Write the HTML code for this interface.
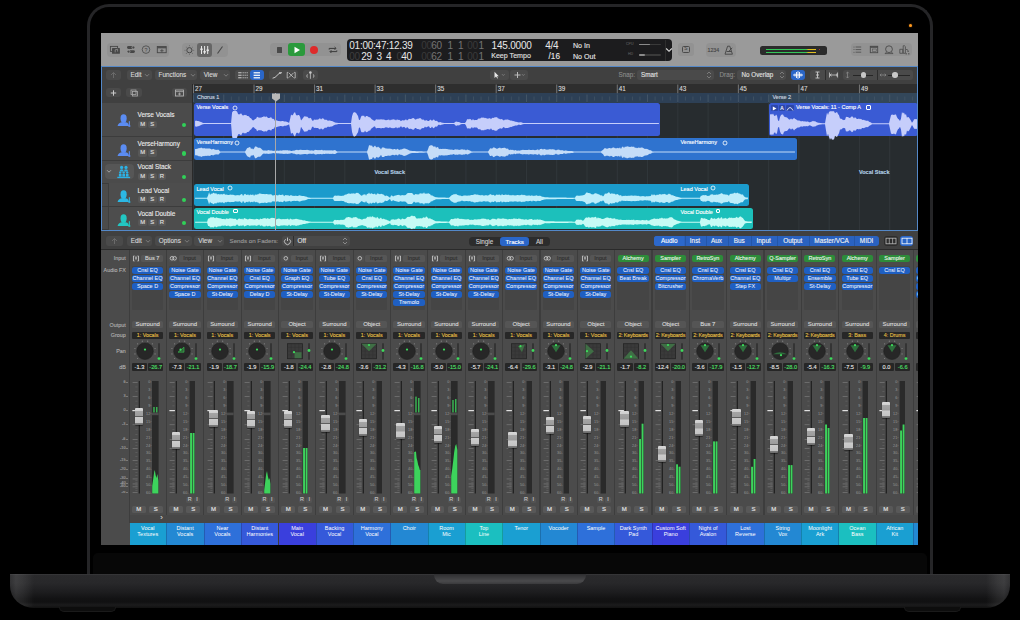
<!DOCTYPE html><html><head><meta charset="utf-8"><style>
*{margin:0;padding:0;box-sizing:border-box}
html,body{width:1020px;height:620px;overflow:hidden;background:#000;font-family:"Liberation Sans",sans-serif;position:relative}
.a{position:absolute;-webkit-text-stroke-width:.12px}
svg.a{overflow:visible}
</style></head><body>
<div class="a" style="left:10px;top:574px;width:1000px;height:34px;background:linear-gradient(180deg,#3c3c3e 0px,#2a2a2c 1.2px,#28282a 9px,#1d1d1f 18px,#121213 25px,#111112 28px,#1b1b1c 31px,#111 34px);border-radius:0 0 24px 24px/0 0 22px 22px;"></div>
<div class="a" style="left:10px;top:574px;width:1000px;height:34px;background:linear-gradient(90deg,rgba(255,255,255,.04) 0px,rgba(255,255,255,.1) 6px,rgba(255,255,255,.07) 13px,rgba(255,255,255,0) 24px,rgba(255,255,255,0) 976px,rgba(255,255,255,.07) 987px,rgba(255,255,255,.1) 994px,rgba(255,255,255,.04) 1000px);border-radius:0 0 24px 24px/0 0 22px 22px;"></div>
<div class="a" style="left:59px;top:607px;width:57px;height:5px;background:#0d0d0d;border-radius:0 0 6px 6px;border:1px solid #1a1a1a;border-top:none;"></div>
<div class="a" style="left:904px;top:607px;width:57px;height:5px;background:#0d0d0d;border-radius:0 0 6px 6px;border:1px solid #1a1a1a;border-top:none;"></div>
<div class="a" style="left:434px;top:574px;width:152px;height:10px;background:linear-gradient(180deg,#2e2e30,#4a4a4c 70%,#3a3a3c);border-radius:0 0 9px 9px;"></div>
<div class="a" style="left:87.2px;top:4.3px;width:845.6px;height:570px;background:#000;border:3.6px solid #252527;border-bottom:none;border-radius:22px 22px 0 0;"></div>
<div class="a" style="left:93px;top:553px;width:834px;height:21px;background:#070707;border-radius:5px 5px 0 0;"></div>
<div class="a" style="left:909px;top:23.7px;width:3.2px;height:3.2px;background:#ff9a1f;border-radius:50%;box-shadow:0 0 1.5px #a05a10;"></div>
<div class="a" style="left:0;top:0;width:918px;height:545px;overflow:hidden">
<div class="a" style="left:101px;top:33px;width:817px;height:512px;background:#3b3b3b;"></div>
<div class="a" style="left:101px;top:33px;width:817px;height:33px;background:#9a9a9a;"></div>
<div class="a" style="left:107px;top:43px;width:62px;height:13.8px;background:#929292;border-radius:4px;"></div>
<div class="a" style="left:181.7px;top:43px;width:46px;height:13.8px;background:#929292;border-radius:4px;"></div>
<div class="a" style="left:197.4px;top:43px;width:14.5px;height:13.5px;background:#666666;border-radius:3px;"></div>
<svg class="a" style="left:0;top:0" width="1020" height="70" viewBox="0 0 1020 70"><rect x="110.4" y="46.4" width="7.2" height="5" fill="none" stroke="#474747" stroke-width=".9"/><rect x="112" y="48" width="7.9" height="5.8" fill="#474747" rx=".6"/><path d="M115.2 52.4v-2.6l2.4-.6v2.4" fill="none" stroke="#a8a8a8" stroke-width=".6"/><rect x="127" y="46.1" width="7.9" height="2.8" rx="1.4" fill="#474747"/><rect x="127" y="50.2" width="7.9" height="2.8" rx="1.4" fill="#474747"/><circle cx="133.4" cy="47.5" r="1.5" fill="none" stroke="#9a9a9a" stroke-width=".8"/><circle cx="128.5" cy="51.6" r="1.5" fill="none" stroke="#9a9a9a" stroke-width=".8"/><circle cx="146" cy="49.6" r="3.8" fill="none" stroke="#474747" stroke-width=".8"/><text x="146" y="51.8" font-size="5.4" text-anchor="middle" fill="#474747" font-family="Liberation Sans">?</text><rect x="157.3" y="46.5" width="8.9" height="6.2" fill="none" stroke="#474747" stroke-width=".9"/><line x1="157.3" y1="47.7" x2="166.2" y2="47.7" stroke="#474747" stroke-width="1.2"/><path d="M160.2 50.7h3.4M161.9 49.1v3.2" stroke="#474747" stroke-width=".8"/><circle cx="189.4" cy="50.2" r="2.6" fill="none" stroke="#474747" stroke-width="1"/><circle cx="193.8" cy="50.2" r=".45" fill="#474747"/><circle cx="192.51" cy="53.31" r=".45" fill="#474747"/><circle cx="189.4" cy="54.6" r=".45" fill="#474747"/><circle cx="186.29" cy="53.31" r=".45" fill="#474747"/><circle cx="185" cy="50.2" r=".45" fill="#474747"/><circle cx="186.29" cy="47.09" r=".45" fill="#474747"/><circle cx="189.4" cy="45.8" r=".45" fill="#474747"/><circle cx="192.51" cy="47.09" r=".45" fill="#474747"/><line x1="201.5" y1="46" x2="201.5" y2="54" stroke="#e8e8e8" stroke-width="1"/><rect x="200.3" y="48.5" width="2.4" height="1.6" fill="#e8e8e8"/><line x1="204.6" y1="46" x2="204.6" y2="54" stroke="#e8e8e8" stroke-width="1"/><rect x="203.4" y="51" width="2.4" height="1.6" fill="#e8e8e8"/><line x1="207.7" y1="46" x2="207.7" y2="54" stroke="#e8e8e8" stroke-width="1"/><rect x="206.5" y="49.5" width="2.4" height="1.6" fill="#e8e8e8"/><line x1="217.5" y1="53.5" x2="222.5" y2="46.5" stroke="#474747" stroke-width="1.1"/></svg>
<div class="a" style="left:270.2px;top:43.3px;width:70.6px;height:13.2px;background:#929292;border-radius:4px;"></div>
<div class="a" style="left:276.8px;top:47.1px;width:5.6px;height:5.6px;background:#4a4a4a;border-radius:.5px;"></div>
<div class="a" style="left:288.4px;top:43.2px;width:16.6px;height:13px;background:#2a9a3c;border-radius:3px;"></div>
<svg class="a" style="left:293px;top:46px" width="8" height="8"><path d="M1.5 .8L7 4L1.5 7.2Z" fill="#fff"/></svg>
<div class="a" style="left:310.2px;top:45.6px;width:8.2px;height:8.2px;background:#de2a2a;border-radius:50%;"></div>
<svg class="a" style="left:328px;top:46px" width="10" height="8"><path d="M1.2 3.6V2.4h6.6M6.6 1L8 2.4L6.6 3.8M8.8 4.4v1.2H2.2M3.4 7L2 5.6L3.4 4.2" fill="none" stroke="#3a3a3a" stroke-width="1"/></svg>
<div class="a" style="left:346.9px;top:39.1px;width:325.1px;height:22px;background:#1c1c1e;border-radius:4px;"></div>
<div class="a" style="left:349.3px;top:40.9px;width:80px;height:10px;font-size:10px;color:#e8e8e8;font-weight:normal;text-align:left;line-height:10px;white-space:nowrap;letter-spacing:-0.25px;-webkit-text-stroke-width:0;">01:00:47:12.39</div>
<div class="a" style="left:349.3px;top:51.6px;width:80px;height:10px;font-size:10px;color:#3e3e3e;font-weight:normal;text-align:left;line-height:10px;white-space:nowrap;letter-spacing:-0.25px;-webkit-text-stroke-width:0;">00</div>
<div class="a" style="left:361.3px;top:51.6px;width:80px;height:10px;font-size:10px;color:#e8e8e8;font-weight:normal;text-align:left;line-height:10px;white-space:nowrap;letter-spacing:-0.25px;-webkit-text-stroke-width:0;">29</div>
<div class="a" style="left:376.4px;top:51.6px;width:80px;height:10px;font-size:10px;color:#e8e8e8;font-weight:normal;text-align:left;line-height:10px;white-space:nowrap;letter-spacing:-0.25px;-webkit-text-stroke-width:0;">3</div>
<div class="a" style="left:386px;top:51.6px;width:80px;height:10px;font-size:10px;color:#e8e8e8;font-weight:normal;text-align:left;line-height:10px;white-space:nowrap;letter-spacing:-0.25px;-webkit-text-stroke-width:0;">4</div>
<div class="a" style="left:396.6px;top:51.6px;width:80px;height:10px;font-size:10px;color:#3e3e3e;font-weight:normal;text-align:left;line-height:10px;white-space:nowrap;letter-spacing:-0.25px;-webkit-text-stroke-width:0;">0</div>
<div class="a" style="left:401.2px;top:51.6px;width:80px;height:10px;font-size:10px;color:#e8e8e8;font-weight:normal;text-align:left;line-height:10px;white-space:nowrap;letter-spacing:-0.25px;-webkit-text-stroke-width:0;">40</div>
<div class="a" style="left:421.3px;top:40.9px;width:80px;height:10px;font-size:10px;color:#3a3a3a;font-weight:normal;text-align:left;line-height:10px;white-space:nowrap;letter-spacing:-0.25px;-webkit-text-stroke-width:0;">00</div>
<div class="a" style="left:431.2px;top:40.9px;width:80px;height:10px;font-size:10px;color:#747474;font-weight:normal;text-align:left;line-height:10px;white-space:nowrap;letter-spacing:-0.25px;-webkit-text-stroke-width:0;">60</div>
<div class="a" style="left:447.6px;top:40.9px;width:80px;height:10px;font-size:10px;color:#747474;font-weight:normal;text-align:left;line-height:10px;white-space:nowrap;letter-spacing:-0.25px;-webkit-text-stroke-width:0;">1</div>
<div class="a" style="left:457.9px;top:40.9px;width:80px;height:10px;font-size:10px;color:#747474;font-weight:normal;text-align:left;line-height:10px;white-space:nowrap;letter-spacing:-0.25px;-webkit-text-stroke-width:0;">1</div>
<div class="a" style="left:467.2px;top:40.9px;width:80px;height:10px;font-size:10px;color:#3a3a3a;font-weight:normal;text-align:left;line-height:10px;white-space:nowrap;letter-spacing:-0.25px;-webkit-text-stroke-width:0;">00</div>
<div class="a" style="left:478.6px;top:40.9px;width:80px;height:10px;font-size:10px;color:#747474;font-weight:normal;text-align:left;line-height:10px;white-space:nowrap;letter-spacing:-0.25px;-webkit-text-stroke-width:0;">1</div>
<div class="a" style="left:421.3px;top:51.6px;width:80px;height:10px;font-size:10px;color:#3a3a3a;font-weight:normal;text-align:left;line-height:10px;white-space:nowrap;letter-spacing:-0.25px;-webkit-text-stroke-width:0;">00</div>
<div class="a" style="left:431.2px;top:51.6px;width:80px;height:10px;font-size:10px;color:#747474;font-weight:normal;text-align:left;line-height:10px;white-space:nowrap;letter-spacing:-0.25px;-webkit-text-stroke-width:0;">62</div>
<div class="a" style="left:447.6px;top:51.6px;width:80px;height:10px;font-size:10px;color:#747474;font-weight:normal;text-align:left;line-height:10px;white-space:nowrap;letter-spacing:-0.25px;-webkit-text-stroke-width:0;">1</div>
<div class="a" style="left:457.9px;top:51.6px;width:80px;height:10px;font-size:10px;color:#747474;font-weight:normal;text-align:left;line-height:10px;white-space:nowrap;letter-spacing:-0.25px;-webkit-text-stroke-width:0;">1</div>
<div class="a" style="left:467.2px;top:51.6px;width:80px;height:10px;font-size:10px;color:#3a3a3a;font-weight:normal;text-align:left;line-height:10px;white-space:nowrap;letter-spacing:-0.25px;-webkit-text-stroke-width:0;">00</div>
<div class="a" style="left:478.6px;top:51.6px;width:80px;height:10px;font-size:10px;color:#747474;font-weight:normal;text-align:left;line-height:10px;white-space:nowrap;letter-spacing:-0.25px;-webkit-text-stroke-width:0;">1</div>
<div class="a" style="left:491.6px;top:40.9px;width:80px;height:10px;font-size:10px;color:#e8e8e8;font-weight:normal;text-align:left;line-height:10px;white-space:nowrap;letter-spacing:-0.2px;-webkit-text-stroke-width:0;">145.0000</div>
<div class="a" style="left:491.2px;top:51.3px;width:42px;height:10px;font-size:7.1px;color:#e0e0e0;font-weight:normal;text-align:left;line-height:10px;white-space:nowrap;">Keep Tempo</div>
<div class="a" style="left:545.2px;top:40.9px;width:80px;height:10px;font-size:10px;color:#e8e8e8;font-weight:normal;text-align:left;line-height:10px;white-space:nowrap;letter-spacing:-0.25px;-webkit-text-stroke-width:0;">4/4</div>
<div class="a" style="left:548.6px;top:51.6px;width:16px;height:10px;font-size:8.2px;color:#e6e6e6;font-weight:normal;text-align:left;line-height:10px;white-space:nowrap;">/16</div>
<div class="a" style="left:573px;top:41.2px;width:40px;height:10px;font-size:7.1px;color:#e6e6e6;font-weight:normal;text-align:left;line-height:10px;white-space:nowrap;">No In</div>
<div class="a" style="left:573px;top:51.6px;width:40px;height:10px;font-size:7.1px;color:#e6e6e6;font-weight:normal;text-align:left;line-height:10px;white-space:nowrap;">No Out</div>
<div class="a" style="left:626px;top:40.8px;width:10px;height:6px;font-size:3.6px;color:#555;font-weight:normal;text-align:left;line-height:6px;white-space:nowrap;">CPU</div>
<div class="a" style="left:628px;top:51.2px;width:10px;height:6px;font-size:3.6px;color:#555;font-weight:normal;text-align:left;line-height:6px;white-space:nowrap;">HD</div>
<div class="a" style="left:639px;top:43.8px;width:22px;height:1.6px;background:#3a3a3a;border-radius:1px;"></div>
<div class="a" style="left:639px;top:43.8px;width:11px;height:1.6px;background:#8a8a8a;border-radius:1px;"></div>
<div class="a" style="left:639px;top:54.4px;width:22px;height:1.6px;background:#3a3a3a;border-radius:1px;"></div>
<div class="a" style="left:639px;top:54.4px;width:6px;height:1.6px;background:#8a8a8a;border-radius:1px;"></div>
<div class="a" style="left:664.5px;top:39.6px;width:1px;height:21px;background:#2e2e2e;"></div>
<svg class="a" style="left:665px;top:47px" width="8" height="6"><path d="M1.2 1.5L4 4.3L6.8 1.5" fill="none" stroke="#ddd" stroke-width="1.1"/></svg>
<div class="a" style="left:678px;top:42.8px;width:15.6px;height:13.2px;background:#929292;border-radius:3px;"></div>
<div class="a" style="left:681.6px;top:46.3px;width:8.4px;height:6.6px;border:.9px solid #4a4a4a;border-radius:1.5px;"></div>
<div class="a" style="left:681.6px;top:46.3px;width:8.4px;height:6.6px;font-size:4.8px;color:#4a4a4a;font-weight:normal;text-align:center;line-height:6.6px;white-space:nowrap;">S</div>
<div class="a" style="left:705.6px;top:43px;width:30.7px;height:13.5px;background:#929292;border-radius:4px;"></div>
<div class="a" style="left:707.6px;top:44px;width:14px;height:12px;font-size:5.3px;color:#444;font-weight:normal;text-align:left;line-height:12px;white-space:nowrap;letter-spacing:-.1px;">1234</div>
<svg class="a" style="left:724px;top:45px" width="11" height="11"><path d="M3.6 1.2h2.2L8.4 9.2H1Z" fill="none" stroke="#444" stroke-width=".9"/><path d="M2.6 6.5h4.4M4.7 6.5L8.2 2.8" stroke="#444" stroke-width=".9"/></svg>
<div class="a" style="left:760.2px;top:46.3px;width:66.7px;height:8.8px;background:#2b2b2b;border-radius:2.5px;"></div>
<div class="a" style="left:765.5px;top:48.7px;width:50px;height:1.5px;background:linear-gradient(90deg,#34c759 0,#34c759 80%,#e0c020 85%,#e0c020 100%);"></div>
<div class="a" style="left:765.5px;top:51.5px;width:50px;height:1.5px;background:linear-gradient(90deg,#34c759 0,#34c759 80%,#e0c020 85%,#e0c020 100%);"></div>
<div class="a" style="left:818.5px;top:48.7px;width:1.2px;height:1.5px;background:#a33;"></div>
<div class="a" style="left:850.8px;top:43.3px;width:61.2px;height:13px;background:#929292;border-radius:4px;"></div>
<svg class="a" style="left:850px;top:43px" width="64" height="14"><circle cx="4" cy="4" r=".5" fill="#4a4a4a"/><line x1="5.6" y1="4" x2="11.2" y2="4" stroke="#4a4a4a" stroke-width=".8"/><circle cx="4" cy="6.6" r=".5" fill="#4a4a4a"/><line x1="5.6" y1="6.6" x2="11.2" y2="6.6" stroke="#4a4a4a" stroke-width=".8"/><circle cx="4" cy="9.2" r=".5" fill="#4a4a4a"/><line x1="5.6" y1="9.2" x2="11.2" y2="9.2" stroke="#4a4a4a" stroke-width=".8"/><rect x="20.3" y="3.3" width="7.4" height="6.4" fill="none" stroke="#4a4a4a" stroke-width=".9"/><rect x="20.3" y="3.3" width="7.4" height="1.5" fill="#4a4a4a"/><rect x="22.6" y="6" width="3.6" height="2.4" fill="none" stroke="#4a4a4a" stroke-width=".5"/><circle cx="39" cy="6.2" r="3.4" fill="none" stroke="#4a4a4a" stroke-width=".9"/><path d="M34.8 10.6h8.4M36.4 9l-.9 1.6M41.6 9l.9 1.6" stroke="#4a4a4a" stroke-width=".8" fill="none"/><path d="M49.8 10.3V6.3h3v4ZM53.2 10.3V2.8q1.4-.6 2.2.8V10.3Z" fill="none" stroke="#4a4a4a" stroke-width=".8"/><path d="M56 6.3l2 .8" stroke="#4a4a4a" stroke-width=".8"/><rect x="57.4" y="7.6" width="1.4" height="1.2" fill="#4a4a4a"/><rect x="55.6" y="10.2" width="1.2" height="1.2" fill="#4a4a4a"/><rect x="58.2" y="10.2" width="1.2" height="1.2" fill="#4a4a4a"/></svg>
<div class="a" style="left:101px;top:66px;width:817px;height:165px;background:#262829;"></div>
<div class="a" style="left:101px;top:67px;width:817px;height:17px;background:#404040;"></div>
<div class="a" style="left:105.8px;top:70.2px;width:15.2px;height:9.8px;background:#4a4a4a;border-radius:3px;"></div>
<svg class="a" style="left:109px;top:71px" width="9" height="8"><path d="M4.5 7V1.5M2 4L4.5 1.5L7 4" fill="none" stroke="#6a6a6a" stroke-width="1"/></svg>
<div class="a" style="left:126.5px;top:70.2px;width:25.3px;height:9.8px;background:#4a4a4a;border-radius:3px;"></div><div class="a" style="left:130.5px;top:70.2px;width:15.3px;height:9.8px;font-size:6.4px;color:#d8d8d8;font-weight:normal;text-align:left;line-height:9.8px;white-space:nowrap;">Edit</div><svg class="a" style="left:144.3px;top:73.3px" width="6" height="5"><path d="M1 1.2L3 3.2L5 1.2" fill="none" stroke="#8a8a8a" stroke-width=".8"/></svg>
<div class="a" style="left:154.5px;top:70.2px;width:42.5px;height:9.8px;background:#4a4a4a;border-radius:3px;"></div><div class="a" style="left:158.5px;top:70.2px;width:32.5px;height:9.8px;font-size:6.4px;color:#d8d8d8;font-weight:normal;text-align:left;line-height:9.8px;white-space:nowrap;">Functions</div><svg class="a" style="left:189.5px;top:73.3px" width="6" height="5"><path d="M1 1.2L3 3.2L5 1.2" fill="none" stroke="#8a8a8a" stroke-width=".8"/></svg>
<div class="a" style="left:199.7px;top:70.2px;width:30.3px;height:9.8px;background:#4a4a4a;border-radius:3px;"></div><div class="a" style="left:203.7px;top:70.2px;width:20.3px;height:9.8px;font-size:6.4px;color:#d8d8d8;font-weight:normal;text-align:left;line-height:9.8px;white-space:nowrap;">View</div><svg class="a" style="left:222.5px;top:73.3px" width="6" height="5"><path d="M1 1.2L3 3.2L5 1.2" fill="none" stroke="#8a8a8a" stroke-width=".8"/></svg>
<div class="a" style="left:235px;top:70.2px;width:28.7px;height:9.8px;background:#4a4a4a;border-radius:3px;"></div>
<div class="a" style="left:249.6px;top:70.2px;width:14.1px;height:9.8px;background:#2a66c8;border-radius:3px;"></div>
<svg class="a" style="left:235px;top:70px" width="30" height="10"><rect x="3.2" y="2.2" width="3.4" height="1.1" fill="#c4c4c4"/><rect x="7.6" y="2.2" width="1.1" height="1.1" fill="#c4c4c4"/><rect x="9.6" y="2.2" width="1.1" height="1.1" fill="#c4c4c4"/><rect x="11.6" y="2.2" width="1.1" height="1.1" fill="#c4c4c4"/><rect x="3.2" y="4.7" width="3.4" height="1.1" fill="#c4c4c4"/><rect x="7.6" y="4.7" width="1.1" height="1.1" fill="#c4c4c4"/><rect x="9.6" y="4.7" width="1.1" height="1.1" fill="#c4c4c4"/><rect x="11.6" y="4.7" width="1.1" height="1.1" fill="#c4c4c4"/><rect x="3.2" y="7.2" width="3.4" height="1.1" fill="#c4c4c4"/><rect x="7.6" y="7.2" width="1.1" height="1.1" fill="#c4c4c4"/><rect x="9.6" y="7.2" width="1.1" height="1.1" fill="#c4c4c4"/><rect x="11.6" y="7.2" width="1.1" height="1.1" fill="#c4c4c4"/><rect x="18.6" y="2.2" width="6.4" height="1.2" fill="#fff"/><rect x="18.6" y="4.7" width="6.4" height="1.2" fill="#fff"/><rect x="18.6" y="7.2" width="6.4" height="1.2" fill="#fff"/></svg>
<div class="a" style="left:268.8px;top:70.2px;width:28.8px;height:9.8px;background:#4a4a4a;border-radius:3px;"></div>
<svg class="a" style="left:270px;top:70px" width="28" height="10"><path d="M2.6 8.2L5 7.4L9.2 3.4L12 2.6" fill="none" stroke="#c8c8c8" stroke-width="1"/><circle cx="10" cy="3" r=".9" fill="#c8c8c8"/><path d="M18.2 2.4h-1v5.6h1M24.2 2.4h1v5.6h-1M18.8 2.8l4.8 4.8M23.6 2.8l-4.8 4.8" fill="none" stroke="#c8c8c8" stroke-width=".8"/></svg>
<div class="a" style="left:303px;top:70.2px;width:14.8px;height:9.8px;background:#4a4a4a;border-radius:3px;"></div>
<svg class="a" style="left:303px;top:70px" width="15" height="10"><circle cx="7.4" cy="2.6" r="1.3" fill="#c8c8c8"/><path d="M7.4 3.6v5.2M4.4 4.4q-1.2 1.6 0 3.2M10.4 4.4q1.2 1.6 0 3.2" fill="none" stroke="#c8c8c8" stroke-width=".8"/></svg>
<div class="a" style="left:490px;top:70.2px;width:18.5px;height:9.8px;background:#4a4a4a;border-radius:3px;"></div>
<div class="a" style="left:510px;top:70.2px;width:18.3px;height:9.8px;background:#4a4a4a;border-radius:3px;"></div>
<svg class="a" style="left:490px;top:70px" width="40" height="10"><path d="M4.5 1.8L4.5 8L6 6.6L7.3 8.6L8 8.2L6.9 6.2L8.8 6.2Z" fill="#e8e8e8"/><path d="M12 4.2l1.3 1.3l1.3-1.3" fill="none" stroke="#888" stroke-width=".8"/><path d="M27.5 2v6M24.5 5h6" stroke="#bbb" stroke-width="1"/><path d="M32 4.2l1.3 1.3l1.3-1.3" fill="none" stroke="#888" stroke-width=".8"/></svg>
<div class="a" style="left:618.5px;top:70.2px;width:20px;height:9.8px;font-size:6.3px;color:#8a8a8a;font-weight:normal;text-align:left;line-height:9.8px;white-space:nowrap;">Snap:</div>
<div class="a" style="left:636.5px;top:70.2px;width:77px;height:9.8px;background:#4a4a4a;border-radius:3px;"></div>
<div class="a" style="left:641px;top:70.2px;width:40px;height:9.8px;font-size:6.3px;color:#e0e0e0;font-weight:normal;text-align:left;line-height:9.8px;white-space:nowrap;">Smart</div>
<svg class="a" style="left:706px;top:71px" width="6" height="8"><path d="M1 3L3 1L5 3M1 5L3 7L5 5" fill="none" stroke="#888" stroke-width=".8"/></svg>
<div class="a" style="left:719.5px;top:70.2px;width:20px;height:9.8px;font-size:6.3px;color:#8a8a8a;font-weight:normal;text-align:left;line-height:9.8px;white-space:nowrap;">Drag:</div>
<div class="a" style="left:737.3px;top:70.2px;width:48.7px;height:9.8px;background:#4a4a4a;border-radius:3px;"></div>
<div class="a" style="left:741.5px;top:70.2px;width:40px;height:9.8px;font-size:6.3px;color:#e0e0e0;font-weight:normal;text-align:left;line-height:9.8px;white-space:nowrap;">No Overlap</div>
<svg class="a" style="left:779px;top:71px" width="6" height="8"><path d="M1 3L3 1L5 3M1 5L3 7L5 5" fill="none" stroke="#888" stroke-width=".8"/></svg>
<div class="a" style="left:790.6px;top:70.2px;width:14.7px;height:9.8px;background:#2a66c8;border-radius:3px;"></div>
<svg class="a" style="left:791px;top:70px" width="14" height="10"><path d="M2 5h10M4 3.5v3M5.5 2v6M7 1.2v7.6M8.5 2v6M10 3.5v3" stroke="#fff" stroke-width=".9"/></svg>
<div class="a" style="left:810px;top:70.2px;width:29px;height:9.8px;background:#4a4a4a;border-radius:3px;"></div>
<div class="a" style="left:824.5px;top:70.2px;width:0.8px;height:9.8px;background:#2e2e2e;"></div>
<svg class="a" style="left:810px;top:70px" width="30" height="10"><path d="M5.5 2h4M5.5 8h4M7.5 2v6M6 5h3" fill="none" stroke="#ccc" stroke-width=".9"/><path d="M19.5 2.5v5M27.5 2.5v5M20 5h7M21.5 3.8L20 5l1.5 1.2M26 3.8L27.5 5L26 6.2" fill="none" stroke="#ccc" stroke-width=".8"/></svg>
<div class="a" style="left:843.3px;top:70.2px;width:70.2px;height:9.8px;background:#4a4a4a;border-radius:3px;"></div>
<div class="a" style="left:877px;top:70.2px;width:0.8px;height:9.8px;background:#2e2e2e;"></div>
<div class="a" style="left:853px;top:74.6px;width:20px;height:1px;background:#262626;"></div>
<div class="a" style="left:888px;top:74.6px;width:22px;height:1px;background:#262626;"></div>
<div class="a" style="left:860.5px;top:72.3px;width:5.6px;height:5.6px;background:#c8c8c8;border-radius:50%;"></div>
<div class="a" style="left:892px;top:72.3px;width:5.6px;height:5.6px;background:#c8c8c8;border-radius:50%;"></div>
<svg class="a" style="left:843px;top:70px" width="72" height="10"><path d="M4.5 2v6M3.2 3.3L4.5 2L5.8 3.3M3.2 6.7L4.5 8L5.8 6.7" fill="none" stroke="#888" stroke-width=".8"/><path d="M37 5h6M38.3 3.7L37 5L38.3 6.3M41.7 3.7L43 5L41.7 6.3" fill="none" stroke="#888" stroke-width=".8"/></svg>
<div class="a" style="left:102px;top:84px;width:91px;height:18.7px;background:#404040;"></div>
<div class="a" style="left:106.3px;top:88.2px;width:14.9px;height:8.8px;background:#4a4a4a;border-radius:3px;"></div>
<svg class="a" style="left:109px;top:89px" width="9" height="8"><path d="M4.5 1.3v5.4M1.8 4h5.4" stroke="#ccc" stroke-width="1"/></svg>
<div class="a" style="left:126.4px;top:88.2px;width:15.2px;height:8.8px;background:#4a4a4a;border-radius:3px;"></div>
<svg class="a" style="left:129px;top:89px" width="10" height="8"><rect x="2" y="1" width="5" height="4.5" fill="none" stroke="#aaa" stroke-width=".8"/><rect x="3.5" y="2.5" width="5" height="4.5" fill="none" stroke="#aaa" stroke-width=".8"/></svg>
<div class="a" style="left:172.2px;top:88.2px;width:14.8px;height:8.8px;background:#4a4a4a;border-radius:3px;"></div>
<svg class="a" style="left:174px;top:89px" width="11" height="8"><rect x="1.5" y="1" width="8" height="6" fill="none" stroke="#bbb" stroke-width=".8"/><path d="M1.5 2.6h8M5.5 3.5v3M4 5h3" stroke="#bbb" stroke-width=".7"/></svg>
<div class="a" style="left:102px;top:102.7px;width:91px;height:127.3px;background:#4b4b4b;"></div>
<div class="a" style="left:102px;top:136.2px;width:91px;height:0.8px;background:#3c3c3c;"></div>
<svg class="a" style="left:116.5px;top:113.2px" width="15" height="15"><g fill="#5b8cf2"><ellipse cx="6.6" cy="5.4" rx="3.1" ry="4.2"/><path d="M.6 12.9C1 10.2 3.4 9 6.6 9C9.8 9 11.6 10 12 12.9Z"/><rect x="11.8" y="8.2" width="1.1" height="5.4"/><rect x="11.3" y="12.4" width="2.1" height="1.2"/></g></svg>
<div class="a" style="left:137.5px;top:111.2px;width:50px;height:8px;font-size:6.5px;color:#ececec;font-weight:normal;text-align:left;line-height:8px;white-space:nowrap;letter-spacing:-.05px;-webkit-text-stroke:.1px #ececec;">Verse Vocals</div>
<div class="a" style="left:138.2px;top:120.6px;width:8.8px;height:7.2px;background:#575757;border-radius:2px;"></div>
<div class="a" style="left:138.2px;top:120.6px;width:8.8px;height:7.2px;font-size:5.9px;color:#e0e0e0;font-weight:normal;text-align:center;line-height:7.2px;white-space:nowrap;-webkit-text-stroke:.12px #e0e0e0;">M</div>
<div class="a" style="left:147.9px;top:120.6px;width:8.8px;height:7.2px;background:#575757;border-radius:2px;"></div>
<div class="a" style="left:147.9px;top:120.6px;width:8.8px;height:7.2px;font-size:5.9px;color:#e0e0e0;font-weight:normal;text-align:center;line-height:7.2px;white-space:nowrap;-webkit-text-stroke:.12px #e0e0e0;">S</div>
<div class="a" style="left:182.2px;top:122.6px;width:4.2px;height:4.2px;background:#30d158;border-radius:50%;"></div>
<div class="a" style="left:102px;top:159.6px;width:91px;height:0.8px;background:#3c3c3c;"></div>
<svg class="a" style="left:116.5px;top:143px" width="15" height="15"><g fill="#5b8cf2"><ellipse cx="6.6" cy="5.4" rx="3.1" ry="4.2"/><path d="M.6 12.9C1 10.2 3.4 9 6.6 9C9.8 9 11.6 10 12 12.9Z"/><rect x="11.8" y="8.2" width="1.1" height="5.4"/><rect x="11.3" y="12.4" width="2.1" height="1.2"/></g></svg>
<div class="a" style="left:137.5px;top:140px;width:50px;height:8px;font-size:6.5px;color:#ececec;font-weight:normal;text-align:left;line-height:8px;white-space:nowrap;letter-spacing:-.05px;-webkit-text-stroke:.1px #ececec;">VerseHarmony</div>
<div class="a" style="left:138.2px;top:149.4px;width:8.8px;height:7.2px;background:#575757;border-radius:2px;"></div>
<div class="a" style="left:138.2px;top:149.4px;width:8.8px;height:7.2px;font-size:5.9px;color:#e0e0e0;font-weight:normal;text-align:center;line-height:7.2px;white-space:nowrap;-webkit-text-stroke:.12px #e0e0e0;">M</div>
<div class="a" style="left:147.9px;top:149.4px;width:8.8px;height:7.2px;background:#575757;border-radius:2px;"></div>
<div class="a" style="left:147.9px;top:149.4px;width:8.8px;height:7.2px;font-size:5.9px;color:#e0e0e0;font-weight:normal;text-align:center;line-height:7.2px;white-space:nowrap;-webkit-text-stroke:.12px #e0e0e0;">S</div>
<div class="a" style="left:182.2px;top:151.4px;width:4.2px;height:4.2px;background:#30d158;border-radius:50%;"></div>
<div class="a" style="left:102px;top:182.7px;width:91px;height:0.8px;background:#3c3c3c;"></div>
<div class="a" style="left:105.2px;top:164.1px;width:28.5px;height:14.8px;background:#565656;border-radius:4px;"></div>
<svg class="a" style="left:106px;top:169px" width="6" height="5"><path d="M1 1.2L3 3.2L5 1.2" fill="none" stroke="#aaa" stroke-width=".9"/></svg>
<svg class="a" style="left:117px;top:165px" width="14" height="14"><g fill="#2cb2e6"><circle cx="4.6" cy="2.4" r="1.6"/><circle cx="9" cy="2.4" r="1.6"/><path d="M2.6 6.6Q2.6 4.3 4.6 4.3T6.6 6.6Z"/><path d="M7 6.6Q7 4.3 9 4.3T11 6.6Z"/><circle cx="3.2" cy="7.6" r="1.2"/><circle cx="6.7" cy="7.6" r="1.2"/><circle cx="10.2" cy="7.6" r="1.2"/><rect x="1.9" y="9" width="2.6" height="2.6"/><rect x="5.4" y="9" width="2.6" height="2.6"/><rect x="8.9" y="9" width="2.6" height="2.6"/><rect x="0.3" y="11.8" width="12.8" height="1.3"/></g></svg>
<div class="a" style="left:137.5px;top:163.4px;width:50px;height:8px;font-size:6.5px;color:#ececec;font-weight:normal;text-align:left;line-height:8px;white-space:nowrap;letter-spacing:-.05px;-webkit-text-stroke:.1px #ececec;">Vocal Stack</div>
<div class="a" style="left:138.2px;top:172.8px;width:8.8px;height:7.2px;background:#575757;border-radius:2px;"></div>
<div class="a" style="left:138.2px;top:172.8px;width:8.8px;height:7.2px;font-size:5.9px;color:#e0e0e0;font-weight:normal;text-align:center;line-height:7.2px;white-space:nowrap;-webkit-text-stroke:.12px #e0e0e0;">M</div>
<div class="a" style="left:147.9px;top:172.8px;width:8.8px;height:7.2px;background:#575757;border-radius:2px;"></div>
<div class="a" style="left:147.9px;top:172.8px;width:8.8px;height:7.2px;font-size:5.9px;color:#e0e0e0;font-weight:normal;text-align:center;line-height:7.2px;white-space:nowrap;-webkit-text-stroke:.12px #e0e0e0;">S</div>
<div class="a" style="left:157.6px;top:172.8px;width:8.8px;height:7.2px;background:#575757;border-radius:2px;"></div>
<div class="a" style="left:157.6px;top:172.8px;width:8.8px;height:7.2px;font-size:5.9px;color:#e0e0e0;font-weight:normal;text-align:center;line-height:7.2px;white-space:nowrap;-webkit-text-stroke:.12px #e0e0e0;">R</div>
<div class="a" style="left:182.2px;top:174.8px;width:4.2px;height:4.2px;background:#30d158;border-radius:50%;"></div>
<div class="a" style="left:102px;top:205.9px;width:91px;height:0.8px;background:#3c3c3c;"></div>
<div class="a" style="left:107.6px;top:183.3px;width:84.4px;height:23.2px;background:#4d4d4d;border-left:1px solid #3e3e3e;"></div>
<svg class="a" style="left:116.5px;top:189.4px" width="15" height="15"><g fill="#2cb8e4"><ellipse cx="6.6" cy="5.4" rx="3.1" ry="4.2"/><path d="M.6 12.9C1 10.2 3.4 9 6.6 9C9.8 9 11.6 10 12 12.9Z"/><rect x="11.8" y="8.2" width="1.1" height="5.4"/><rect x="11.3" y="12.4" width="2.1" height="1.2"/></g></svg>
<div class="a" style="left:137.5px;top:186.5px;width:50px;height:8px;font-size:6.5px;color:#ececec;font-weight:normal;text-align:left;line-height:8px;white-space:nowrap;letter-spacing:-.05px;-webkit-text-stroke:.1px #ececec;">Lead Vocal</div>
<div class="a" style="left:138.2px;top:195.9px;width:8.8px;height:7.2px;background:#575757;border-radius:2px;"></div>
<div class="a" style="left:138.2px;top:195.9px;width:8.8px;height:7.2px;font-size:5.9px;color:#e0e0e0;font-weight:normal;text-align:center;line-height:7.2px;white-space:nowrap;-webkit-text-stroke:.12px #e0e0e0;">M</div>
<div class="a" style="left:147.9px;top:195.9px;width:8.8px;height:7.2px;background:#575757;border-radius:2px;"></div>
<div class="a" style="left:147.9px;top:195.9px;width:8.8px;height:7.2px;font-size:5.9px;color:#e0e0e0;font-weight:normal;text-align:center;line-height:7.2px;white-space:nowrap;-webkit-text-stroke:.12px #e0e0e0;">S</div>
<div class="a" style="left:157.6px;top:195.9px;width:8.8px;height:7.2px;background:#575757;border-radius:2px;"></div>
<div class="a" style="left:157.6px;top:195.9px;width:8.8px;height:7.2px;font-size:5.9px;color:#e0e0e0;font-weight:normal;text-align:center;line-height:7.2px;white-space:nowrap;-webkit-text-stroke:.12px #e0e0e0;">R</div>
<div class="a" style="left:182.2px;top:197.9px;width:4.2px;height:4.2px;background:#30d158;border-radius:50%;"></div>
<div class="a" style="left:102px;top:229.2px;width:91px;height:0.8px;background:#3c3c3c;"></div>
<div class="a" style="left:107.6px;top:206.5px;width:84.4px;height:23.3px;background:#4d4d4d;border-left:1px solid #3e3e3e;"></div>
<svg class="a" style="left:116.5px;top:212.65px" width="15" height="15"><g fill="#22c6c2"><ellipse cx="6.6" cy="5.4" rx="3.1" ry="4.2"/><path d="M.6 12.9C1 10.2 3.4 9 6.6 9C9.8 9 11.6 10 12 12.9Z"/><rect x="11.8" y="8.2" width="1.1" height="5.4"/><rect x="11.3" y="12.4" width="2.1" height="1.2"/></g></svg>
<div class="a" style="left:137.5px;top:209.7px;width:50px;height:8px;font-size:6.5px;color:#ececec;font-weight:normal;text-align:left;line-height:8px;white-space:nowrap;letter-spacing:-.05px;-webkit-text-stroke:.1px #ececec;">Vocal Double</div>
<div class="a" style="left:138.2px;top:219.1px;width:8.8px;height:7.2px;background:#575757;border-radius:2px;"></div>
<div class="a" style="left:138.2px;top:219.1px;width:8.8px;height:7.2px;font-size:5.9px;color:#e0e0e0;font-weight:normal;text-align:center;line-height:7.2px;white-space:nowrap;-webkit-text-stroke:.12px #e0e0e0;">M</div>
<div class="a" style="left:147.9px;top:219.1px;width:8.8px;height:7.2px;background:#575757;border-radius:2px;"></div>
<div class="a" style="left:147.9px;top:219.1px;width:8.8px;height:7.2px;font-size:5.9px;color:#e0e0e0;font-weight:normal;text-align:center;line-height:7.2px;white-space:nowrap;-webkit-text-stroke:.12px #e0e0e0;">S</div>
<div class="a" style="left:157.6px;top:219.1px;width:8.8px;height:7.2px;background:#575757;border-radius:2px;"></div>
<div class="a" style="left:157.6px;top:219.1px;width:8.8px;height:7.2px;font-size:5.9px;color:#e0e0e0;font-weight:normal;text-align:center;line-height:7.2px;white-space:nowrap;-webkit-text-stroke:.12px #e0e0e0;">R</div>
<div class="a" style="left:182.2px;top:221.1px;width:4.2px;height:4.2px;background:#30d158;border-radius:50%;"></div>
<div class="a" style="left:192px;top:84px;width:0.8px;height:146px;background:#2a2a2a;"></div>
<div class="a" style="left:192.8px;top:84px;width:725.2px;height:8.6px;background:#2e2e2e;"></div>
<div class="a" style="left:192.8px;top:92.6px;width:725.2px;height:10.1px;background:#2d4056;"></div>
<div class="a" style="left:769px;top:93.3px;width:149px;height:9.4px;background:#33475a;border-radius:2px 0 0 0;"></div>
<div class="a" style="left:192.8px;top:102.7px;width:725.2px;height:127.5px;background:#272c2f;"></div>
<svg class="a" style="left:0;top:0" width="1020" height="235"><line x1="193.5" y1="102.7" x2="193.5" y2="230" stroke="#31373b" stroke-width="1"/><line x1="193.5" y1="84.5" x2="193.5" y2="93.3" stroke="#8a8a8a" stroke-width=".8"/><line x1="201.07" y1="96.5" x2="201.07" y2="100.5" stroke="#4a5a6a" stroke-width=".6"/><line x1="208.63" y1="96.5" x2="208.63" y2="100.5" stroke="#4a5a6a" stroke-width=".6"/><line x1="216.2" y1="96.5" x2="216.2" y2="100.5" stroke="#4a5a6a" stroke-width=".6"/><line x1="193.5" y1="94.5" x2="193.5" y2="102" stroke="#4e5e6e" stroke-width=".7"/><line x1="223.77" y1="102.7" x2="223.77" y2="230" stroke="#31373b" stroke-width="1"/><line x1="231.34" y1="96.5" x2="231.34" y2="100.5" stroke="#4a5a6a" stroke-width=".6"/><line x1="238.91" y1="96.5" x2="238.91" y2="100.5" stroke="#4a5a6a" stroke-width=".6"/><line x1="246.47" y1="96.5" x2="246.47" y2="100.5" stroke="#4a5a6a" stroke-width=".6"/><line x1="223.77" y1="94.5" x2="223.77" y2="102" stroke="#4e5e6e" stroke-width=".7"/><line x1="254.04" y1="102.7" x2="254.04" y2="230" stroke="#31373b" stroke-width="1"/><line x1="254.04" y1="84.5" x2="254.04" y2="93.3" stroke="#8a8a8a" stroke-width=".8"/><line x1="261.61" y1="96.5" x2="261.61" y2="100.5" stroke="#4a5a6a" stroke-width=".6"/><line x1="269.18" y1="96.5" x2="269.18" y2="100.5" stroke="#4a5a6a" stroke-width=".6"/><line x1="276.74" y1="96.5" x2="276.74" y2="100.5" stroke="#4a5a6a" stroke-width=".6"/><line x1="254.04" y1="94.5" x2="254.04" y2="102" stroke="#4e5e6e" stroke-width=".7"/><line x1="284.31" y1="102.7" x2="284.31" y2="230" stroke="#31373b" stroke-width="1"/><line x1="291.88" y1="96.5" x2="291.88" y2="100.5" stroke="#4a5a6a" stroke-width=".6"/><line x1="299.44" y1="96.5" x2="299.44" y2="100.5" stroke="#4a5a6a" stroke-width=".6"/><line x1="307.01" y1="96.5" x2="307.01" y2="100.5" stroke="#4a5a6a" stroke-width=".6"/><line x1="284.31" y1="94.5" x2="284.31" y2="102" stroke="#4e5e6e" stroke-width=".7"/><line x1="314.58" y1="102.7" x2="314.58" y2="230" stroke="#31373b" stroke-width="1"/><line x1="314.58" y1="84.5" x2="314.58" y2="93.3" stroke="#8a8a8a" stroke-width=".8"/><line x1="322.15" y1="96.5" x2="322.15" y2="100.5" stroke="#4a5a6a" stroke-width=".6"/><line x1="329.71" y1="96.5" x2="329.71" y2="100.5" stroke="#4a5a6a" stroke-width=".6"/><line x1="337.28" y1="96.5" x2="337.28" y2="100.5" stroke="#4a5a6a" stroke-width=".6"/><line x1="314.58" y1="94.5" x2="314.58" y2="102" stroke="#4e5e6e" stroke-width=".7"/><line x1="344.85" y1="102.7" x2="344.85" y2="230" stroke="#31373b" stroke-width="1"/><line x1="352.42" y1="96.5" x2="352.42" y2="100.5" stroke="#4a5a6a" stroke-width=".6"/><line x1="359.99" y1="96.5" x2="359.99" y2="100.5" stroke="#4a5a6a" stroke-width=".6"/><line x1="367.55" y1="96.5" x2="367.55" y2="100.5" stroke="#4a5a6a" stroke-width=".6"/><line x1="344.85" y1="94.5" x2="344.85" y2="102" stroke="#4e5e6e" stroke-width=".7"/><line x1="375.12" y1="102.7" x2="375.12" y2="230" stroke="#31373b" stroke-width="1"/><line x1="375.12" y1="84.5" x2="375.12" y2="93.3" stroke="#8a8a8a" stroke-width=".8"/><line x1="382.69" y1="96.5" x2="382.69" y2="100.5" stroke="#4a5a6a" stroke-width=".6"/><line x1="390.25" y1="96.5" x2="390.25" y2="100.5" stroke="#4a5a6a" stroke-width=".6"/><line x1="397.82" y1="96.5" x2="397.82" y2="100.5" stroke="#4a5a6a" stroke-width=".6"/><line x1="375.12" y1="94.5" x2="375.12" y2="102" stroke="#4e5e6e" stroke-width=".7"/><line x1="405.39" y1="102.7" x2="405.39" y2="230" stroke="#31373b" stroke-width="1"/><line x1="412.96" y1="96.5" x2="412.96" y2="100.5" stroke="#4a5a6a" stroke-width=".6"/><line x1="420.52" y1="96.5" x2="420.52" y2="100.5" stroke="#4a5a6a" stroke-width=".6"/><line x1="428.09" y1="96.5" x2="428.09" y2="100.5" stroke="#4a5a6a" stroke-width=".6"/><line x1="405.39" y1="94.5" x2="405.39" y2="102" stroke="#4e5e6e" stroke-width=".7"/><line x1="435.66" y1="102.7" x2="435.66" y2="230" stroke="#31373b" stroke-width="1"/><line x1="435.66" y1="84.5" x2="435.66" y2="93.3" stroke="#8a8a8a" stroke-width=".8"/><line x1="443.23" y1="96.5" x2="443.23" y2="100.5" stroke="#4a5a6a" stroke-width=".6"/><line x1="450.79" y1="96.5" x2="450.79" y2="100.5" stroke="#4a5a6a" stroke-width=".6"/><line x1="458.36" y1="96.5" x2="458.36" y2="100.5" stroke="#4a5a6a" stroke-width=".6"/><line x1="435.66" y1="94.5" x2="435.66" y2="102" stroke="#4e5e6e" stroke-width=".7"/><line x1="465.93" y1="102.7" x2="465.93" y2="230" stroke="#31373b" stroke-width="1"/><line x1="473.5" y1="96.5" x2="473.5" y2="100.5" stroke="#4a5a6a" stroke-width=".6"/><line x1="481.06" y1="96.5" x2="481.06" y2="100.5" stroke="#4a5a6a" stroke-width=".6"/><line x1="488.63" y1="96.5" x2="488.63" y2="100.5" stroke="#4a5a6a" stroke-width=".6"/><line x1="465.93" y1="94.5" x2="465.93" y2="102" stroke="#4e5e6e" stroke-width=".7"/><line x1="496.2" y1="102.7" x2="496.2" y2="230" stroke="#31373b" stroke-width="1"/><line x1="496.2" y1="84.5" x2="496.2" y2="93.3" stroke="#8a8a8a" stroke-width=".8"/><line x1="503.77" y1="96.5" x2="503.77" y2="100.5" stroke="#4a5a6a" stroke-width=".6"/><line x1="511.33" y1="96.5" x2="511.33" y2="100.5" stroke="#4a5a6a" stroke-width=".6"/><line x1="518.9" y1="96.5" x2="518.9" y2="100.5" stroke="#4a5a6a" stroke-width=".6"/><line x1="496.2" y1="94.5" x2="496.2" y2="102" stroke="#4e5e6e" stroke-width=".7"/><line x1="526.47" y1="102.7" x2="526.47" y2="230" stroke="#31373b" stroke-width="1"/><line x1="534.04" y1="96.5" x2="534.04" y2="100.5" stroke="#4a5a6a" stroke-width=".6"/><line x1="541.61" y1="96.5" x2="541.61" y2="100.5" stroke="#4a5a6a" stroke-width=".6"/><line x1="549.17" y1="96.5" x2="549.17" y2="100.5" stroke="#4a5a6a" stroke-width=".6"/><line x1="526.47" y1="94.5" x2="526.47" y2="102" stroke="#4e5e6e" stroke-width=".7"/><line x1="556.74" y1="102.7" x2="556.74" y2="230" stroke="#31373b" stroke-width="1"/><line x1="556.74" y1="84.5" x2="556.74" y2="93.3" stroke="#8a8a8a" stroke-width=".8"/><line x1="564.31" y1="96.5" x2="564.31" y2="100.5" stroke="#4a5a6a" stroke-width=".6"/><line x1="571.88" y1="96.5" x2="571.88" y2="100.5" stroke="#4a5a6a" stroke-width=".6"/><line x1="579.44" y1="96.5" x2="579.44" y2="100.5" stroke="#4a5a6a" stroke-width=".6"/><line x1="556.74" y1="94.5" x2="556.74" y2="102" stroke="#4e5e6e" stroke-width=".7"/><line x1="587.01" y1="102.7" x2="587.01" y2="230" stroke="#31373b" stroke-width="1"/><line x1="594.58" y1="96.5" x2="594.58" y2="100.5" stroke="#4a5a6a" stroke-width=".6"/><line x1="602.14" y1="96.5" x2="602.14" y2="100.5" stroke="#4a5a6a" stroke-width=".6"/><line x1="609.71" y1="96.5" x2="609.71" y2="100.5" stroke="#4a5a6a" stroke-width=".6"/><line x1="587.01" y1="94.5" x2="587.01" y2="102" stroke="#4e5e6e" stroke-width=".7"/><line x1="617.28" y1="102.7" x2="617.28" y2="230" stroke="#31373b" stroke-width="1"/><line x1="617.28" y1="84.5" x2="617.28" y2="93.3" stroke="#8a8a8a" stroke-width=".8"/><line x1="624.85" y1="96.5" x2="624.85" y2="100.5" stroke="#4a5a6a" stroke-width=".6"/><line x1="632.41" y1="96.5" x2="632.41" y2="100.5" stroke="#4a5a6a" stroke-width=".6"/><line x1="639.98" y1="96.5" x2="639.98" y2="100.5" stroke="#4a5a6a" stroke-width=".6"/><line x1="617.28" y1="94.5" x2="617.28" y2="102" stroke="#4e5e6e" stroke-width=".7"/><line x1="647.55" y1="102.7" x2="647.55" y2="230" stroke="#31373b" stroke-width="1"/><line x1="655.12" y1="96.5" x2="655.12" y2="100.5" stroke="#4a5a6a" stroke-width=".6"/><line x1="662.68" y1="96.5" x2="662.68" y2="100.5" stroke="#4a5a6a" stroke-width=".6"/><line x1="670.25" y1="96.5" x2="670.25" y2="100.5" stroke="#4a5a6a" stroke-width=".6"/><line x1="647.55" y1="94.5" x2="647.55" y2="102" stroke="#4e5e6e" stroke-width=".7"/><line x1="677.82" y1="102.7" x2="677.82" y2="230" stroke="#31373b" stroke-width="1"/><line x1="677.82" y1="84.5" x2="677.82" y2="93.3" stroke="#8a8a8a" stroke-width=".8"/><line x1="685.39" y1="96.5" x2="685.39" y2="100.5" stroke="#4a5a6a" stroke-width=".6"/><line x1="692.95" y1="96.5" x2="692.95" y2="100.5" stroke="#4a5a6a" stroke-width=".6"/><line x1="700.52" y1="96.5" x2="700.52" y2="100.5" stroke="#4a5a6a" stroke-width=".6"/><line x1="677.82" y1="94.5" x2="677.82" y2="102" stroke="#4e5e6e" stroke-width=".7"/><line x1="708.09" y1="102.7" x2="708.09" y2="230" stroke="#31373b" stroke-width="1"/><line x1="715.66" y1="96.5" x2="715.66" y2="100.5" stroke="#4a5a6a" stroke-width=".6"/><line x1="723.23" y1="96.5" x2="723.23" y2="100.5" stroke="#4a5a6a" stroke-width=".6"/><line x1="730.79" y1="96.5" x2="730.79" y2="100.5" stroke="#4a5a6a" stroke-width=".6"/><line x1="708.09" y1="94.5" x2="708.09" y2="102" stroke="#4e5e6e" stroke-width=".7"/><line x1="738.36" y1="102.7" x2="738.36" y2="230" stroke="#31373b" stroke-width="1"/><line x1="738.36" y1="84.5" x2="738.36" y2="93.3" stroke="#8a8a8a" stroke-width=".8"/><line x1="745.93" y1="96.5" x2="745.93" y2="100.5" stroke="#4a5a6a" stroke-width=".6"/><line x1="753.5" y1="96.5" x2="753.5" y2="100.5" stroke="#4a5a6a" stroke-width=".6"/><line x1="761.06" y1="96.5" x2="761.06" y2="100.5" stroke="#4a5a6a" stroke-width=".6"/><line x1="738.36" y1="94.5" x2="738.36" y2="102" stroke="#4e5e6e" stroke-width=".7"/><line x1="768.63" y1="102.7" x2="768.63" y2="230" stroke="#31373b" stroke-width="1"/><line x1="776.2" y1="96.5" x2="776.2" y2="100.5" stroke="#4a5a6a" stroke-width=".6"/><line x1="783.76" y1="96.5" x2="783.76" y2="100.5" stroke="#4a5a6a" stroke-width=".6"/><line x1="791.33" y1="96.5" x2="791.33" y2="100.5" stroke="#4a5a6a" stroke-width=".6"/><line x1="768.63" y1="94.5" x2="768.63" y2="102" stroke="#4e5e6e" stroke-width=".7"/><line x1="798.9" y1="102.7" x2="798.9" y2="230" stroke="#31373b" stroke-width="1"/><line x1="798.9" y1="84.5" x2="798.9" y2="93.3" stroke="#8a8a8a" stroke-width=".8"/><line x1="806.47" y1="96.5" x2="806.47" y2="100.5" stroke="#4a5a6a" stroke-width=".6"/><line x1="814.03" y1="96.5" x2="814.03" y2="100.5" stroke="#4a5a6a" stroke-width=".6"/><line x1="821.6" y1="96.5" x2="821.6" y2="100.5" stroke="#4a5a6a" stroke-width=".6"/><line x1="798.9" y1="94.5" x2="798.9" y2="102" stroke="#4e5e6e" stroke-width=".7"/><line x1="829.17" y1="102.7" x2="829.17" y2="230" stroke="#31373b" stroke-width="1"/><line x1="836.74" y1="96.5" x2="836.74" y2="100.5" stroke="#4a5a6a" stroke-width=".6"/><line x1="844.3" y1="96.5" x2="844.3" y2="100.5" stroke="#4a5a6a" stroke-width=".6"/><line x1="851.87" y1="96.5" x2="851.87" y2="100.5" stroke="#4a5a6a" stroke-width=".6"/><line x1="829.17" y1="94.5" x2="829.17" y2="102" stroke="#4e5e6e" stroke-width=".7"/><line x1="859.44" y1="102.7" x2="859.44" y2="230" stroke="#31373b" stroke-width="1"/><line x1="859.44" y1="84.5" x2="859.44" y2="93.3" stroke="#8a8a8a" stroke-width=".8"/><line x1="867.01" y1="96.5" x2="867.01" y2="100.5" stroke="#4a5a6a" stroke-width=".6"/><line x1="874.57" y1="96.5" x2="874.57" y2="100.5" stroke="#4a5a6a" stroke-width=".6"/><line x1="882.14" y1="96.5" x2="882.14" y2="100.5" stroke="#4a5a6a" stroke-width=".6"/><line x1="859.44" y1="94.5" x2="859.44" y2="102" stroke="#4e5e6e" stroke-width=".7"/><line x1="889.71" y1="102.7" x2="889.71" y2="230" stroke="#31373b" stroke-width="1"/><line x1="897.28" y1="96.5" x2="897.28" y2="100.5" stroke="#4a5a6a" stroke-width=".6"/><line x1="904.85" y1="96.5" x2="904.85" y2="100.5" stroke="#4a5a6a" stroke-width=".6"/><line x1="912.41" y1="96.5" x2="912.41" y2="100.5" stroke="#4a5a6a" stroke-width=".6"/><line x1="889.71" y1="94.5" x2="889.71" y2="102" stroke="#4e5e6e" stroke-width=".7"/></svg>
<div class="a" style="left:195px;top:84px;width:20px;height:9.3px;font-size:6.3px;color:#d8d8d8;font-weight:normal;text-align:left;line-height:9.3px;white-space:nowrap;">27</div>
<div class="a" style="left:255.54px;top:84px;width:20px;height:9.3px;font-size:6.3px;color:#d8d8d8;font-weight:normal;text-align:left;line-height:9.3px;white-space:nowrap;">29</div>
<div class="a" style="left:316.08px;top:84px;width:20px;height:9.3px;font-size:6.3px;color:#d8d8d8;font-weight:normal;text-align:left;line-height:9.3px;white-space:nowrap;">31</div>
<div class="a" style="left:376.62px;top:84px;width:20px;height:9.3px;font-size:6.3px;color:#d8d8d8;font-weight:normal;text-align:left;line-height:9.3px;white-space:nowrap;">33</div>
<div class="a" style="left:437.16px;top:84px;width:20px;height:9.3px;font-size:6.3px;color:#d8d8d8;font-weight:normal;text-align:left;line-height:9.3px;white-space:nowrap;">35</div>
<div class="a" style="left:497.7px;top:84px;width:20px;height:9.3px;font-size:6.3px;color:#d8d8d8;font-weight:normal;text-align:left;line-height:9.3px;white-space:nowrap;">37</div>
<div class="a" style="left:558.24px;top:84px;width:20px;height:9.3px;font-size:6.3px;color:#d8d8d8;font-weight:normal;text-align:left;line-height:9.3px;white-space:nowrap;">39</div>
<div class="a" style="left:618.78px;top:84px;width:20px;height:9.3px;font-size:6.3px;color:#d8d8d8;font-weight:normal;text-align:left;line-height:9.3px;white-space:nowrap;">41</div>
<div class="a" style="left:679.32px;top:84px;width:20px;height:9.3px;font-size:6.3px;color:#d8d8d8;font-weight:normal;text-align:left;line-height:9.3px;white-space:nowrap;">43</div>
<div class="a" style="left:739.86px;top:84px;width:20px;height:9.3px;font-size:6.3px;color:#d8d8d8;font-weight:normal;text-align:left;line-height:9.3px;white-space:nowrap;">45</div>
<div class="a" style="left:800.4px;top:84px;width:20px;height:9.3px;font-size:6.3px;color:#d8d8d8;font-weight:normal;text-align:left;line-height:9.3px;white-space:nowrap;">47</div>
<div class="a" style="left:860.94px;top:84px;width:20px;height:9.3px;font-size:6.3px;color:#d8d8d8;font-weight:normal;text-align:left;line-height:9.3px;white-space:nowrap;">49</div>
<div class="a" style="left:197px;top:93.3px;width:40px;height:9.4px;font-size:5.5px;color:#d0d8e0;font-weight:normal;text-align:left;line-height:9.4px;white-space:nowrap;">Chorus 1</div>
<div class="a" style="left:772.5px;top:93.3px;width:40px;height:9.4px;font-size:5.5px;color:#d0d8e0;font-weight:normal;text-align:left;line-height:9.4px;white-space:nowrap;">Verse 2</div>
<div class="a" style="left:193.8px;top:102.8px;width:466.2px;height:33.2px;background:#3a5bd4;border-radius:2.5px;overflow:hidden;"></div>
<svg class="a" style="left:193.8px;top:102.8px" width="466.2" height="33.2" viewBox="193.8 102.8 466.2 33.2"><path d="M194.8,120.9 195.8,120.4 196.8,120.7 197.8,120.8 198.8,121.1 199.8,121.5 200.8,121.9 201.8,122.4 202.8,122.7 203.8,122.8 204.8,122.8 205.8,122.8 206.8,122.8 207.8,122.8 208.8,122.8 209.8,122.8 210.8,122.8 211.8,122.8 212.8,122.8 213.8,122.8 214.8,122.8 215.8,122.8 216.8,122.8 217.8,122.8 218.8,122.8 219.8,122.8 220.8,122.8 221.8,122.8 222.8,122.8 223.8,122.8 224.8,122.8 225.8,122.8 226.8,122.8 227.8,122.8 228.8,122.8 229.8,122.8 230.8,122.8 231.8,112.2 232.8,110.8 233.8,110.8 234.8,110.8 235.8,110.8 236.8,111.2 237.8,113.7 238.8,114.2 239.8,113.8 240.8,113 241.8,114.6 242.8,115.6 243.8,114.5 244.8,115 245.8,114.5 246.8,115.8 247.8,115.9 248.8,116.4 249.8,117.7 250.8,118.1 251.8,119.5 252.8,120.4 253.8,119.8 254.8,118.7 255.8,118.6 256.8,116.6 257.8,117.1 258.8,117.6 259.8,117.3 260.8,117.6 261.8,116.8 262.8,116.7 263.8,115.9 264.8,117 265.8,116.1 266.8,116.8 267.8,117.8 268.8,117.9 269.8,117.6 270.8,116.9 271.8,118.5 272.8,118.6 273.8,119 274.8,121 275.8,120.1 276.8,120.3 277.8,120.7 278.8,120.8 279.8,121.1 280.8,121.1 281.8,120.9 282.8,120.8 283.8,121.4 284.8,121.4 285.8,121.4 286.8,121.8 287.8,122.1 288.8,122.7 289.8,119 290.8,114.2 291.8,115.3 292.8,114.5 293.8,112.6 294.8,112.1 295.8,114.7 296.8,115.4 297.8,114.8 298.8,114.7 299.8,116.5 300.8,120.4 301.8,119 302.8,117.9 303.8,116.2 304.8,116.1 305.8,116.5 306.8,116.3 307.8,117.4 308.8,118.2 309.8,117.5 310.8,118 311.8,120.1 312.8,120.8 313.8,119.4 314.8,119.6 315.8,119.5 316.8,119.3 317.8,119.5 318.8,118.5 319.8,118.1 320.8,119.2 321.8,118.4 322.8,118 323.8,119 324.8,119.9 325.8,119.3 326.8,120.1 327.8,120.6 328.8,120.2 329.8,120.4 330.8,120.8 331.8,120.7 332.8,121.4 333.8,121.8 334.8,122.2 335.8,122.5 336.8,122.5 337.8,122.8 338.8,122.8 339.8,122.8 340.8,122.8 341.8,122.8 342.8,122.8 343.8,122.8 344.8,122.8 345.8,122.8 346.8,122.8 347.8,122.8 348.8,122.8 349.8,122.8 350.8,122.8 351.8,116 352.8,113 353.8,111.7 354.8,112.3 355.8,112.6 356.8,114.4 357.8,115.7 358.8,119.8 359.8,119.6 360.8,116.5 361.8,115.4 362.8,115.8 363.8,115.4 364.8,117.3 365.8,115.7 366.8,115.9 367.8,116.3 368.8,117.1 369.8,117.1 370.8,118.4 371.8,119.4 372.8,119.7 373.8,120.6 374.8,120.6 375.8,119 376.8,119.4 377.8,119.4 378.8,119.4 379.8,119.4 380.8,119.1 381.8,119.4 382.8,119.3 383.8,119.2 384.8,119.8 385.8,120 386.8,119.8 387.8,119.6 388.8,119.3 389.8,120.2 390.8,119.2 391.8,119.7 392.8,118.9 393.8,119.6 394.8,119.2 395.8,120.4 396.8,119 397.8,119.8 398.8,119.5 399.8,120.1 400.8,121.1 401.8,120 402.8,120.1 403.8,120.4 404.8,119.9 405.8,119 406.8,120.3 407.8,119.5 408.8,118.6 409.8,118.7 410.8,118.7 411.8,118.4 412.8,117.9 413.8,118.1 414.8,119.3 415.8,119.3 416.8,118.5 417.8,118.6 418.8,118.3 419.8,117.8 420.8,118.4 421.8,119.5 422.8,119.2 423.8,119.5 424.8,120.8 425.8,119.9 426.8,120.3 427.8,120.7 428.8,120.9 429.8,119.5 430.8,119.5 431.8,120.7 432.8,119.5 433.8,119.2 434.8,120.5 435.8,120.8 436.8,120.5 437.8,121.7 438.8,122.4 439.8,121.8 440.8,122.1 441.8,122.5 442.8,122.5 443.8,122.8 444.8,122.8 445.8,122.8 446.8,122.8 447.8,122.8 448.8,122.8 449.8,122.8 450.8,122.8 451.8,122.8 452.8,122.8 453.8,122.8 454.8,122.1 455.8,121.2 456.8,121.6 457.8,121.8 458.8,121.7 459.8,122.2 460.8,122.7 461.8,122.8 462.8,122.8 463.8,122.8 464.8,122.8 465.8,121.6 466.8,119.3 467.8,118.8 468.8,119.4 469.8,118.6 470.8,119.4 471.8,120.2 472.8,118.9 473.8,120 474.8,119.8 475.8,119.8 476.8,119.8 477.8,118.8 478.8,118 479.8,118.6 480.8,117.6 481.8,117.3 482.8,117.6 483.8,117.2 484.8,118.1 485.8,117.6 486.8,118.5 487.8,118.4 488.8,118.3 489.8,117.9 490.8,119.1 491.8,117.9 492.8,117.5 493.8,117.8 494.8,116.8 495.8,117.3 496.8,116.9 497.8,118.3 498.8,118.4 499.8,119.1 500.8,119 501.8,118.8 502.8,119.9 503.8,120.3 504.8,119.2 505.8,119.5 506.8,119.4 507.8,119.4 508.8,119.7 509.8,120 510.8,120.5 511.8,120.3 512.8,121.1 513.8,120.9 514.8,121.5 515.8,121.5 516.8,121.7 517.8,122 518.8,122.4 519.8,122 520.8,122.1 521.8,122.4 522.8,122.7 523.8,122.8 524.8,122.8 525.8,122.8 526.8,122.8 527.8,122.8 528.8,122.8 529.8,122.8 530.8,122.8 531.8,122.8 532.8,122.8 533.8,122.8 534.8,122.8 535.8,122.8 536.8,122.8 537.8,122.8 538.8,122.8 539.8,122.8 540.8,122.8 541.8,122.8 542.8,122.8 543.8,122.8 544.8,122.8 545.8,122.8 546.8,122.8 547.8,122.8 548.8,122.8 549.8,122.8 550.8,122.8 551.8,122.8 552.8,122.8 553.8,122.8 554.8,122.8 555.8,122.8 556.8,122.8 557.8,122.8 558.8,122.8 559.8,122.8 560.8,122.8 561.8,122.8 562.8,122.8 563.8,122.8 564.8,122.8 565.8,122.8 566.8,122.8 567.8,122.8 568.8,122.8 569.8,122.8 570.8,122.8 571.8,122.8 572.8,122.8 573.8,122.8 574.8,122.8 575.8,122.8 576.8,122.8 577.8,122.8 578.8,122.8 579.8,122.8 580.8,122.8 581.8,122.8 582.8,122.8 583.8,122.8 584.8,122.8 585.8,122.8 586.8,122.8 587.8,122.8 588.8,122.8 589.8,122.8 590.8,122.8 591.8,122.8 592.8,122.8 593.8,122.8 594.8,122.8 595.8,122.8 596.8,122.8 597.8,122.8 598.8,122.8 599.8,122.8 600.8,122.8 601.8,122.8 602.8,122.8 603.8,122.8 604.8,122.8 605.8,122.8 606.8,122.8 607.8,122.8 608.8,122.8 609.8,122.8 610.8,122.8 611.8,122.8 612.8,122.8 613.8,122.8 614.8,122.8 615.8,122.8 616.8,122.8 617.8,122.8 618.8,122.8 619.8,122.8 620.8,122.8 621.8,122.8 622.8,122.8 623.8,122.8 624.8,122.8 625.8,122.8 626.8,122.8 627.8,122.8 628.8,122.8 629.8,122.8 630.8,122.8 631.8,122.8 632.8,122.8 633.8,122.8 634.8,122.8 635.8,122.8 636.8,122.8 637.8,122.8 638.8,122.8 639.8,122.8 640.8,122.8 641.8,122.8 642.8,122.8 643.8,122.8 644.8,122.8 645.8,122.8 646.8,122.8 647.8,122.8 648.8,122.8 649.8,122.8 650.8,122.8 651.8,122.8 652.8,122.8 653.8,122.8 654.8,122.8 655.8,122.8 656.8,122.8 657.8,122.8 658.8,122.8 658.8,123.9 657.8,123.9 656.8,123.9 655.8,123.9 654.8,123.9 653.8,123.9 652.8,123.9 651.8,123.9 650.8,123.9 649.8,123.9 648.8,123.9 647.8,123.9 646.8,123.9 645.8,123.9 644.8,123.9 643.8,123.9 642.8,123.9 641.8,123.9 640.8,123.9 639.8,123.9 638.8,123.9 637.8,123.9 636.8,123.9 635.8,123.9 634.8,123.9 633.8,123.9 632.8,123.9 631.8,123.9 630.8,123.9 629.8,123.9 628.8,123.9 627.8,123.9 626.8,123.9 625.8,123.9 624.8,123.9 623.8,123.9 622.8,123.9 621.8,123.9 620.8,123.9 619.8,123.9 618.8,123.9 617.8,123.9 616.8,123.9 615.8,123.9 614.8,123.9 613.8,123.9 612.8,123.9 611.8,123.9 610.8,123.9 609.8,123.9 608.8,123.9 607.8,123.9 606.8,123.9 605.8,123.9 604.8,123.9 603.8,123.9 602.8,123.9 601.8,123.9 600.8,123.9 599.8,123.9 598.8,123.9 597.8,123.9 596.8,123.9 595.8,123.9 594.8,123.9 593.8,123.9 592.8,123.9 591.8,123.9 590.8,123.9 589.8,123.9 588.8,123.9 587.8,123.9 586.8,123.9 585.8,123.9 584.8,123.9 583.8,123.9 582.8,123.9 581.8,123.9 580.8,123.9 579.8,123.9 578.8,123.9 577.8,123.9 576.8,123.9 575.8,123.9 574.8,123.9 573.8,123.9 572.8,123.9 571.8,123.9 570.8,123.9 569.8,123.9 568.8,123.9 567.8,123.9 566.8,123.9 565.8,123.9 564.8,123.9 563.8,123.9 562.8,123.9 561.8,123.9 560.8,123.9 559.8,123.9 558.8,123.9 557.8,123.9 556.8,123.9 555.8,123.9 554.8,123.9 553.8,123.9 552.8,123.9 551.8,123.9 550.8,123.9 549.8,123.9 548.8,123.9 547.8,123.9 546.8,123.9 545.8,123.9 544.8,123.9 543.8,123.9 542.8,123.9 541.8,123.9 540.8,123.9 539.8,123.9 538.8,123.9 537.8,123.9 536.8,123.9 535.8,123.9 534.8,123.9 533.8,123.9 532.8,123.9 531.8,123.9 530.8,123.9 529.8,123.9 528.8,123.9 527.8,123.9 526.8,123.9 525.8,123.9 524.8,123.9 523.8,123.9 522.8,124 521.8,124.3 520.8,124.7 519.8,124.8 518.8,124.3 517.8,124.8 516.8,125.2 515.8,125.4 514.8,125.4 513.8,126 512.8,125.8 511.8,126.8 510.8,126.6 509.8,127.1 508.8,127.4 507.8,127.7 506.8,127.7 505.8,127.7 504.8,128 503.8,126.7 502.8,127.2 501.8,128.5 500.8,128.2 499.8,128.1 498.8,128.9 497.8,129 496.8,130.6 495.8,130.2 494.8,130.7 493.8,129.6 492.8,130 491.8,129.5 490.8,128.1 489.8,129.6 488.8,129 487.8,129 486.8,128.9 485.8,129.9 484.8,129.3 483.8,130.3 482.8,129.8 481.8,130.2 480.8,129.9 479.8,128.7 478.8,129.4 477.8,128.5 476.8,127.3 475.8,127.4 474.8,127.3 473.8,127.1 472.8,128.4 471.8,126.8 470.8,127.8 469.8,128.7 468.8,127.8 467.8,128.5 466.8,127.9 465.8,125.2 464.8,123.9 463.8,123.9 462.8,123.9 461.8,123.9 460.8,124 459.8,124.6 458.8,125.2 457.8,125.1 456.8,125.2 455.8,125.7 454.8,124.6 453.8,123.9 452.8,123.9 451.8,123.9 450.8,123.9 449.8,123.9 448.8,123.9 447.8,123.9 446.8,123.9 445.8,123.9 444.8,123.9 443.8,123.9 442.8,124.2 441.8,124.3 440.8,124.7 439.8,125 438.8,124.4 437.8,125.1 436.8,126.5 435.8,126.2 434.8,126.5 433.8,128 432.8,127.7 431.8,126.3 430.8,127.7 429.8,127.7 428.8,126.1 427.8,126.3 426.8,126.7 425.8,127.2 424.8,126.2 423.8,127.7 422.8,128 421.8,127.7 420.8,129 419.8,129.6 418.8,129.1 417.8,128.7 416.8,128.8 415.8,127.9 414.8,127.9 413.8,129.3 412.8,129.5 411.8,129 410.8,128.6 409.8,128.6 408.8,128.7 407.8,127.6 406.8,126.8 405.8,128.3 404.8,127.2 403.8,126.6 402.8,127 401.8,127.2 400.8,125.8 399.8,127 398.8,127.6 397.8,127.3 396.8,128.2 395.8,126.6 394.8,128 393.8,127.6 392.8,128.4 391.8,127.5 390.8,128.1 389.8,126.9 388.8,127.9 387.8,127.5 386.8,127.3 385.8,127.1 384.8,127.3 383.8,128 382.8,127.9 381.8,127.8 380.8,128.2 379.8,127.7 378.8,127.7 377.8,127.8 376.8,127.8 375.8,128.2 374.8,126.4 373.8,126.4 372.8,127.4 371.8,127.8 370.8,128.9 369.8,130.5 368.8,130.4 367.8,131.3 366.8,131.8 365.8,132.1 364.8,130.3 363.8,132.3 362.8,131.9 361.8,132.3 360.8,131.2 359.8,127.6 358.8,127.3 357.8,132 356.8,133.5 355.8,135.5 354.8,136 353.8,136.6 352.8,135.1 351.8,131.7 350.8,123.9 349.8,123.9 348.8,123.9 347.8,123.9 346.8,123.9 345.8,123.9 344.8,123.9 343.8,123.9 342.8,123.9 341.8,123.9 340.8,123.9 339.8,123.9 338.8,123.9 337.8,123.9 336.8,124.2 335.8,124.3 334.8,124.5 333.8,125 332.8,125.5 331.8,126.2 330.8,126.2 329.8,126.6 328.8,126.8 327.8,126.4 326.8,127 325.8,127.8 324.8,127.2 323.8,128.3 322.8,129.4 321.8,129 320.8,128 319.8,129.3 318.8,128.8 317.8,127.7 316.8,127.9 315.8,127.7 314.8,127.6 313.8,127.8 312.8,126.2 311.8,126.9 310.8,129.4 309.8,130 308.8,129.2 307.8,130.1 306.8,131.4 305.8,131.1 304.8,131.6 303.8,131.4 302.8,129.5 301.8,128.2 300.8,126.6 299.8,131.2 298.8,133.2 297.8,133 296.8,132.4 295.8,133.2 294.8,136.2 293.8,135.6 292.8,133.4 291.8,132.5 290.8,133.8 289.8,128.3 288.8,124 287.8,124.7 286.8,125.1 285.8,125.5 284.8,125.5 283.8,125.5 282.8,126.2 281.8,126 280.8,125.8 279.8,125.8 278.8,126.2 277.8,126.3 276.8,126.8 275.8,127 274.8,126 273.8,128.2 272.8,128.7 271.8,128.8 270.8,130.6 269.8,129.8 268.8,129.5 267.8,129.7 266.8,130.7 265.8,131.6 264.8,130.6 263.8,131.8 262.8,130.9 261.8,130.8 260.8,129.9 259.8,130.2 258.8,129.8 257.8,130.4 256.8,131 255.8,128.7 254.8,128.6 253.8,127.4 252.8,126.7 251.8,127.7 250.8,129.3 249.8,129.7 248.8,131.3 247.8,131.8 246.8,131.9 245.8,133.4 244.8,132.8 243.8,133.4 242.8,132.2 241.8,133.3 240.8,135.2 239.8,134.2 238.8,133.8 237.8,134.3 236.8,137.2 235.8,138.6 234.8,138.7 233.8,139.3 232.8,140.4 231.8,136.1 230.8,123.9 229.8,123.9 228.8,123.9 227.8,123.9 226.8,123.9 225.8,123.9 224.8,123.9 223.8,123.9 222.8,123.9 221.8,123.9 220.8,123.9 219.8,123.9 218.8,123.9 217.8,123.9 216.8,123.9 215.8,123.9 214.8,123.9 213.8,123.9 212.8,123.9 211.8,123.9 210.8,123.9 209.8,123.9 208.8,123.9 207.8,123.9 206.8,123.9 205.8,123.9 204.8,123.9 203.8,123.9 202.8,124 201.8,124.4 200.8,124.9 199.8,125.3 198.8,125.8 197.8,126.1 196.8,126.3 195.8,126.6 194.8,126Z" fill="#c6cefb"/></svg>
<div class="a" style="left:196.5px;top:103.3px;width:90px;height:8px;font-size:5.5px;color:#ffffff;font-weight:normal;text-align:left;line-height:8px;white-space:nowrap;letter-spacing:0px;">Verse Vocals</div>

<svg class="a" style="left:232.3px;top:105px" width="6" height="6"><circle cx="3" cy="3" r="2" fill="none" stroke="#fff" stroke-width=".8"/></svg>
<div class="a" style="left:769px;top:102.8px;width:149px;height:33.2px;background:#3a5bd4;border-radius:2.5px;overflow:hidden;"></div>
<svg class="a" style="left:769px;top:102.8px" width="149" height="33.2" viewBox="769 102.8 149 33.2"><path d="M770,114.6 771,113.5 772,114.6 773,113.4 774,115.4 775,116.1 776,114.4 777,115.5 778,120.3 779,120.7 780,116.8 781,114.7 782,114.4 783,114.2 784,116.4 785,116.9 786,117 787,117.2 788,118.2 789,119.4 790,119.4 791,118.2 792,119.4 793,118.9 794,117.6 795,118.7 796,119.1 797,120 798,120.2 799,120.2 800,120.6 801,121.3 802,120.8 803,121 804,121.4 805,121 806,121.6 807,121.2 808,121.4 809,122 810,122.1 811,121.6 812,121.3 813,120.6 814,121.3 815,120.9 816,121.7 817,122 818,122.5 819,122.6 820,122.8 821,122.9 822,123 823,123 824,123 825,123 826,117.5 827,112.3 828,114.7 829,111.9 830,111 831,111 832,111 833,111 834,111 835,113.1 836,112.3 837,111.8 838,113.7 839,115.1 840,118.4 841,118.5 842,118.9 843,120 844,119.5 845,119.8 846,116.6 847,116.9 848,116.8 849,117.6 850,117.8 851,116.9 852,116.1 853,116.8 854,118.2 855,116.9 856,118 857,118.8 858,118.9 859,118.3 860,119.1 861,118.6 862,119.6 863,119.7 864,119.5 865,120.2 866,120.4 867,120.7 868,120.3 869,121.6 870,121.9 871,122.4 872,123 873,123 874,123 875,123 876,123 877,123 878,123 879,123 880,123 881,123 882,123 883,123 884,123 885,123 886,123 887,123 888,123 889,123 890,119 891,115.1 892,114.4 893,114.6 894,114.9 895,114.4 896,114.4 897,117 898,118.6 899,119.3 900,120.9 901,118.6 902,111.9 903,113.2 904,112.3 905,114.8 906,113.7 907,117.5 908,116.6 909,117.4 910,118.9 911,120.5 912,122.5 913,121.2 914,119.2 915,118.9 916,119.1 917,118.9 917,128.7 916,128.5 915,128.8 914,128.4 913,126.2 912,124.7 911,126.9 910,128.8 909,130.5 908,131.4 907,130.4 906,134.8 905,133.5 904,136.4 903,135.3 902,136.9 901,129.2 900,126.5 899,128.3 898,129.1 897,131 896,134 895,134 894,133.4 893,133.7 892,133.9 891,133.2 890,128.6 889,124.1 888,124.1 887,124.1 886,124.1 885,124.1 884,124.1 883,124.1 882,124.1 881,124.1 880,124.1 879,124.1 878,124.1 877,124.1 876,124.1 875,124.1 874,124.1 873,124.1 872,124.1 871,124.8 870,125.3 869,125.7 868,127.1 867,126.7 866,127.1 865,127.3 864,128.1 863,127.9 862,127.9 861,129.2 860,128.6 859,129.4 858,128.8 857,128.9 856,129.9 855,131.1 854,129.6 853,131.2 852,132 851,131 850,130 849,130.3 848,131.2 847,131.1 846,131.4 845,127.7 844,128.1 843,127.5 842,128.8 841,129.3 840,129.3 839,133.1 838,134.7 837,136.9 836,136.4 835,135.5 834,139.2 833,139.3 832,139.6 831,137.8 830,139.5 829,136.8 828,133.6 827,136.3 826,130.4 825,124.1 824,124.1 823,124.1 822,124.1 821,124.2 820,124.4 819,124.5 818,124.7 817,125.2 816,125.5 815,126.5 814,126 813,126.8 812,126.1 811,125.7 810,125.1 809,125.2 808,126 807,126.1 806,125.7 805,126.4 804,125.9 803,126.4 802,126.6 801,126.1 800,126.9 799,127.2 798,127.3 797,127.5 796,128.5 795,129 794,130.3 793,128.8 792,128.3 791,129.6 790,128.2 789,128.2 788,129.6 787,130.7 786,130.9 785,131.1 784,131.6 783,134.2 782,134 781,133.6 780,131.2 779,126.7 778,127.2 777,132.8 776,134 775,132 774,132.8 773,135.1 772,133.7 771,135.1 770,133.8Z" fill="#c6cefb"/></svg>
<div class="a" style="left:796px;top:103.3px;width:90px;height:8px;font-size:5.5px;color:#ffffff;font-weight:normal;text-align:left;line-height:8px;white-space:nowrap;letter-spacing:0px;">Verse Vocals: 11 - Comp A</div>

<div class="a" style="left:770.5px;top:104.5px;width:7px;height:6.5px;background:#2d47a8;border-radius:1px;"></div>
<svg class="a" style="left:772px;top:105.5px" width="5" height="5"><path d="M.8 .5L4.5 2.5L.8 4.5Z" fill="#fff"/></svg>
<div class="a" style="left:778.8px;top:104.5px;width:6.2px;height:6.5px;background:#2d47a8;border-radius:1px;"></div>
<div class="a" style="left:778.8px;top:104.5px;width:6.2px;height:6.5px;font-size:5px;color:#fff;font-weight:normal;text-align:center;line-height:6.5px;white-space:nowrap;">A</div>
<div class="a" style="left:786px;top:104.5px;width:7.5px;height:6.5px;background:#2d47a8;border-radius:1px;"></div>
<svg class="a" style="left:786px;top:104.5px" width="8" height="7"><path d="M1 5.5Q4 -.5 7 5.5" fill="none" stroke="#fff" stroke-width=".8"/></svg>
<div class="a" style="left:865.5px;top:105.2px;width:5px;height:4.6px;border:.8px solid #fff;border-radius:1px;"></div>
<div class="a" style="left:193.8px;top:137.8px;width:602.9px;height:21.8px;background:#2f73cf;border-radius:2.5px;overflow:hidden;"></div>
<svg class="a" style="left:193.8px;top:137.8px" width="602.9" height="21.8" viewBox="193.8 137.8 602.9 21.8"><path d="M194.8,148.8 195.8,148.8 196.8,148.5 197.8,148.4 198.8,147.7 199.8,148.1 200.8,147.2 201.8,147.7 202.8,148.2 203.8,147.9 204.8,148.4 205.8,148.2 206.8,148.4 207.8,148.4 208.8,148.4 209.8,148.2 210.8,149.1 211.8,149.2 212.8,148.6 213.8,149.1 214.8,149.6 215.8,149.6 216.8,149.7 217.8,149.2 218.8,150.1 219.8,151.2 220.8,151.3 221.8,151.3 222.8,151.3 223.8,151.3 224.8,151.3 225.8,151.3 226.8,151.3 227.8,151.3 228.8,151.3 229.8,151.3 230.8,151.3 231.8,151.3 232.8,151.3 233.8,151.3 234.8,151.3 235.8,151.3 236.8,151.3 237.8,151.3 238.8,151.3 239.8,151.3 240.8,151.3 241.8,151.3 242.8,151.3 243.8,151.3 244.8,151.3 245.8,149.7 246.8,148.1 247.8,147.6 248.8,147.2 249.8,146.6 250.8,148.8 251.8,148.1 252.8,149.3 253.8,148.3 254.8,146.2 255.8,146.2 256.8,146.7 257.8,147.5 258.8,147.5 259.8,147.5 260.8,148.2 261.8,149.2 262.8,150.2 263.8,150.4 264.8,150.2 265.8,150.2 266.8,150.6 267.8,149.9 268.8,150.1 269.8,150.3 270.8,150.3 271.8,150.4 272.8,150.9 273.8,150.6 274.8,150.5 275.8,150.8 276.8,150.4 277.8,150.6 278.8,150.5 279.8,150.4 280.8,150.3 281.8,150.5 282.8,149.9 283.8,150.2 284.8,149.9 285.8,150.4 286.8,149.9 287.8,150.2 288.8,150.2 289.8,150.4 290.8,150.7 291.8,150.8 292.8,150.2 293.8,150.5 294.8,150.1 295.8,149.8 296.8,149.5 297.8,150 298.8,149.7 299.8,149.6 300.8,149.6 301.8,149.7 302.8,149.8 303.8,149.9 304.8,149.9 305.8,149.9 306.8,149.5 307.8,149.9 308.8,150.1 309.8,150.2 310.8,150.2 311.8,150.1 312.8,150.5 313.8,150.2 314.8,149.6 315.8,149.7 316.8,149.8 317.8,150 318.8,149.8 319.8,150.1 320.8,149.9 321.8,149.6 322.8,150.2 323.8,150.1 324.8,150 325.8,150.3 326.8,150 327.8,150.4 328.8,150.1 329.8,150.3 330.8,150 331.8,150.3 332.8,150.3 333.8,150 334.8,149.9 335.8,150.5 336.8,151.2 337.8,151.3 338.8,151.3 339.8,151.3 340.8,151.3 341.8,151.3 342.8,151.3 343.8,151.3 344.8,151.3 345.8,151.3 346.8,151.3 347.8,151.3 348.8,151.3 349.8,151.3 350.8,151.3 351.8,151.3 352.8,151.3 353.8,151.3 354.8,151.3 355.8,151.3 356.8,151.3 357.8,151.3 358.8,151.3 359.8,151.3 360.8,151.3 361.8,151.3 362.8,151.3 363.8,151.3 364.8,151.3 365.8,151.3 366.8,151.3 367.8,148.9 368.8,145.1 369.8,145.1 370.8,145.5 371.8,145.3 372.8,147.3 373.8,146.4 374.8,145.4 375.8,146.7 376.8,147.4 377.8,146.4 378.8,147.3 379.8,147.8 380.8,149.3 381.8,147.2 382.8,147.3 383.8,147.4 384.8,148.1 385.8,148.2 386.8,148.2 387.8,148.6 388.8,148.4 389.8,148.5 390.8,148.5 391.8,149.1 392.8,149.4 393.8,148.8 394.8,148.9 395.8,149.6 396.8,148.8 397.8,148.5 398.8,150 399.8,149.2 400.8,149.3 401.8,149.1 402.8,148.6 403.8,148.2 404.8,148.4 405.8,148.7 406.8,149 407.8,149.5 408.8,150.1 409.8,150.5 410.8,150.6 411.8,150.8 412.8,150.9 413.8,150.9 414.8,150.9 415.8,151 416.8,151 417.8,151 418.8,151 419.8,151.1 420.8,151.1 421.8,151.1 422.8,151.2 423.8,151.2 424.8,151.2 425.8,151.3 426.8,151.3 427.8,149.1 428.8,146.1 429.8,145.2 430.8,145.1 431.8,145 432.8,145.7 433.8,146.9 434.8,145.8 435.8,147.5 436.8,147 437.8,146.9 438.8,149.1 439.8,148.5 440.8,148.9 441.8,148.8 442.8,148.6 443.8,148.7 444.8,148.6 445.8,148.9 446.8,148.7 447.8,149.1 448.8,149.2 449.8,149.3 450.8,149.6 451.8,149.2 452.8,149.8 453.8,149.8 454.8,149.1 455.8,149.4 456.8,149.3 457.8,149.3 458.8,149.7 459.8,149.6 460.8,149.4 461.8,149.1 462.8,149.4 463.8,149.6 464.8,149.4 465.8,150.3 466.8,149.4 467.8,149.5 468.8,150.1 469.8,150.3 470.8,151 471.8,151.2 472.8,151.3 473.8,151.3 474.8,151.3 475.8,151.3 476.8,151.3 477.8,151.3 478.8,151.3 479.8,151.3 480.8,151.3 481.8,151.3 482.8,151.3 483.8,151.3 484.8,151.3 485.8,151.3 486.8,151.3 487.8,151.3 488.8,150 489.8,148.3 490.8,148.1 491.8,148.6 492.8,147.5 493.8,147 494.8,147.9 495.8,148.1 496.8,148.7 497.8,148.1 498.8,147.9 499.8,147.4 500.8,148.2 501.8,147.9 502.8,147.7 503.8,147.6 504.8,147.5 505.8,148.3 506.8,148.5 507.8,148.4 508.8,150.1 509.8,149.6 510.8,149.6 511.8,149.9 512.8,149.6 513.8,150.4 514.8,150 515.8,149.7 516.8,150.7 517.8,150 518.8,150.6 519.8,150.2 520.8,150 521.8,149.8 522.8,149.6 523.8,149.9 524.8,149.8 525.8,149.8 526.8,149.8 527.8,149.8 528.8,149.4 529.8,149.9 530.8,149.8 531.8,149.8 532.8,149.6 533.8,149.7 534.8,150 535.8,149.7 536.8,149.5 537.8,149 538.8,150.3 539.8,148.8 540.8,148.8 541.8,148.6 542.8,149.5 543.8,148.6 544.8,149.1 545.8,149.2 546.8,149.6 547.8,149.3 548.8,149.4 549.8,148.9 550.8,149.3 551.8,149.1 552.8,149 553.8,149.3 554.8,149.6 555.8,150.4 556.8,149.6 557.8,149.5 558.8,149.4 559.8,150.1 560.8,150 561.8,150.1 562.8,150 563.8,150.8 564.8,150.2 565.8,150.2 566.8,150.5 567.8,150.7 568.8,150.7 569.8,150.7 570.8,150.8 571.8,150.9 572.8,151 573.8,151.2 574.8,151.3 575.8,151.3 576.8,151.3 577.8,151.3 578.8,151.3 579.8,151.3 580.8,151.3 581.8,151.3 582.8,151.3 583.8,151.3 584.8,151.3 585.8,151.3 586.8,151.3 587.8,151.3 588.8,151.3 589.8,151.3 590.8,151.3 591.8,151.3 592.8,151.3 593.8,151.3 594.8,151.3 595.8,151.3 596.8,151.3 597.8,151.3 598.8,151.3 599.8,151.3 600.8,151.3 601.8,150.4 602.8,149.9 603.8,148.5 604.8,147.8 605.8,148.3 606.8,148.5 607.8,148.4 608.8,147.9 609.8,147.7 610.8,148.3 611.8,147.9 612.8,147.4 613.8,147.3 614.8,148 615.8,148 616.8,148 617.8,147.6 618.8,148.4 619.8,147.1 620.8,148.9 621.8,146.7 622.8,146.3 623.8,147.8 624.8,146.3 625.8,146.7 626.8,146 627.8,146.4 628.8,146.6 629.8,146.9 630.8,146.5 631.8,146.4 632.8,146.9 633.8,146.3 634.8,147.8 635.8,147.4 636.8,148 637.8,147.6 638.8,147.4 639.8,147.8 640.8,147.3 641.8,147.3 642.8,147.5 643.8,148.2 644.8,148.7 645.8,148.6 646.8,148.8 647.8,149.1 648.8,149.9 649.8,150.1 650.8,150.1 651.8,151 652.8,151.2 653.8,151.3 654.8,151.3 655.8,151.3 656.8,151.3 657.8,151.3 658.8,151.3 659.8,151.3 660.8,151.3 661.8,151.3 662.8,151.3 663.8,151.3 664.8,151.3 665.8,151.3 666.8,151.3 667.8,151.3 668.8,151.3 669.8,151.3 670.8,151.3 671.8,151.3 672.8,151.3 673.8,151.3 674.8,151.3 675.8,151.3 676.8,151.3 677.8,151.3 678.8,151.3 679.8,151.3 680.8,151.3 681.8,151.3 682.8,151.3 683.8,151.3 684.8,151.3 685.8,151.3 686.8,151.3 687.8,151.3 688.8,151.3 689.8,151.3 690.8,151.3 691.8,151.3 692.8,151.3 693.8,151.3 694.8,151.3 695.8,151.3 696.8,151.3 697.8,151.3 698.8,151.3 699.8,151.3 700.8,151.3 701.8,151.3 702.8,151.3 703.8,151.3 704.8,151.3 705.8,151.3 706.8,151.3 707.8,151.3 708.8,151.3 709.8,151.3 710.8,151.3 711.8,151.3 712.8,151.3 713.8,151.3 714.8,151.3 715.8,151.3 716.8,151.3 717.8,151.3 718.8,151.3 719.8,151.3 720.8,151.3 721.8,151.3 722.8,151.3 723.8,151.3 724.8,151.3 725.8,151.3 726.8,151.3 727.8,151.3 728.8,151.3 729.8,151.3 730.8,151.3 731.8,151.3 732.8,151.3 733.8,151.3 734.8,151.3 735.8,151.3 736.8,151.3 737.8,151.3 738.8,151.3 739.8,151.3 740.8,151.3 741.8,151.3 742.8,151.3 743.8,151.3 744.8,151.3 745.8,151.3 746.8,151.3 747.8,151.3 748.8,151.3 749.8,151.3 750.8,151.3 751.8,151.3 752.8,151.3 753.8,151.3 754.8,151.3 755.8,151.3 756.8,151.3 757.8,151.3 758.8,151.3 759.8,151.3 760.8,151.3 761.8,151.3 762.8,151.3 763.8,151.3 764.8,151.3 765.8,151.3 766.8,151.3 767.8,151.3 768.8,151.3 769.8,151.3 770.8,151.3 771.8,151.3 772.8,151.3 773.8,151.3 774.8,151.3 775.8,151.3 776.8,151.3 777.8,151.3 778.8,151.3 779.8,151.3 780.8,151.3 781.8,151.3 782.8,151.3 783.8,151.3 784.8,151.3 785.8,151.3 786.8,151.3 787.8,151.3 788.8,151.3 789.8,151.3 790.8,151.3 791.8,151.3 792.8,151.3 793.8,151.3 794.8,151.3 794.8,152.4 793.8,152.4 792.8,152.4 791.8,152.4 790.8,152.4 789.8,152.4 788.8,152.4 787.8,152.4 786.8,152.4 785.8,152.4 784.8,152.4 783.8,152.4 782.8,152.4 781.8,152.4 780.8,152.4 779.8,152.4 778.8,152.4 777.8,152.4 776.8,152.4 775.8,152.4 774.8,152.4 773.8,152.4 772.8,152.4 771.8,152.4 770.8,152.4 769.8,152.4 768.8,152.4 767.8,152.4 766.8,152.4 765.8,152.4 764.8,152.4 763.8,152.4 762.8,152.4 761.8,152.4 760.8,152.4 759.8,152.4 758.8,152.4 757.8,152.4 756.8,152.4 755.8,152.4 754.8,152.4 753.8,152.4 752.8,152.4 751.8,152.4 750.8,152.4 749.8,152.4 748.8,152.4 747.8,152.4 746.8,152.4 745.8,152.4 744.8,152.4 743.8,152.4 742.8,152.4 741.8,152.4 740.8,152.4 739.8,152.4 738.8,152.4 737.8,152.4 736.8,152.4 735.8,152.4 734.8,152.4 733.8,152.4 732.8,152.4 731.8,152.4 730.8,152.4 729.8,152.4 728.8,152.4 727.8,152.4 726.8,152.4 725.8,152.4 724.8,152.4 723.8,152.4 722.8,152.4 721.8,152.4 720.8,152.4 719.8,152.4 718.8,152.4 717.8,152.4 716.8,152.4 715.8,152.4 714.8,152.4 713.8,152.4 712.8,152.4 711.8,152.4 710.8,152.4 709.8,152.4 708.8,152.4 707.8,152.4 706.8,152.4 705.8,152.4 704.8,152.4 703.8,152.4 702.8,152.4 701.8,152.4 700.8,152.4 699.8,152.4 698.8,152.4 697.8,152.4 696.8,152.4 695.8,152.4 694.8,152.4 693.8,152.4 692.8,152.4 691.8,152.4 690.8,152.4 689.8,152.4 688.8,152.4 687.8,152.4 686.8,152.4 685.8,152.4 684.8,152.4 683.8,152.4 682.8,152.4 681.8,152.4 680.8,152.4 679.8,152.4 678.8,152.4 677.8,152.4 676.8,152.4 675.8,152.4 674.8,152.4 673.8,152.4 672.8,152.4 671.8,152.4 670.8,152.4 669.8,152.4 668.8,152.4 667.8,152.4 666.8,152.4 665.8,152.4 664.8,152.4 663.8,152.4 662.8,152.4 661.8,152.4 660.8,152.4 659.8,152.4 658.8,152.4 657.8,152.4 656.8,152.4 655.8,152.4 654.8,152.4 653.8,152.4 652.8,152.5 651.8,152.6 650.8,153.6 649.8,153.6 648.8,153.9 647.8,154.7 646.8,155.1 645.8,155.3 644.8,155.3 643.8,155.7 642.8,156.5 641.8,156.8 640.8,156.7 639.8,156.2 638.8,156.7 637.8,156.4 636.8,156 635.8,156.6 634.8,156.2 633.8,157.9 632.8,157.2 631.8,157.7 630.8,157.6 629.8,157.2 628.8,157.5 627.8,157.7 626.8,158.2 625.8,157.4 624.8,157.8 623.8,156.2 622.8,157.9 621.8,157.4 620.8,155 619.8,157 618.8,155.5 617.8,156.4 616.8,156 615.8,155.9 614.8,156 613.8,156.7 612.8,156.7 611.8,156.1 610.8,155.6 609.8,156.3 608.8,156.1 607.8,155.5 606.8,155.5 605.8,155.6 604.8,156.2 603.8,155.5 602.8,153.9 601.8,153.3 600.8,152.4 599.8,152.4 598.8,152.4 597.8,152.4 596.8,152.4 595.8,152.4 594.8,152.4 593.8,152.4 592.8,152.4 591.8,152.4 590.8,152.4 589.8,152.4 588.8,152.4 587.8,152.4 586.8,152.4 585.8,152.4 584.8,152.4 583.8,152.4 582.8,152.4 581.8,152.4 580.8,152.4 579.8,152.4 578.8,152.4 577.8,152.4 576.8,152.4 575.8,152.4 574.8,152.4 573.8,152.4 572.8,152.7 571.8,152.8 570.8,152.9 569.8,153 568.8,153 567.8,153.1 566.8,153.3 565.8,153.6 564.8,153.6 563.8,152.9 562.8,153.7 561.8,153.7 560.8,153.8 559.8,153.7 558.8,154.5 557.8,154.3 556.8,154.3 555.8,153.3 554.8,154.3 553.8,154.6 552.8,154.9 551.8,154.8 550.8,154.6 549.8,154.9 548.8,154.4 547.8,154.6 546.8,154.3 545.8,154.6 544.8,154.8 543.8,155.3 542.8,154.3 541.8,155.3 540.8,155.1 539.8,155.1 538.8,153.4 537.8,154.9 536.8,154.3 535.8,154.2 534.8,153.8 533.8,154.2 532.8,154.2 531.8,154 530.8,154 529.8,153.9 528.8,154.5 527.8,154 526.8,154 525.8,154.1 524.8,154 523.8,153.9 522.8,154.2 521.8,154 520.8,153.8 519.8,153.6 518.8,153.1 517.8,153.8 516.8,153.1 515.8,154.1 514.8,153.7 513.8,153.4 512.8,154.2 511.8,153.8 510.8,154.2 509.8,154.2 508.8,153.6 507.8,155.6 506.8,155.4 505.8,155.7 504.8,156.6 503.8,156.4 502.8,156.3 501.8,156.1 500.8,155.8 499.8,156.7 498.8,156.1 497.8,155.9 496.8,155.2 495.8,155.8 494.8,156.1 493.8,157 492.8,156.5 491.8,155.4 490.8,155.9 489.8,155.7 488.8,153.8 487.8,152.4 486.8,152.4 485.8,152.4 484.8,152.4 483.8,152.4 482.8,152.4 481.8,152.4 480.8,152.4 479.8,152.4 478.8,152.4 477.8,152.4 476.8,152.4 475.8,152.4 474.8,152.4 473.8,152.4 472.8,152.4 471.8,152.5 470.8,152.6 469.8,153.4 468.8,153.6 467.8,154.3 466.8,154.4 465.8,153.5 464.8,154.4 463.8,154.3 462.8,154.4 461.8,154.8 460.8,154.4 459.8,154.3 458.8,154.1 457.8,154.6 456.8,154.5 455.8,154.4 454.8,154.8 453.8,153.9 452.8,154 451.8,154.6 450.8,154.2 449.8,154.5 448.8,154.7 447.8,154.8 446.8,155.2 445.8,155 444.8,155.3 443.8,155.2 442.8,155.3 441.8,155.1 440.8,155 439.8,155.5 438.8,154.7 437.8,157.2 436.8,157.1 435.8,156.5 434.8,158.3 433.8,157.2 432.8,158.5 431.8,159.3 430.8,159.2 429.8,159 428.8,158.1 427.8,154.8 426.8,152.4 425.8,152.4 424.8,152.4 423.8,152.5 422.8,152.5 421.8,152.5 420.8,152.6 419.8,152.6 418.8,152.6 417.8,152.7 416.8,152.7 415.8,152.7 414.8,152.8 413.8,152.8 412.8,152.8 411.8,152.9 410.8,153.1 409.8,153.2 408.8,153.7 407.8,154.4 406.8,154.9 405.8,155.2 404.8,155.5 403.8,155.7 402.8,155.3 401.8,154.7 400.8,154.6 399.8,154.6 398.8,153.7 397.8,155.4 396.8,155.1 395.8,154.3 394.8,155 393.8,155.1 392.8,154.5 391.8,154.8 390.8,155.4 389.8,155.5 388.8,155.5 387.8,155.3 386.8,155.8 385.8,155.7 384.8,155.9 383.8,156.7 382.8,156.7 381.8,156.9 380.8,154.6 379.8,156.2 378.8,156.7 377.8,157.7 376.8,156.6 375.8,157.4 374.8,158.9 373.8,157.7 372.8,156.8 371.8,158.9 370.8,158.8 369.8,159.2 368.8,159.2 367.8,155 366.8,152.4 365.8,152.4 364.8,152.4 363.8,152.4 362.8,152.4 361.8,152.4 360.8,152.4 359.8,152.4 358.8,152.4 357.8,152.4 356.8,152.4 355.8,152.4 354.8,152.4 353.8,152.4 352.8,152.4 351.8,152.4 350.8,152.4 349.8,152.4 348.8,152.4 347.8,152.4 346.8,152.4 345.8,152.4 344.8,152.4 343.8,152.4 342.8,152.4 341.8,152.4 340.8,152.4 339.8,152.4 338.8,152.4 337.8,152.4 336.8,152.5 335.8,153.2 334.8,153.8 333.8,153.8 332.8,153.5 331.8,153.5 330.8,153.7 329.8,153.5 328.8,153.7 327.8,153.3 326.8,153.8 325.8,153.4 324.8,153.8 323.8,153.7 322.8,153.6 321.8,154.2 320.8,153.9 319.8,153.7 318.8,154 317.8,153.8 316.8,154 315.8,154.2 314.8,154.2 313.8,153.5 312.8,153.3 311.8,153.7 310.8,153.5 309.8,153.6 308.8,153.6 307.8,153.9 306.8,154.3 305.8,153.9 304.8,153.8 303.8,153.8 302.8,154 301.8,154.1 300.8,154.2 299.8,154.3 298.8,154.1 297.8,153.8 296.8,154.3 295.8,154 294.8,153.7 293.8,153.2 292.8,153.5 291.8,152.9 290.8,153 289.8,153.3 288.8,153.5 287.8,153.6 286.8,153.9 285.8,153.3 284.8,153.9 283.8,153.6 282.8,153.9 281.8,153.3 280.8,153.5 279.8,153.3 278.8,153.2 277.8,153.1 276.8,153.3 275.8,152.9 274.8,153.2 273.8,153.1 272.8,152.8 271.8,153.4 270.8,153.4 269.8,153.5 268.8,153.6 267.8,153.9 266.8,153.2 265.8,153.5 264.8,153.6 263.8,153.3 262.8,153.5 261.8,154.6 260.8,155.8 259.8,156.5 258.8,156.5 257.8,156.6 256.8,157.4 255.8,158 254.8,158 253.8,155.6 252.8,154.6 251.8,155.9 250.8,155.1 249.8,157.5 248.8,156.9 247.8,156.5 246.8,155.9 245.8,154.1 244.8,152.4 243.8,152.4 242.8,152.4 241.8,152.4 240.8,152.4 239.8,152.4 238.8,152.4 237.8,152.4 236.8,152.4 235.8,152.4 234.8,152.4 233.8,152.4 232.8,152.4 231.8,152.4 230.8,152.4 229.8,152.4 228.8,152.4 227.8,152.4 226.8,152.4 225.8,152.4 224.8,152.4 223.8,152.4 222.8,152.4 221.8,152.4 220.8,152.4 219.8,152.5 218.8,153.7 217.8,154.6 216.8,154.1 215.8,154.2 214.8,154.3 213.8,154.8 212.8,155.4 211.8,154.7 210.8,154.8 209.8,155.8 208.8,155.6 207.8,155.5 206.8,155.6 205.8,155.7 204.8,155.6 203.8,156.1 202.8,155.8 201.8,156.3 200.8,156.8 199.8,155.9 198.8,156.3 197.8,155.5 196.8,155.4 195.8,155.1 194.8,155.1Z" fill="#c4dcf8"/></svg>
<div class="a" style="left:196.5px;top:138.3px;width:90px;height:8px;font-size:5.5px;color:#ffffff;font-weight:normal;text-align:left;line-height:8px;white-space:nowrap;letter-spacing:0px;">VerseHarmony</div>
<div class="a" style="left:680.5px;top:138.3px;width:90px;height:8px;font-size:5.5px;color:#ffffff;font-weight:normal;text-align:left;line-height:8px;white-space:nowrap;letter-spacing:0px;">VerseHarmony</div>

<svg class="a" style="left:234.3px;top:139.5px" width="6" height="6"><circle cx="3" cy="3" r="2" fill="none" stroke="#fff" stroke-width=".8"/></svg>
<svg class="a" style="left:721.5px;top:139.5px" width="6" height="6"><circle cx="3" cy="3" r="2" fill="none" stroke="#fff" stroke-width=".8"/></svg>
<div class="a" style="left:374.5px;top:167.5px;width:50px;height:8px;font-size:5.5px;color:#b4d2e8;font-weight:bold;text-align:left;line-height:8px;white-space:nowrap;">Vocal Stack</div>
<div class="a" style="left:859px;top:167.5px;width:50px;height:8px;font-size:5.5px;color:#b4d2e8;font-weight:bold;text-align:left;line-height:8px;white-space:nowrap;">Vocal Stack</div>
<div class="a" style="left:193.8px;top:184.2px;width:555px;height:21.6px;background:#1b9bcc;border-radius:2.5px;overflow:hidden;"></div>
<svg class="a" style="left:193.8px;top:184.2px" width="555" height="21.6" viewBox="193.8 184.2 555 21.6"><path d="M194.8,198 195.8,198 196.8,198 197.8,198 198.8,198 199.8,198 200.8,198 201.8,198 202.8,198 203.8,198 204.8,198 205.8,198 206.8,198 207.8,195.6 208.8,192.5 209.8,195.1 210.8,193.8 211.8,194.1 212.8,192.9 213.8,193.3 214.8,194 215.8,193.2 216.8,194.6 217.8,194.3 218.8,194.5 219.8,194.8 220.8,194.2 221.8,194.8 222.8,194.4 223.8,193.7 224.8,194.9 225.8,194.6 226.8,194.9 227.8,195.1 228.8,195.1 229.8,194.7 230.8,195 231.8,195 232.8,194.9 233.8,195.1 234.8,195.7 235.8,195.5 236.8,195.4 237.8,195.3 238.8,195.7 239.8,195.3 240.8,194.4 241.8,194.1 242.8,196.1 243.8,194.6 244.8,194 245.8,195 246.8,195.2 247.8,194.5 248.8,195.8 249.8,194.6 250.8,194.9 251.8,195.2 252.8,194.5 253.8,196.1 254.8,194.5 255.8,195.2 256.8,194.4 257.8,194.8 258.8,193.6 259.8,193.8 260.8,194 261.8,194.3 262.8,194.1 263.8,194.2 264.8,194.5 265.8,194.1 266.8,194.2 267.8,194.8 268.8,194.5 269.8,194.7 270.8,194.3 271.8,195.4 272.8,195.7 273.8,195.4 274.8,195.3 275.8,195.3 276.8,195.4 277.8,195.8 278.8,194.8 279.8,195.1 280.8,195.2 281.8,194.9 282.8,194.8 283.8,196.5 284.8,195.4 285.8,195.1 286.8,195.6 287.8,195.3 288.8,196.1 289.8,195.6 290.8,195.2 291.8,195.9 292.8,196 293.8,196.2 294.8,196 295.8,196 296.8,196.1 297.8,196.1 298.8,195.5 299.8,195.6 300.8,196 301.8,196.1 302.8,196.3 303.8,196.3 304.8,196.6 305.8,196.8 306.8,197.3 307.8,197.7 308.8,197.7 309.8,197.9 310.8,198 311.8,198 312.8,198 313.8,198 314.8,198 315.8,198 316.8,198 317.8,198 318.8,198 319.8,198 320.8,198 321.8,198 322.8,198 323.8,198 324.8,198 325.8,198 326.8,198 327.8,198 328.8,198 329.8,198 330.8,198 331.8,198 332.8,198 333.8,196.2 334.8,195.8 335.8,196 336.8,195.9 337.8,195.8 338.8,195.9 339.8,196 340.8,196.1 341.8,196 342.8,196 343.8,195.7 344.8,194.6 345.8,195 346.8,194.1 347.8,194 348.8,193.4 349.8,194.1 350.8,193.8 351.8,193.7 352.8,193.7 353.8,193.5 354.8,194.1 355.8,192.9 356.8,193.3 357.8,192.9 358.8,193.9 359.8,194.6 360.8,195.6 361.8,196 362.8,194.7 363.8,194.9 364.8,194.2 365.8,196 366.8,193.9 367.8,194.3 368.8,192.6 369.8,194.4 370.8,193.4 371.8,193.7 372.8,194.5 373.8,194.1 374.8,193.7 375.8,195.4 376.8,193.6 377.8,193.7 378.8,194.1 379.8,194.4 380.8,194 381.8,194.2 382.8,194.6 383.8,195 384.8,196.5 385.8,195.8 386.8,196 387.8,196.5 388.8,197.2 389.8,197.9 390.8,195.8 391.8,195.7 392.8,196.8 393.8,196.2 394.8,195.8 395.8,195.8 396.8,195.3 397.8,195.3 398.8,194.9 399.8,195.6 400.8,195.7 401.8,195.3 402.8,195.5 403.8,195.5 404.8,195.5 405.8,195 406.8,193.7 407.8,193.1 408.8,193.2 409.8,193.1 410.8,193.1 411.8,193.1 412.8,194.2 413.8,195.4 414.8,194.5 415.8,194.3 416.8,194.6 417.8,194.4 418.8,194.8 419.8,193.2 420.8,194 421.8,193.5 422.8,193.9 423.8,192.4 424.8,194.2 425.8,193.4 426.8,194.2 427.8,193.3 428.8,193.9 429.8,194.2 430.8,195.7 431.8,195.4 432.8,196.3 433.8,196.6 434.8,197.1 435.8,197.5 436.8,197.5 437.8,197.6 438.8,197.6 439.8,197.6 440.8,197.7 441.8,197.7 442.8,197.8 443.8,197.8 444.8,197.8 445.8,197.9 446.8,197.9 447.8,198 448.8,198 449.8,196.9 450.8,195.9 451.8,195.3 452.8,194.9 453.8,194.2 454.8,194.6 455.8,193.9 456.8,195 457.8,195.3 458.8,195.6 459.8,195.6 460.8,195.9 461.8,196.4 462.8,196 463.8,195.7 464.8,195.7 465.8,195.8 466.8,195.9 467.8,195.7 468.8,195.7 469.8,195.8 470.8,195.3 471.8,195.2 472.8,195.2 473.8,194.6 474.8,194.4 475.8,194.8 476.8,194.9 477.8,194.7 478.8,195.4 479.8,195.3 480.8,195.6 481.8,195 482.8,195.6 483.8,195.7 484.8,195.8 485.8,195.3 486.8,195.8 487.8,195.6 488.8,195.2 489.8,194.5 490.8,194.4 491.8,195.5 492.8,195 493.8,195.1 494.8,196.1 495.8,194.9 496.8,194.6 497.8,195.1 498.8,194.7 499.8,195 500.8,195.8 501.8,194.3 502.8,195.2 503.8,195.3 504.8,194.9 505.8,194.8 506.8,195.3 507.8,195 508.8,194.9 509.8,195.8 510.8,195.2 511.8,195.7 512.8,194.9 513.8,195.7 514.8,195.4 515.8,195.7 516.8,195.3 517.8,195.3 518.8,195.5 519.8,195.4 520.8,195.2 521.8,194.8 522.8,195.4 523.8,195 524.8,195.5 525.8,195.8 526.8,195.9 527.8,195.6 528.8,195.8 529.8,195.8 530.8,196.2 531.8,195.3 532.8,196.4 533.8,195.8 534.8,196.1 535.8,195.5 536.8,195.8 537.8,196.1 538.8,196 539.8,196 540.8,196.1 541.8,196.9 542.8,196.9 543.8,197.2 544.8,197.5 545.8,197.5 546.8,197.5 547.8,197.5 548.8,197.6 549.8,197.6 550.8,197.6 551.8,197.6 552.8,197.6 553.8,197.6 554.8,197.7 555.8,197.7 556.8,197.7 557.8,197.7 558.8,197.7 559.8,197.7 560.8,197.8 561.8,197.8 562.8,197.8 563.8,197.8 564.8,197.8 565.8,197.8 566.8,197.9 567.8,197.9 568.8,197.9 569.8,197.9 570.8,197.9 571.8,197.9 572.8,198 573.8,198 574.8,198 575.8,196.2 576.8,195.8 577.8,195.9 578.8,196 579.8,196 580.8,195.8 581.8,195.8 582.8,195.5 583.8,195.1 584.8,194.8 585.8,193.3 586.8,192.5 587.8,193.3 588.8,193.2 589.8,193.4 590.8,194 591.8,194.7 592.8,194.4 593.8,194.5 594.8,193.1 595.8,193.7 596.8,193.7 597.8,194.5 598.8,194.4 599.8,195.3 600.8,195.8 601.8,195.4 602.8,196.7 603.8,195.6 604.8,193.8 605.8,193.9 606.8,193.6 607.8,193.2 608.8,192.2 609.8,193.6 610.8,194.1 611.8,193.1 612.8,194.2 613.8,193.6 614.8,194.3 615.8,194.9 616.8,194.3 617.8,194.4 618.8,195.4 619.8,195.6 620.8,195.3 621.8,196.6 622.8,196 623.8,196.1 624.8,195.9 625.8,196 626.8,196.2 627.8,195.9 628.8,196 629.8,195.9 630.8,195.8 631.8,195.6 632.8,196 633.8,195.9 634.8,195.8 635.8,196 636.8,195.9 637.8,196.1 638.8,195.9 639.8,196.6 640.8,196.4 641.8,196.5 642.8,196.2 643.8,196.5 644.8,196.6 645.8,196.6 646.8,196.3 647.8,196.7 648.8,196.2 649.8,196.5 650.8,196 651.8,194.2 652.8,195.6 653.8,194.4 654.8,195.1 655.8,195.7 656.8,194.8 657.8,195.2 658.8,194.6 659.8,194.3 660.8,194.7 661.8,194.7 662.8,194.1 663.8,194.4 664.8,194 665.8,194.9 666.8,194.9 667.8,194.8 668.8,193.8 669.8,194.5 670.8,194.7 671.8,195.6 672.8,195.3 673.8,196.1 674.8,196.3 675.8,197 676.8,197 677.8,197.2 678.8,197.5 679.8,197.6 680.8,197.9 681.8,198 682.8,198 683.8,198 684.8,198 685.8,198 686.8,198 687.8,198 688.8,198 689.8,198 690.8,198 691.8,198 692.8,198 693.8,198 694.8,198 695.8,198 696.8,198 697.8,198 698.8,198 699.8,198 700.8,196 701.8,195.9 702.8,195.2 703.8,195.5 704.8,195.5 705.8,195.2 706.8,195.9 707.8,196.1 708.8,195.9 709.8,195.6 710.8,194.5 711.8,194.7 712.8,194.4 713.8,195.5 714.8,194.7 715.8,195.1 716.8,194.5 717.8,195.1 718.8,194.1 719.8,194.4 720.8,193.4 721.8,193.5 722.8,194.1 723.8,194.7 724.8,194.5 725.8,195 726.8,194.8 727.8,195.1 728.8,195.9 729.8,194.3 730.8,194 731.8,194 732.8,193.8 733.8,193.5 734.8,192.7 735.8,193.6 736.8,193 737.8,192.9 738.8,193.9 739.8,193.8 740.8,194.8 741.8,194.6 742.8,194.8 743.8,196.5 744.8,197.3 745.8,197.6 746.8,197.6 747.8,197.7 747.8,199.4 746.8,199.4 745.8,199.5 744.8,199.8 743.8,200.6 742.8,202.3 741.8,202.6 740.8,202.3 739.8,203.4 738.8,203.3 737.8,204.4 736.8,204.3 735.8,203.6 734.8,204.5 733.8,203.8 732.8,203.4 731.8,203.3 730.8,203.3 729.8,202.9 728.8,201.3 727.8,202.1 726.8,202.4 725.8,202.1 724.8,202.7 723.8,202.4 722.8,203.2 721.8,203.7 720.8,203.9 719.8,202.8 718.8,203.2 717.8,202.1 716.8,202.7 715.8,202.1 714.8,202.5 713.8,201.6 712.8,202.8 711.8,202.5 710.8,202.7 709.8,201.6 708.8,201.2 707.8,201 706.8,201.2 705.8,202 704.8,201.6 703.8,201.7 702.8,202 701.8,201.3 700.8,201.1 699.8,199 698.8,199 697.8,199 696.8,199 695.8,199 694.8,199 693.8,199 692.8,199 691.8,199 690.8,199 689.8,199 688.8,199 687.8,199 686.8,199 685.8,199 684.8,199 683.8,199 682.8,199 681.8,199 680.8,199.1 679.8,199.4 678.8,199.5 677.8,199.9 676.8,200.1 675.8,200.1 674.8,200.8 673.8,201 672.8,201.9 671.8,201.6 670.8,202.5 669.8,202.7 668.8,203.4 667.8,202.4 666.8,202.3 665.8,202.3 664.8,203.2 663.8,202.9 662.8,203.2 661.8,202.5 660.8,202.5 659.8,202.9 658.8,202.6 657.8,202 656.8,202.4 655.8,201.5 654.8,202.1 653.8,202.8 652.8,201.6 651.8,203.1 650.8,201.1 649.8,200.6 648.8,200.9 647.8,200.4 646.8,200.8 645.8,200.4 644.8,200.5 643.8,200.5 642.8,201 641.8,200.6 640.8,200.7 639.8,200.4 638.8,201.2 637.8,201 636.8,201.2 635.8,201.1 634.8,201.4 633.8,201.3 632.8,201.1 631.8,201.5 630.8,201.4 629.8,201.2 628.8,201.1 627.8,201.3 626.8,201 625.8,201.1 624.8,201.2 623.8,201 622.8,201.1 621.8,200.5 620.8,201.8 619.8,201.5 618.8,201.7 617.8,202.8 616.8,202.9 615.8,202.2 614.8,202.9 613.8,203.6 612.8,203 611.8,204.2 610.8,203.1 609.8,203.7 608.8,205.1 607.8,204 606.8,203.7 605.8,203.4 604.8,203.5 603.8,201.5 602.8,200.4 601.8,201.7 600.8,201.3 599.8,201.8 598.8,202.8 597.8,202.7 596.8,203.5 595.8,203.6 594.8,204.2 593.8,202.7 592.8,202.8 591.8,202.5 590.8,203.2 589.8,203.8 588.8,204 587.8,204 586.8,204.8 585.8,204 584.8,202.4 583.8,202 582.8,201.6 581.8,201.3 580.8,201.4 579.8,201.1 578.8,201.1 577.8,201.2 576.8,201.3 575.8,200.9 574.8,199 573.8,199 572.8,199.1 571.8,199.1 570.8,199.1 569.8,199.1 568.8,199.1 567.8,199.2 566.8,199.2 565.8,199.2 564.8,199.2 563.8,199.2 562.8,199.2 561.8,199.3 560.8,199.3 559.8,199.3 558.8,199.3 557.8,199.3 556.8,199.3 555.8,199.4 554.8,199.4 553.8,199.4 552.8,199.4 551.8,199.4 550.8,199.4 549.8,199.5 548.8,199.5 547.8,199.5 546.8,199.5 545.8,199.5 544.8,199.6 543.8,199.8 542.8,200.2 541.8,200.2 540.8,201 539.8,201.2 538.8,201.2 537.8,201 536.8,201.3 535.8,201.6 534.8,201.1 533.8,201.3 532.8,200.7 531.8,201.9 530.8,200.9 529.8,201.3 528.8,201.3 527.8,201.6 526.8,201.2 525.8,201.4 524.8,201.6 523.8,202.1 522.8,201.8 521.8,202.4 520.8,201.9 519.8,201.7 518.8,201.7 517.8,201.9 516.8,201.9 515.8,201.5 514.8,201.8 513.8,201.4 512.8,202.3 511.8,201.5 510.8,202 509.8,201.4 508.8,202.3 507.8,202.2 506.8,201.9 505.8,202.4 504.8,202.3 503.8,201.9 502.8,201.9 501.8,202.9 500.8,201.3 499.8,202.2 498.8,202.5 497.8,202 496.8,202.6 495.8,202.3 494.8,201 493.8,202.1 492.8,202.2 491.8,201.6 490.8,202.8 489.8,202.7 488.8,202 487.8,201.6 486.8,201.4 485.8,201.9 484.8,201.4 483.8,201.4 482.8,201.5 481.8,202.2 480.8,201.6 479.8,201.9 478.8,201.8 477.8,202.5 476.8,202.3 475.8,202.4 474.8,202.8 473.8,202.6 472.8,202 471.8,202 470.8,201.9 469.8,201.3 468.8,201.4 467.8,201.4 466.8,201.2 465.8,201.3 464.8,201.5 463.8,201.4 462.8,201.1 461.8,200.7 460.8,201.3 459.8,201.6 458.8,201.6 457.8,201.9 456.8,202.2 455.8,203.3 454.8,202.6 453.8,203.1 452.8,202.3 451.8,201.9 450.8,201.2 449.8,200.2 448.8,199 447.8,199.1 446.8,199.1 445.8,199.2 444.8,199.2 443.8,199.2 442.8,199.3 441.8,199.3 440.8,199.4 439.8,199.4 438.8,199.4 437.8,199.5 436.8,199.5 435.8,199.5 434.8,199.9 433.8,200.5 432.8,200.8 431.8,201.7 430.8,201.5 429.8,203 428.8,203.3 427.8,204 426.8,203 425.8,203.9 424.8,203 423.8,204.9 422.8,203.4 421.8,203.8 420.8,203.2 419.8,204 418.8,202.4 417.8,202.8 416.8,202.5 415.8,203 414.8,202.7 413.8,201.7 412.8,203 411.8,204.2 410.8,204.2 409.8,204.2 408.8,204.1 407.8,204.1 406.8,203.5 405.8,202.2 404.8,201.6 403.8,201.7 402.8,201.6 401.8,201.9 400.8,201.5 399.8,201.5 398.8,202.3 397.8,201.9 396.8,201.8 395.8,201.4 394.8,201.3 393.8,200.9 392.8,200.3 391.8,201.5 390.8,201.3 389.8,199.2 388.8,199.8 387.8,200.6 386.8,201.1 385.8,201.3 384.8,200.6 383.8,202.2 382.8,202.6 381.8,203 380.8,203.2 379.8,202.8 378.8,203.2 377.8,203.5 376.8,203.7 375.8,201.7 374.8,203.5 373.8,203.1 372.8,202.7 371.8,203.5 370.8,203.9 369.8,202.8 368.8,204.7 367.8,202.9 366.8,203.3 365.8,201.1 364.8,203 363.8,202.3 362.8,202.5 361.8,201.2 360.8,201.6 359.8,202.6 358.8,203.4 357.8,204.4 356.8,204 355.8,204.4 354.8,203.1 353.8,203.8 352.8,203.6 351.8,203.5 350.8,203.4 349.8,203.1 348.8,203.8 347.8,203.3 346.8,203.1 345.8,202.2 344.8,202.6 343.8,201.5 342.8,201.1 341.8,201.2 340.8,201 339.8,201.1 338.8,201.2 337.8,201.3 336.8,201.2 335.8,201.2 334.8,201.3 333.8,201 332.8,199 331.8,199 330.8,199 329.8,199 328.8,199 327.8,199 326.8,199 325.8,199 324.8,199 323.8,199 322.8,199 321.8,199 320.8,199 319.8,199 318.8,199 317.8,199 316.8,199 315.8,199 314.8,199 313.8,199 312.8,199 311.8,199 310.8,199 309.8,199.1 308.8,199.3 307.8,199.3 306.8,199.8 305.8,200.3 304.8,200.5 303.8,200.8 302.8,200.8 301.8,201 300.8,201.2 299.8,201.6 298.8,201.7 297.8,201.1 296.8,201 295.8,201.1 294.8,201.2 293.8,200.9 292.8,201.2 291.8,201.2 290.8,202 289.8,201.5 288.8,201 287.8,201.8 286.8,201.5 285.8,202 284.8,201.7 283.8,200.6 282.8,202.4 281.8,202.3 280.8,202 279.8,202 278.8,202.3 277.8,201.4 276.8,201.8 275.8,201.9 274.8,201.8 273.8,201.8 272.8,201.4 271.8,201.8 270.8,202.9 269.8,202.5 268.8,202.7 267.8,202.4 266.8,203.1 265.8,203.1 264.8,202.7 263.8,203 262.8,203.1 261.8,202.9 260.8,203.2 259.8,203.5 258.8,203.6 257.8,202.4 256.8,202.8 255.8,202 254.8,202.7 253.8,201.1 252.8,202.7 251.8,202 250.8,202.3 249.8,202.6 248.8,201.3 247.8,202.7 246.8,201.9 245.8,202.2 244.8,203.2 243.8,202.6 242.8,201 241.8,203.1 240.8,202.8 239.8,201.8 238.8,201.5 237.8,201.9 236.8,201.8 235.8,201.6 234.8,201.4 233.8,202.1 232.8,202.3 231.8,202.2 230.8,202.2 229.8,202.5 228.8,202.1 227.8,202 226.8,202.2 225.8,202.6 224.8,202.3 223.8,203.6 222.8,202.8 221.8,202.4 220.8,203 219.8,202.4 218.8,202.7 217.8,202.9 216.8,202.6 215.8,204 214.8,203.3 213.8,204 212.8,204.4 211.8,203.1 210.8,203.4 209.8,202 208.8,204.8 207.8,201.5 206.8,199 205.8,199 204.8,199 203.8,199 202.8,199 201.8,199 200.8,199 199.8,199 198.8,199 197.8,199 196.8,199 195.8,199 194.8,199Z" fill="#bdeefb"/></svg>
<div class="a" style="left:196.5px;top:184.7px;width:90px;height:8px;font-size:5.5px;color:#ffffff;font-weight:normal;text-align:left;line-height:8px;white-space:nowrap;letter-spacing:0px;">Lead Vocal</div>
<div class="a" style="left:680.5px;top:184.7px;width:90px;height:8px;font-size:5.5px;color:#ffffff;font-weight:normal;text-align:left;line-height:8px;white-space:nowrap;letter-spacing:0px;">Lead Vocal</div>

<svg class="a" style="left:226.8px;top:185px" width="6" height="6"><circle cx="3" cy="3" r="2" fill="none" stroke="#fff" stroke-width=".8"/></svg>
<svg class="a" style="left:710.3px;top:185px" width="6" height="6"><circle cx="3" cy="3" r="2" fill="none" stroke="#fff" stroke-width=".8"/></svg>
<div class="a" style="left:193.8px;top:207.6px;width:559.2px;height:21.4px;background:#1cc0bb;border-radius:2.5px;overflow:hidden;"></div>
<svg class="a" style="left:193.8px;top:207.6px" width="559.2" height="21.4" viewBox="193.8 207.6 559.2 21.4"><path d="M194.8,221.3 195.8,221.3 196.8,221.3 197.8,221.3 198.8,221.3 199.8,221.3 200.8,221.3 201.8,221.3 202.8,221.3 203.8,221.3 204.8,221.3 205.8,221.3 206.8,221.3 207.8,218.2 208.8,218.1 209.8,217.1 210.8,216.8 211.8,217.2 212.8,216.5 213.8,217.1 214.8,217.9 215.8,216.8 216.8,217.4 217.8,217.7 218.8,217.8 219.8,217.8 220.8,218.2 221.8,218.7 222.8,218.5 223.8,218.4 224.8,219 225.8,218.2 226.8,218.1 227.8,218.5 228.8,218.1 229.8,217.8 230.8,218 231.8,218.2 232.8,218.4 233.8,218.5 234.8,218.2 235.8,218.8 236.8,219.8 237.8,218.5 238.8,218.2 239.8,218.4 240.8,218.8 241.8,218.2 242.8,219.4 243.8,217.7 244.8,218.1 245.8,218.4 246.8,218.8 247.8,219.1 248.8,218.4 249.8,218.4 250.8,218.6 251.8,218.7 252.8,218.8 253.8,218.8 254.8,219 255.8,218.3 256.8,218.6 257.8,218.6 258.8,219.7 259.8,218.2 260.8,218.7 261.8,218.7 262.8,217.8 263.8,218 264.8,217.4 265.8,218.6 266.8,217.9 267.8,217.9 268.8,218.5 269.8,218 270.8,217.6 271.8,217.4 272.8,217.7 273.8,217.6 274.8,218.1 275.8,219.2 276.8,218.5 277.8,218.3 278.8,218 279.8,218.5 280.8,218.8 281.8,218.8 282.8,218.5 283.8,218.9 284.8,218.7 285.8,218.8 286.8,218.4 287.8,218.4 288.8,219.7 289.8,218.1 290.8,218.5 291.8,219.1 292.8,218.8 293.8,218.8 294.8,218.6 295.8,218.3 296.8,218.6 297.8,218.8 298.8,219 299.8,219.4 300.8,219.4 301.8,219.7 302.8,220 303.8,219.9 304.8,220.1 305.8,220.7 306.8,220.6 307.8,220.8 308.8,221 309.8,221.2 310.8,221.3 311.8,221.3 312.8,221.3 313.8,221.3 314.8,221.3 315.8,221.3 316.8,221.3 317.8,221.3 318.8,221.3 319.8,221.3 320.8,221.3 321.8,221.3 322.8,221.3 323.8,221.3 324.8,221.3 325.8,221.3 326.8,221.3 327.8,221.3 328.8,221.3 329.8,221.3 330.8,221.3 331.8,221.3 332.8,221.3 333.8,219.9 334.8,219.3 335.8,219.9 336.8,219.5 337.8,219.5 338.8,219.8 339.8,219.5 340.8,219.4 341.8,219.7 342.8,219.3 343.8,219.4 344.8,218.7 345.8,217 346.8,217.2 347.8,216.5 348.8,216.6 349.8,217.2 350.8,217 351.8,218.1 352.8,216.8 353.8,217 354.8,216.7 355.8,216.9 356.8,217 357.8,218.3 358.8,218.2 359.8,218.6 360.8,218.8 361.8,219.3 362.8,218.7 363.8,218.4 364.8,218.3 365.8,218 366.8,216.8 367.8,216.2 368.8,217.2 369.8,215.7 370.8,217 371.8,215.9 372.8,216 373.8,217 374.8,216.5 375.8,218.2 376.8,216.4 377.8,217.4 378.8,218.6 379.8,217.8 380.8,217.1 381.8,218.9 382.8,218.4 383.8,218.3 384.8,219 385.8,219 386.8,219.7 387.8,220.2 388.8,220.3 389.8,221.2 390.8,219.2 391.8,219.3 392.8,218.7 393.8,219.3 394.8,219.2 395.8,219.2 396.8,218.9 397.8,218.1 398.8,218.1 399.8,218.8 400.8,219.3 401.8,218 402.8,218.4 403.8,218.9 404.8,218.7 405.8,218.1 406.8,216.8 407.8,216.3 408.8,216.6 409.8,216.3 410.8,215.5 411.8,215 412.8,215.9 413.8,215.6 414.8,215.9 415.8,217.6 416.8,218.3 417.8,217.8 418.8,218.1 419.8,217.9 420.8,217.8 421.8,218 422.8,217 423.8,216.8 424.8,217.6 425.8,216.2 426.8,216.4 427.8,217.8 428.8,218.3 429.8,217.7 430.8,218.9 431.8,218.7 432.8,219.6 433.8,219.9 434.8,220.5 435.8,220.9 436.8,220.8 437.8,220.9 438.8,220.9 439.8,220.9 440.8,221 441.8,221 442.8,221.1 443.8,221.1 444.8,221.1 445.8,221.2 446.8,221.2 447.8,221.3 448.8,221.3 449.8,220.1 450.8,218.6 451.8,218.7 452.8,218.9 453.8,218.4 454.8,218 455.8,218.1 456.8,218.4 457.8,217.4 458.8,218.6 459.8,218.4 460.8,218.7 461.8,218.3 462.8,218.8 463.8,218.5 464.8,219 465.8,218.8 466.8,219.1 467.8,218.7 468.8,219.1 469.8,219.6 470.8,219.3 471.8,219.4 472.8,219.5 473.8,219.2 474.8,218.9 475.8,219 476.8,219.2 477.8,218.8 478.8,218.9 479.8,218.9 480.8,218.6 481.8,218.2 482.8,218.3 483.8,218.1 484.8,218.7 485.8,218.4 486.8,219.3 487.8,218.5 488.8,219 489.8,219.8 490.8,219 491.8,218.5 492.8,218 493.8,218.5 494.8,218.4 495.8,219.1 496.8,218.8 497.8,217.6 498.8,218.4 499.8,218.2 500.8,218.5 501.8,218.1 502.8,218 503.8,218.1 504.8,218.7 505.8,218.3 506.8,218.8 507.8,219 508.8,218.6 509.8,218.5 510.8,218.9 511.8,218.4 512.8,218.8 513.8,217.7 514.8,218.6 515.8,218.2 516.8,218.5 517.8,218.7 518.8,217.9 519.8,218.5 520.8,218.4 521.8,219 522.8,218.7 523.8,219.4 524.8,219 525.8,218.9 526.8,219 527.8,219.6 528.8,218.9 529.8,218.9 530.8,218.7 531.8,218.7 532.8,219.5 533.8,219.4 534.8,219.2 535.8,219.4 536.8,219.1 537.8,218.9 538.8,219.5 539.8,218.9 540.8,219.7 541.8,219.7 542.8,220.2 543.8,220.4 544.8,220.9 545.8,220.8 546.8,220.8 547.8,220.8 548.8,220.9 549.8,220.9 550.8,220.9 551.8,220.9 552.8,220.9 553.8,220.9 554.8,221 555.8,221 556.8,221 557.8,221 558.8,221 559.8,221 560.8,221.1 561.8,221.1 562.8,221.1 563.8,221.1 564.8,221.1 565.8,221.1 566.8,221.2 567.8,221.2 568.8,221.2 569.8,221.2 570.8,221.2 571.8,221.2 572.8,221.3 573.8,221.3 574.8,221.3 575.8,219.8 576.8,219.1 577.8,219.4 578.8,219.1 579.8,219.6 580.8,219.2 581.8,219.8 582.8,220.3 583.8,219.5 584.8,218 585.8,217.2 586.8,217.1 587.8,217.4 588.8,216.3 589.8,217.5 590.8,217 591.8,216.8 592.8,216.9 593.8,217 594.8,216.6 595.8,216.3 596.8,218.4 597.8,216.9 598.8,217.9 599.8,217.6 600.8,218.2 601.8,218.7 602.8,218.6 603.8,218.3 604.8,217.8 605.8,217.4 606.8,217 607.8,217.1 608.8,217.7 609.8,217.9 610.8,217.4 611.8,218.4 612.8,218 613.8,218.2 614.8,217.9 615.8,219.1 616.8,218.7 617.8,219 618.8,219.3 619.8,219.4 620.8,219.1 621.8,219.7 622.8,219.7 623.8,219.6 624.8,219.7 625.8,219.6 626.8,219.4 627.8,219.7 628.8,219.3 629.8,219.7 630.8,219.7 631.8,219.4 632.8,219.5 633.8,219.2 634.8,220 635.8,219.7 636.8,219.7 637.8,219.5 638.8,219.8 639.8,219.8 640.8,220 641.8,219.7 642.8,219.7 643.8,219.9 644.8,219.8 645.8,219.9 646.8,219.4 647.8,220.4 648.8,220 649.8,219.8 650.8,219.1 651.8,218.8 652.8,218.5 653.8,218.2 654.8,218.2 655.8,218.5 656.8,218.4 657.8,218.3 658.8,218.6 659.8,217.7 660.8,218.1 661.8,217.2 662.8,218 663.8,218 664.8,217.9 665.8,218.3 666.8,217.8 667.8,218 668.8,217.3 669.8,216.9 670.8,216.9 671.8,216.8 672.8,217.6 673.8,218.9 674.8,219.1 675.8,219.6 676.8,220.1 677.8,220.3 678.8,220.6 679.8,220.9 680.8,221.2 681.8,221.3 682.8,221.3 683.8,221.3 684.8,221.3 685.8,221.3 686.8,221.3 687.8,221.3 688.8,221.3 689.8,221.3 690.8,221.3 691.8,221.3 692.8,221.3 693.8,221.3 694.8,221.3 695.8,221.3 696.8,221.3 697.8,221.3 698.8,221.3 699.8,221.3 700.8,217.9 701.8,217.4 702.8,218.2 703.8,218.1 704.8,217.9 705.8,218.6 706.8,218.7 707.8,219.6 708.8,219.5 709.8,219.8 710.8,217.5 711.8,217.3 712.8,218.6 713.8,218.2 714.8,217.8 715.8,218.9 716.8,218 717.8,217.6 718.8,217 719.8,218.5 720.8,217 721.8,216.9 722.8,218.9 723.8,217.6 724.8,218.1 725.8,217.3 726.8,218.6 727.8,218.1 728.8,217.4 729.8,217.2 730.8,217.5 731.8,217.2 732.8,217.8 733.8,217.3 734.8,217.6 735.8,217.2 736.8,216.4 737.8,217.5 738.8,217.2 739.8,216.1 740.8,216 741.8,217 742.8,217.6 743.8,219.1 744.8,220.4 745.8,220.9 746.8,220.9 747.8,221 748.8,221 749.8,221.1 750.8,221.2 751.8,221.2 751.8,222.4 750.8,222.5 749.8,222.5 748.8,222.6 747.8,222.7 746.8,222.7 745.8,222.8 744.8,223.2 743.8,224.7 742.8,226.2 741.8,226.9 740.8,227.9 739.8,227.8 738.8,226.6 737.8,226.3 736.8,227.5 735.8,226.7 734.8,226.2 733.8,226.5 732.8,226 731.8,226.6 730.8,226.4 729.8,226.6 728.8,226.4 727.8,225.7 726.8,225.2 725.8,226.6 724.8,225.7 723.8,226.2 722.8,224.8 721.8,226.9 720.8,226.8 719.8,225.3 718.8,226.8 717.8,226.2 716.8,225.8 715.8,224.9 714.8,226 713.8,225.6 712.8,225.1 711.8,226.5 710.8,226.3 709.8,223.9 708.8,224.2 707.8,224.2 706.8,225 705.8,225.2 704.8,225.9 703.8,225.7 702.8,225.6 701.8,226.4 700.8,225.9 699.8,222.3 698.8,222.3 697.8,222.3 696.8,222.3 695.8,222.3 694.8,222.3 693.8,222.3 692.8,222.3 691.8,222.3 690.8,222.3 689.8,222.3 688.8,222.3 687.8,222.3 686.8,222.3 685.8,222.3 684.8,222.3 683.8,222.3 682.8,222.3 681.8,222.3 680.8,222.4 679.8,222.7 678.8,223.1 677.8,223.4 676.8,223.5 675.8,224.1 674.8,224.7 673.8,224.9 672.8,226.2 671.8,227 670.8,226.9 669.8,226.9 668.8,226.5 667.8,225.8 666.8,226 665.8,225.5 664.8,225.9 663.8,225.7 662.8,225.8 661.8,226.6 660.8,225.6 659.8,226.1 658.8,225.2 657.8,225.4 656.8,225.4 655.8,225.3 654.8,225.6 653.8,225.6 652.8,225.2 651.8,225 650.8,224.6 649.8,223.9 648.8,223.7 647.8,223.3 646.8,224.3 645.8,223.8 644.8,223.9 643.8,223.8 642.8,224 641.8,224 640.8,223.7 639.8,223.9 638.8,223.9 637.8,224.2 636.8,224 635.8,224 634.8,223.7 633.8,224.5 632.8,224.3 631.8,224.3 630.8,224 629.8,224 628.8,224.4 627.8,224 626.8,224.3 625.8,224.1 624.8,224 623.8,224.1 622.8,224 621.8,224 620.8,224.6 619.8,224.3 618.8,224.4 617.8,224.8 616.8,225.1 615.8,224.7 614.8,225.9 613.8,225.6 612.8,225.8 611.8,225.3 610.8,226.4 609.8,225.9 608.8,226.1 607.8,226.8 606.8,226.9 605.8,226.5 604.8,226 603.8,225.5 602.8,225.2 601.8,225 600.8,225.6 599.8,226.3 598.8,225.9 597.8,226.9 596.8,225.3 595.8,227.6 594.8,227.3 593.8,226.9 592.8,226.9 591.8,227 590.8,226.8 589.8,226.3 588.8,227.5 587.8,226.4 586.8,226.7 585.8,226.6 584.8,225.8 583.8,224.2 582.8,223.4 581.8,224 580.8,224.5 579.8,224.2 578.8,224.6 577.8,224.3 576.8,224.7 575.8,223.9 574.8,222.3 573.8,222.3 572.8,222.4 571.8,222.4 570.8,222.4 569.8,222.4 568.8,222.4 567.8,222.5 566.8,222.5 565.8,222.5 564.8,222.5 563.8,222.5 562.8,222.5 561.8,222.6 560.8,222.6 559.8,222.6 558.8,222.6 557.8,222.6 556.8,222.6 555.8,222.7 554.8,222.7 553.8,222.7 552.8,222.7 551.8,222.7 550.8,222.7 549.8,222.8 548.8,222.8 547.8,222.8 546.8,222.8 545.8,222.8 544.8,222.7 543.8,223.3 542.8,223.4 541.8,224 540.8,224.1 539.8,224.8 538.8,224.2 537.8,224.8 536.8,224.6 535.8,224.3 534.8,224.5 533.8,224.4 532.8,224.2 531.8,225 530.8,225.1 529.8,224.9 528.8,224.9 527.8,224.1 526.8,224.7 525.8,224.8 524.8,224.7 523.8,224.3 522.8,225 521.8,224.7 520.8,225.4 519.8,225.2 518.8,225.9 517.8,225.1 516.8,225.3 515.8,225.6 514.8,225.1 513.8,226.1 512.8,225 511.8,225.3 510.8,224.8 509.8,225.2 508.8,225.2 507.8,224.7 506.8,225 505.8,225.5 504.8,225 503.8,225.7 502.8,225.8 501.8,225.6 500.8,225.2 499.8,225.6 498.8,225.4 497.8,226.2 496.8,224.9 495.8,224.6 494.8,225.4 493.8,225.3 492.8,225.8 491.8,225.3 490.8,224.7 489.8,223.9 488.8,224.7 487.8,225.3 486.8,224.5 485.8,225.4 484.8,225.1 483.8,225.7 482.8,225.5 481.8,225.6 480.8,225.2 479.8,224.8 478.8,224.8 477.8,224.9 476.8,224.5 475.8,224.8 474.8,224.8 473.8,224.5 472.8,224.2 471.8,224.3 470.8,224.4 469.8,224.2 468.8,224.6 467.8,225.1 466.8,224.7 465.8,224.9 464.8,224.7 463.8,225.3 462.8,224.9 461.8,225.4 460.8,225 459.8,225.4 458.8,225.1 457.8,226.4 456.8,225.4 455.8,225.6 454.8,225.8 453.8,225.4 452.8,224.8 451.8,225.1 450.8,225.1 449.8,223.6 448.8,222.3 447.8,222.4 446.8,222.4 445.8,222.5 444.8,222.5 443.8,222.5 442.8,222.6 441.8,222.6 440.8,222.7 439.8,222.7 438.8,222.7 437.8,222.8 436.8,222.8 435.8,222.8 434.8,223.2 433.8,223.7 432.8,224.1 431.8,225 430.8,224.8 429.8,226.1 428.8,225.5 427.8,226 426.8,227.5 425.8,227.6 424.8,226.2 423.8,227 422.8,226.9 421.8,225.8 420.8,226 419.8,225.9 418.8,225.7 417.8,226 416.8,225.5 415.8,226.2 414.8,228 413.8,228.3 412.8,227.9 411.8,228.9 410.8,228.4 409.8,227.6 408.8,227.3 407.8,227.6 406.8,227 405.8,225.7 404.8,225.1 403.8,224.9 402.8,225.4 401.8,225.8 400.8,224.4 399.8,224.9 398.8,225.6 397.8,225.7 396.8,224.8 395.8,224.5 394.8,224.5 393.8,224.4 392.8,225 391.8,224.4 390.8,224.5 389.8,222.5 388.8,223.4 387.8,223.5 386.8,224 385.8,224.7 384.8,224.8 383.8,225.5 382.8,225.3 381.8,224.8 380.8,226.8 379.8,226 378.8,225.1 377.8,226.4 376.8,227.4 375.8,225.6 374.8,227.3 373.8,226.9 372.8,227.9 371.8,228 370.8,226.8 369.8,228.2 368.8,226.6 367.8,227.7 366.8,227.1 365.8,225.8 364.8,225.5 363.8,225.4 362.8,225.1 361.8,224.5 360.8,225 359.8,225.2 358.8,225.5 357.8,225.5 356.8,226.9 355.8,226.9 354.8,227.2 353.8,226.9 352.8,227.1 351.8,225.7 350.8,226.8 349.8,226.7 348.8,227.2 347.8,227.4 346.8,226.6 345.8,226.8 344.8,225.1 343.8,224.3 342.8,224.4 341.8,224 340.8,224.3 339.8,224.2 338.8,223.9 337.8,224.2 336.8,224.2 335.8,223.8 334.8,224.5 333.8,223.8 332.8,222.3 331.8,222.3 330.8,222.3 329.8,222.3 328.8,222.3 327.8,222.3 326.8,222.3 325.8,222.3 324.8,222.3 323.8,222.3 322.8,222.3 321.8,222.3 320.8,222.3 319.8,222.3 318.8,222.3 317.8,222.3 316.8,222.3 315.8,222.3 314.8,222.3 313.8,222.3 312.8,222.3 311.8,222.3 310.8,222.3 309.8,222.4 308.8,222.6 307.8,222.9 306.8,223.1 305.8,223 304.8,223.6 303.8,223.7 302.8,223.7 301.8,224.1 300.8,224.3 299.8,224.4 298.8,224.8 297.8,225 296.8,225.2 295.8,225.5 294.8,225.1 293.8,224.9 292.8,225 291.8,224.6 290.8,225.3 289.8,225.7 288.8,224 287.8,225.4 286.8,225.3 285.8,225 284.8,225.1 283.8,224.9 282.8,225.2 281.8,225 280.8,225 279.8,225.3 278.8,225.8 277.8,225.5 276.8,225.3 275.8,224.5 274.8,225.7 273.8,226.2 272.8,226.1 271.8,226.4 270.8,226.3 269.8,225.7 268.8,225.3 267.8,225.9 266.8,225.9 265.8,225.2 264.8,226.4 263.8,225.8 262.8,226 261.8,225.1 260.8,225 259.8,225.6 258.8,224 257.8,225.2 256.8,225.2 255.8,225.5 254.8,224.8 253.8,225 252.8,225 251.8,225.1 250.8,225.2 249.8,225.4 248.8,225.4 247.8,224.7 246.8,224.9 245.8,225.3 244.8,225.7 243.8,226.1 242.8,224.3 241.8,225.5 240.8,225 239.8,225.3 238.8,225.6 237.8,225.2 236.8,223.9 235.8,224.9 234.8,225.5 233.8,225.3 232.8,225.3 231.8,225.5 230.8,225.8 229.8,226 228.8,225.7 227.8,225.2 226.8,225.7 225.8,225.6 224.8,224.8 223.8,225.3 222.8,225.3 221.8,225 220.8,225.6 219.8,226 218.8,225.9 217.8,226.1 216.8,226.4 215.8,227.1 214.8,225.9 213.8,226.7 212.8,227.4 211.8,226.6 210.8,227 209.8,226.8 208.8,225.7 207.8,225.6 206.8,222.3 205.8,222.3 204.8,222.3 203.8,222.3 202.8,222.3 201.8,222.3 200.8,222.3 199.8,222.3 198.8,222.3 197.8,222.3 196.8,222.3 195.8,222.3 194.8,222.3Z" fill="#c6fbf5"/></svg>
<div class="a" style="left:196.5px;top:208.1px;width:90px;height:8px;font-size:5.5px;color:#ffffff;font-weight:normal;text-align:left;line-height:8px;white-space:nowrap;letter-spacing:0px;">Vocal Double</div>
<div class="a" style="left:680.5px;top:208.1px;width:90px;height:8px;font-size:5.5px;color:#ffffff;font-weight:normal;text-align:left;line-height:8px;white-space:nowrap;letter-spacing:0px;">Vocal Double</div>

<div class="a" style="left:233px;top:209.3px;width:4.5px;height:4.2px;border:.8px solid #fff;border-radius:1px;"></div>
<div class="a" style="left:715.5px;top:209.3px;width:4.5px;height:4.2px;border:.8px solid #fff;border-radius:1px;"></div>
<div class="a" style="left:274.8px;top:93px;width:1px;height:137.5px;background:#a8a8a8;"></div>
<svg class="a" style="left:270.5px;top:93px" width="10" height="9"><path d="M1 .5H9V5.5L5 8.5L1 5.5Z" fill="#b8b8b8"/></svg>
<div class="a" style="left:101px;top:66px;width:817px;height:165px;border:1px solid #5488c8;"></div>
<div class="a" style="left:101px;top:231px;width:817px;height:18px;background:#404040;"></div>
<div class="a" style="left:106.4px;top:236.4px;width:16.6px;height:9.4px;background:#4a4a4a;border-radius:3px;"></div>
<svg class="a" style="left:110px;top:237px" width="9" height="8"><path d="M4.5 7V1.5M2 4L4.5 1.5L7 4" fill="none" stroke="#6a6a6a" stroke-width="1"/></svg>
<div class="a" style="left:126.8px;top:236.4px;width:25.5px;height:9.4px;background:#4a4a4a;border-radius:3px;"></div><div class="a" style="left:130.8px;top:236.4px;width:15.5px;height:9.4px;font-size:6.4px;color:#d8d8d8;font-weight:normal;text-align:left;line-height:9.4px;white-space:nowrap;">Edit</div><svg class="a" style="left:144.8px;top:239.3px" width="6" height="5"><path d="M1 1.2L3 3.2L5 1.2" fill="none" stroke="#8a8a8a" stroke-width=".8"/></svg>
<div class="a" style="left:154.8px;top:236.4px;width:37px;height:9.4px;background:#4a4a4a;border-radius:3px;"></div><div class="a" style="left:158.8px;top:236.4px;width:27px;height:9.4px;font-size:6.4px;color:#d8d8d8;font-weight:normal;text-align:left;line-height:9.4px;white-space:nowrap;">Options</div><svg class="a" style="left:184.3px;top:239.3px" width="6" height="5"><path d="M1 1.2L3 3.2L5 1.2" fill="none" stroke="#8a8a8a" stroke-width=".8"/></svg>
<div class="a" style="left:194.3px;top:236.4px;width:29.8px;height:9.4px;background:#4a4a4a;border-radius:3px;"></div><div class="a" style="left:198.3px;top:236.4px;width:19.8px;height:9.4px;font-size:6.4px;color:#d8d8d8;font-weight:normal;text-align:left;line-height:9.4px;white-space:nowrap;">View</div><svg class="a" style="left:216.6px;top:239.3px" width="6" height="5"><path d="M1 1.2L3 3.2L5 1.2" fill="none" stroke="#8a8a8a" stroke-width=".8"/></svg>
<div class="a" style="left:229.5px;top:236.4px;width:52px;height:9.4px;font-size:6.2px;color:#9a9a9a;font-weight:normal;text-align:left;line-height:9.4px;white-space:nowrap;letter-spacing:0px;">Sends on Faders:</div>
<div class="a" style="left:281.5px;top:236.4px;width:68.3px;height:9.4px;background:#4a4a4a;border-radius:3px;"></div>
<div class="a" style="left:292.8px;top:236.4px;width:0.8px;height:9.4px;background:#2e2e2e;"></div>
<svg class="a" style="left:282px;top:236px" width="11" height="10"><path d="M3.6 3.2A3 3 0 1 0 7.4 3.2M5.5 1.6v3.4" fill="none" stroke="#ccc" stroke-width=".9"/></svg>
<div class="a" style="left:297.5px;top:236.4px;width:30px;height:9.4px;font-size:6.4px;color:#e0e0e0;font-weight:normal;text-align:left;line-height:9.4px;white-space:nowrap;">Off</div>
<svg class="a" style="left:342px;top:237px" width="6" height="8"><path d="M1 3L3 1L5 3M1 5L3 7L5 5" fill="none" stroke="#999" stroke-width=".8"/></svg>
<div class="a" style="left:469px;top:236.6px;width:81px;height:9.9px;background:#2c2c2c;border-radius:3.5px;"></div>
<div class="a" style="left:469px;top:236.6px;width:31px;height:9.9px;font-size:6.3px;color:#cfcfcf;font-weight:normal;text-align:center;line-height:9.9px;white-space:nowrap;">Single</div>
<div class="a" style="left:500px;top:237.2px;width:29.4px;height:8.7px;background:#2a66c8;border-radius:3px;"></div>
<div class="a" style="left:500px;top:236.6px;width:29.4px;height:9.9px;font-size:6.2px;color:#ffffff;font-weight:normal;text-align:center;line-height:9.9px;white-space:nowrap;">Tracks</div>
<div class="a" style="left:529.4px;top:236.6px;width:20px;height:9.9px;font-size:6.3px;color:#cfcfcf;font-weight:normal;text-align:center;line-height:9.9px;white-space:nowrap;">All</div>
<div class="a" style="left:654.1px;top:236px;width:225px;height:9.6px;background:#2a62c0;border-radius:3px;"></div>
<div class="a" style="left:654.1px;top:236px;width:30.4px;height:9.6px;font-size:6.4px;color:#f4f4f4;font-weight:normal;text-align:center;line-height:9.6px;white-space:nowrap;">Audio</div>
<div class="a" style="left:684.5px;top:236px;width:0.7px;height:9.6px;background:#2456a8;"></div>
<div class="a" style="left:684.5px;top:236px;width:21px;height:9.6px;font-size:6.4px;color:#f4f4f4;font-weight:normal;text-align:center;line-height:9.6px;white-space:nowrap;">Inst</div>
<div class="a" style="left:705.5px;top:236px;width:0.7px;height:9.6px;background:#2456a8;"></div>
<div class="a" style="left:705.5px;top:236px;width:22.1px;height:9.6px;font-size:6.4px;color:#f4f4f4;font-weight:normal;text-align:center;line-height:9.6px;white-space:nowrap;">Aux</div>
<div class="a" style="left:727.6px;top:236px;width:0.7px;height:9.6px;background:#2456a8;"></div>
<div class="a" style="left:727.6px;top:236px;width:23.1px;height:9.6px;font-size:6.4px;color:#f4f4f4;font-weight:normal;text-align:center;line-height:9.6px;white-space:nowrap;">Bus</div>
<div class="a" style="left:750.7px;top:236px;width:0.7px;height:9.6px;background:#2456a8;"></div>
<div class="a" style="left:750.7px;top:236px;width:25.9px;height:9.6px;font-size:6.4px;color:#f4f4f4;font-weight:normal;text-align:center;line-height:9.6px;white-space:nowrap;">Input</div>
<div class="a" style="left:776.6px;top:236px;width:0.7px;height:9.6px;background:#2456a8;"></div>
<div class="a" style="left:776.6px;top:236px;width:32.4px;height:9.6px;font-size:6.4px;color:#f4f4f4;font-weight:normal;text-align:center;line-height:9.6px;white-space:nowrap;">Output</div>
<div class="a" style="left:809px;top:236px;width:0.7px;height:9.6px;background:#2456a8;"></div>
<div class="a" style="left:809px;top:236px;width:45.2px;height:9.6px;font-size:6.4px;color:#f4f4f4;font-weight:normal;text-align:center;line-height:9.6px;white-space:nowrap;">Master/VCA</div>
<div class="a" style="left:854.2px;top:236px;width:0.7px;height:9.6px;background:#2456a8;"></div>
<div class="a" style="left:854.2px;top:236px;width:24.8px;height:9.6px;font-size:6.4px;color:#f4f4f4;font-weight:normal;text-align:center;line-height:9.6px;white-space:nowrap;">MIDI</div>
<div class="a" style="left:654.1px;top:236px;width:30.4px;height:9.6px;background:#2c68cb;border-radius:3px 0 0 3px;"></div>
<div class="a" style="left:654.1px;top:236px;width:30.4px;height:9.6px;font-size:6.4px;color:#fff;font-weight:normal;text-align:center;line-height:9.6px;white-space:nowrap;">Audio</div>
<div class="a" style="left:883.5px;top:236px;width:14px;height:9.6px;background:#2c2c2c;border-radius:3px;"></div>
<svg class="a" style="left:884.5px;top:237px" width="12" height="8"><rect x="1" y="1.2" width="10" height="5.6" fill="none" stroke="#bbb" stroke-width=".8"/><path d="M4.3 1.2v5.6M7.6 1.2v5.6" stroke="#bbb" stroke-width=".7"/></svg>
<div class="a" style="left:899.5px;top:236px;width:13.5px;height:9.6px;background:#2a66c8;border-radius:3px;"></div>
<svg class="a" style="left:900.5px;top:237px" width="12" height="8"><rect x="1" y="1.2" width="10" height="5.6" fill="none" stroke="#fff" stroke-width=".8"/><path d="M6 1.2v5.6" stroke="#fff" stroke-width=".8"/></svg>
<div class="a" style="left:101px;top:249px;width:817px;height:296px;background:#4b4b4b;"></div>
<div class="a" style="left:101px;top:249px;width:28.5px;height:296px;background:#4b4b4b;"></div>
<div class="a" style="left:101px;top:254.2px;width:24.8px;height:8px;font-size:5.4px;color:#b0b0b0;font-weight:normal;text-align:right;line-height:8px;white-space:nowrap;letter-spacing:0px;">Input</div>
<div class="a" style="left:101px;top:266.1px;width:24.8px;height:8px;font-size:5.4px;color:#b0b0b0;font-weight:normal;text-align:right;line-height:8px;white-space:nowrap;letter-spacing:0px;">Audio FX</div>
<div class="a" style="left:101px;top:320.6px;width:24.8px;height:8px;font-size:5.4px;color:#b0b0b0;font-weight:normal;text-align:right;line-height:8px;white-space:nowrap;letter-spacing:0px;">Output</div>
<div class="a" style="left:101px;top:331.3px;width:24.8px;height:8px;font-size:5.4px;color:#b0b0b0;font-weight:normal;text-align:right;line-height:8px;white-space:nowrap;letter-spacing:0px;">Group</div>
<div class="a" style="left:101px;top:347.2px;width:24.8px;height:8px;font-size:5.4px;color:#b0b0b0;font-weight:normal;text-align:right;line-height:8px;white-space:nowrap;letter-spacing:0px;">Pan</div>
<div class="a" style="left:101px;top:363px;width:24.8px;height:8px;font-size:5.4px;color:#b0b0b0;font-weight:normal;text-align:right;line-height:8px;white-space:nowrap;letter-spacing:0px;">dB</div>
<div class="a" style="left:128.5px;top:249px;width:1.2px;height:274px;background:#3d3d3d;"></div>
<div class="a" style="left:131.9px;top:254.8px;width:8px;height:7px;background:#505050;border-radius:1.5px;"></div>
<div class="a" style="left:141.3px;top:254.8px;width:21.9px;height:7px;background:#565656;border-radius:1.5px;"></div>
<div class="a" style="left:141.3px;top:254.8px;width:21.9px;height:7px;font-size:5.6px;color:#d4d4d4;font-weight:normal;text-align:center;line-height:7px;white-space:nowrap;letter-spacing:0px;">Bus 7</div>
<svg class="a" style="left:132.3px;top:255px" width="8" height="7"><path d="M1.5 1v5h1M6.5 1v5h-1M1.5 1h1M6.5 1h-1" fill="none" stroke="#cfcfcf" stroke-width=".8"/><path d="M3.5 1.5v3M4.5 1.5v3" stroke="#cfcfcf" stroke-width=".6"/></svg>
<div class="a" style="left:131.9px;top:266px;width:31.4px;height:44px;background:#454545;border-radius:1px;"></div>
<div class="a" style="left:131.9px;top:266.7px;width:31.4px;height:7.1px;background:#1f5fc2;border-radius:2.5px;"></div>
<div class="a" style="left:131.9px;top:266.7px;width:31.4px;height:6.9px;font-size:5.5px;color:#eef2ff;font-weight:normal;text-align:center;line-height:6.9px;white-space:nowrap;letter-spacing:0px;overflow:hidden;-webkit-text-stroke-width:.05px;">Cnsl EQ</div>
<div class="a" style="left:131.9px;top:274.8px;width:31.4px;height:7.1px;background:#1f5fc2;border-radius:2.5px;"></div>
<div class="a" style="left:131.9px;top:274.8px;width:31.4px;height:6.9px;font-size:5.5px;color:#eef2ff;font-weight:normal;text-align:center;line-height:6.9px;white-space:nowrap;letter-spacing:0px;overflow:hidden;-webkit-text-stroke-width:.05px;">Channel EQ</div>
<div class="a" style="left:131.9px;top:282.9px;width:31.4px;height:7.1px;background:#1f5fc2;border-radius:2.5px;"></div>
<div class="a" style="left:131.9px;top:282.9px;width:31.4px;height:6.9px;font-size:5.5px;color:#eef2ff;font-weight:normal;text-align:center;line-height:6.9px;white-space:nowrap;letter-spacing:0px;overflow:hidden;-webkit-text-stroke-width:.05px;">Space D</div>
<div class="a" style="left:131.9px;top:321.4px;width:31.4px;height:6.6px;background:#555555;border-radius:1.5px;"></div>
<div class="a" style="left:131.9px;top:321.4px;width:31.4px;height:6.6px;font-size:6px;color:#d8d8d8;font-weight:normal;text-align:center;line-height:6.6px;white-space:nowrap;letter-spacing:-.05px;">Surround</div>
<div class="a" style="left:131.9px;top:331.6px;width:31.4px;height:7.5px;background:#272727;border-radius:1px;"></div>
<div class="a" style="left:131.9px;top:331.6px;width:31.4px;height:7.5px;font-size:5.4px;color:#e2bf45;font-weight:normal;text-align:center;line-height:7.5px;white-space:nowrap;letter-spacing:0px;overflow:hidden;">1: Vocals</div>
<svg class="a" style="left:129.1px;top:340px" width="37" height="22" viewBox="129.1 340 37 22"><circle cx="137.75" cy="358.55" r=".55" fill="#8c8c8c"/><circle cx="135.05" cy="353.89" r=".55" fill="#8c8c8c"/><circle cx="135.05" cy="348.51" r=".55" fill="#8c8c8c"/><circle cx="137.75" cy="343.85" r=".55" fill="#8c8c8c"/><circle cx="142.41" cy="341.15" r=".55" fill="#8c8c8c"/><circle cx="147.79" cy="341.15" r=".55" fill="#8c8c8c"/><circle cx="152.45" cy="343.85" r=".55" fill="#8c8c8c"/><circle cx="155.15" cy="348.51" r=".55" fill="#8c8c8c"/><circle cx="155.15" cy="353.89" r=".55" fill="#8c8c8c"/><circle cx="145.1" cy="351.2" r="8.3" fill="#272727"/><circle cx="145.1" cy="351.2" r="8.3" fill="none" stroke="#202020" stroke-width=".6"/><circle cx="145.1" cy="349.6" r="1.1" fill="#3ddc5c"/><line x1="159.1" y1="343.3" x2="159.1" y2="359.7" stroke="#1e1e1e" stroke-width="1"/><circle cx="159.1" cy="358.6" r="1.4" fill="#3ddc5c"/></svg>
<div class="a" style="left:131.9px;top:362.9px;width:15.1px;height:8.2px;background:#262626;border-radius:1px;"></div>
<div class="a" style="left:131.9px;top:362.9px;width:15.1px;height:8.2px;font-size:5.6px;color:#e6e6e6;font-weight:normal;text-align:center;line-height:8.2px;white-space:nowrap;letter-spacing:0px;">-1.3</div>
<div class="a" style="left:148.1px;top:362.9px;width:15.2px;height:8.2px;background:#262626;border-radius:1px;"></div>
<div class="a" style="left:148.1px;top:362.9px;width:15.2px;height:8.2px;font-size:5.6px;color:#4ee06a;font-weight:normal;text-align:center;line-height:8.2px;white-space:nowrap;letter-spacing:0px;">-26.7</div>
<svg class="a" style="left:129.1px;top:376px" width="37" height="122" viewBox="129.1 376 37 122"><rect x="132.7" y="382" width="5" height=".7" fill="#7a7a7a"/><rect x="135.4" y="386.67" width="2.2" height=".6" fill="#666"/><rect x="135.4" y="391.33" width="2.2" height=".6" fill="#666"/><rect x="132.7" y="396" width="5" height=".7" fill="#7a7a7a"/><rect x="135.4" y="400.8" width="2.2" height=".6" fill="#666"/><rect x="135.4" y="405.6" width="2.2" height=".6" fill="#666"/><rect x="132.7" y="410.4" width="5" height=".7" fill="#7a7a7a"/><rect x="135.4" y="415.07" width="2.2" height=".6" fill="#666"/><rect x="135.4" y="419.73" width="2.2" height=".6" fill="#666"/><rect x="132.7" y="424.4" width="5" height=".7" fill="#7a7a7a"/><rect x="135.4" y="429.27" width="2.2" height=".6" fill="#666"/><rect x="135.4" y="434.13" width="2.2" height=".6" fill="#666"/><rect x="132.7" y="439" width="5" height=".7" fill="#7a7a7a"/><rect x="135.4" y="442" width="2.2" height=".6" fill="#666"/><rect x="135.4" y="445" width="2.2" height=".6" fill="#666"/><rect x="132.7" y="448" width="5" height=".7" fill="#7a7a7a"/><rect x="135.4" y="452" width="2.2" height=".6" fill="#666"/><rect x="135.4" y="456" width="2.2" height=".6" fill="#666"/><rect x="132.7" y="460" width="5" height=".7" fill="#7a7a7a"/><rect x="135.4" y="463" width="2.2" height=".6" fill="#666"/><rect x="135.4" y="466" width="2.2" height=".6" fill="#666"/><rect x="132.7" y="469" width="5" height=".7" fill="#7a7a7a"/><rect x="135.4" y="472.2" width="2.2" height=".6" fill="#666"/><rect x="135.4" y="475.4" width="2.2" height=".6" fill="#666"/><rect x="132.7" y="478.6" width="5" height=".7" fill="#7a7a7a"/><rect x="135.4" y="480.27" width="2.2" height=".6" fill="#666"/><rect x="135.4" y="481.93" width="2.2" height=".6" fill="#666"/><rect x="132.7" y="483.6" width="5" height=".7" fill="#7a7a7a"/><rect x="135.4" y="484.57" width="2.2" height=".6" fill="#666"/><rect x="135.4" y="485.53" width="2.2" height=".6" fill="#666"/><rect x="132.7" y="486.5" width="5" height=".7" fill="#7a7a7a"/><rect x="135.4" y="488.33" width="2.2" height=".6" fill="#666"/><rect x="135.4" y="490.17" width="2.2" height=".6" fill="#666"/><rect x="132.7" y="492" width="5" height=".7" fill="#7a7a7a"/><rect x="132.5" y="410" width="5.5" height="1.2" fill="#e0e0e0"/><rect x="138.85" y="381" width="1.1" height="112.5" fill="#1c1c1c"/><rect x="150.5" y="381.6" width="1.2" height=".7" fill="#6a6a6a"/><text x="150.3" y="382.9" font-size="3.7" fill="#9a9a9a" text-anchor="end" font-family="Liberation Sans">0</text><rect x="150.5" y="389.55" width="1.2" height=".7" fill="#6a6a6a"/><text x="150.3" y="390.85" font-size="3.7" fill="#9a9a9a" text-anchor="end" font-family="Liberation Sans">3</text><rect x="150.5" y="397.5" width="1.2" height=".7" fill="#6a6a6a"/><text x="150.3" y="398.8" font-size="3.7" fill="#9a9a9a" text-anchor="end" font-family="Liberation Sans">6</text><rect x="150.5" y="405.45" width="1.2" height=".7" fill="#6a6a6a"/><text x="150.3" y="406.75" font-size="3.7" fill="#9a9a9a" text-anchor="end" font-family="Liberation Sans">9</text><rect x="150.5" y="413.4" width="1.2" height=".7" fill="#6a6a6a"/><text x="150.3" y="414.7" font-size="3.7" fill="#9a9a9a" text-anchor="end" font-family="Liberation Sans">12</text><rect x="150.5" y="421.35" width="1.2" height=".7" fill="#6a6a6a"/><text x="150.3" y="422.65" font-size="3.7" fill="#9a9a9a" text-anchor="end" font-family="Liberation Sans">15</text><rect x="150.5" y="429.3" width="1.2" height=".7" fill="#6a6a6a"/><text x="150.3" y="430.6" font-size="3.7" fill="#9a9a9a" text-anchor="end" font-family="Liberation Sans">18</text><rect x="150.5" y="437.25" width="1.2" height=".7" fill="#6a6a6a"/><text x="150.3" y="438.55" font-size="3.7" fill="#9a9a9a" text-anchor="end" font-family="Liberation Sans">21</text><rect x="150.5" y="445.2" width="1.2" height=".7" fill="#6a6a6a"/><text x="150.3" y="446.5" font-size="3.7" fill="#9a9a9a" text-anchor="end" font-family="Liberation Sans">24</text><rect x="150.5" y="453.15" width="1.2" height=".7" fill="#6a6a6a"/><text x="150.3" y="454.45" font-size="3.7" fill="#9a9a9a" text-anchor="end" font-family="Liberation Sans">30</text><rect x="150.5" y="461.1" width="1.2" height=".7" fill="#6a6a6a"/><text x="150.3" y="462.4" font-size="3.7" fill="#9a9a9a" text-anchor="end" font-family="Liberation Sans">35</text><rect x="150.5" y="469.05" width="1.2" height=".7" fill="#6a6a6a"/><text x="150.3" y="470.35" font-size="3.7" fill="#9a9a9a" text-anchor="end" font-family="Liberation Sans">40</text><rect x="150.5" y="477" width="1.2" height=".7" fill="#6a6a6a"/><text x="150.3" y="478.3" font-size="3.7" fill="#9a9a9a" text-anchor="end" font-family="Liberation Sans">45</text><rect x="150.5" y="484.95" width="1.2" height=".7" fill="#6a6a6a"/><text x="150.3" y="486.25" font-size="3.7" fill="#9a9a9a" text-anchor="end" font-family="Liberation Sans">50</text><rect x="150.5" y="492.9" width="1.2" height=".7" fill="#6a6a6a"/><text x="150.3" y="494.2" font-size="3.7" fill="#9a9a9a" text-anchor="end" font-family="Liberation Sans">60</text><rect x="152.1" y="381" width="6.6" height="112.5" fill="#2a2a2a"/><rect x="152.1" y="412.6" width="6.6" height="2.6" fill="#4b4b4b"/><path d="M152.3 493.5 L152.3 486 L153.3 479 L154.3 472 L154.9 470 L155.7 475 L156.5 478 L157.5 474 L158.5 481 L158.5 493.5Z" fill="#3dd35c"/><rect x="153.5" y="407" width="1.2" height="5.4" fill="#3dd35c"/><rect x="156.3" y="407" width="1.2" height="5.4" fill="#3dd35c"/></svg>
<div class="a" style="left:112px;top:379.8px;width:13.5px;height:4.4px;font-size:3.8px;color:#a0a0a0;font-weight:normal;text-align:right;line-height:4.4px;white-space:nowrap;">6</div>
<div class="a" style="left:125.8px;top:381.7px;width:2.6px;height:0.7px;background:#7a7a7a;"></div>
<div class="a" style="left:112px;top:393.8px;width:13.5px;height:4.4px;font-size:3.8px;color:#a0a0a0;font-weight:normal;text-align:right;line-height:4.4px;white-space:nowrap;">3</div>
<div class="a" style="left:125.8px;top:395.7px;width:2.6px;height:0.7px;background:#7a7a7a;"></div>
<div class="a" style="left:112px;top:408.2px;width:13.5px;height:4.4px;font-size:3.8px;color:#a0a0a0;font-weight:normal;text-align:right;line-height:4.4px;white-space:nowrap;">0</div>
<div class="a" style="left:125.8px;top:410.1px;width:2.6px;height:0.7px;background:#7a7a7a;"></div>
<div class="a" style="left:112px;top:422.2px;width:13.5px;height:4.4px;font-size:3.8px;color:#a0a0a0;font-weight:normal;text-align:right;line-height:4.4px;white-space:nowrap;">-3</div>
<div class="a" style="left:125.8px;top:424.1px;width:2.6px;height:0.7px;background:#7a7a7a;"></div>
<div class="a" style="left:112px;top:436.8px;width:13.5px;height:4.4px;font-size:3.8px;color:#a0a0a0;font-weight:normal;text-align:right;line-height:4.4px;white-space:nowrap;">-6</div>
<div class="a" style="left:125.8px;top:438.7px;width:2.6px;height:0.7px;background:#7a7a7a;"></div>
<div class="a" style="left:112px;top:445.8px;width:13.5px;height:4.4px;font-size:3.8px;color:#a0a0a0;font-weight:normal;text-align:right;line-height:4.4px;white-space:nowrap;">-10</div>
<div class="a" style="left:125.8px;top:447.7px;width:2.6px;height:0.7px;background:#7a7a7a;"></div>
<div class="a" style="left:112px;top:457.8px;width:13.5px;height:4.4px;font-size:3.8px;color:#a0a0a0;font-weight:normal;text-align:right;line-height:4.4px;white-space:nowrap;">-15</div>
<div class="a" style="left:125.8px;top:459.7px;width:2.6px;height:0.7px;background:#7a7a7a;"></div>
<div class="a" style="left:112px;top:466.8px;width:13.5px;height:4.4px;font-size:3.8px;color:#a0a0a0;font-weight:normal;text-align:right;line-height:4.4px;white-space:nowrap;">-20</div>
<div class="a" style="left:125.8px;top:468.7px;width:2.6px;height:0.7px;background:#7a7a7a;"></div>
<div class="a" style="left:112px;top:476.4px;width:13.5px;height:4.4px;font-size:3.8px;color:#a0a0a0;font-weight:normal;text-align:right;line-height:4.4px;white-space:nowrap;">-30</div>
<div class="a" style="left:125.8px;top:478.3px;width:2.6px;height:0.7px;background:#7a7a7a;"></div>
<div class="a" style="left:112px;top:481.4px;width:13.5px;height:4.4px;font-size:3.8px;color:#a0a0a0;font-weight:normal;text-align:right;line-height:4.4px;white-space:nowrap;">-40</div>
<div class="a" style="left:125.8px;top:483.3px;width:2.6px;height:0.7px;background:#7a7a7a;"></div>
<div class="a" style="left:112px;top:484.3px;width:13.5px;height:4.4px;font-size:3.8px;color:#a0a0a0;font-weight:normal;text-align:right;line-height:4.4px;white-space:nowrap;">-60</div>
<div class="a" style="left:125.8px;top:486.2px;width:2.6px;height:0.7px;background:#7a7a7a;"></div>
<div class="a" style="left:112px;top:489.8px;width:13.5px;height:4.4px;font-size:3.8px;color:#a0a0a0;font-weight:normal;text-align:right;line-height:4.4px;white-space:nowrap;">-∞</div>
<div class="a" style="left:125.8px;top:491.7px;width:2.6px;height:0.7px;background:#7a7a7a;"></div>
<div class="a" style="left:134.7px;top:408px;width:8.4px;height:17px;background:linear-gradient(180deg,#d8d8d8 0%,#cfcfcf 17%,#a4a4a4 20%,#9c9c9c 48%,#5e5e5e 50%,#cbcbcb 54%,#c4c4c4 86%,#7c7c7c 90%,#6a6a6a 100%);border-radius:1px;box-shadow:0 1px 1px rgba(0,0,0,.45);"></div>
<div class="a" style="left:131.9px;top:505.7px;width:13.7px;height:7.1px;background:#585858;border-radius:1.5px;"></div>
<div class="a" style="left:131.9px;top:505.7px;width:13.7px;height:7.1px;font-size:6px;color:#e4e4e4;font-weight:normal;text-align:center;line-height:7.1px;white-space:nowrap;-webkit-text-stroke:.15px #e4e4e4;">M</div>
<div class="a" style="left:148.8px;top:505.7px;width:14.1px;height:7.1px;background:#585858;border-radius:1.5px;"></div>
<div class="a" style="left:148.8px;top:505.7px;width:14.1px;height:7.1px;font-size:6px;color:#e4e4e4;font-weight:normal;text-align:center;line-height:7.1px;white-space:nowrap;-webkit-text-stroke:.15px #e4e4e4;">S</div>
<div class="a" style="left:129.1px;top:523.2px;width:37.35px;height:21.8px;background:#1a9fd2;"></div>
<div class="a" style="left:128.8px;top:523.2px;width:0.6px;height:21.8px;background:rgba(0,0,0,.18);"></div>
<div class="a" style="left:129.1px;top:524.6px;width:37.35px;height:7.2px;font-size:5.5px;color:#ffffff;font-weight:normal;text-align:center;line-height:7.2px;white-space:nowrap;letter-spacing:0px;-webkit-text-stroke-width:0;">Vocal</div>
<div class="a" style="left:129.1px;top:531px;width:37.35px;height:7.2px;font-size:5.5px;color:#ffffff;font-weight:normal;text-align:center;line-height:7.2px;white-space:nowrap;letter-spacing:0px;-webkit-text-stroke-width:0;">Textures</div>
<div class="a" style="left:165.85px;top:249px;width:1.2px;height:266.3px;background:#3d3d3d;"></div>
<div class="a" style="left:169.25px;top:254.8px;width:8px;height:7px;background:#505050;border-radius:1.5px;"></div>
<div class="a" style="left:178.65px;top:254.8px;width:21.9px;height:7px;background:#565656;border-radius:1.5px;"></div>
<div class="a" style="left:178.65px;top:254.8px;width:21.9px;height:7px;font-size:5.6px;color:#2e2e2e;font-weight:normal;text-align:center;line-height:7px;white-space:nowrap;letter-spacing:0px;">Input</div>
<svg class="a" style="left:169.45px;top:255px" width="9" height="7"><circle cx="3" cy="3.3" r="1.8" fill="none" stroke="#cfcfcf" stroke-width=".8"/><circle cx="5.6" cy="3.3" r="1.8" fill="none" stroke="#cfcfcf" stroke-width=".8"/></svg>
<div class="a" style="left:169.25px;top:266px;width:31.4px;height:44px;background:#454545;border-radius:1px;"></div>
<div class="a" style="left:169.25px;top:266.7px;width:31.4px;height:7.1px;background:#1f5fc2;border-radius:2.5px;"></div>
<div class="a" style="left:169.25px;top:266.7px;width:31.4px;height:6.9px;font-size:5.5px;color:#eef2ff;font-weight:normal;text-align:center;line-height:6.9px;white-space:nowrap;letter-spacing:0px;overflow:hidden;-webkit-text-stroke-width:.05px;">Noise Gate</div>
<div class="a" style="left:169.25px;top:274.8px;width:31.4px;height:7.1px;background:#1f5fc2;border-radius:2.5px;"></div>
<div class="a" style="left:169.25px;top:274.8px;width:31.4px;height:6.9px;font-size:5.5px;color:#eef2ff;font-weight:normal;text-align:center;line-height:6.9px;white-space:nowrap;letter-spacing:0px;overflow:hidden;-webkit-text-stroke-width:.05px;">Channel EQ</div>
<div class="a" style="left:169.25px;top:282.9px;width:31.4px;height:7.1px;background:#1f5fc2;border-radius:2.5px;"></div>
<div class="a" style="left:169.25px;top:282.9px;width:31.4px;height:6.9px;font-size:5.5px;color:#eef2ff;font-weight:normal;text-align:center;line-height:6.9px;white-space:nowrap;letter-spacing:0px;overflow:hidden;-webkit-text-stroke-width:.05px;">Compressor</div>
<div class="a" style="left:169.25px;top:291px;width:31.4px;height:7.1px;background:#1f5fc2;border-radius:2.5px;"></div>
<div class="a" style="left:169.25px;top:291px;width:31.4px;height:6.9px;font-size:5.5px;color:#eef2ff;font-weight:normal;text-align:center;line-height:6.9px;white-space:nowrap;letter-spacing:0px;overflow:hidden;-webkit-text-stroke-width:.05px;">Space D</div>
<div class="a" style="left:169.25px;top:321.4px;width:31.4px;height:6.6px;background:#555555;border-radius:1.5px;"></div>
<div class="a" style="left:169.25px;top:321.4px;width:31.4px;height:6.6px;font-size:6px;color:#d8d8d8;font-weight:normal;text-align:center;line-height:6.6px;white-space:nowrap;letter-spacing:-.05px;">Surround</div>
<div class="a" style="left:169.25px;top:331.6px;width:31.4px;height:7.5px;background:#272727;border-radius:1px;"></div>
<div class="a" style="left:169.25px;top:331.6px;width:31.4px;height:7.5px;font-size:5.4px;color:#e2bf45;font-weight:normal;text-align:center;line-height:7.5px;white-space:nowrap;letter-spacing:0px;overflow:hidden;">1: Vocals</div>
<svg class="a" style="left:166.45px;top:340px" width="37" height="22" viewBox="166.45 340 37 22"><circle cx="175.1" cy="358.55" r=".55" fill="#8c8c8c"/><circle cx="172.4" cy="353.89" r=".55" fill="#8c8c8c"/><circle cx="172.4" cy="348.51" r=".55" fill="#8c8c8c"/><circle cx="175.1" cy="343.85" r=".55" fill="#8c8c8c"/><circle cx="179.76" cy="341.15" r=".55" fill="#8c8c8c"/><circle cx="185.14" cy="341.15" r=".55" fill="#8c8c8c"/><circle cx="189.8" cy="343.85" r=".55" fill="#8c8c8c"/><circle cx="192.5" cy="348.51" r=".55" fill="#8c8c8c"/><circle cx="192.5" cy="353.89" r=".55" fill="#8c8c8c"/><circle cx="182.45" cy="351.2" r="8.3" fill="#272727"/><circle cx="182.45" cy="351.2" r="8.3" fill="none" stroke="#202020" stroke-width=".6"/><path d="M178.45 352.2h6v-5Z" fill="#2f5e35" stroke="#3ddc5c" stroke-width=".5"/><circle cx="180.95" cy="349.7" r="1.1" fill="#3ddc5c"/><line x1="196.45" y1="343.3" x2="196.45" y2="359.7" stroke="#1e1e1e" stroke-width="1"/><circle cx="196.45" cy="358.6" r="1.4" fill="#3ddc5c"/></svg>
<div class="a" style="left:169.25px;top:362.9px;width:15.1px;height:8.2px;background:#262626;border-radius:1px;"></div>
<div class="a" style="left:169.25px;top:362.9px;width:15.1px;height:8.2px;font-size:5.6px;color:#e6e6e6;font-weight:normal;text-align:center;line-height:8.2px;white-space:nowrap;letter-spacing:0px;">-7.3</div>
<div class="a" style="left:185.45px;top:362.9px;width:15.2px;height:8.2px;background:#262626;border-radius:1px;"></div>
<div class="a" style="left:185.45px;top:362.9px;width:15.2px;height:8.2px;font-size:5.6px;color:#4ee06a;font-weight:normal;text-align:center;line-height:8.2px;white-space:nowrap;letter-spacing:0px;">-21.1</div>
<svg class="a" style="left:166.45px;top:376px" width="37" height="122" viewBox="166.45 376 37 122"><rect x="170.05" y="382" width="5" height=".7" fill="#7a7a7a"/><rect x="172.75" y="386.67" width="2.2" height=".6" fill="#666"/><rect x="172.75" y="391.33" width="2.2" height=".6" fill="#666"/><rect x="170.05" y="396" width="5" height=".7" fill="#7a7a7a"/><rect x="172.75" y="400.8" width="2.2" height=".6" fill="#666"/><rect x="172.75" y="405.6" width="2.2" height=".6" fill="#666"/><rect x="170.05" y="410.4" width="5" height=".7" fill="#7a7a7a"/><rect x="172.75" y="415.07" width="2.2" height=".6" fill="#666"/><rect x="172.75" y="419.73" width="2.2" height=".6" fill="#666"/><rect x="170.05" y="424.4" width="5" height=".7" fill="#7a7a7a"/><rect x="172.75" y="429.27" width="2.2" height=".6" fill="#666"/><rect x="172.75" y="434.13" width="2.2" height=".6" fill="#666"/><rect x="170.05" y="439" width="5" height=".7" fill="#7a7a7a"/><rect x="172.75" y="442" width="2.2" height=".6" fill="#666"/><rect x="172.75" y="445" width="2.2" height=".6" fill="#666"/><rect x="170.05" y="448" width="5" height=".7" fill="#7a7a7a"/><rect x="172.75" y="452" width="2.2" height=".6" fill="#666"/><rect x="172.75" y="456" width="2.2" height=".6" fill="#666"/><rect x="170.05" y="460" width="5" height=".7" fill="#7a7a7a"/><rect x="172.75" y="463" width="2.2" height=".6" fill="#666"/><rect x="172.75" y="466" width="2.2" height=".6" fill="#666"/><rect x="170.05" y="469" width="5" height=".7" fill="#7a7a7a"/><rect x="172.75" y="472.2" width="2.2" height=".6" fill="#666"/><rect x="172.75" y="475.4" width="2.2" height=".6" fill="#666"/><rect x="170.05" y="478.6" width="5" height=".7" fill="#7a7a7a"/><rect x="172.75" y="480.27" width="2.2" height=".6" fill="#666"/><rect x="172.75" y="481.93" width="2.2" height=".6" fill="#666"/><rect x="170.05" y="483.6" width="5" height=".7" fill="#7a7a7a"/><rect x="172.75" y="484.57" width="2.2" height=".6" fill="#666"/><rect x="172.75" y="485.53" width="2.2" height=".6" fill="#666"/><rect x="170.05" y="486.5" width="5" height=".7" fill="#7a7a7a"/><rect x="172.75" y="488.33" width="2.2" height=".6" fill="#666"/><rect x="172.75" y="490.17" width="2.2" height=".6" fill="#666"/><rect x="170.05" y="492" width="5" height=".7" fill="#7a7a7a"/><rect x="169.85" y="410" width="5.5" height="1.2" fill="#e0e0e0"/><rect x="176.2" y="381" width="1.1" height="112.5" fill="#1c1c1c"/><rect x="187.85" y="381.6" width="1.2" height=".7" fill="#6a6a6a"/><text x="187.65" y="382.9" font-size="3.7" fill="#9a9a9a" text-anchor="end" font-family="Liberation Sans">0</text><rect x="187.85" y="389.55" width="1.2" height=".7" fill="#6a6a6a"/><text x="187.65" y="390.85" font-size="3.7" fill="#9a9a9a" text-anchor="end" font-family="Liberation Sans">3</text><rect x="187.85" y="397.5" width="1.2" height=".7" fill="#6a6a6a"/><text x="187.65" y="398.8" font-size="3.7" fill="#9a9a9a" text-anchor="end" font-family="Liberation Sans">6</text><rect x="187.85" y="405.45" width="1.2" height=".7" fill="#6a6a6a"/><text x="187.65" y="406.75" font-size="3.7" fill="#9a9a9a" text-anchor="end" font-family="Liberation Sans">9</text><rect x="187.85" y="413.4" width="1.2" height=".7" fill="#6a6a6a"/><text x="187.65" y="414.7" font-size="3.7" fill="#9a9a9a" text-anchor="end" font-family="Liberation Sans">12</text><rect x="187.85" y="421.35" width="1.2" height=".7" fill="#6a6a6a"/><text x="187.65" y="422.65" font-size="3.7" fill="#9a9a9a" text-anchor="end" font-family="Liberation Sans">15</text><rect x="187.85" y="429.3" width="1.2" height=".7" fill="#6a6a6a"/><text x="187.65" y="430.6" font-size="3.7" fill="#9a9a9a" text-anchor="end" font-family="Liberation Sans">18</text><rect x="187.85" y="437.25" width="1.2" height=".7" fill="#6a6a6a"/><text x="187.65" y="438.55" font-size="3.7" fill="#9a9a9a" text-anchor="end" font-family="Liberation Sans">21</text><rect x="187.85" y="445.2" width="1.2" height=".7" fill="#6a6a6a"/><text x="187.65" y="446.5" font-size="3.7" fill="#9a9a9a" text-anchor="end" font-family="Liberation Sans">24</text><rect x="187.85" y="453.15" width="1.2" height=".7" fill="#6a6a6a"/><text x="187.65" y="454.45" font-size="3.7" fill="#9a9a9a" text-anchor="end" font-family="Liberation Sans">30</text><rect x="187.85" y="461.1" width="1.2" height=".7" fill="#6a6a6a"/><text x="187.65" y="462.4" font-size="3.7" fill="#9a9a9a" text-anchor="end" font-family="Liberation Sans">35</text><rect x="187.85" y="469.05" width="1.2" height=".7" fill="#6a6a6a"/><text x="187.65" y="470.35" font-size="3.7" fill="#9a9a9a" text-anchor="end" font-family="Liberation Sans">40</text><rect x="187.85" y="477" width="1.2" height=".7" fill="#6a6a6a"/><text x="187.65" y="478.3" font-size="3.7" fill="#9a9a9a" text-anchor="end" font-family="Liberation Sans">45</text><rect x="187.85" y="484.95" width="1.2" height=".7" fill="#6a6a6a"/><text x="187.65" y="486.25" font-size="3.7" fill="#9a9a9a" text-anchor="end" font-family="Liberation Sans">50</text><rect x="187.85" y="492.9" width="1.2" height=".7" fill="#6a6a6a"/><text x="187.65" y="494.2" font-size="3.7" fill="#9a9a9a" text-anchor="end" font-family="Liberation Sans">60</text><rect x="190.05" y="381" width="5.4" height="112.5" fill="#2a2a2a"/><rect x="190.55" y="433" width="1.9" height="60.5" fill="#3dd35c"/><rect x="193.05" y="433" width="1.9" height="60.5" fill="#3dd35c"/></svg>
<div class="a" style="left:172.05px;top:432px;width:8.4px;height:17px;background:linear-gradient(180deg,#d8d8d8 0%,#cfcfcf 17%,#a4a4a4 20%,#9c9c9c 48%,#5e5e5e 50%,#cbcbcb 54%,#c4c4c4 86%,#7c7c7c 90%,#6a6a6a 100%);border-radius:1px;box-shadow:0 1px 1px rgba(0,0,0,.45);"></div>
<div class="a" style="left:186.45px;top:496.7px;width:6.7px;height:5.9px;background:#535353;border-radius:1.5px;"></div>
<div class="a" style="left:194.35px;top:496.7px;width:5.5px;height:5.9px;background:#535353;border-radius:1.5px;"></div>
<div class="a" style="left:186.45px;top:496.7px;width:6.7px;height:5.9px;font-size:5.4px;color:#c4c4c4;font-weight:normal;text-align:center;line-height:5.9px;white-space:nowrap;">R</div>
<div class="a" style="left:194.35px;top:496.7px;width:5.5px;height:5.9px;font-size:5.4px;color:#c4c4c4;font-weight:normal;text-align:center;line-height:5.9px;white-space:nowrap;">I</div>
<div class="a" style="left:169.25px;top:505.7px;width:13.7px;height:7.1px;background:#585858;border-radius:1.5px;"></div>
<div class="a" style="left:169.25px;top:505.7px;width:13.7px;height:7.1px;font-size:6px;color:#e4e4e4;font-weight:normal;text-align:center;line-height:7.1px;white-space:nowrap;-webkit-text-stroke:.15px #e4e4e4;">M</div>
<div class="a" style="left:186.15px;top:505.7px;width:14.1px;height:7.1px;background:#585858;border-radius:1.5px;"></div>
<div class="a" style="left:186.15px;top:505.7px;width:14.1px;height:7.1px;font-size:6px;color:#e4e4e4;font-weight:normal;text-align:center;line-height:7.1px;white-space:nowrap;-webkit-text-stroke:.15px #e4e4e4;">S</div>
<div class="a" style="left:166.45px;top:523.2px;width:37.35px;height:21.8px;background:#2388d3;"></div>
<div class="a" style="left:166.15px;top:523.2px;width:0.6px;height:21.8px;background:rgba(0,0,0,.18);"></div>
<div class="a" style="left:166.45px;top:524.6px;width:37.35px;height:7.2px;font-size:5.5px;color:#ffffff;font-weight:normal;text-align:center;line-height:7.2px;white-space:nowrap;letter-spacing:0px;-webkit-text-stroke-width:0;">Distant</div>
<div class="a" style="left:166.45px;top:531px;width:37.35px;height:7.2px;font-size:5.5px;color:#ffffff;font-weight:normal;text-align:center;line-height:7.2px;white-space:nowrap;letter-spacing:0px;-webkit-text-stroke-width:0;">Vocals</div>
<div class="a" style="left:203.2px;top:249px;width:1.2px;height:266.3px;background:#3d3d3d;"></div>
<div class="a" style="left:206.6px;top:254.8px;width:8px;height:7px;background:#505050;border-radius:1.5px;"></div>
<div class="a" style="left:216px;top:254.8px;width:21.9px;height:7px;background:#565656;border-radius:1.5px;"></div>
<div class="a" style="left:216px;top:254.8px;width:21.9px;height:7px;font-size:5.6px;color:#2e2e2e;font-weight:normal;text-align:center;line-height:7px;white-space:nowrap;letter-spacing:0px;">Input</div>
<svg class="a" style="left:207px;top:255px" width="8" height="7"><path d="M1.5 1v5h1M6.5 1v5h-1M1.5 1h1M6.5 1h-1" fill="none" stroke="#cfcfcf" stroke-width=".8"/><path d="M3.5 1.5v3M4.5 1.5v3" stroke="#cfcfcf" stroke-width=".6"/></svg>
<div class="a" style="left:206.6px;top:266px;width:31.4px;height:44px;background:#454545;border-radius:1px;"></div>
<div class="a" style="left:206.6px;top:266.7px;width:31.4px;height:7.1px;background:#1f5fc2;border-radius:2.5px;"></div>
<div class="a" style="left:206.6px;top:266.7px;width:31.4px;height:6.9px;font-size:5.5px;color:#eef2ff;font-weight:normal;text-align:center;line-height:6.9px;white-space:nowrap;letter-spacing:0px;overflow:hidden;-webkit-text-stroke-width:.05px;">Noise Gate</div>
<div class="a" style="left:206.6px;top:274.8px;width:31.4px;height:7.1px;background:#1f5fc2;border-radius:2.5px;"></div>
<div class="a" style="left:206.6px;top:274.8px;width:31.4px;height:6.9px;font-size:5.5px;color:#eef2ff;font-weight:normal;text-align:center;line-height:6.9px;white-space:nowrap;letter-spacing:0px;overflow:hidden;-webkit-text-stroke-width:.05px;">Channel EQ</div>
<div class="a" style="left:206.6px;top:282.9px;width:31.4px;height:7.1px;background:#1f5fc2;border-radius:2.5px;"></div>
<div class="a" style="left:206.6px;top:282.9px;width:31.4px;height:6.9px;font-size:5.5px;color:#eef2ff;font-weight:normal;text-align:center;line-height:6.9px;white-space:nowrap;letter-spacing:0px;overflow:hidden;-webkit-text-stroke-width:.05px;">Compressor</div>
<div class="a" style="left:206.6px;top:291px;width:31.4px;height:7.1px;background:#1f5fc2;border-radius:2.5px;"></div>
<div class="a" style="left:206.6px;top:291px;width:31.4px;height:6.9px;font-size:5.5px;color:#eef2ff;font-weight:normal;text-align:center;line-height:6.9px;white-space:nowrap;letter-spacing:0px;overflow:hidden;-webkit-text-stroke-width:.05px;">St-Delay</div>
<div class="a" style="left:206.6px;top:321.4px;width:31.4px;height:6.6px;background:#555555;border-radius:1.5px;"></div>
<div class="a" style="left:206.6px;top:321.4px;width:31.4px;height:6.6px;font-size:6px;color:#d8d8d8;font-weight:normal;text-align:center;line-height:6.6px;white-space:nowrap;letter-spacing:-.05px;">Surround</div>
<div class="a" style="left:206.6px;top:331.6px;width:31.4px;height:7.5px;background:#272727;border-radius:1px;"></div>
<div class="a" style="left:206.6px;top:331.6px;width:31.4px;height:7.5px;font-size:5.4px;color:#e2bf45;font-weight:normal;text-align:center;line-height:7.5px;white-space:nowrap;letter-spacing:0px;overflow:hidden;">1: Vocals</div>
<svg class="a" style="left:203.8px;top:340px" width="37" height="22" viewBox="203.8 340 37 22"><circle cx="212.45" cy="358.55" r=".55" fill="#8c8c8c"/><circle cx="209.75" cy="353.89" r=".55" fill="#8c8c8c"/><circle cx="209.75" cy="348.51" r=".55" fill="#8c8c8c"/><circle cx="212.45" cy="343.85" r=".55" fill="#8c8c8c"/><circle cx="217.11" cy="341.15" r=".55" fill="#8c8c8c"/><circle cx="222.49" cy="341.15" r=".55" fill="#8c8c8c"/><circle cx="227.15" cy="343.85" r=".55" fill="#8c8c8c"/><circle cx="229.85" cy="348.51" r=".55" fill="#8c8c8c"/><circle cx="229.85" cy="353.89" r=".55" fill="#8c8c8c"/><circle cx="219.8" cy="351.2" r="8.3" fill="#272727"/><circle cx="219.8" cy="351.2" r="8.3" fill="none" stroke="#202020" stroke-width=".6"/><circle cx="219.8" cy="349.6" r="1.1" fill="#3ddc5c"/><line x1="233.8" y1="343.3" x2="233.8" y2="359.7" stroke="#1e1e1e" stroke-width="1"/><circle cx="233.8" cy="358.6" r="1.4" fill="#3ddc5c"/></svg>
<div class="a" style="left:206.6px;top:362.9px;width:15.1px;height:8.2px;background:#262626;border-radius:1px;"></div>
<div class="a" style="left:206.6px;top:362.9px;width:15.1px;height:8.2px;font-size:5.6px;color:#e6e6e6;font-weight:normal;text-align:center;line-height:8.2px;white-space:nowrap;letter-spacing:0px;">-1.9</div>
<div class="a" style="left:222.8px;top:362.9px;width:15.2px;height:8.2px;background:#262626;border-radius:1px;"></div>
<div class="a" style="left:222.8px;top:362.9px;width:15.2px;height:8.2px;font-size:5.6px;color:#4ee06a;font-weight:normal;text-align:center;line-height:8.2px;white-space:nowrap;letter-spacing:0px;">-18.7</div>
<svg class="a" style="left:203.8px;top:376px" width="37" height="122" viewBox="203.8 376 37 122"><rect x="207.4" y="382" width="5" height=".7" fill="#7a7a7a"/><rect x="210.1" y="386.67" width="2.2" height=".6" fill="#666"/><rect x="210.1" y="391.33" width="2.2" height=".6" fill="#666"/><rect x="207.4" y="396" width="5" height=".7" fill="#7a7a7a"/><rect x="210.1" y="400.8" width="2.2" height=".6" fill="#666"/><rect x="210.1" y="405.6" width="2.2" height=".6" fill="#666"/><rect x="207.4" y="410.4" width="5" height=".7" fill="#7a7a7a"/><rect x="210.1" y="415.07" width="2.2" height=".6" fill="#666"/><rect x="210.1" y="419.73" width="2.2" height=".6" fill="#666"/><rect x="207.4" y="424.4" width="5" height=".7" fill="#7a7a7a"/><rect x="210.1" y="429.27" width="2.2" height=".6" fill="#666"/><rect x="210.1" y="434.13" width="2.2" height=".6" fill="#666"/><rect x="207.4" y="439" width="5" height=".7" fill="#7a7a7a"/><rect x="210.1" y="442" width="2.2" height=".6" fill="#666"/><rect x="210.1" y="445" width="2.2" height=".6" fill="#666"/><rect x="207.4" y="448" width="5" height=".7" fill="#7a7a7a"/><rect x="210.1" y="452" width="2.2" height=".6" fill="#666"/><rect x="210.1" y="456" width="2.2" height=".6" fill="#666"/><rect x="207.4" y="460" width="5" height=".7" fill="#7a7a7a"/><rect x="210.1" y="463" width="2.2" height=".6" fill="#666"/><rect x="210.1" y="466" width="2.2" height=".6" fill="#666"/><rect x="207.4" y="469" width="5" height=".7" fill="#7a7a7a"/><rect x="210.1" y="472.2" width="2.2" height=".6" fill="#666"/><rect x="210.1" y="475.4" width="2.2" height=".6" fill="#666"/><rect x="207.4" y="478.6" width="5" height=".7" fill="#7a7a7a"/><rect x="210.1" y="480.27" width="2.2" height=".6" fill="#666"/><rect x="210.1" y="481.93" width="2.2" height=".6" fill="#666"/><rect x="207.4" y="483.6" width="5" height=".7" fill="#7a7a7a"/><rect x="210.1" y="484.57" width="2.2" height=".6" fill="#666"/><rect x="210.1" y="485.53" width="2.2" height=".6" fill="#666"/><rect x="207.4" y="486.5" width="5" height=".7" fill="#7a7a7a"/><rect x="210.1" y="488.33" width="2.2" height=".6" fill="#666"/><rect x="210.1" y="490.17" width="2.2" height=".6" fill="#666"/><rect x="207.4" y="492" width="5" height=".7" fill="#7a7a7a"/><rect x="207.2" y="410" width="5.5" height="1.2" fill="#e0e0e0"/><rect x="213.55" y="381" width="1.1" height="112.5" fill="#1c1c1c"/><rect x="225.2" y="381.6" width="1.2" height=".7" fill="#6a6a6a"/><text x="225" y="382.9" font-size="3.7" fill="#9a9a9a" text-anchor="end" font-family="Liberation Sans">0</text><rect x="225.2" y="389.55" width="1.2" height=".7" fill="#6a6a6a"/><text x="225" y="390.85" font-size="3.7" fill="#9a9a9a" text-anchor="end" font-family="Liberation Sans">3</text><rect x="225.2" y="397.5" width="1.2" height=".7" fill="#6a6a6a"/><text x="225" y="398.8" font-size="3.7" fill="#9a9a9a" text-anchor="end" font-family="Liberation Sans">6</text><rect x="225.2" y="405.45" width="1.2" height=".7" fill="#6a6a6a"/><text x="225" y="406.75" font-size="3.7" fill="#9a9a9a" text-anchor="end" font-family="Liberation Sans">9</text><rect x="225.2" y="413.4" width="1.2" height=".7" fill="#6a6a6a"/><text x="225" y="414.7" font-size="3.7" fill="#9a9a9a" text-anchor="end" font-family="Liberation Sans">12</text><rect x="225.2" y="421.35" width="1.2" height=".7" fill="#6a6a6a"/><text x="225" y="422.65" font-size="3.7" fill="#9a9a9a" text-anchor="end" font-family="Liberation Sans">15</text><rect x="225.2" y="429.3" width="1.2" height=".7" fill="#6a6a6a"/><text x="225" y="430.6" font-size="3.7" fill="#9a9a9a" text-anchor="end" font-family="Liberation Sans">18</text><rect x="225.2" y="437.25" width="1.2" height=".7" fill="#6a6a6a"/><text x="225" y="438.55" font-size="3.7" fill="#9a9a9a" text-anchor="end" font-family="Liberation Sans">21</text><rect x="225.2" y="445.2" width="1.2" height=".7" fill="#6a6a6a"/><text x="225" y="446.5" font-size="3.7" fill="#9a9a9a" text-anchor="end" font-family="Liberation Sans">24</text><rect x="225.2" y="453.15" width="1.2" height=".7" fill="#6a6a6a"/><text x="225" y="454.45" font-size="3.7" fill="#9a9a9a" text-anchor="end" font-family="Liberation Sans">30</text><rect x="225.2" y="461.1" width="1.2" height=".7" fill="#6a6a6a"/><text x="225" y="462.4" font-size="3.7" fill="#9a9a9a" text-anchor="end" font-family="Liberation Sans">35</text><rect x="225.2" y="469.05" width="1.2" height=".7" fill="#6a6a6a"/><text x="225" y="470.35" font-size="3.7" fill="#9a9a9a" text-anchor="end" font-family="Liberation Sans">40</text><rect x="225.2" y="477" width="1.2" height=".7" fill="#6a6a6a"/><text x="225" y="478.3" font-size="3.7" fill="#9a9a9a" text-anchor="end" font-family="Liberation Sans">45</text><rect x="225.2" y="484.95" width="1.2" height=".7" fill="#6a6a6a"/><text x="225" y="486.25" font-size="3.7" fill="#9a9a9a" text-anchor="end" font-family="Liberation Sans">50</text><rect x="225.2" y="492.9" width="1.2" height=".7" fill="#6a6a6a"/><text x="225" y="494.2" font-size="3.7" fill="#9a9a9a" text-anchor="end" font-family="Liberation Sans">60</text><rect x="226.8" y="381" width="6.6" height="112.5" fill="#2a2a2a"/><rect x="226.8" y="412.6" width="6.6" height="2.6" fill="#4b4b4b"/></svg>
<div class="a" style="left:209.4px;top:410px;width:8.4px;height:17px;background:linear-gradient(180deg,#d8d8d8 0%,#cfcfcf 17%,#a4a4a4 20%,#9c9c9c 48%,#5e5e5e 50%,#cbcbcb 54%,#c4c4c4 86%,#7c7c7c 90%,#6a6a6a 100%);border-radius:1px;box-shadow:0 1px 1px rgba(0,0,0,.45);"></div>
<div class="a" style="left:223.8px;top:496.7px;width:6.7px;height:5.9px;background:#535353;border-radius:1.5px;"></div>
<div class="a" style="left:231.7px;top:496.7px;width:5.5px;height:5.9px;background:#535353;border-radius:1.5px;"></div>
<div class="a" style="left:223.8px;top:496.7px;width:6.7px;height:5.9px;font-size:5.4px;color:#c4c4c4;font-weight:normal;text-align:center;line-height:5.9px;white-space:nowrap;">R</div>
<div class="a" style="left:231.7px;top:496.7px;width:5.5px;height:5.9px;font-size:5.4px;color:#c4c4c4;font-weight:normal;text-align:center;line-height:5.9px;white-space:nowrap;">I</div>
<div class="a" style="left:206.6px;top:505.7px;width:13.7px;height:7.1px;background:#585858;border-radius:1.5px;"></div>
<div class="a" style="left:206.6px;top:505.7px;width:13.7px;height:7.1px;font-size:6px;color:#e4e4e4;font-weight:normal;text-align:center;line-height:7.1px;white-space:nowrap;-webkit-text-stroke:.15px #e4e4e4;">M</div>
<div class="a" style="left:223.5px;top:505.7px;width:14.1px;height:7.1px;background:#585858;border-radius:1.5px;"></div>
<div class="a" style="left:223.5px;top:505.7px;width:14.1px;height:7.1px;font-size:6px;color:#e4e4e4;font-weight:normal;text-align:center;line-height:7.1px;white-space:nowrap;-webkit-text-stroke:.15px #e4e4e4;">S</div>
<div class="a" style="left:203.8px;top:523.2px;width:37.35px;height:21.8px;background:#2e70da;"></div>
<div class="a" style="left:203.5px;top:523.2px;width:0.6px;height:21.8px;background:rgba(0,0,0,.18);"></div>
<div class="a" style="left:203.8px;top:524.6px;width:37.35px;height:7.2px;font-size:5.5px;color:#ffffff;font-weight:normal;text-align:center;line-height:7.2px;white-space:nowrap;letter-spacing:0px;-webkit-text-stroke-width:0;">Near</div>
<div class="a" style="left:203.8px;top:531px;width:37.35px;height:7.2px;font-size:5.5px;color:#ffffff;font-weight:normal;text-align:center;line-height:7.2px;white-space:nowrap;letter-spacing:0px;-webkit-text-stroke-width:0;">Vocals</div>
<div class="a" style="left:240.55px;top:249px;width:1.2px;height:266.3px;background:#3d3d3d;"></div>
<div class="a" style="left:243.95px;top:254.8px;width:8px;height:7px;background:#505050;border-radius:1.5px;"></div>
<div class="a" style="left:253.35px;top:254.8px;width:21.9px;height:7px;background:#565656;border-radius:1.5px;"></div>
<div class="a" style="left:253.35px;top:254.8px;width:21.9px;height:7px;font-size:5.6px;color:#2e2e2e;font-weight:normal;text-align:center;line-height:7px;white-space:nowrap;letter-spacing:0px;">Input</div>
<svg class="a" style="left:244.35px;top:255px" width="8" height="7"><path d="M1.5 1v5h1M6.5 1v5h-1M1.5 1h1M6.5 1h-1" fill="none" stroke="#cfcfcf" stroke-width=".8"/><path d="M3.5 1.5v3M4.5 1.5v3" stroke="#cfcfcf" stroke-width=".6"/></svg>
<div class="a" style="left:243.95px;top:266px;width:31.4px;height:44px;background:#454545;border-radius:1px;"></div>
<div class="a" style="left:243.95px;top:266.7px;width:31.4px;height:7.1px;background:#1f5fc2;border-radius:2.5px;"></div>
<div class="a" style="left:243.95px;top:266.7px;width:31.4px;height:6.9px;font-size:5.5px;color:#eef2ff;font-weight:normal;text-align:center;line-height:6.9px;white-space:nowrap;letter-spacing:0px;overflow:hidden;-webkit-text-stroke-width:.05px;">Noise Gate</div>
<div class="a" style="left:243.95px;top:274.8px;width:31.4px;height:7.1px;background:#1f5fc2;border-radius:2.5px;"></div>
<div class="a" style="left:243.95px;top:274.8px;width:31.4px;height:6.9px;font-size:5.5px;color:#eef2ff;font-weight:normal;text-align:center;line-height:6.9px;white-space:nowrap;letter-spacing:0px;overflow:hidden;-webkit-text-stroke-width:.05px;">Cnsl EQ</div>
<div class="a" style="left:243.95px;top:282.9px;width:31.4px;height:7.1px;background:#1f5fc2;border-radius:2.5px;"></div>
<div class="a" style="left:243.95px;top:282.9px;width:31.4px;height:6.9px;font-size:5.5px;color:#eef2ff;font-weight:normal;text-align:center;line-height:6.9px;white-space:nowrap;letter-spacing:0px;overflow:hidden;-webkit-text-stroke-width:.05px;">Compressor</div>
<div class="a" style="left:243.95px;top:291px;width:31.4px;height:7.1px;background:#1f5fc2;border-radius:2.5px;"></div>
<div class="a" style="left:243.95px;top:291px;width:31.4px;height:6.9px;font-size:5.5px;color:#eef2ff;font-weight:normal;text-align:center;line-height:6.9px;white-space:nowrap;letter-spacing:0px;overflow:hidden;-webkit-text-stroke-width:.05px;">Delay D</div>
<div class="a" style="left:243.95px;top:321.4px;width:31.4px;height:6.6px;background:#555555;border-radius:1.5px;"></div>
<div class="a" style="left:243.95px;top:321.4px;width:31.4px;height:6.6px;font-size:6px;color:#d8d8d8;font-weight:normal;text-align:center;line-height:6.6px;white-space:nowrap;letter-spacing:-.05px;">Surround</div>
<div class="a" style="left:243.95px;top:331.6px;width:31.4px;height:7.5px;background:#272727;border-radius:1px;"></div>
<div class="a" style="left:243.95px;top:331.6px;width:31.4px;height:7.5px;font-size:5.4px;color:#e2bf45;font-weight:normal;text-align:center;line-height:7.5px;white-space:nowrap;letter-spacing:0px;overflow:hidden;">1: Vocals</div>
<svg class="a" style="left:241.15px;top:340px" width="37" height="22" viewBox="241.15 340 37 22"><circle cx="249.8" cy="358.55" r=".55" fill="#8c8c8c"/><circle cx="247.1" cy="353.89" r=".55" fill="#8c8c8c"/><circle cx="247.1" cy="348.51" r=".55" fill="#8c8c8c"/><circle cx="249.8" cy="343.85" r=".55" fill="#8c8c8c"/><circle cx="254.46" cy="341.15" r=".55" fill="#8c8c8c"/><circle cx="259.84" cy="341.15" r=".55" fill="#8c8c8c"/><circle cx="264.5" cy="343.85" r=".55" fill="#8c8c8c"/><circle cx="267.2" cy="348.51" r=".55" fill="#8c8c8c"/><circle cx="267.2" cy="353.89" r=".55" fill="#8c8c8c"/><circle cx="257.15" cy="351.2" r="8.3" fill="#272727"/><circle cx="257.15" cy="351.2" r="8.3" fill="none" stroke="#202020" stroke-width=".6"/><circle cx="257.15" cy="349.6" r="1.1" fill="#3ddc5c"/><line x1="271.15" y1="343.3" x2="271.15" y2="359.7" stroke="#1e1e1e" stroke-width="1"/><circle cx="271.15" cy="358.6" r="1.4" fill="#3ddc5c"/></svg>
<div class="a" style="left:243.95px;top:362.9px;width:15.1px;height:8.2px;background:#262626;border-radius:1px;"></div>
<div class="a" style="left:243.95px;top:362.9px;width:15.1px;height:8.2px;font-size:5.6px;color:#e6e6e6;font-weight:normal;text-align:center;line-height:8.2px;white-space:nowrap;letter-spacing:0px;">-1.9</div>
<div class="a" style="left:260.15px;top:362.9px;width:15.2px;height:8.2px;background:#262626;border-radius:1px;"></div>
<div class="a" style="left:260.15px;top:362.9px;width:15.2px;height:8.2px;font-size:5.6px;color:#4ee06a;font-weight:normal;text-align:center;line-height:8.2px;white-space:nowrap;letter-spacing:0px;">-15.9</div>
<svg class="a" style="left:241.15px;top:376px" width="37" height="122" viewBox="241.15 376 37 122"><rect x="244.75" y="382" width="5" height=".7" fill="#7a7a7a"/><rect x="247.45" y="386.67" width="2.2" height=".6" fill="#666"/><rect x="247.45" y="391.33" width="2.2" height=".6" fill="#666"/><rect x="244.75" y="396" width="5" height=".7" fill="#7a7a7a"/><rect x="247.45" y="400.8" width="2.2" height=".6" fill="#666"/><rect x="247.45" y="405.6" width="2.2" height=".6" fill="#666"/><rect x="244.75" y="410.4" width="5" height=".7" fill="#7a7a7a"/><rect x="247.45" y="415.07" width="2.2" height=".6" fill="#666"/><rect x="247.45" y="419.73" width="2.2" height=".6" fill="#666"/><rect x="244.75" y="424.4" width="5" height=".7" fill="#7a7a7a"/><rect x="247.45" y="429.27" width="2.2" height=".6" fill="#666"/><rect x="247.45" y="434.13" width="2.2" height=".6" fill="#666"/><rect x="244.75" y="439" width="5" height=".7" fill="#7a7a7a"/><rect x="247.45" y="442" width="2.2" height=".6" fill="#666"/><rect x="247.45" y="445" width="2.2" height=".6" fill="#666"/><rect x="244.75" y="448" width="5" height=".7" fill="#7a7a7a"/><rect x="247.45" y="452" width="2.2" height=".6" fill="#666"/><rect x="247.45" y="456" width="2.2" height=".6" fill="#666"/><rect x="244.75" y="460" width="5" height=".7" fill="#7a7a7a"/><rect x="247.45" y="463" width="2.2" height=".6" fill="#666"/><rect x="247.45" y="466" width="2.2" height=".6" fill="#666"/><rect x="244.75" y="469" width="5" height=".7" fill="#7a7a7a"/><rect x="247.45" y="472.2" width="2.2" height=".6" fill="#666"/><rect x="247.45" y="475.4" width="2.2" height=".6" fill="#666"/><rect x="244.75" y="478.6" width="5" height=".7" fill="#7a7a7a"/><rect x="247.45" y="480.27" width="2.2" height=".6" fill="#666"/><rect x="247.45" y="481.93" width="2.2" height=".6" fill="#666"/><rect x="244.75" y="483.6" width="5" height=".7" fill="#7a7a7a"/><rect x="247.45" y="484.57" width="2.2" height=".6" fill="#666"/><rect x="247.45" y="485.53" width="2.2" height=".6" fill="#666"/><rect x="244.75" y="486.5" width="5" height=".7" fill="#7a7a7a"/><rect x="247.45" y="488.33" width="2.2" height=".6" fill="#666"/><rect x="247.45" y="490.17" width="2.2" height=".6" fill="#666"/><rect x="244.75" y="492" width="5" height=".7" fill="#7a7a7a"/><rect x="244.55" y="410" width="5.5" height="1.2" fill="#e0e0e0"/><rect x="250.9" y="381" width="1.1" height="112.5" fill="#1c1c1c"/><rect x="262.55" y="381.6" width="1.2" height=".7" fill="#6a6a6a"/><text x="262.35" y="382.9" font-size="3.7" fill="#9a9a9a" text-anchor="end" font-family="Liberation Sans">0</text><rect x="262.55" y="389.55" width="1.2" height=".7" fill="#6a6a6a"/><text x="262.35" y="390.85" font-size="3.7" fill="#9a9a9a" text-anchor="end" font-family="Liberation Sans">3</text><rect x="262.55" y="397.5" width="1.2" height=".7" fill="#6a6a6a"/><text x="262.35" y="398.8" font-size="3.7" fill="#9a9a9a" text-anchor="end" font-family="Liberation Sans">6</text><rect x="262.55" y="405.45" width="1.2" height=".7" fill="#6a6a6a"/><text x="262.35" y="406.75" font-size="3.7" fill="#9a9a9a" text-anchor="end" font-family="Liberation Sans">9</text><rect x="262.55" y="413.4" width="1.2" height=".7" fill="#6a6a6a"/><text x="262.35" y="414.7" font-size="3.7" fill="#9a9a9a" text-anchor="end" font-family="Liberation Sans">12</text><rect x="262.55" y="421.35" width="1.2" height=".7" fill="#6a6a6a"/><text x="262.35" y="422.65" font-size="3.7" fill="#9a9a9a" text-anchor="end" font-family="Liberation Sans">15</text><rect x="262.55" y="429.3" width="1.2" height=".7" fill="#6a6a6a"/><text x="262.35" y="430.6" font-size="3.7" fill="#9a9a9a" text-anchor="end" font-family="Liberation Sans">18</text><rect x="262.55" y="437.25" width="1.2" height=".7" fill="#6a6a6a"/><text x="262.35" y="438.55" font-size="3.7" fill="#9a9a9a" text-anchor="end" font-family="Liberation Sans">21</text><rect x="262.55" y="445.2" width="1.2" height=".7" fill="#6a6a6a"/><text x="262.35" y="446.5" font-size="3.7" fill="#9a9a9a" text-anchor="end" font-family="Liberation Sans">24</text><rect x="262.55" y="453.15" width="1.2" height=".7" fill="#6a6a6a"/><text x="262.35" y="454.45" font-size="3.7" fill="#9a9a9a" text-anchor="end" font-family="Liberation Sans">30</text><rect x="262.55" y="461.1" width="1.2" height=".7" fill="#6a6a6a"/><text x="262.35" y="462.4" font-size="3.7" fill="#9a9a9a" text-anchor="end" font-family="Liberation Sans">35</text><rect x="262.55" y="469.05" width="1.2" height=".7" fill="#6a6a6a"/><text x="262.35" y="470.35" font-size="3.7" fill="#9a9a9a" text-anchor="end" font-family="Liberation Sans">40</text><rect x="262.55" y="477" width="1.2" height=".7" fill="#6a6a6a"/><text x="262.35" y="478.3" font-size="3.7" fill="#9a9a9a" text-anchor="end" font-family="Liberation Sans">45</text><rect x="262.55" y="484.95" width="1.2" height=".7" fill="#6a6a6a"/><text x="262.35" y="486.25" font-size="3.7" fill="#9a9a9a" text-anchor="end" font-family="Liberation Sans">50</text><rect x="262.55" y="492.9" width="1.2" height=".7" fill="#6a6a6a"/><text x="262.35" y="494.2" font-size="3.7" fill="#9a9a9a" text-anchor="end" font-family="Liberation Sans">60</text><rect x="264.15" y="381" width="6.6" height="112.5" fill="#2a2a2a"/><rect x="264.15" y="412.6" width="6.6" height="2.6" fill="#4b4b4b"/><path d="M264.35 493.5 L264.35 490 L265.35 482 L266.35 474 L267.15 471 L267.95 476 L268.95 480 L269.75 478 L270.55 484 L270.55 493.5Z" fill="#3dd35c"/></svg>
<div class="a" style="left:246.75px;top:411px;width:8.4px;height:17px;background:linear-gradient(180deg,#d8d8d8 0%,#cfcfcf 17%,#a4a4a4 20%,#9c9c9c 48%,#5e5e5e 50%,#cbcbcb 54%,#c4c4c4 86%,#7c7c7c 90%,#6a6a6a 100%);border-radius:1px;box-shadow:0 1px 1px rgba(0,0,0,.45);"></div>
<div class="a" style="left:261.15px;top:496.7px;width:6.7px;height:5.9px;background:#535353;border-radius:1.5px;"></div>
<div class="a" style="left:269.05px;top:496.7px;width:5.5px;height:5.9px;background:#535353;border-radius:1.5px;"></div>
<div class="a" style="left:261.15px;top:496.7px;width:6.7px;height:5.9px;font-size:5.4px;color:#c4c4c4;font-weight:normal;text-align:center;line-height:5.9px;white-space:nowrap;">R</div>
<div class="a" style="left:269.05px;top:496.7px;width:5.5px;height:5.9px;font-size:5.4px;color:#c4c4c4;font-weight:normal;text-align:center;line-height:5.9px;white-space:nowrap;">I</div>
<div class="a" style="left:243.95px;top:505.7px;width:13.7px;height:7.1px;background:#585858;border-radius:1.5px;"></div>
<div class="a" style="left:243.95px;top:505.7px;width:13.7px;height:7.1px;font-size:6px;color:#e4e4e4;font-weight:normal;text-align:center;line-height:7.1px;white-space:nowrap;-webkit-text-stroke:.15px #e4e4e4;">M</div>
<div class="a" style="left:260.85px;top:505.7px;width:14.1px;height:7.1px;background:#585858;border-radius:1.5px;"></div>
<div class="a" style="left:260.85px;top:505.7px;width:14.1px;height:7.1px;font-size:6px;color:#e4e4e4;font-weight:normal;text-align:center;line-height:7.1px;white-space:nowrap;-webkit-text-stroke:.15px #e4e4e4;">S</div>
<div class="a" style="left:241.15px;top:523.2px;width:37.35px;height:21.8px;background:#3559da;"></div>
<div class="a" style="left:240.85px;top:523.2px;width:0.6px;height:21.8px;background:rgba(0,0,0,.18);"></div>
<div class="a" style="left:241.15px;top:524.6px;width:37.35px;height:7.2px;font-size:5.5px;color:#ffffff;font-weight:normal;text-align:center;line-height:7.2px;white-space:nowrap;letter-spacing:0px;-webkit-text-stroke-width:0;">Distant</div>
<div class="a" style="left:241.15px;top:531px;width:37.35px;height:7.2px;font-size:5.5px;color:#ffffff;font-weight:normal;text-align:center;line-height:7.2px;white-space:nowrap;letter-spacing:0px;-webkit-text-stroke-width:0;">Harmonies</div>
<div class="a" style="left:277.9px;top:249px;width:1.2px;height:266.3px;background:#3d3d3d;"></div>
<div class="a" style="left:281.3px;top:254.8px;width:8px;height:7px;background:#505050;border-radius:1.5px;"></div>
<div class="a" style="left:290.7px;top:254.8px;width:21.9px;height:7px;background:#565656;border-radius:1.5px;"></div>
<div class="a" style="left:290.7px;top:254.8px;width:21.9px;height:7px;font-size:5.6px;color:#2e2e2e;font-weight:normal;text-align:center;line-height:7px;white-space:nowrap;letter-spacing:0px;">Input</div>
<svg class="a" style="left:281.7px;top:255px" width="8" height="7"><circle cx="3.8" cy="3.3" r="1.8" fill="none" stroke="#cfcfcf" stroke-width=".8"/></svg>
<div class="a" style="left:281.3px;top:266px;width:31.4px;height:44px;background:#454545;border-radius:1px;"></div>
<div class="a" style="left:281.3px;top:266.7px;width:31.4px;height:7.1px;background:#1f5fc2;border-radius:2.5px;"></div>
<div class="a" style="left:281.3px;top:266.7px;width:31.4px;height:6.9px;font-size:5.5px;color:#eef2ff;font-weight:normal;text-align:center;line-height:6.9px;white-space:nowrap;letter-spacing:0px;overflow:hidden;-webkit-text-stroke-width:.05px;">Noise Gate</div>
<div class="a" style="left:281.3px;top:274.8px;width:31.4px;height:7.1px;background:#1f5fc2;border-radius:2.5px;"></div>
<div class="a" style="left:281.3px;top:274.8px;width:31.4px;height:6.9px;font-size:5.5px;color:#eef2ff;font-weight:normal;text-align:center;line-height:6.9px;white-space:nowrap;letter-spacing:0px;overflow:hidden;-webkit-text-stroke-width:.05px;">Graph EQ</div>
<div class="a" style="left:281.3px;top:282.9px;width:31.4px;height:7.1px;background:#1f5fc2;border-radius:2.5px;"></div>
<div class="a" style="left:281.3px;top:282.9px;width:31.4px;height:6.9px;font-size:5.5px;color:#eef2ff;font-weight:normal;text-align:center;line-height:6.9px;white-space:nowrap;letter-spacing:0px;overflow:hidden;-webkit-text-stroke-width:.05px;">Compressor</div>
<div class="a" style="left:281.3px;top:291px;width:31.4px;height:7.1px;background:#1f5fc2;border-radius:2.5px;"></div>
<div class="a" style="left:281.3px;top:291px;width:31.4px;height:6.9px;font-size:5.5px;color:#eef2ff;font-weight:normal;text-align:center;line-height:6.9px;white-space:nowrap;letter-spacing:0px;overflow:hidden;-webkit-text-stroke-width:.05px;">St-Delay</div>
<div class="a" style="left:281.3px;top:321.4px;width:31.4px;height:6.6px;background:#555555;border-radius:1.5px;"></div>
<div class="a" style="left:281.3px;top:321.4px;width:31.4px;height:6.6px;font-size:6px;color:#d8d8d8;font-weight:normal;text-align:center;line-height:6.6px;white-space:nowrap;letter-spacing:-.05px;">Object</div>
<div class="a" style="left:281.3px;top:331.6px;width:31.4px;height:7.5px;background:#272727;border-radius:1px;"></div>
<div class="a" style="left:281.3px;top:331.6px;width:31.4px;height:7.5px;font-size:5.4px;color:#e2bf45;font-weight:normal;text-align:center;line-height:7.5px;white-space:nowrap;letter-spacing:0px;overflow:hidden;">1: Vocals</div>
<svg class="a" style="left:278.5px;top:340px" width="37" height="22" viewBox="278.5 340 37 22"><rect x="287" y="343.7" width="15" height="15" fill="#3a3a3a" stroke="#242424" stroke-width=".8"/><line x1="290.75" y1="343.7" x2="290.75" y2="358.7" stroke="#333" stroke-width=".5"/><line x1="287" y1="347.45" x2="302" y2="347.45" stroke="#333" stroke-width=".5"/><line x1="294.5" y1="343.7" x2="294.5" y2="358.7" stroke="#333" stroke-width=".5"/><line x1="287" y1="351.2" x2="302" y2="351.2" stroke="#333" stroke-width=".5"/><line x1="298.25" y1="343.7" x2="298.25" y2="358.7" stroke="#333" stroke-width=".5"/><line x1="287" y1="354.95" x2="302" y2="354.95" stroke="#333" stroke-width=".5"/><rect x="294" y="352.2" width="7" height="6" fill="#3f6f45"/><circle cx="293.5" cy="352.2" r="1.1" fill="#3ddc5c"/><line x1="308.5" y1="343.3" x2="308.5" y2="359.7" stroke="#1e1e1e" stroke-width="1"/><circle cx="308.5" cy="350.5" r="1.4" fill="#3ddc5c"/></svg>
<div class="a" style="left:281.3px;top:362.9px;width:15.1px;height:8.2px;background:#262626;border-radius:1px;"></div>
<div class="a" style="left:281.3px;top:362.9px;width:15.1px;height:8.2px;font-size:5.6px;color:#e6e6e6;font-weight:normal;text-align:center;line-height:8.2px;white-space:nowrap;letter-spacing:0px;">-1.8</div>
<div class="a" style="left:297.5px;top:362.9px;width:15.2px;height:8.2px;background:#262626;border-radius:1px;"></div>
<div class="a" style="left:297.5px;top:362.9px;width:15.2px;height:8.2px;font-size:5.6px;color:#4ee06a;font-weight:normal;text-align:center;line-height:8.2px;white-space:nowrap;letter-spacing:0px;">-24.4</div>
<svg class="a" style="left:278.5px;top:376px" width="37" height="122" viewBox="278.5 376 37 122"><rect x="282.1" y="382" width="5" height=".7" fill="#7a7a7a"/><rect x="284.8" y="386.67" width="2.2" height=".6" fill="#666"/><rect x="284.8" y="391.33" width="2.2" height=".6" fill="#666"/><rect x="282.1" y="396" width="5" height=".7" fill="#7a7a7a"/><rect x="284.8" y="400.8" width="2.2" height=".6" fill="#666"/><rect x="284.8" y="405.6" width="2.2" height=".6" fill="#666"/><rect x="282.1" y="410.4" width="5" height=".7" fill="#7a7a7a"/><rect x="284.8" y="415.07" width="2.2" height=".6" fill="#666"/><rect x="284.8" y="419.73" width="2.2" height=".6" fill="#666"/><rect x="282.1" y="424.4" width="5" height=".7" fill="#7a7a7a"/><rect x="284.8" y="429.27" width="2.2" height=".6" fill="#666"/><rect x="284.8" y="434.13" width="2.2" height=".6" fill="#666"/><rect x="282.1" y="439" width="5" height=".7" fill="#7a7a7a"/><rect x="284.8" y="442" width="2.2" height=".6" fill="#666"/><rect x="284.8" y="445" width="2.2" height=".6" fill="#666"/><rect x="282.1" y="448" width="5" height=".7" fill="#7a7a7a"/><rect x="284.8" y="452" width="2.2" height=".6" fill="#666"/><rect x="284.8" y="456" width="2.2" height=".6" fill="#666"/><rect x="282.1" y="460" width="5" height=".7" fill="#7a7a7a"/><rect x="284.8" y="463" width="2.2" height=".6" fill="#666"/><rect x="284.8" y="466" width="2.2" height=".6" fill="#666"/><rect x="282.1" y="469" width="5" height=".7" fill="#7a7a7a"/><rect x="284.8" y="472.2" width="2.2" height=".6" fill="#666"/><rect x="284.8" y="475.4" width="2.2" height=".6" fill="#666"/><rect x="282.1" y="478.6" width="5" height=".7" fill="#7a7a7a"/><rect x="284.8" y="480.27" width="2.2" height=".6" fill="#666"/><rect x="284.8" y="481.93" width="2.2" height=".6" fill="#666"/><rect x="282.1" y="483.6" width="5" height=".7" fill="#7a7a7a"/><rect x="284.8" y="484.57" width="2.2" height=".6" fill="#666"/><rect x="284.8" y="485.53" width="2.2" height=".6" fill="#666"/><rect x="282.1" y="486.5" width="5" height=".7" fill="#7a7a7a"/><rect x="284.8" y="488.33" width="2.2" height=".6" fill="#666"/><rect x="284.8" y="490.17" width="2.2" height=".6" fill="#666"/><rect x="282.1" y="492" width="5" height=".7" fill="#7a7a7a"/><rect x="281.9" y="410" width="5.5" height="1.2" fill="#e0e0e0"/><rect x="288.25" y="381" width="1.1" height="112.5" fill="#1c1c1c"/><rect x="299.9" y="381.6" width="1.2" height=".7" fill="#6a6a6a"/><text x="299.7" y="382.9" font-size="3.7" fill="#9a9a9a" text-anchor="end" font-family="Liberation Sans">0</text><rect x="299.9" y="389.55" width="1.2" height=".7" fill="#6a6a6a"/><text x="299.7" y="390.85" font-size="3.7" fill="#9a9a9a" text-anchor="end" font-family="Liberation Sans">3</text><rect x="299.9" y="397.5" width="1.2" height=".7" fill="#6a6a6a"/><text x="299.7" y="398.8" font-size="3.7" fill="#9a9a9a" text-anchor="end" font-family="Liberation Sans">6</text><rect x="299.9" y="405.45" width="1.2" height=".7" fill="#6a6a6a"/><text x="299.7" y="406.75" font-size="3.7" fill="#9a9a9a" text-anchor="end" font-family="Liberation Sans">9</text><rect x="299.9" y="413.4" width="1.2" height=".7" fill="#6a6a6a"/><text x="299.7" y="414.7" font-size="3.7" fill="#9a9a9a" text-anchor="end" font-family="Liberation Sans">12</text><rect x="299.9" y="421.35" width="1.2" height=".7" fill="#6a6a6a"/><text x="299.7" y="422.65" font-size="3.7" fill="#9a9a9a" text-anchor="end" font-family="Liberation Sans">15</text><rect x="299.9" y="429.3" width="1.2" height=".7" fill="#6a6a6a"/><text x="299.7" y="430.6" font-size="3.7" fill="#9a9a9a" text-anchor="end" font-family="Liberation Sans">18</text><rect x="299.9" y="437.25" width="1.2" height=".7" fill="#6a6a6a"/><text x="299.7" y="438.55" font-size="3.7" fill="#9a9a9a" text-anchor="end" font-family="Liberation Sans">21</text><rect x="299.9" y="445.2" width="1.2" height=".7" fill="#6a6a6a"/><text x="299.7" y="446.5" font-size="3.7" fill="#9a9a9a" text-anchor="end" font-family="Liberation Sans">24</text><rect x="299.9" y="453.15" width="1.2" height=".7" fill="#6a6a6a"/><text x="299.7" y="454.45" font-size="3.7" fill="#9a9a9a" text-anchor="end" font-family="Liberation Sans">30</text><rect x="299.9" y="461.1" width="1.2" height=".7" fill="#6a6a6a"/><text x="299.7" y="462.4" font-size="3.7" fill="#9a9a9a" text-anchor="end" font-family="Liberation Sans">35</text><rect x="299.9" y="469.05" width="1.2" height=".7" fill="#6a6a6a"/><text x="299.7" y="470.35" font-size="3.7" fill="#9a9a9a" text-anchor="end" font-family="Liberation Sans">40</text><rect x="299.9" y="477" width="1.2" height=".7" fill="#6a6a6a"/><text x="299.7" y="478.3" font-size="3.7" fill="#9a9a9a" text-anchor="end" font-family="Liberation Sans">45</text><rect x="299.9" y="484.95" width="1.2" height=".7" fill="#6a6a6a"/><text x="299.7" y="486.25" font-size="3.7" fill="#9a9a9a" text-anchor="end" font-family="Liberation Sans">50</text><rect x="299.9" y="492.9" width="1.2" height=".7" fill="#6a6a6a"/><text x="299.7" y="494.2" font-size="3.7" fill="#9a9a9a" text-anchor="end" font-family="Liberation Sans">60</text><rect x="302.1" y="381" width="5.4" height="112.5" fill="#2a2a2a"/><rect x="302.6" y="448" width="1.9" height="45.5" fill="#3dd35c"/><rect x="305.1" y="448" width="1.9" height="45.5" fill="#3dd35c"/></svg>
<div class="a" style="left:284.1px;top:410.6px;width:8.4px;height:17.4px;background:linear-gradient(180deg,#d8d8d8 0%,#cfcfcf 17%,#a4a4a4 20%,#9c9c9c 48%,#5e5e5e 50%,#cbcbcb 54%,#c4c4c4 86%,#7c7c7c 90%,#6a6a6a 100%);border-radius:1px;box-shadow:0 1px 1px rgba(0,0,0,.45);"></div>
<div class="a" style="left:298.5px;top:496.7px;width:6.7px;height:5.9px;background:#535353;border-radius:1.5px;"></div>
<div class="a" style="left:306.4px;top:496.7px;width:5.5px;height:5.9px;background:#535353;border-radius:1.5px;"></div>
<div class="a" style="left:298.5px;top:496.7px;width:6.7px;height:5.9px;font-size:5.4px;color:#c4c4c4;font-weight:normal;text-align:center;line-height:5.9px;white-space:nowrap;">R</div>
<div class="a" style="left:306.4px;top:496.7px;width:5.5px;height:5.9px;font-size:5.4px;color:#c4c4c4;font-weight:normal;text-align:center;line-height:5.9px;white-space:nowrap;">I</div>
<div class="a" style="left:281.3px;top:505.7px;width:13.7px;height:7.1px;background:#585858;border-radius:1.5px;"></div>
<div class="a" style="left:281.3px;top:505.7px;width:13.7px;height:7.1px;font-size:6px;color:#e4e4e4;font-weight:normal;text-align:center;line-height:7.1px;white-space:nowrap;-webkit-text-stroke:.15px #e4e4e4;">M</div>
<div class="a" style="left:298.2px;top:505.7px;width:14.1px;height:7.1px;background:#585858;border-radius:1.5px;"></div>
<div class="a" style="left:298.2px;top:505.7px;width:14.1px;height:7.1px;font-size:6px;color:#e4e4e4;font-weight:normal;text-align:center;line-height:7.1px;white-space:nowrap;-webkit-text-stroke:.15px #e4e4e4;">S</div>
<div class="a" style="left:278.5px;top:523.2px;width:37.35px;height:21.8px;background:#3a3fdd;"></div>
<div class="a" style="left:278.2px;top:523.2px;width:0.6px;height:21.8px;background:rgba(0,0,0,.18);"></div>
<div class="a" style="left:278.5px;top:524.6px;width:37.35px;height:7.2px;font-size:5.5px;color:#ffffff;font-weight:normal;text-align:center;line-height:7.2px;white-space:nowrap;letter-spacing:0px;-webkit-text-stroke-width:0;">Main</div>
<div class="a" style="left:278.5px;top:531px;width:37.35px;height:7.2px;font-size:5.5px;color:#ffffff;font-weight:normal;text-align:center;line-height:7.2px;white-space:nowrap;letter-spacing:0px;-webkit-text-stroke-width:0;">Vocal</div>
<div class="a" style="left:315.25px;top:249px;width:1.2px;height:266.3px;background:#3d3d3d;"></div>
<div class="a" style="left:318.65px;top:254.8px;width:8px;height:7px;background:#505050;border-radius:1.5px;"></div>
<div class="a" style="left:328.05px;top:254.8px;width:21.9px;height:7px;background:#565656;border-radius:1.5px;"></div>
<div class="a" style="left:328.05px;top:254.8px;width:21.9px;height:7px;font-size:5.6px;color:#2e2e2e;font-weight:normal;text-align:center;line-height:7px;white-space:nowrap;letter-spacing:0px;">Input</div>
<svg class="a" style="left:319.05px;top:255px" width="8" height="7"><path d="M1.5 1v5h1M6.5 1v5h-1M1.5 1h1M6.5 1h-1" fill="none" stroke="#cfcfcf" stroke-width=".8"/><path d="M3.5 1.5v3M4.5 1.5v3" stroke="#cfcfcf" stroke-width=".6"/></svg>
<div class="a" style="left:318.65px;top:266px;width:31.4px;height:44px;background:#454545;border-radius:1px;"></div>
<div class="a" style="left:318.65px;top:266.7px;width:31.4px;height:7.1px;background:#1f5fc2;border-radius:2.5px;"></div>
<div class="a" style="left:318.65px;top:266.7px;width:31.4px;height:6.9px;font-size:5.5px;color:#eef2ff;font-weight:normal;text-align:center;line-height:6.9px;white-space:nowrap;letter-spacing:0px;overflow:hidden;-webkit-text-stroke-width:.05px;">Noise Gate</div>
<div class="a" style="left:318.65px;top:274.8px;width:31.4px;height:7.1px;background:#1f5fc2;border-radius:2.5px;"></div>
<div class="a" style="left:318.65px;top:274.8px;width:31.4px;height:6.9px;font-size:5.5px;color:#eef2ff;font-weight:normal;text-align:center;line-height:6.9px;white-space:nowrap;letter-spacing:0px;overflow:hidden;-webkit-text-stroke-width:.05px;">Tube EQ</div>
<div class="a" style="left:318.65px;top:282.9px;width:31.4px;height:7.1px;background:#1f5fc2;border-radius:2.5px;"></div>
<div class="a" style="left:318.65px;top:282.9px;width:31.4px;height:6.9px;font-size:5.5px;color:#eef2ff;font-weight:normal;text-align:center;line-height:6.9px;white-space:nowrap;letter-spacing:0px;overflow:hidden;-webkit-text-stroke-width:.05px;">Compressor</div>
<div class="a" style="left:318.65px;top:291px;width:31.4px;height:7.1px;background:#1f5fc2;border-radius:2.5px;"></div>
<div class="a" style="left:318.65px;top:291px;width:31.4px;height:6.9px;font-size:5.5px;color:#eef2ff;font-weight:normal;text-align:center;line-height:6.9px;white-space:nowrap;letter-spacing:0px;overflow:hidden;-webkit-text-stroke-width:.05px;">St-Delay</div>
<div class="a" style="left:318.65px;top:321.4px;width:31.4px;height:6.6px;background:#555555;border-radius:1.5px;"></div>
<div class="a" style="left:318.65px;top:321.4px;width:31.4px;height:6.6px;font-size:6px;color:#d8d8d8;font-weight:normal;text-align:center;line-height:6.6px;white-space:nowrap;letter-spacing:-.05px;">Surround</div>
<div class="a" style="left:318.65px;top:331.6px;width:31.4px;height:7.5px;background:#272727;border-radius:1px;"></div>
<div class="a" style="left:318.65px;top:331.6px;width:31.4px;height:7.5px;font-size:5.4px;color:#e2bf45;font-weight:normal;text-align:center;line-height:7.5px;white-space:nowrap;letter-spacing:0px;overflow:hidden;">1: Vocals</div>
<svg class="a" style="left:315.85px;top:340px" width="37" height="22" viewBox="315.85 340 37 22"><circle cx="324.5" cy="358.55" r=".55" fill="#8c8c8c"/><circle cx="321.8" cy="353.89" r=".55" fill="#8c8c8c"/><circle cx="321.8" cy="348.51" r=".55" fill="#8c8c8c"/><circle cx="324.5" cy="343.85" r=".55" fill="#8c8c8c"/><circle cx="329.16" cy="341.15" r=".55" fill="#8c8c8c"/><circle cx="334.54" cy="341.15" r=".55" fill="#8c8c8c"/><circle cx="339.2" cy="343.85" r=".55" fill="#8c8c8c"/><circle cx="341.9" cy="348.51" r=".55" fill="#8c8c8c"/><circle cx="341.9" cy="353.89" r=".55" fill="#8c8c8c"/><circle cx="331.85" cy="351.2" r="8.3" fill="#272727"/><circle cx="331.85" cy="351.2" r="8.3" fill="none" stroke="#202020" stroke-width=".6"/><circle cx="331.85" cy="349.6" r="1.1" fill="#3ddc5c"/><line x1="345.85" y1="343.3" x2="345.85" y2="359.7" stroke="#1e1e1e" stroke-width="1"/><circle cx="345.85" cy="358.6" r="1.4" fill="#3ddc5c"/></svg>
<div class="a" style="left:318.65px;top:362.9px;width:15.1px;height:8.2px;background:#262626;border-radius:1px;"></div>
<div class="a" style="left:318.65px;top:362.9px;width:15.1px;height:8.2px;font-size:5.6px;color:#e6e6e6;font-weight:normal;text-align:center;line-height:8.2px;white-space:nowrap;letter-spacing:0px;">-2.8</div>
<div class="a" style="left:334.85px;top:362.9px;width:15.2px;height:8.2px;background:#262626;border-radius:1px;"></div>
<div class="a" style="left:334.85px;top:362.9px;width:15.2px;height:8.2px;font-size:5.6px;color:#4ee06a;font-weight:normal;text-align:center;line-height:8.2px;white-space:nowrap;letter-spacing:0px;">-24.8</div>
<svg class="a" style="left:315.85px;top:376px" width="37" height="122" viewBox="315.85 376 37 122"><rect x="319.45" y="382" width="5" height=".7" fill="#7a7a7a"/><rect x="322.15" y="386.67" width="2.2" height=".6" fill="#666"/><rect x="322.15" y="391.33" width="2.2" height=".6" fill="#666"/><rect x="319.45" y="396" width="5" height=".7" fill="#7a7a7a"/><rect x="322.15" y="400.8" width="2.2" height=".6" fill="#666"/><rect x="322.15" y="405.6" width="2.2" height=".6" fill="#666"/><rect x="319.45" y="410.4" width="5" height=".7" fill="#7a7a7a"/><rect x="322.15" y="415.07" width="2.2" height=".6" fill="#666"/><rect x="322.15" y="419.73" width="2.2" height=".6" fill="#666"/><rect x="319.45" y="424.4" width="5" height=".7" fill="#7a7a7a"/><rect x="322.15" y="429.27" width="2.2" height=".6" fill="#666"/><rect x="322.15" y="434.13" width="2.2" height=".6" fill="#666"/><rect x="319.45" y="439" width="5" height=".7" fill="#7a7a7a"/><rect x="322.15" y="442" width="2.2" height=".6" fill="#666"/><rect x="322.15" y="445" width="2.2" height=".6" fill="#666"/><rect x="319.45" y="448" width="5" height=".7" fill="#7a7a7a"/><rect x="322.15" y="452" width="2.2" height=".6" fill="#666"/><rect x="322.15" y="456" width="2.2" height=".6" fill="#666"/><rect x="319.45" y="460" width="5" height=".7" fill="#7a7a7a"/><rect x="322.15" y="463" width="2.2" height=".6" fill="#666"/><rect x="322.15" y="466" width="2.2" height=".6" fill="#666"/><rect x="319.45" y="469" width="5" height=".7" fill="#7a7a7a"/><rect x="322.15" y="472.2" width="2.2" height=".6" fill="#666"/><rect x="322.15" y="475.4" width="2.2" height=".6" fill="#666"/><rect x="319.45" y="478.6" width="5" height=".7" fill="#7a7a7a"/><rect x="322.15" y="480.27" width="2.2" height=".6" fill="#666"/><rect x="322.15" y="481.93" width="2.2" height=".6" fill="#666"/><rect x="319.45" y="483.6" width="5" height=".7" fill="#7a7a7a"/><rect x="322.15" y="484.57" width="2.2" height=".6" fill="#666"/><rect x="322.15" y="485.53" width="2.2" height=".6" fill="#666"/><rect x="319.45" y="486.5" width="5" height=".7" fill="#7a7a7a"/><rect x="322.15" y="488.33" width="2.2" height=".6" fill="#666"/><rect x="322.15" y="490.17" width="2.2" height=".6" fill="#666"/><rect x="319.45" y="492" width="5" height=".7" fill="#7a7a7a"/><rect x="319.25" y="410" width="5.5" height="1.2" fill="#e0e0e0"/><rect x="325.6" y="381" width="1.1" height="112.5" fill="#1c1c1c"/><rect x="337.25" y="381.6" width="1.2" height=".7" fill="#6a6a6a"/><text x="337.05" y="382.9" font-size="3.7" fill="#9a9a9a" text-anchor="end" font-family="Liberation Sans">0</text><rect x="337.25" y="389.55" width="1.2" height=".7" fill="#6a6a6a"/><text x="337.05" y="390.85" font-size="3.7" fill="#9a9a9a" text-anchor="end" font-family="Liberation Sans">3</text><rect x="337.25" y="397.5" width="1.2" height=".7" fill="#6a6a6a"/><text x="337.05" y="398.8" font-size="3.7" fill="#9a9a9a" text-anchor="end" font-family="Liberation Sans">6</text><rect x="337.25" y="405.45" width="1.2" height=".7" fill="#6a6a6a"/><text x="337.05" y="406.75" font-size="3.7" fill="#9a9a9a" text-anchor="end" font-family="Liberation Sans">9</text><rect x="337.25" y="413.4" width="1.2" height=".7" fill="#6a6a6a"/><text x="337.05" y="414.7" font-size="3.7" fill="#9a9a9a" text-anchor="end" font-family="Liberation Sans">12</text><rect x="337.25" y="421.35" width="1.2" height=".7" fill="#6a6a6a"/><text x="337.05" y="422.65" font-size="3.7" fill="#9a9a9a" text-anchor="end" font-family="Liberation Sans">15</text><rect x="337.25" y="429.3" width="1.2" height=".7" fill="#6a6a6a"/><text x="337.05" y="430.6" font-size="3.7" fill="#9a9a9a" text-anchor="end" font-family="Liberation Sans">18</text><rect x="337.25" y="437.25" width="1.2" height=".7" fill="#6a6a6a"/><text x="337.05" y="438.55" font-size="3.7" fill="#9a9a9a" text-anchor="end" font-family="Liberation Sans">21</text><rect x="337.25" y="445.2" width="1.2" height=".7" fill="#6a6a6a"/><text x="337.05" y="446.5" font-size="3.7" fill="#9a9a9a" text-anchor="end" font-family="Liberation Sans">24</text><rect x="337.25" y="453.15" width="1.2" height=".7" fill="#6a6a6a"/><text x="337.05" y="454.45" font-size="3.7" fill="#9a9a9a" text-anchor="end" font-family="Liberation Sans">30</text><rect x="337.25" y="461.1" width="1.2" height=".7" fill="#6a6a6a"/><text x="337.05" y="462.4" font-size="3.7" fill="#9a9a9a" text-anchor="end" font-family="Liberation Sans">35</text><rect x="337.25" y="469.05" width="1.2" height=".7" fill="#6a6a6a"/><text x="337.05" y="470.35" font-size="3.7" fill="#9a9a9a" text-anchor="end" font-family="Liberation Sans">40</text><rect x="337.25" y="477" width="1.2" height=".7" fill="#6a6a6a"/><text x="337.05" y="478.3" font-size="3.7" fill="#9a9a9a" text-anchor="end" font-family="Liberation Sans">45</text><rect x="337.25" y="484.95" width="1.2" height=".7" fill="#6a6a6a"/><text x="337.05" y="486.25" font-size="3.7" fill="#9a9a9a" text-anchor="end" font-family="Liberation Sans">50</text><rect x="337.25" y="492.9" width="1.2" height=".7" fill="#6a6a6a"/><text x="337.05" y="494.2" font-size="3.7" fill="#9a9a9a" text-anchor="end" font-family="Liberation Sans">60</text><rect x="338.85" y="381" width="6.6" height="112.5" fill="#2a2a2a"/><rect x="338.85" y="412.6" width="6.6" height="2.6" fill="#4b4b4b"/></svg>
<div class="a" style="left:321.45px;top:414.7px;width:8.4px;height:17px;background:linear-gradient(180deg,#d8d8d8 0%,#cfcfcf 17%,#a4a4a4 20%,#9c9c9c 48%,#5e5e5e 50%,#cbcbcb 54%,#c4c4c4 86%,#7c7c7c 90%,#6a6a6a 100%);border-radius:1px;box-shadow:0 1px 1px rgba(0,0,0,.45);"></div>
<div class="a" style="left:335.85px;top:496.7px;width:6.7px;height:5.9px;background:#535353;border-radius:1.5px;"></div>
<div class="a" style="left:343.75px;top:496.7px;width:5.5px;height:5.9px;background:#535353;border-radius:1.5px;"></div>
<div class="a" style="left:335.85px;top:496.7px;width:6.7px;height:5.9px;font-size:5.4px;color:#c4c4c4;font-weight:normal;text-align:center;line-height:5.9px;white-space:nowrap;">R</div>
<div class="a" style="left:343.75px;top:496.7px;width:5.5px;height:5.9px;font-size:5.4px;color:#c4c4c4;font-weight:normal;text-align:center;line-height:5.9px;white-space:nowrap;">I</div>
<div class="a" style="left:318.65px;top:505.7px;width:13.7px;height:7.1px;background:#585858;border-radius:1.5px;"></div>
<div class="a" style="left:318.65px;top:505.7px;width:13.7px;height:7.1px;font-size:6px;color:#e4e4e4;font-weight:normal;text-align:center;line-height:7.1px;white-space:nowrap;-webkit-text-stroke:.15px #e4e4e4;">M</div>
<div class="a" style="left:335.55px;top:505.7px;width:14.1px;height:7.1px;background:#585858;border-radius:1.5px;"></div>
<div class="a" style="left:335.55px;top:505.7px;width:14.1px;height:7.1px;font-size:6px;color:#e4e4e4;font-weight:normal;text-align:center;line-height:7.1px;white-space:nowrap;-webkit-text-stroke:.15px #e4e4e4;">S</div>
<div class="a" style="left:315.85px;top:523.2px;width:37.35px;height:21.8px;background:#3559da;"></div>
<div class="a" style="left:315.55px;top:523.2px;width:0.6px;height:21.8px;background:rgba(0,0,0,.18);"></div>
<div class="a" style="left:315.85px;top:524.6px;width:37.35px;height:7.2px;font-size:5.5px;color:#ffffff;font-weight:normal;text-align:center;line-height:7.2px;white-space:nowrap;letter-spacing:0px;-webkit-text-stroke-width:0;">Backing</div>
<div class="a" style="left:315.85px;top:531px;width:37.35px;height:7.2px;font-size:5.5px;color:#ffffff;font-weight:normal;text-align:center;line-height:7.2px;white-space:nowrap;letter-spacing:0px;-webkit-text-stroke-width:0;">Vocal</div>
<div class="a" style="left:352.6px;top:249px;width:1.2px;height:266.3px;background:#3d3d3d;"></div>
<div class="a" style="left:356px;top:254.8px;width:8px;height:7px;background:#505050;border-radius:1.5px;"></div>
<div class="a" style="left:365.4px;top:254.8px;width:21.9px;height:7px;background:#565656;border-radius:1.5px;"></div>
<div class="a" style="left:365.4px;top:254.8px;width:21.9px;height:7px;font-size:5.6px;color:#2e2e2e;font-weight:normal;text-align:center;line-height:7px;white-space:nowrap;letter-spacing:0px;">Input</div>
<svg class="a" style="left:356.4px;top:255px" width="8" height="7"><circle cx="3.8" cy="3.3" r="1.8" fill="none" stroke="#cfcfcf" stroke-width=".8"/></svg>
<div class="a" style="left:356px;top:266px;width:31.4px;height:44px;background:#454545;border-radius:1px;"></div>
<div class="a" style="left:356px;top:266.7px;width:31.4px;height:7.1px;background:#1f5fc2;border-radius:2.5px;"></div>
<div class="a" style="left:356px;top:266.7px;width:31.4px;height:6.9px;font-size:5.5px;color:#eef2ff;font-weight:normal;text-align:center;line-height:6.9px;white-space:nowrap;letter-spacing:0px;overflow:hidden;-webkit-text-stroke-width:.05px;">Noise Gate</div>
<div class="a" style="left:356px;top:274.8px;width:31.4px;height:7.1px;background:#1f5fc2;border-radius:2.5px;"></div>
<div class="a" style="left:356px;top:274.8px;width:31.4px;height:6.9px;font-size:5.5px;color:#eef2ff;font-weight:normal;text-align:center;line-height:6.9px;white-space:nowrap;letter-spacing:0px;overflow:hidden;-webkit-text-stroke-width:.05px;">Cnsl EQ</div>
<div class="a" style="left:356px;top:282.9px;width:31.4px;height:7.1px;background:#1f5fc2;border-radius:2.5px;"></div>
<div class="a" style="left:356px;top:282.9px;width:31.4px;height:6.9px;font-size:5.5px;color:#eef2ff;font-weight:normal;text-align:center;line-height:6.9px;white-space:nowrap;letter-spacing:0px;overflow:hidden;-webkit-text-stroke-width:.05px;">Compressor</div>
<div class="a" style="left:356px;top:291px;width:31.4px;height:7.1px;background:#1f5fc2;border-radius:2.5px;"></div>
<div class="a" style="left:356px;top:291px;width:31.4px;height:6.9px;font-size:5.5px;color:#eef2ff;font-weight:normal;text-align:center;line-height:6.9px;white-space:nowrap;letter-spacing:0px;overflow:hidden;-webkit-text-stroke-width:.05px;">St-Delay</div>
<div class="a" style="left:356px;top:321.4px;width:31.4px;height:6.6px;background:#555555;border-radius:1.5px;"></div>
<div class="a" style="left:356px;top:321.4px;width:31.4px;height:6.6px;font-size:6px;color:#d8d8d8;font-weight:normal;text-align:center;line-height:6.6px;white-space:nowrap;letter-spacing:-.05px;">Object</div>
<div class="a" style="left:356px;top:331.6px;width:31.4px;height:7.5px;background:#272727;border-radius:1px;"></div>
<div class="a" style="left:356px;top:331.6px;width:31.4px;height:7.5px;font-size:5.4px;color:#e2bf45;font-weight:normal;text-align:center;line-height:7.5px;white-space:nowrap;letter-spacing:0px;overflow:hidden;">1: Vocals</div>
<svg class="a" style="left:353.2px;top:340px" width="37" height="22" viewBox="353.2 340 37 22"><rect x="361.7" y="343.7" width="15" height="15" fill="#3a3a3a" stroke="#242424" stroke-width=".8"/><line x1="365.45" y1="343.7" x2="365.45" y2="358.7" stroke="#333" stroke-width=".5"/><line x1="361.7" y1="347.45" x2="376.7" y2="347.45" stroke="#333" stroke-width=".5"/><line x1="369.2" y1="343.7" x2="369.2" y2="358.7" stroke="#333" stroke-width=".5"/><line x1="361.7" y1="351.2" x2="376.7" y2="351.2" stroke="#333" stroke-width=".5"/><line x1="372.95" y1="343.7" x2="372.95" y2="358.7" stroke="#333" stroke-width=".5"/><line x1="361.7" y1="354.95" x2="376.7" y2="354.95" stroke="#333" stroke-width=".5"/><path d="M361.7 343.7h15L369.2 351.2Z" fill="#3f6f45"/><circle cx="369.2" cy="345" r="1.1" fill="#3ddc5c"/><line x1="383.2" y1="343.3" x2="383.2" y2="359.7" stroke="#1e1e1e" stroke-width="1"/><circle cx="383.2" cy="350.5" r="1.4" fill="#3ddc5c"/></svg>
<div class="a" style="left:356px;top:362.9px;width:15.1px;height:8.2px;background:#262626;border-radius:1px;"></div>
<div class="a" style="left:356px;top:362.9px;width:15.1px;height:8.2px;font-size:5.6px;color:#e6e6e6;font-weight:normal;text-align:center;line-height:8.2px;white-space:nowrap;letter-spacing:0px;">-3.6</div>
<div class="a" style="left:372.2px;top:362.9px;width:15.2px;height:8.2px;background:#262626;border-radius:1px;"></div>
<div class="a" style="left:372.2px;top:362.9px;width:15.2px;height:8.2px;font-size:5.6px;color:#4ee06a;font-weight:normal;text-align:center;line-height:8.2px;white-space:nowrap;letter-spacing:0px;">-31.2</div>
<svg class="a" style="left:353.2px;top:376px" width="37" height="122" viewBox="353.2 376 37 122"><rect x="356.8" y="382" width="5" height=".7" fill="#7a7a7a"/><rect x="359.5" y="386.67" width="2.2" height=".6" fill="#666"/><rect x="359.5" y="391.33" width="2.2" height=".6" fill="#666"/><rect x="356.8" y="396" width="5" height=".7" fill="#7a7a7a"/><rect x="359.5" y="400.8" width="2.2" height=".6" fill="#666"/><rect x="359.5" y="405.6" width="2.2" height=".6" fill="#666"/><rect x="356.8" y="410.4" width="5" height=".7" fill="#7a7a7a"/><rect x="359.5" y="415.07" width="2.2" height=".6" fill="#666"/><rect x="359.5" y="419.73" width="2.2" height=".6" fill="#666"/><rect x="356.8" y="424.4" width="5" height=".7" fill="#7a7a7a"/><rect x="359.5" y="429.27" width="2.2" height=".6" fill="#666"/><rect x="359.5" y="434.13" width="2.2" height=".6" fill="#666"/><rect x="356.8" y="439" width="5" height=".7" fill="#7a7a7a"/><rect x="359.5" y="442" width="2.2" height=".6" fill="#666"/><rect x="359.5" y="445" width="2.2" height=".6" fill="#666"/><rect x="356.8" y="448" width="5" height=".7" fill="#7a7a7a"/><rect x="359.5" y="452" width="2.2" height=".6" fill="#666"/><rect x="359.5" y="456" width="2.2" height=".6" fill="#666"/><rect x="356.8" y="460" width="5" height=".7" fill="#7a7a7a"/><rect x="359.5" y="463" width="2.2" height=".6" fill="#666"/><rect x="359.5" y="466" width="2.2" height=".6" fill="#666"/><rect x="356.8" y="469" width="5" height=".7" fill="#7a7a7a"/><rect x="359.5" y="472.2" width="2.2" height=".6" fill="#666"/><rect x="359.5" y="475.4" width="2.2" height=".6" fill="#666"/><rect x="356.8" y="478.6" width="5" height=".7" fill="#7a7a7a"/><rect x="359.5" y="480.27" width="2.2" height=".6" fill="#666"/><rect x="359.5" y="481.93" width="2.2" height=".6" fill="#666"/><rect x="356.8" y="483.6" width="5" height=".7" fill="#7a7a7a"/><rect x="359.5" y="484.57" width="2.2" height=".6" fill="#666"/><rect x="359.5" y="485.53" width="2.2" height=".6" fill="#666"/><rect x="356.8" y="486.5" width="5" height=".7" fill="#7a7a7a"/><rect x="359.5" y="488.33" width="2.2" height=".6" fill="#666"/><rect x="359.5" y="490.17" width="2.2" height=".6" fill="#666"/><rect x="356.8" y="492" width="5" height=".7" fill="#7a7a7a"/><rect x="356.6" y="410" width="5.5" height="1.2" fill="#e0e0e0"/><rect x="362.95" y="381" width="1.1" height="112.5" fill="#1c1c1c"/><rect x="374.6" y="381.6" width="1.2" height=".7" fill="#6a6a6a"/><text x="374.4" y="382.9" font-size="3.7" fill="#9a9a9a" text-anchor="end" font-family="Liberation Sans">0</text><rect x="374.6" y="389.55" width="1.2" height=".7" fill="#6a6a6a"/><text x="374.4" y="390.85" font-size="3.7" fill="#9a9a9a" text-anchor="end" font-family="Liberation Sans">3</text><rect x="374.6" y="397.5" width="1.2" height=".7" fill="#6a6a6a"/><text x="374.4" y="398.8" font-size="3.7" fill="#9a9a9a" text-anchor="end" font-family="Liberation Sans">6</text><rect x="374.6" y="405.45" width="1.2" height=".7" fill="#6a6a6a"/><text x="374.4" y="406.75" font-size="3.7" fill="#9a9a9a" text-anchor="end" font-family="Liberation Sans">9</text><rect x="374.6" y="413.4" width="1.2" height=".7" fill="#6a6a6a"/><text x="374.4" y="414.7" font-size="3.7" fill="#9a9a9a" text-anchor="end" font-family="Liberation Sans">12</text><rect x="374.6" y="421.35" width="1.2" height=".7" fill="#6a6a6a"/><text x="374.4" y="422.65" font-size="3.7" fill="#9a9a9a" text-anchor="end" font-family="Liberation Sans">15</text><rect x="374.6" y="429.3" width="1.2" height=".7" fill="#6a6a6a"/><text x="374.4" y="430.6" font-size="3.7" fill="#9a9a9a" text-anchor="end" font-family="Liberation Sans">18</text><rect x="374.6" y="437.25" width="1.2" height=".7" fill="#6a6a6a"/><text x="374.4" y="438.55" font-size="3.7" fill="#9a9a9a" text-anchor="end" font-family="Liberation Sans">21</text><rect x="374.6" y="445.2" width="1.2" height=".7" fill="#6a6a6a"/><text x="374.4" y="446.5" font-size="3.7" fill="#9a9a9a" text-anchor="end" font-family="Liberation Sans">24</text><rect x="374.6" y="453.15" width="1.2" height=".7" fill="#6a6a6a"/><text x="374.4" y="454.45" font-size="3.7" fill="#9a9a9a" text-anchor="end" font-family="Liberation Sans">30</text><rect x="374.6" y="461.1" width="1.2" height=".7" fill="#6a6a6a"/><text x="374.4" y="462.4" font-size="3.7" fill="#9a9a9a" text-anchor="end" font-family="Liberation Sans">35</text><rect x="374.6" y="469.05" width="1.2" height=".7" fill="#6a6a6a"/><text x="374.4" y="470.35" font-size="3.7" fill="#9a9a9a" text-anchor="end" font-family="Liberation Sans">40</text><rect x="374.6" y="477" width="1.2" height=".7" fill="#6a6a6a"/><text x="374.4" y="478.3" font-size="3.7" fill="#9a9a9a" text-anchor="end" font-family="Liberation Sans">45</text><rect x="374.6" y="484.95" width="1.2" height=".7" fill="#6a6a6a"/><text x="374.4" y="486.25" font-size="3.7" fill="#9a9a9a" text-anchor="end" font-family="Liberation Sans">50</text><rect x="374.6" y="492.9" width="1.2" height=".7" fill="#6a6a6a"/><text x="374.4" y="494.2" font-size="3.7" fill="#9a9a9a" text-anchor="end" font-family="Liberation Sans">60</text><rect x="376.8" y="381" width="5.4" height="112.5" fill="#2a2a2a"/></svg>
<div class="a" style="left:358.8px;top:419px;width:8.4px;height:17px;background:linear-gradient(180deg,#d8d8d8 0%,#cfcfcf 17%,#a4a4a4 20%,#9c9c9c 48%,#5e5e5e 50%,#cbcbcb 54%,#c4c4c4 86%,#7c7c7c 90%,#6a6a6a 100%);border-radius:1px;box-shadow:0 1px 1px rgba(0,0,0,.45);"></div>
<div class="a" style="left:373.2px;top:496.7px;width:6.7px;height:5.9px;background:#535353;border-radius:1.5px;"></div>
<div class="a" style="left:381.1px;top:496.7px;width:5.5px;height:5.9px;background:#535353;border-radius:1.5px;"></div>
<div class="a" style="left:373.2px;top:496.7px;width:6.7px;height:5.9px;font-size:5.4px;color:#c4c4c4;font-weight:normal;text-align:center;line-height:5.9px;white-space:nowrap;">R</div>
<div class="a" style="left:381.1px;top:496.7px;width:5.5px;height:5.9px;font-size:5.4px;color:#c4c4c4;font-weight:normal;text-align:center;line-height:5.9px;white-space:nowrap;">I</div>
<div class="a" style="left:356px;top:505.7px;width:13.7px;height:7.1px;background:#585858;border-radius:1.5px;"></div>
<div class="a" style="left:356px;top:505.7px;width:13.7px;height:7.1px;font-size:6px;color:#e4e4e4;font-weight:normal;text-align:center;line-height:7.1px;white-space:nowrap;-webkit-text-stroke:.15px #e4e4e4;">M</div>
<div class="a" style="left:372.9px;top:505.7px;width:14.1px;height:7.1px;background:#585858;border-radius:1.5px;"></div>
<div class="a" style="left:372.9px;top:505.7px;width:14.1px;height:7.1px;font-size:6px;color:#e4e4e4;font-weight:normal;text-align:center;line-height:7.1px;white-space:nowrap;-webkit-text-stroke:.15px #e4e4e4;">S</div>
<div class="a" style="left:353.2px;top:523.2px;width:37.35px;height:21.8px;background:#2e70da;"></div>
<div class="a" style="left:352.9px;top:523.2px;width:0.6px;height:21.8px;background:rgba(0,0,0,.18);"></div>
<div class="a" style="left:353.2px;top:524.6px;width:37.35px;height:7.2px;font-size:5.5px;color:#ffffff;font-weight:normal;text-align:center;line-height:7.2px;white-space:nowrap;letter-spacing:0px;-webkit-text-stroke-width:0;">Harmony</div>
<div class="a" style="left:353.2px;top:531px;width:37.35px;height:7.2px;font-size:5.5px;color:#ffffff;font-weight:normal;text-align:center;line-height:7.2px;white-space:nowrap;letter-spacing:0px;-webkit-text-stroke-width:0;">Vocal</div>
<div class="a" style="left:389.95px;top:249px;width:1.2px;height:266.3px;background:#3d3d3d;"></div>
<div class="a" style="left:393.35px;top:254.8px;width:8px;height:7px;background:#505050;border-radius:1.5px;"></div>
<div class="a" style="left:402.75px;top:254.8px;width:21.9px;height:7px;background:#565656;border-radius:1.5px;"></div>
<div class="a" style="left:402.75px;top:254.8px;width:21.9px;height:7px;font-size:5.6px;color:#2e2e2e;font-weight:normal;text-align:center;line-height:7px;white-space:nowrap;letter-spacing:0px;">Input</div>
<svg class="a" style="left:393.75px;top:255px" width="8" height="7"><path d="M1.5 1v5h1M6.5 1v5h-1M1.5 1h1M6.5 1h-1" fill="none" stroke="#cfcfcf" stroke-width=".8"/><path d="M3.5 1.5v3M4.5 1.5v3" stroke="#cfcfcf" stroke-width=".6"/></svg>
<div class="a" style="left:393.35px;top:266px;width:31.4px;height:44px;background:#454545;border-radius:1px;"></div>
<div class="a" style="left:393.35px;top:266.7px;width:31.4px;height:7.1px;background:#1f5fc2;border-radius:2.5px;"></div>
<div class="a" style="left:393.35px;top:266.7px;width:31.4px;height:6.9px;font-size:5.5px;color:#eef2ff;font-weight:normal;text-align:center;line-height:6.9px;white-space:nowrap;letter-spacing:0px;overflow:hidden;-webkit-text-stroke-width:.05px;">Noise Gate</div>
<div class="a" style="left:393.35px;top:274.8px;width:31.4px;height:7.1px;background:#1f5fc2;border-radius:2.5px;"></div>
<div class="a" style="left:393.35px;top:274.8px;width:31.4px;height:6.9px;font-size:5.5px;color:#eef2ff;font-weight:normal;text-align:center;line-height:6.9px;white-space:nowrap;letter-spacing:0px;overflow:hidden;-webkit-text-stroke-width:.05px;">Channel EQ</div>
<div class="a" style="left:393.35px;top:282.9px;width:31.4px;height:7.1px;background:#1f5fc2;border-radius:2.5px;"></div>
<div class="a" style="left:393.35px;top:282.9px;width:31.4px;height:6.9px;font-size:5.5px;color:#eef2ff;font-weight:normal;text-align:center;line-height:6.9px;white-space:nowrap;letter-spacing:0px;overflow:hidden;-webkit-text-stroke-width:.05px;">Compressor</div>
<div class="a" style="left:393.35px;top:291px;width:31.4px;height:7.1px;background:#1f5fc2;border-radius:2.5px;"></div>
<div class="a" style="left:393.35px;top:291px;width:31.4px;height:6.9px;font-size:5.5px;color:#eef2ff;font-weight:normal;text-align:center;line-height:6.9px;white-space:nowrap;letter-spacing:0px;overflow:hidden;-webkit-text-stroke-width:.05px;">St-Delay</div>
<div class="a" style="left:393.35px;top:299.1px;width:31.4px;height:7.1px;background:#1f5fc2;border-radius:2.5px;"></div>
<div class="a" style="left:393.35px;top:299.1px;width:31.4px;height:6.9px;font-size:5.5px;color:#eef2ff;font-weight:normal;text-align:center;line-height:6.9px;white-space:nowrap;letter-spacing:0px;overflow:hidden;-webkit-text-stroke-width:.05px;">Tremolo</div>
<div class="a" style="left:393.35px;top:321.4px;width:31.4px;height:6.6px;background:#555555;border-radius:1.5px;"></div>
<div class="a" style="left:393.35px;top:321.4px;width:31.4px;height:6.6px;font-size:6px;color:#d8d8d8;font-weight:normal;text-align:center;line-height:6.6px;white-space:nowrap;letter-spacing:-.05px;">Surround</div>
<div class="a" style="left:393.35px;top:331.6px;width:31.4px;height:7.5px;background:#272727;border-radius:1px;"></div>
<div class="a" style="left:393.35px;top:331.6px;width:31.4px;height:7.5px;font-size:5.4px;color:#e2bf45;font-weight:normal;text-align:center;line-height:7.5px;white-space:nowrap;letter-spacing:0px;overflow:hidden;">1: Vocals</div>
<svg class="a" style="left:390.55px;top:340px" width="37" height="22" viewBox="390.55 340 37 22"><circle cx="399.2" cy="358.55" r=".55" fill="#8c8c8c"/><circle cx="396.5" cy="353.89" r=".55" fill="#8c8c8c"/><circle cx="396.5" cy="348.51" r=".55" fill="#8c8c8c"/><circle cx="399.2" cy="343.85" r=".55" fill="#8c8c8c"/><circle cx="403.86" cy="341.15" r=".55" fill="#8c8c8c"/><circle cx="409.24" cy="341.15" r=".55" fill="#8c8c8c"/><circle cx="413.9" cy="343.85" r=".55" fill="#8c8c8c"/><circle cx="416.6" cy="348.51" r=".55" fill="#8c8c8c"/><circle cx="416.6" cy="353.89" r=".55" fill="#8c8c8c"/><circle cx="406.55" cy="351.2" r="8.3" fill="#272727"/><circle cx="406.55" cy="351.2" r="8.3" fill="none" stroke="#202020" stroke-width=".6"/><circle cx="406.55" cy="349.6" r="1.1" fill="#3ddc5c"/><line x1="420.55" y1="343.3" x2="420.55" y2="359.7" stroke="#1e1e1e" stroke-width="1"/><circle cx="420.55" cy="358.6" r="1.4" fill="#3ddc5c"/></svg>
<div class="a" style="left:393.35px;top:362.9px;width:15.1px;height:8.2px;background:#262626;border-radius:1px;"></div>
<div class="a" style="left:393.35px;top:362.9px;width:15.1px;height:8.2px;font-size:5.6px;color:#e6e6e6;font-weight:normal;text-align:center;line-height:8.2px;white-space:nowrap;letter-spacing:0px;">-4.3</div>
<div class="a" style="left:409.55px;top:362.9px;width:15.2px;height:8.2px;background:#262626;border-radius:1px;"></div>
<div class="a" style="left:409.55px;top:362.9px;width:15.2px;height:8.2px;font-size:5.6px;color:#4ee06a;font-weight:normal;text-align:center;line-height:8.2px;white-space:nowrap;letter-spacing:0px;">-16.8</div>
<svg class="a" style="left:390.55px;top:376px" width="37" height="122" viewBox="390.55 376 37 122"><rect x="394.15" y="382" width="5" height=".7" fill="#7a7a7a"/><rect x="396.85" y="386.67" width="2.2" height=".6" fill="#666"/><rect x="396.85" y="391.33" width="2.2" height=".6" fill="#666"/><rect x="394.15" y="396" width="5" height=".7" fill="#7a7a7a"/><rect x="396.85" y="400.8" width="2.2" height=".6" fill="#666"/><rect x="396.85" y="405.6" width="2.2" height=".6" fill="#666"/><rect x="394.15" y="410.4" width="5" height=".7" fill="#7a7a7a"/><rect x="396.85" y="415.07" width="2.2" height=".6" fill="#666"/><rect x="396.85" y="419.73" width="2.2" height=".6" fill="#666"/><rect x="394.15" y="424.4" width="5" height=".7" fill="#7a7a7a"/><rect x="396.85" y="429.27" width="2.2" height=".6" fill="#666"/><rect x="396.85" y="434.13" width="2.2" height=".6" fill="#666"/><rect x="394.15" y="439" width="5" height=".7" fill="#7a7a7a"/><rect x="396.85" y="442" width="2.2" height=".6" fill="#666"/><rect x="396.85" y="445" width="2.2" height=".6" fill="#666"/><rect x="394.15" y="448" width="5" height=".7" fill="#7a7a7a"/><rect x="396.85" y="452" width="2.2" height=".6" fill="#666"/><rect x="396.85" y="456" width="2.2" height=".6" fill="#666"/><rect x="394.15" y="460" width="5" height=".7" fill="#7a7a7a"/><rect x="396.85" y="463" width="2.2" height=".6" fill="#666"/><rect x="396.85" y="466" width="2.2" height=".6" fill="#666"/><rect x="394.15" y="469" width="5" height=".7" fill="#7a7a7a"/><rect x="396.85" y="472.2" width="2.2" height=".6" fill="#666"/><rect x="396.85" y="475.4" width="2.2" height=".6" fill="#666"/><rect x="394.15" y="478.6" width="5" height=".7" fill="#7a7a7a"/><rect x="396.85" y="480.27" width="2.2" height=".6" fill="#666"/><rect x="396.85" y="481.93" width="2.2" height=".6" fill="#666"/><rect x="394.15" y="483.6" width="5" height=".7" fill="#7a7a7a"/><rect x="396.85" y="484.57" width="2.2" height=".6" fill="#666"/><rect x="396.85" y="485.53" width="2.2" height=".6" fill="#666"/><rect x="394.15" y="486.5" width="5" height=".7" fill="#7a7a7a"/><rect x="396.85" y="488.33" width="2.2" height=".6" fill="#666"/><rect x="396.85" y="490.17" width="2.2" height=".6" fill="#666"/><rect x="394.15" y="492" width="5" height=".7" fill="#7a7a7a"/><rect x="393.95" y="410" width="5.5" height="1.2" fill="#e0e0e0"/><rect x="400.3" y="381" width="1.1" height="112.5" fill="#1c1c1c"/><rect x="411.95" y="381.6" width="1.2" height=".7" fill="#6a6a6a"/><text x="411.75" y="382.9" font-size="3.7" fill="#9a9a9a" text-anchor="end" font-family="Liberation Sans">0</text><rect x="411.95" y="389.55" width="1.2" height=".7" fill="#6a6a6a"/><text x="411.75" y="390.85" font-size="3.7" fill="#9a9a9a" text-anchor="end" font-family="Liberation Sans">3</text><rect x="411.95" y="397.5" width="1.2" height=".7" fill="#6a6a6a"/><text x="411.75" y="398.8" font-size="3.7" fill="#9a9a9a" text-anchor="end" font-family="Liberation Sans">6</text><rect x="411.95" y="405.45" width="1.2" height=".7" fill="#6a6a6a"/><text x="411.75" y="406.75" font-size="3.7" fill="#9a9a9a" text-anchor="end" font-family="Liberation Sans">9</text><rect x="411.95" y="413.4" width="1.2" height=".7" fill="#6a6a6a"/><text x="411.75" y="414.7" font-size="3.7" fill="#9a9a9a" text-anchor="end" font-family="Liberation Sans">12</text><rect x="411.95" y="421.35" width="1.2" height=".7" fill="#6a6a6a"/><text x="411.75" y="422.65" font-size="3.7" fill="#9a9a9a" text-anchor="end" font-family="Liberation Sans">15</text><rect x="411.95" y="429.3" width="1.2" height=".7" fill="#6a6a6a"/><text x="411.75" y="430.6" font-size="3.7" fill="#9a9a9a" text-anchor="end" font-family="Liberation Sans">18</text><rect x="411.95" y="437.25" width="1.2" height=".7" fill="#6a6a6a"/><text x="411.75" y="438.55" font-size="3.7" fill="#9a9a9a" text-anchor="end" font-family="Liberation Sans">21</text><rect x="411.95" y="445.2" width="1.2" height=".7" fill="#6a6a6a"/><text x="411.75" y="446.5" font-size="3.7" fill="#9a9a9a" text-anchor="end" font-family="Liberation Sans">24</text><rect x="411.95" y="453.15" width="1.2" height=".7" fill="#6a6a6a"/><text x="411.75" y="454.45" font-size="3.7" fill="#9a9a9a" text-anchor="end" font-family="Liberation Sans">30</text><rect x="411.95" y="461.1" width="1.2" height=".7" fill="#6a6a6a"/><text x="411.75" y="462.4" font-size="3.7" fill="#9a9a9a" text-anchor="end" font-family="Liberation Sans">35</text><rect x="411.95" y="469.05" width="1.2" height=".7" fill="#6a6a6a"/><text x="411.75" y="470.35" font-size="3.7" fill="#9a9a9a" text-anchor="end" font-family="Liberation Sans">40</text><rect x="411.95" y="477" width="1.2" height=".7" fill="#6a6a6a"/><text x="411.75" y="478.3" font-size="3.7" fill="#9a9a9a" text-anchor="end" font-family="Liberation Sans">45</text><rect x="411.95" y="484.95" width="1.2" height=".7" fill="#6a6a6a"/><text x="411.75" y="486.25" font-size="3.7" fill="#9a9a9a" text-anchor="end" font-family="Liberation Sans">50</text><rect x="411.95" y="492.9" width="1.2" height=".7" fill="#6a6a6a"/><text x="411.75" y="494.2" font-size="3.7" fill="#9a9a9a" text-anchor="end" font-family="Liberation Sans">60</text><rect x="413.55" y="381" width="6.6" height="112.5" fill="#2a2a2a"/><rect x="413.55" y="412.6" width="6.6" height="2.6" fill="#4b4b4b"/><path d="M413.75 493.5 L413.75 452 L415.55 451.5 L416.15 458 L416.95 461 L417.75 465 L418.55 467 L419.35 470 L419.95 470 L419.95 493.5Z" fill="#3dd35c"/><rect x="414.95" y="396.6" width="1.2" height="15.8" fill="#3dd35c"/><rect x="417.75" y="398" width="1.2" height="14.4" fill="#3dd35c"/></svg>
<div class="a" style="left:396.15px;top:422.7px;width:8.4px;height:16.8px;background:linear-gradient(180deg,#d8d8d8 0%,#cfcfcf 17%,#a4a4a4 20%,#9c9c9c 48%,#5e5e5e 50%,#cbcbcb 54%,#c4c4c4 86%,#7c7c7c 90%,#6a6a6a 100%);border-radius:1px;box-shadow:0 1px 1px rgba(0,0,0,.45);"></div>
<div class="a" style="left:410.55px;top:496.7px;width:6.7px;height:5.9px;background:#535353;border-radius:1.5px;"></div>
<div class="a" style="left:418.45px;top:496.7px;width:5.5px;height:5.9px;background:#535353;border-radius:1.5px;"></div>
<div class="a" style="left:410.55px;top:496.7px;width:6.7px;height:5.9px;font-size:5.4px;color:#c4c4c4;font-weight:normal;text-align:center;line-height:5.9px;white-space:nowrap;">R</div>
<div class="a" style="left:418.45px;top:496.7px;width:5.5px;height:5.9px;font-size:5.4px;color:#c4c4c4;font-weight:normal;text-align:center;line-height:5.9px;white-space:nowrap;">I</div>
<div class="a" style="left:393.35px;top:505.7px;width:13.7px;height:7.1px;background:#585858;border-radius:1.5px;"></div>
<div class="a" style="left:393.35px;top:505.7px;width:13.7px;height:7.1px;font-size:6px;color:#e4e4e4;font-weight:normal;text-align:center;line-height:7.1px;white-space:nowrap;-webkit-text-stroke:.15px #e4e4e4;">M</div>
<div class="a" style="left:410.25px;top:505.7px;width:14.1px;height:7.1px;background:#585858;border-radius:1.5px;"></div>
<div class="a" style="left:410.25px;top:505.7px;width:14.1px;height:7.1px;font-size:6px;color:#e4e4e4;font-weight:normal;text-align:center;line-height:7.1px;white-space:nowrap;-webkit-text-stroke:.15px #e4e4e4;">S</div>
<div class="a" style="left:390.55px;top:523.2px;width:37.35px;height:21.8px;background:#2388d3;"></div>
<div class="a" style="left:390.25px;top:523.2px;width:0.6px;height:21.8px;background:rgba(0,0,0,.18);"></div>
<div class="a" style="left:390.55px;top:524.6px;width:37.35px;height:7.2px;font-size:5.5px;color:#ffffff;font-weight:normal;text-align:center;line-height:7.2px;white-space:nowrap;letter-spacing:0px;-webkit-text-stroke-width:0;">Choir</div>
<div class="a" style="left:390.55px;top:531px;width:37.35px;height:7.2px;font-size:5.5px;color:#ffffff;font-weight:normal;text-align:center;line-height:7.2px;white-space:nowrap;letter-spacing:0px;-webkit-text-stroke-width:0;"></div>
<div class="a" style="left:427.3px;top:249px;width:1.2px;height:266.3px;background:#3d3d3d;"></div>
<div class="a" style="left:430.7px;top:254.8px;width:8px;height:7px;background:#505050;border-radius:1.5px;"></div>
<div class="a" style="left:440.1px;top:254.8px;width:21.9px;height:7px;background:#565656;border-radius:1.5px;"></div>
<div class="a" style="left:440.1px;top:254.8px;width:21.9px;height:7px;font-size:5.6px;color:#2e2e2e;font-weight:normal;text-align:center;line-height:7px;white-space:nowrap;letter-spacing:0px;">Input</div>
<svg class="a" style="left:431.1px;top:255px" width="8" height="7"><path d="M1.5 1v5h1M6.5 1v5h-1M1.5 1h1M6.5 1h-1" fill="none" stroke="#cfcfcf" stroke-width=".8"/><path d="M3.5 1.5v3M4.5 1.5v3" stroke="#cfcfcf" stroke-width=".6"/></svg>
<div class="a" style="left:430.7px;top:266px;width:31.4px;height:44px;background:#454545;border-radius:1px;"></div>
<div class="a" style="left:430.7px;top:266.7px;width:31.4px;height:7.1px;background:#1f5fc2;border-radius:2.5px;"></div>
<div class="a" style="left:430.7px;top:266.7px;width:31.4px;height:6.9px;font-size:5.5px;color:#eef2ff;font-weight:normal;text-align:center;line-height:6.9px;white-space:nowrap;letter-spacing:0px;overflow:hidden;-webkit-text-stroke-width:.05px;">Noise Gate</div>
<div class="a" style="left:430.7px;top:274.8px;width:31.4px;height:7.1px;background:#1f5fc2;border-radius:2.5px;"></div>
<div class="a" style="left:430.7px;top:274.8px;width:31.4px;height:6.9px;font-size:5.5px;color:#eef2ff;font-weight:normal;text-align:center;line-height:6.9px;white-space:nowrap;letter-spacing:0px;overflow:hidden;-webkit-text-stroke-width:.05px;">Channel EQ</div>
<div class="a" style="left:430.7px;top:282.9px;width:31.4px;height:7.1px;background:#1f5fc2;border-radius:2.5px;"></div>
<div class="a" style="left:430.7px;top:282.9px;width:31.4px;height:6.9px;font-size:5.5px;color:#eef2ff;font-weight:normal;text-align:center;line-height:6.9px;white-space:nowrap;letter-spacing:0px;overflow:hidden;-webkit-text-stroke-width:.05px;">Compressor</div>
<div class="a" style="left:430.7px;top:291px;width:31.4px;height:7.1px;background:#1f5fc2;border-radius:2.5px;"></div>
<div class="a" style="left:430.7px;top:291px;width:31.4px;height:6.9px;font-size:5.5px;color:#eef2ff;font-weight:normal;text-align:center;line-height:6.9px;white-space:nowrap;letter-spacing:0px;overflow:hidden;-webkit-text-stroke-width:.05px;">St-Delay</div>
<div class="a" style="left:430.7px;top:321.4px;width:31.4px;height:6.6px;background:#555555;border-radius:1.5px;"></div>
<div class="a" style="left:430.7px;top:321.4px;width:31.4px;height:6.6px;font-size:6px;color:#d8d8d8;font-weight:normal;text-align:center;line-height:6.6px;white-space:nowrap;letter-spacing:-.05px;">Surround</div>
<div class="a" style="left:430.7px;top:331.6px;width:31.4px;height:7.5px;background:#272727;border-radius:1px;"></div>
<div class="a" style="left:430.7px;top:331.6px;width:31.4px;height:7.5px;font-size:5.4px;color:#e2bf45;font-weight:normal;text-align:center;line-height:7.5px;white-space:nowrap;letter-spacing:0px;overflow:hidden;">1: Vocals</div>
<svg class="a" style="left:427.9px;top:340px" width="37" height="22" viewBox="427.9 340 37 22"><circle cx="436.55" cy="358.55" r=".55" fill="#8c8c8c"/><circle cx="433.85" cy="353.89" r=".55" fill="#8c8c8c"/><circle cx="433.85" cy="348.51" r=".55" fill="#8c8c8c"/><circle cx="436.55" cy="343.85" r=".55" fill="#8c8c8c"/><circle cx="441.21" cy="341.15" r=".55" fill="#8c8c8c"/><circle cx="446.59" cy="341.15" r=".55" fill="#8c8c8c"/><circle cx="451.25" cy="343.85" r=".55" fill="#8c8c8c"/><circle cx="453.95" cy="348.51" r=".55" fill="#8c8c8c"/><circle cx="453.95" cy="353.89" r=".55" fill="#8c8c8c"/><circle cx="443.9" cy="351.2" r="8.3" fill="#272727"/><circle cx="443.9" cy="351.2" r="8.3" fill="none" stroke="#202020" stroke-width=".6"/><circle cx="443.9" cy="349.6" r="1.1" fill="#3ddc5c"/><line x1="457.9" y1="343.3" x2="457.9" y2="359.7" stroke="#1e1e1e" stroke-width="1"/><circle cx="457.9" cy="358.6" r="1.4" fill="#3ddc5c"/></svg>
<div class="a" style="left:430.7px;top:362.9px;width:15.1px;height:8.2px;background:#262626;border-radius:1px;"></div>
<div class="a" style="left:430.7px;top:362.9px;width:15.1px;height:8.2px;font-size:5.6px;color:#e6e6e6;font-weight:normal;text-align:center;line-height:8.2px;white-space:nowrap;letter-spacing:0px;">-5.0</div>
<div class="a" style="left:446.9px;top:362.9px;width:15.2px;height:8.2px;background:#262626;border-radius:1px;"></div>
<div class="a" style="left:446.9px;top:362.9px;width:15.2px;height:8.2px;font-size:5.6px;color:#4ee06a;font-weight:normal;text-align:center;line-height:8.2px;white-space:nowrap;letter-spacing:0px;">-15.0</div>
<svg class="a" style="left:427.9px;top:376px" width="37" height="122" viewBox="427.9 376 37 122"><rect x="431.5" y="382" width="5" height=".7" fill="#7a7a7a"/><rect x="434.2" y="386.67" width="2.2" height=".6" fill="#666"/><rect x="434.2" y="391.33" width="2.2" height=".6" fill="#666"/><rect x="431.5" y="396" width="5" height=".7" fill="#7a7a7a"/><rect x="434.2" y="400.8" width="2.2" height=".6" fill="#666"/><rect x="434.2" y="405.6" width="2.2" height=".6" fill="#666"/><rect x="431.5" y="410.4" width="5" height=".7" fill="#7a7a7a"/><rect x="434.2" y="415.07" width="2.2" height=".6" fill="#666"/><rect x="434.2" y="419.73" width="2.2" height=".6" fill="#666"/><rect x="431.5" y="424.4" width="5" height=".7" fill="#7a7a7a"/><rect x="434.2" y="429.27" width="2.2" height=".6" fill="#666"/><rect x="434.2" y="434.13" width="2.2" height=".6" fill="#666"/><rect x="431.5" y="439" width="5" height=".7" fill="#7a7a7a"/><rect x="434.2" y="442" width="2.2" height=".6" fill="#666"/><rect x="434.2" y="445" width="2.2" height=".6" fill="#666"/><rect x="431.5" y="448" width="5" height=".7" fill="#7a7a7a"/><rect x="434.2" y="452" width="2.2" height=".6" fill="#666"/><rect x="434.2" y="456" width="2.2" height=".6" fill="#666"/><rect x="431.5" y="460" width="5" height=".7" fill="#7a7a7a"/><rect x="434.2" y="463" width="2.2" height=".6" fill="#666"/><rect x="434.2" y="466" width="2.2" height=".6" fill="#666"/><rect x="431.5" y="469" width="5" height=".7" fill="#7a7a7a"/><rect x="434.2" y="472.2" width="2.2" height=".6" fill="#666"/><rect x="434.2" y="475.4" width="2.2" height=".6" fill="#666"/><rect x="431.5" y="478.6" width="5" height=".7" fill="#7a7a7a"/><rect x="434.2" y="480.27" width="2.2" height=".6" fill="#666"/><rect x="434.2" y="481.93" width="2.2" height=".6" fill="#666"/><rect x="431.5" y="483.6" width="5" height=".7" fill="#7a7a7a"/><rect x="434.2" y="484.57" width="2.2" height=".6" fill="#666"/><rect x="434.2" y="485.53" width="2.2" height=".6" fill="#666"/><rect x="431.5" y="486.5" width="5" height=".7" fill="#7a7a7a"/><rect x="434.2" y="488.33" width="2.2" height=".6" fill="#666"/><rect x="434.2" y="490.17" width="2.2" height=".6" fill="#666"/><rect x="431.5" y="492" width="5" height=".7" fill="#7a7a7a"/><rect x="431.3" y="410" width="5.5" height="1.2" fill="#e0e0e0"/><rect x="437.65" y="381" width="1.1" height="112.5" fill="#1c1c1c"/><rect x="449.3" y="381.6" width="1.2" height=".7" fill="#6a6a6a"/><text x="449.1" y="382.9" font-size="3.7" fill="#9a9a9a" text-anchor="end" font-family="Liberation Sans">0</text><rect x="449.3" y="389.55" width="1.2" height=".7" fill="#6a6a6a"/><text x="449.1" y="390.85" font-size="3.7" fill="#9a9a9a" text-anchor="end" font-family="Liberation Sans">3</text><rect x="449.3" y="397.5" width="1.2" height=".7" fill="#6a6a6a"/><text x="449.1" y="398.8" font-size="3.7" fill="#9a9a9a" text-anchor="end" font-family="Liberation Sans">6</text><rect x="449.3" y="405.45" width="1.2" height=".7" fill="#6a6a6a"/><text x="449.1" y="406.75" font-size="3.7" fill="#9a9a9a" text-anchor="end" font-family="Liberation Sans">9</text><rect x="449.3" y="413.4" width="1.2" height=".7" fill="#6a6a6a"/><text x="449.1" y="414.7" font-size="3.7" fill="#9a9a9a" text-anchor="end" font-family="Liberation Sans">12</text><rect x="449.3" y="421.35" width="1.2" height=".7" fill="#6a6a6a"/><text x="449.1" y="422.65" font-size="3.7" fill="#9a9a9a" text-anchor="end" font-family="Liberation Sans">15</text><rect x="449.3" y="429.3" width="1.2" height=".7" fill="#6a6a6a"/><text x="449.1" y="430.6" font-size="3.7" fill="#9a9a9a" text-anchor="end" font-family="Liberation Sans">18</text><rect x="449.3" y="437.25" width="1.2" height=".7" fill="#6a6a6a"/><text x="449.1" y="438.55" font-size="3.7" fill="#9a9a9a" text-anchor="end" font-family="Liberation Sans">21</text><rect x="449.3" y="445.2" width="1.2" height=".7" fill="#6a6a6a"/><text x="449.1" y="446.5" font-size="3.7" fill="#9a9a9a" text-anchor="end" font-family="Liberation Sans">24</text><rect x="449.3" y="453.15" width="1.2" height=".7" fill="#6a6a6a"/><text x="449.1" y="454.45" font-size="3.7" fill="#9a9a9a" text-anchor="end" font-family="Liberation Sans">30</text><rect x="449.3" y="461.1" width="1.2" height=".7" fill="#6a6a6a"/><text x="449.1" y="462.4" font-size="3.7" fill="#9a9a9a" text-anchor="end" font-family="Liberation Sans">35</text><rect x="449.3" y="469.05" width="1.2" height=".7" fill="#6a6a6a"/><text x="449.1" y="470.35" font-size="3.7" fill="#9a9a9a" text-anchor="end" font-family="Liberation Sans">40</text><rect x="449.3" y="477" width="1.2" height=".7" fill="#6a6a6a"/><text x="449.1" y="478.3" font-size="3.7" fill="#9a9a9a" text-anchor="end" font-family="Liberation Sans">45</text><rect x="449.3" y="484.95" width="1.2" height=".7" fill="#6a6a6a"/><text x="449.1" y="486.25" font-size="3.7" fill="#9a9a9a" text-anchor="end" font-family="Liberation Sans">50</text><rect x="449.3" y="492.9" width="1.2" height=".7" fill="#6a6a6a"/><text x="449.1" y="494.2" font-size="3.7" fill="#9a9a9a" text-anchor="end" font-family="Liberation Sans">60</text><rect x="450.9" y="381" width="6.6" height="112.5" fill="#2a2a2a"/><rect x="450.9" y="412.6" width="6.6" height="2.6" fill="#4b4b4b"/><path d="M451.1 493.5 L451.1 476 L452.1 469 L453.1 461 L454.1 452 L455.1 446 L456.1 444 L456.7 447 L457.3 450 L457.3 493.5Z" fill="#3dd35c"/><rect x="452.3" y="400" width="1.2" height="12.4" fill="#3dd35c"/><rect x="455.1" y="399" width="1.2" height="13.4" fill="#3dd35c"/></svg>
<div class="a" style="left:433.5px;top:425.6px;width:8.4px;height:17px;background:linear-gradient(180deg,#d8d8d8 0%,#cfcfcf 17%,#a4a4a4 20%,#9c9c9c 48%,#5e5e5e 50%,#cbcbcb 54%,#c4c4c4 86%,#7c7c7c 90%,#6a6a6a 100%);border-radius:1px;box-shadow:0 1px 1px rgba(0,0,0,.45);"></div>
<div class="a" style="left:447.9px;top:496.7px;width:6.7px;height:5.9px;background:#535353;border-radius:1.5px;"></div>
<div class="a" style="left:455.8px;top:496.7px;width:5.5px;height:5.9px;background:#535353;border-radius:1.5px;"></div>
<div class="a" style="left:447.9px;top:496.7px;width:6.7px;height:5.9px;font-size:5.4px;color:#c4c4c4;font-weight:normal;text-align:center;line-height:5.9px;white-space:nowrap;">R</div>
<div class="a" style="left:455.8px;top:496.7px;width:5.5px;height:5.9px;font-size:5.4px;color:#c4c4c4;font-weight:normal;text-align:center;line-height:5.9px;white-space:nowrap;">I</div>
<div class="a" style="left:430.7px;top:505.7px;width:13.7px;height:7.1px;background:#585858;border-radius:1.5px;"></div>
<div class="a" style="left:430.7px;top:505.7px;width:13.7px;height:7.1px;font-size:6px;color:#e4e4e4;font-weight:normal;text-align:center;line-height:7.1px;white-space:nowrap;-webkit-text-stroke:.15px #e4e4e4;">M</div>
<div class="a" style="left:447.6px;top:505.7px;width:14.1px;height:7.1px;background:#585858;border-radius:1.5px;"></div>
<div class="a" style="left:447.6px;top:505.7px;width:14.1px;height:7.1px;font-size:6px;color:#e4e4e4;font-weight:normal;text-align:center;line-height:7.1px;white-space:nowrap;-webkit-text-stroke:.15px #e4e4e4;">S</div>
<div class="a" style="left:427.9px;top:523.2px;width:37.35px;height:21.8px;background:#1a9fd2;"></div>
<div class="a" style="left:427.6px;top:523.2px;width:0.6px;height:21.8px;background:rgba(0,0,0,.18);"></div>
<div class="a" style="left:427.9px;top:524.6px;width:37.35px;height:7.2px;font-size:5.5px;color:#ffffff;font-weight:normal;text-align:center;line-height:7.2px;white-space:nowrap;letter-spacing:0px;-webkit-text-stroke-width:0;">Room</div>
<div class="a" style="left:427.9px;top:531px;width:37.35px;height:7.2px;font-size:5.5px;color:#ffffff;font-weight:normal;text-align:center;line-height:7.2px;white-space:nowrap;letter-spacing:0px;-webkit-text-stroke-width:0;">Mic</div>
<div class="a" style="left:464.65px;top:249px;width:1.2px;height:266.3px;background:#3d3d3d;"></div>
<div class="a" style="left:468.05px;top:254.8px;width:8px;height:7px;background:#505050;border-radius:1.5px;"></div>
<div class="a" style="left:477.45px;top:254.8px;width:21.9px;height:7px;background:#565656;border-radius:1.5px;"></div>
<div class="a" style="left:477.45px;top:254.8px;width:21.9px;height:7px;font-size:5.6px;color:#2e2e2e;font-weight:normal;text-align:center;line-height:7px;white-space:nowrap;letter-spacing:0px;">Input</div>
<svg class="a" style="left:468.45px;top:255px" width="8" height="7"><path d="M1.5 1v5h1M6.5 1v5h-1M1.5 1h1M6.5 1h-1" fill="none" stroke="#cfcfcf" stroke-width=".8"/><path d="M3.5 1.5v3M4.5 1.5v3" stroke="#cfcfcf" stroke-width=".6"/></svg>
<div class="a" style="left:468.05px;top:266px;width:31.4px;height:44px;background:#454545;border-radius:1px;"></div>
<div class="a" style="left:468.05px;top:266.7px;width:31.4px;height:7.1px;background:#1f5fc2;border-radius:2.5px;"></div>
<div class="a" style="left:468.05px;top:266.7px;width:31.4px;height:6.9px;font-size:5.5px;color:#eef2ff;font-weight:normal;text-align:center;line-height:6.9px;white-space:nowrap;letter-spacing:0px;overflow:hidden;-webkit-text-stroke-width:.05px;">Noise Gate</div>
<div class="a" style="left:468.05px;top:274.8px;width:31.4px;height:7.1px;background:#1f5fc2;border-radius:2.5px;"></div>
<div class="a" style="left:468.05px;top:274.8px;width:31.4px;height:6.9px;font-size:5.5px;color:#eef2ff;font-weight:normal;text-align:center;line-height:6.9px;white-space:nowrap;letter-spacing:0px;overflow:hidden;-webkit-text-stroke-width:.05px;">Channel EQ</div>
<div class="a" style="left:468.05px;top:282.9px;width:31.4px;height:7.1px;background:#1f5fc2;border-radius:2.5px;"></div>
<div class="a" style="left:468.05px;top:282.9px;width:31.4px;height:6.9px;font-size:5.5px;color:#eef2ff;font-weight:normal;text-align:center;line-height:6.9px;white-space:nowrap;letter-spacing:0px;overflow:hidden;-webkit-text-stroke-width:.05px;">Compressor</div>
<div class="a" style="left:468.05px;top:291px;width:31.4px;height:7.1px;background:#1f5fc2;border-radius:2.5px;"></div>
<div class="a" style="left:468.05px;top:291px;width:31.4px;height:6.9px;font-size:5.5px;color:#eef2ff;font-weight:normal;text-align:center;line-height:6.9px;white-space:nowrap;letter-spacing:0px;overflow:hidden;-webkit-text-stroke-width:.05px;">St-Delay</div>
<div class="a" style="left:468.05px;top:321.4px;width:31.4px;height:6.6px;background:#555555;border-radius:1.5px;"></div>
<div class="a" style="left:468.05px;top:321.4px;width:31.4px;height:6.6px;font-size:6px;color:#d8d8d8;font-weight:normal;text-align:center;line-height:6.6px;white-space:nowrap;letter-spacing:-.05px;">Surround</div>
<div class="a" style="left:468.05px;top:331.6px;width:31.4px;height:7.5px;background:#272727;border-radius:1px;"></div>
<div class="a" style="left:468.05px;top:331.6px;width:31.4px;height:7.5px;font-size:5.4px;color:#e2bf45;font-weight:normal;text-align:center;line-height:7.5px;white-space:nowrap;letter-spacing:0px;overflow:hidden;">1: Vocals</div>
<svg class="a" style="left:465.25px;top:340px" width="37" height="22" viewBox="465.25 340 37 22"><circle cx="473.9" cy="358.55" r=".55" fill="#8c8c8c"/><circle cx="471.2" cy="353.89" r=".55" fill="#8c8c8c"/><circle cx="471.2" cy="348.51" r=".55" fill="#8c8c8c"/><circle cx="473.9" cy="343.85" r=".55" fill="#8c8c8c"/><circle cx="478.56" cy="341.15" r=".55" fill="#8c8c8c"/><circle cx="483.94" cy="341.15" r=".55" fill="#8c8c8c"/><circle cx="488.6" cy="343.85" r=".55" fill="#8c8c8c"/><circle cx="491.3" cy="348.51" r=".55" fill="#8c8c8c"/><circle cx="491.3" cy="353.89" r=".55" fill="#8c8c8c"/><circle cx="481.25" cy="351.2" r="8.3" fill="#272727"/><circle cx="481.25" cy="351.2" r="8.3" fill="none" stroke="#202020" stroke-width=".6"/><circle cx="481.25" cy="349.6" r="1.1" fill="#3ddc5c"/><line x1="495.25" y1="343.3" x2="495.25" y2="359.7" stroke="#1e1e1e" stroke-width="1"/><circle cx="495.25" cy="358.6" r="1.4" fill="#3ddc5c"/></svg>
<div class="a" style="left:468.05px;top:362.9px;width:15.1px;height:8.2px;background:#262626;border-radius:1px;"></div>
<div class="a" style="left:468.05px;top:362.9px;width:15.1px;height:8.2px;font-size:5.6px;color:#e6e6e6;font-weight:normal;text-align:center;line-height:8.2px;white-space:nowrap;letter-spacing:0px;">-5.7</div>
<div class="a" style="left:484.25px;top:362.9px;width:15.2px;height:8.2px;background:#262626;border-radius:1px;"></div>
<div class="a" style="left:484.25px;top:362.9px;width:15.2px;height:8.2px;font-size:5.6px;color:#4ee06a;font-weight:normal;text-align:center;line-height:8.2px;white-space:nowrap;letter-spacing:0px;">-24.1</div>
<svg class="a" style="left:465.25px;top:376px" width="37" height="122" viewBox="465.25 376 37 122"><rect x="468.85" y="382" width="5" height=".7" fill="#7a7a7a"/><rect x="471.55" y="386.67" width="2.2" height=".6" fill="#666"/><rect x="471.55" y="391.33" width="2.2" height=".6" fill="#666"/><rect x="468.85" y="396" width="5" height=".7" fill="#7a7a7a"/><rect x="471.55" y="400.8" width="2.2" height=".6" fill="#666"/><rect x="471.55" y="405.6" width="2.2" height=".6" fill="#666"/><rect x="468.85" y="410.4" width="5" height=".7" fill="#7a7a7a"/><rect x="471.55" y="415.07" width="2.2" height=".6" fill="#666"/><rect x="471.55" y="419.73" width="2.2" height=".6" fill="#666"/><rect x="468.85" y="424.4" width="5" height=".7" fill="#7a7a7a"/><rect x="471.55" y="429.27" width="2.2" height=".6" fill="#666"/><rect x="471.55" y="434.13" width="2.2" height=".6" fill="#666"/><rect x="468.85" y="439" width="5" height=".7" fill="#7a7a7a"/><rect x="471.55" y="442" width="2.2" height=".6" fill="#666"/><rect x="471.55" y="445" width="2.2" height=".6" fill="#666"/><rect x="468.85" y="448" width="5" height=".7" fill="#7a7a7a"/><rect x="471.55" y="452" width="2.2" height=".6" fill="#666"/><rect x="471.55" y="456" width="2.2" height=".6" fill="#666"/><rect x="468.85" y="460" width="5" height=".7" fill="#7a7a7a"/><rect x="471.55" y="463" width="2.2" height=".6" fill="#666"/><rect x="471.55" y="466" width="2.2" height=".6" fill="#666"/><rect x="468.85" y="469" width="5" height=".7" fill="#7a7a7a"/><rect x="471.55" y="472.2" width="2.2" height=".6" fill="#666"/><rect x="471.55" y="475.4" width="2.2" height=".6" fill="#666"/><rect x="468.85" y="478.6" width="5" height=".7" fill="#7a7a7a"/><rect x="471.55" y="480.27" width="2.2" height=".6" fill="#666"/><rect x="471.55" y="481.93" width="2.2" height=".6" fill="#666"/><rect x="468.85" y="483.6" width="5" height=".7" fill="#7a7a7a"/><rect x="471.55" y="484.57" width="2.2" height=".6" fill="#666"/><rect x="471.55" y="485.53" width="2.2" height=".6" fill="#666"/><rect x="468.85" y="486.5" width="5" height=".7" fill="#7a7a7a"/><rect x="471.55" y="488.33" width="2.2" height=".6" fill="#666"/><rect x="471.55" y="490.17" width="2.2" height=".6" fill="#666"/><rect x="468.85" y="492" width="5" height=".7" fill="#7a7a7a"/><rect x="468.65" y="410" width="5.5" height="1.2" fill="#e0e0e0"/><rect x="475" y="381" width="1.1" height="112.5" fill="#1c1c1c"/><rect x="486.65" y="381.6" width="1.2" height=".7" fill="#6a6a6a"/><text x="486.45" y="382.9" font-size="3.7" fill="#9a9a9a" text-anchor="end" font-family="Liberation Sans">0</text><rect x="486.65" y="389.55" width="1.2" height=".7" fill="#6a6a6a"/><text x="486.45" y="390.85" font-size="3.7" fill="#9a9a9a" text-anchor="end" font-family="Liberation Sans">3</text><rect x="486.65" y="397.5" width="1.2" height=".7" fill="#6a6a6a"/><text x="486.45" y="398.8" font-size="3.7" fill="#9a9a9a" text-anchor="end" font-family="Liberation Sans">6</text><rect x="486.65" y="405.45" width="1.2" height=".7" fill="#6a6a6a"/><text x="486.45" y="406.75" font-size="3.7" fill="#9a9a9a" text-anchor="end" font-family="Liberation Sans">9</text><rect x="486.65" y="413.4" width="1.2" height=".7" fill="#6a6a6a"/><text x="486.45" y="414.7" font-size="3.7" fill="#9a9a9a" text-anchor="end" font-family="Liberation Sans">12</text><rect x="486.65" y="421.35" width="1.2" height=".7" fill="#6a6a6a"/><text x="486.45" y="422.65" font-size="3.7" fill="#9a9a9a" text-anchor="end" font-family="Liberation Sans">15</text><rect x="486.65" y="429.3" width="1.2" height=".7" fill="#6a6a6a"/><text x="486.45" y="430.6" font-size="3.7" fill="#9a9a9a" text-anchor="end" font-family="Liberation Sans">18</text><rect x="486.65" y="437.25" width="1.2" height=".7" fill="#6a6a6a"/><text x="486.45" y="438.55" font-size="3.7" fill="#9a9a9a" text-anchor="end" font-family="Liberation Sans">21</text><rect x="486.65" y="445.2" width="1.2" height=".7" fill="#6a6a6a"/><text x="486.45" y="446.5" font-size="3.7" fill="#9a9a9a" text-anchor="end" font-family="Liberation Sans">24</text><rect x="486.65" y="453.15" width="1.2" height=".7" fill="#6a6a6a"/><text x="486.45" y="454.45" font-size="3.7" fill="#9a9a9a" text-anchor="end" font-family="Liberation Sans">30</text><rect x="486.65" y="461.1" width="1.2" height=".7" fill="#6a6a6a"/><text x="486.45" y="462.4" font-size="3.7" fill="#9a9a9a" text-anchor="end" font-family="Liberation Sans">35</text><rect x="486.65" y="469.05" width="1.2" height=".7" fill="#6a6a6a"/><text x="486.45" y="470.35" font-size="3.7" fill="#9a9a9a" text-anchor="end" font-family="Liberation Sans">40</text><rect x="486.65" y="477" width="1.2" height=".7" fill="#6a6a6a"/><text x="486.45" y="478.3" font-size="3.7" fill="#9a9a9a" text-anchor="end" font-family="Liberation Sans">45</text><rect x="486.65" y="484.95" width="1.2" height=".7" fill="#6a6a6a"/><text x="486.45" y="486.25" font-size="3.7" fill="#9a9a9a" text-anchor="end" font-family="Liberation Sans">50</text><rect x="486.65" y="492.9" width="1.2" height=".7" fill="#6a6a6a"/><text x="486.45" y="494.2" font-size="3.7" fill="#9a9a9a" text-anchor="end" font-family="Liberation Sans">60</text><rect x="488.25" y="381" width="6.6" height="112.5" fill="#2a2a2a"/><rect x="488.25" y="412.6" width="6.6" height="2.6" fill="#4b4b4b"/></svg>
<div class="a" style="left:470.85px;top:429.3px;width:8.4px;height:16.9px;background:linear-gradient(180deg,#d8d8d8 0%,#cfcfcf 17%,#a4a4a4 20%,#9c9c9c 48%,#5e5e5e 50%,#cbcbcb 54%,#c4c4c4 86%,#7c7c7c 90%,#6a6a6a 100%);border-radius:1px;box-shadow:0 1px 1px rgba(0,0,0,.45);"></div>
<div class="a" style="left:485.25px;top:496.7px;width:6.7px;height:5.9px;background:#535353;border-radius:1.5px;"></div>
<div class="a" style="left:493.15px;top:496.7px;width:5.5px;height:5.9px;background:#535353;border-radius:1.5px;"></div>
<div class="a" style="left:485.25px;top:496.7px;width:6.7px;height:5.9px;font-size:5.4px;color:#c4c4c4;font-weight:normal;text-align:center;line-height:5.9px;white-space:nowrap;">R</div>
<div class="a" style="left:493.15px;top:496.7px;width:5.5px;height:5.9px;font-size:5.4px;color:#c4c4c4;font-weight:normal;text-align:center;line-height:5.9px;white-space:nowrap;">I</div>
<div class="a" style="left:468.05px;top:505.7px;width:13.7px;height:7.1px;background:#585858;border-radius:1.5px;"></div>
<div class="a" style="left:468.05px;top:505.7px;width:13.7px;height:7.1px;font-size:6px;color:#e4e4e4;font-weight:normal;text-align:center;line-height:7.1px;white-space:nowrap;-webkit-text-stroke:.15px #e4e4e4;">M</div>
<div class="a" style="left:484.95px;top:505.7px;width:14.1px;height:7.1px;background:#585858;border-radius:1.5px;"></div>
<div class="a" style="left:484.95px;top:505.7px;width:14.1px;height:7.1px;font-size:6px;color:#e4e4e4;font-weight:normal;text-align:center;line-height:7.1px;white-space:nowrap;-webkit-text-stroke:.15px #e4e4e4;">S</div>
<div class="a" style="left:465.25px;top:523.2px;width:37.35px;height:21.8px;background:#1bbfc0;"></div>
<div class="a" style="left:464.95px;top:523.2px;width:0.6px;height:21.8px;background:rgba(0,0,0,.18);"></div>
<div class="a" style="left:465.25px;top:524.6px;width:37.35px;height:7.2px;font-size:5.5px;color:#ffffff;font-weight:normal;text-align:center;line-height:7.2px;white-space:nowrap;letter-spacing:0px;-webkit-text-stroke-width:0;">Top</div>
<div class="a" style="left:465.25px;top:531px;width:37.35px;height:7.2px;font-size:5.5px;color:#ffffff;font-weight:normal;text-align:center;line-height:7.2px;white-space:nowrap;letter-spacing:0px;-webkit-text-stroke-width:0;">Line</div>
<div class="a" style="left:502px;top:249px;width:1.2px;height:266.3px;background:#3d3d3d;"></div>
<div class="a" style="left:505.4px;top:254.8px;width:8px;height:7px;background:#505050;border-radius:1.5px;"></div>
<div class="a" style="left:514.8px;top:254.8px;width:21.9px;height:7px;background:#565656;border-radius:1.5px;"></div>
<div class="a" style="left:514.8px;top:254.8px;width:21.9px;height:7px;font-size:5.6px;color:#2e2e2e;font-weight:normal;text-align:center;line-height:7px;white-space:nowrap;letter-spacing:0px;">Input</div>
<svg class="a" style="left:505.6px;top:255px" width="9" height="7"><circle cx="3" cy="3.3" r="1.8" fill="none" stroke="#cfcfcf" stroke-width=".8"/><circle cx="5.6" cy="3.3" r="1.8" fill="none" stroke="#cfcfcf" stroke-width=".8"/></svg>
<div class="a" style="left:505.4px;top:266px;width:31.4px;height:44px;background:#454545;border-radius:1px;"></div>
<div class="a" style="left:505.4px;top:266.7px;width:31.4px;height:7.1px;background:#1f5fc2;border-radius:2.5px;"></div>
<div class="a" style="left:505.4px;top:266.7px;width:31.4px;height:6.9px;font-size:5.5px;color:#eef2ff;font-weight:normal;text-align:center;line-height:6.9px;white-space:nowrap;letter-spacing:0px;overflow:hidden;-webkit-text-stroke-width:.05px;">Noise Gate</div>
<div class="a" style="left:505.4px;top:274.8px;width:31.4px;height:7.1px;background:#1f5fc2;border-radius:2.5px;"></div>
<div class="a" style="left:505.4px;top:274.8px;width:31.4px;height:6.9px;font-size:5.5px;color:#eef2ff;font-weight:normal;text-align:center;line-height:6.9px;white-space:nowrap;letter-spacing:0px;overflow:hidden;-webkit-text-stroke-width:.05px;">Channel EQ</div>
<div class="a" style="left:505.4px;top:282.9px;width:31.4px;height:7.1px;background:#1f5fc2;border-radius:2.5px;"></div>
<div class="a" style="left:505.4px;top:282.9px;width:31.4px;height:6.9px;font-size:5.5px;color:#eef2ff;font-weight:normal;text-align:center;line-height:6.9px;white-space:nowrap;letter-spacing:0px;overflow:hidden;-webkit-text-stroke-width:.05px;">Compressor</div>
<div class="a" style="left:505.4px;top:321.4px;width:31.4px;height:6.6px;background:#555555;border-radius:1.5px;"></div>
<div class="a" style="left:505.4px;top:321.4px;width:31.4px;height:6.6px;font-size:6px;color:#d8d8d8;font-weight:normal;text-align:center;line-height:6.6px;white-space:nowrap;letter-spacing:-.05px;">Object</div>
<div class="a" style="left:505.4px;top:331.6px;width:31.4px;height:7.5px;background:#272727;border-radius:1px;"></div>
<div class="a" style="left:505.4px;top:331.6px;width:31.4px;height:7.5px;font-size:5.4px;color:#e2bf45;font-weight:normal;text-align:center;line-height:7.5px;white-space:nowrap;letter-spacing:0px;overflow:hidden;">1: Vocals</div>
<svg class="a" style="left:502.6px;top:340px" width="37" height="22" viewBox="502.6 340 37 22"><rect x="511.1" y="343.7" width="15" height="15" fill="#3a3a3a" stroke="#242424" stroke-width=".8"/><line x1="514.85" y1="343.7" x2="514.85" y2="358.7" stroke="#333" stroke-width=".5"/><line x1="511.1" y1="347.45" x2="526.1" y2="347.45" stroke="#333" stroke-width=".5"/><line x1="518.6" y1="343.7" x2="518.6" y2="358.7" stroke="#333" stroke-width=".5"/><line x1="511.1" y1="351.2" x2="526.1" y2="351.2" stroke="#333" stroke-width=".5"/><line x1="522.35" y1="343.7" x2="522.35" y2="358.7" stroke="#333" stroke-width=".5"/><line x1="511.1" y1="354.95" x2="526.1" y2="354.95" stroke="#333" stroke-width=".5"/><path d="M517.6 346.2L524.6 344.2L521.6 352.2Z" fill="#3f6f45"/><circle cx="520.1" cy="346.2" r="1.1" fill="#3ddc5c"/><line x1="532.6" y1="343.3" x2="532.6" y2="359.7" stroke="#1e1e1e" stroke-width="1"/><circle cx="532.6" cy="350.5" r="1.4" fill="#3ddc5c"/></svg>
<div class="a" style="left:505.4px;top:362.9px;width:15.1px;height:8.2px;background:#262626;border-radius:1px;"></div>
<div class="a" style="left:505.4px;top:362.9px;width:15.1px;height:8.2px;font-size:5.6px;color:#e6e6e6;font-weight:normal;text-align:center;line-height:8.2px;white-space:nowrap;letter-spacing:0px;">-6.4</div>
<div class="a" style="left:521.6px;top:362.9px;width:15.2px;height:8.2px;background:#262626;border-radius:1px;"></div>
<div class="a" style="left:521.6px;top:362.9px;width:15.2px;height:8.2px;font-size:5.6px;color:#4ee06a;font-weight:normal;text-align:center;line-height:8.2px;white-space:nowrap;letter-spacing:0px;">-29.6</div>
<svg class="a" style="left:502.6px;top:376px" width="37" height="122" viewBox="502.6 376 37 122"><rect x="506.2" y="382" width="5" height=".7" fill="#7a7a7a"/><rect x="508.9" y="386.67" width="2.2" height=".6" fill="#666"/><rect x="508.9" y="391.33" width="2.2" height=".6" fill="#666"/><rect x="506.2" y="396" width="5" height=".7" fill="#7a7a7a"/><rect x="508.9" y="400.8" width="2.2" height=".6" fill="#666"/><rect x="508.9" y="405.6" width="2.2" height=".6" fill="#666"/><rect x="506.2" y="410.4" width="5" height=".7" fill="#7a7a7a"/><rect x="508.9" y="415.07" width="2.2" height=".6" fill="#666"/><rect x="508.9" y="419.73" width="2.2" height=".6" fill="#666"/><rect x="506.2" y="424.4" width="5" height=".7" fill="#7a7a7a"/><rect x="508.9" y="429.27" width="2.2" height=".6" fill="#666"/><rect x="508.9" y="434.13" width="2.2" height=".6" fill="#666"/><rect x="506.2" y="439" width="5" height=".7" fill="#7a7a7a"/><rect x="508.9" y="442" width="2.2" height=".6" fill="#666"/><rect x="508.9" y="445" width="2.2" height=".6" fill="#666"/><rect x="506.2" y="448" width="5" height=".7" fill="#7a7a7a"/><rect x="508.9" y="452" width="2.2" height=".6" fill="#666"/><rect x="508.9" y="456" width="2.2" height=".6" fill="#666"/><rect x="506.2" y="460" width="5" height=".7" fill="#7a7a7a"/><rect x="508.9" y="463" width="2.2" height=".6" fill="#666"/><rect x="508.9" y="466" width="2.2" height=".6" fill="#666"/><rect x="506.2" y="469" width="5" height=".7" fill="#7a7a7a"/><rect x="508.9" y="472.2" width="2.2" height=".6" fill="#666"/><rect x="508.9" y="475.4" width="2.2" height=".6" fill="#666"/><rect x="506.2" y="478.6" width="5" height=".7" fill="#7a7a7a"/><rect x="508.9" y="480.27" width="2.2" height=".6" fill="#666"/><rect x="508.9" y="481.93" width="2.2" height=".6" fill="#666"/><rect x="506.2" y="483.6" width="5" height=".7" fill="#7a7a7a"/><rect x="508.9" y="484.57" width="2.2" height=".6" fill="#666"/><rect x="508.9" y="485.53" width="2.2" height=".6" fill="#666"/><rect x="506.2" y="486.5" width="5" height=".7" fill="#7a7a7a"/><rect x="508.9" y="488.33" width="2.2" height=".6" fill="#666"/><rect x="508.9" y="490.17" width="2.2" height=".6" fill="#666"/><rect x="506.2" y="492" width="5" height=".7" fill="#7a7a7a"/><rect x="506" y="410" width="5.5" height="1.2" fill="#e0e0e0"/><rect x="512.35" y="381" width="1.1" height="112.5" fill="#1c1c1c"/><rect x="524" y="381.6" width="1.2" height=".7" fill="#6a6a6a"/><text x="523.8" y="382.9" font-size="3.7" fill="#9a9a9a" text-anchor="end" font-family="Liberation Sans">0</text><rect x="524" y="389.55" width="1.2" height=".7" fill="#6a6a6a"/><text x="523.8" y="390.85" font-size="3.7" fill="#9a9a9a" text-anchor="end" font-family="Liberation Sans">3</text><rect x="524" y="397.5" width="1.2" height=".7" fill="#6a6a6a"/><text x="523.8" y="398.8" font-size="3.7" fill="#9a9a9a" text-anchor="end" font-family="Liberation Sans">6</text><rect x="524" y="405.45" width="1.2" height=".7" fill="#6a6a6a"/><text x="523.8" y="406.75" font-size="3.7" fill="#9a9a9a" text-anchor="end" font-family="Liberation Sans">9</text><rect x="524" y="413.4" width="1.2" height=".7" fill="#6a6a6a"/><text x="523.8" y="414.7" font-size="3.7" fill="#9a9a9a" text-anchor="end" font-family="Liberation Sans">12</text><rect x="524" y="421.35" width="1.2" height=".7" fill="#6a6a6a"/><text x="523.8" y="422.65" font-size="3.7" fill="#9a9a9a" text-anchor="end" font-family="Liberation Sans">15</text><rect x="524" y="429.3" width="1.2" height=".7" fill="#6a6a6a"/><text x="523.8" y="430.6" font-size="3.7" fill="#9a9a9a" text-anchor="end" font-family="Liberation Sans">18</text><rect x="524" y="437.25" width="1.2" height=".7" fill="#6a6a6a"/><text x="523.8" y="438.55" font-size="3.7" fill="#9a9a9a" text-anchor="end" font-family="Liberation Sans">21</text><rect x="524" y="445.2" width="1.2" height=".7" fill="#6a6a6a"/><text x="523.8" y="446.5" font-size="3.7" fill="#9a9a9a" text-anchor="end" font-family="Liberation Sans">24</text><rect x="524" y="453.15" width="1.2" height=".7" fill="#6a6a6a"/><text x="523.8" y="454.45" font-size="3.7" fill="#9a9a9a" text-anchor="end" font-family="Liberation Sans">30</text><rect x="524" y="461.1" width="1.2" height=".7" fill="#6a6a6a"/><text x="523.8" y="462.4" font-size="3.7" fill="#9a9a9a" text-anchor="end" font-family="Liberation Sans">35</text><rect x="524" y="469.05" width="1.2" height=".7" fill="#6a6a6a"/><text x="523.8" y="470.35" font-size="3.7" fill="#9a9a9a" text-anchor="end" font-family="Liberation Sans">40</text><rect x="524" y="477" width="1.2" height=".7" fill="#6a6a6a"/><text x="523.8" y="478.3" font-size="3.7" fill="#9a9a9a" text-anchor="end" font-family="Liberation Sans">45</text><rect x="524" y="484.95" width="1.2" height=".7" fill="#6a6a6a"/><text x="523.8" y="486.25" font-size="3.7" fill="#9a9a9a" text-anchor="end" font-family="Liberation Sans">50</text><rect x="524" y="492.9" width="1.2" height=".7" fill="#6a6a6a"/><text x="523.8" y="494.2" font-size="3.7" fill="#9a9a9a" text-anchor="end" font-family="Liberation Sans">60</text><rect x="526.2" y="381" width="5.4" height="112.5" fill="#2a2a2a"/></svg>
<div class="a" style="left:508.2px;top:431.7px;width:8.4px;height:16.3px;background:linear-gradient(180deg,#d8d8d8 0%,#cfcfcf 17%,#a4a4a4 20%,#9c9c9c 48%,#5e5e5e 50%,#cbcbcb 54%,#c4c4c4 86%,#7c7c7c 90%,#6a6a6a 100%);border-radius:1px;box-shadow:0 1px 1px rgba(0,0,0,.45);"></div>
<div class="a" style="left:522.6px;top:496.7px;width:6.7px;height:5.9px;background:#535353;border-radius:1.5px;"></div>
<div class="a" style="left:530.5px;top:496.7px;width:5.5px;height:5.9px;background:#535353;border-radius:1.5px;"></div>
<div class="a" style="left:522.6px;top:496.7px;width:6.7px;height:5.9px;font-size:5.4px;color:#c4c4c4;font-weight:normal;text-align:center;line-height:5.9px;white-space:nowrap;">R</div>
<div class="a" style="left:530.5px;top:496.7px;width:5.5px;height:5.9px;font-size:5.4px;color:#c4c4c4;font-weight:normal;text-align:center;line-height:5.9px;white-space:nowrap;">I</div>
<div class="a" style="left:505.4px;top:505.7px;width:13.7px;height:7.1px;background:#585858;border-radius:1.5px;"></div>
<div class="a" style="left:505.4px;top:505.7px;width:13.7px;height:7.1px;font-size:6px;color:#e4e4e4;font-weight:normal;text-align:center;line-height:7.1px;white-space:nowrap;-webkit-text-stroke:.15px #e4e4e4;">M</div>
<div class="a" style="left:522.3px;top:505.7px;width:14.1px;height:7.1px;background:#585858;border-radius:1.5px;"></div>
<div class="a" style="left:522.3px;top:505.7px;width:14.1px;height:7.1px;font-size:6px;color:#e4e4e4;font-weight:normal;text-align:center;line-height:7.1px;white-space:nowrap;-webkit-text-stroke:.15px #e4e4e4;">S</div>
<div class="a" style="left:502.6px;top:523.2px;width:37.35px;height:21.8px;background:#1a9fd2;"></div>
<div class="a" style="left:502.3px;top:523.2px;width:0.6px;height:21.8px;background:rgba(0,0,0,.18);"></div>
<div class="a" style="left:502.6px;top:524.6px;width:37.35px;height:7.2px;font-size:5.5px;color:#ffffff;font-weight:normal;text-align:center;line-height:7.2px;white-space:nowrap;letter-spacing:0px;-webkit-text-stroke-width:0;">Tenor</div>
<div class="a" style="left:502.6px;top:531px;width:37.35px;height:7.2px;font-size:5.5px;color:#ffffff;font-weight:normal;text-align:center;line-height:7.2px;white-space:nowrap;letter-spacing:0px;-webkit-text-stroke-width:0;"></div>
<div class="a" style="left:539.35px;top:249px;width:1.2px;height:266.3px;background:#3d3d3d;"></div>
<div class="a" style="left:542.75px;top:254.8px;width:8px;height:7px;background:#505050;border-radius:1.5px;"></div>
<div class="a" style="left:552.15px;top:254.8px;width:21.9px;height:7px;background:#565656;border-radius:1.5px;"></div>
<div class="a" style="left:552.15px;top:254.8px;width:21.9px;height:7px;font-size:5.6px;color:#2e2e2e;font-weight:normal;text-align:center;line-height:7px;white-space:nowrap;letter-spacing:0px;">Input</div>
<svg class="a" style="left:542.95px;top:255px" width="9" height="7"><circle cx="3" cy="3.3" r="1.8" fill="none" stroke="#cfcfcf" stroke-width=".8"/><circle cx="5.6" cy="3.3" r="1.8" fill="none" stroke="#cfcfcf" stroke-width=".8"/></svg>
<div class="a" style="left:542.75px;top:266px;width:31.4px;height:44px;background:#454545;border-radius:1px;"></div>
<div class="a" style="left:542.75px;top:266.7px;width:31.4px;height:7.1px;background:#1f5fc2;border-radius:2.5px;"></div>
<div class="a" style="left:542.75px;top:266.7px;width:31.4px;height:6.9px;font-size:5.5px;color:#eef2ff;font-weight:normal;text-align:center;line-height:6.9px;white-space:nowrap;letter-spacing:0px;overflow:hidden;-webkit-text-stroke-width:.05px;">Noise Gate</div>
<div class="a" style="left:542.75px;top:274.8px;width:31.4px;height:7.1px;background:#1f5fc2;border-radius:2.5px;"></div>
<div class="a" style="left:542.75px;top:274.8px;width:31.4px;height:6.9px;font-size:5.5px;color:#eef2ff;font-weight:normal;text-align:center;line-height:6.9px;white-space:nowrap;letter-spacing:0px;overflow:hidden;-webkit-text-stroke-width:.05px;">Channel EQ</div>
<div class="a" style="left:542.75px;top:282.9px;width:31.4px;height:7.1px;background:#1f5fc2;border-radius:2.5px;"></div>
<div class="a" style="left:542.75px;top:282.9px;width:31.4px;height:6.9px;font-size:5.5px;color:#eef2ff;font-weight:normal;text-align:center;line-height:6.9px;white-space:nowrap;letter-spacing:0px;overflow:hidden;-webkit-text-stroke-width:.05px;">Compressor</div>
<div class="a" style="left:542.75px;top:291px;width:31.4px;height:7.1px;background:#1f5fc2;border-radius:2.5px;"></div>
<div class="a" style="left:542.75px;top:291px;width:31.4px;height:6.9px;font-size:5.5px;color:#eef2ff;font-weight:normal;text-align:center;line-height:6.9px;white-space:nowrap;letter-spacing:0px;overflow:hidden;-webkit-text-stroke-width:.05px;">St-Delay</div>
<div class="a" style="left:542.75px;top:321.4px;width:31.4px;height:6.6px;background:#555555;border-radius:1.5px;"></div>
<div class="a" style="left:542.75px;top:321.4px;width:31.4px;height:6.6px;font-size:6px;color:#d8d8d8;font-weight:normal;text-align:center;line-height:6.6px;white-space:nowrap;letter-spacing:-.05px;">Surround</div>
<div class="a" style="left:542.75px;top:331.6px;width:31.4px;height:7.5px;background:#272727;border-radius:1px;"></div>
<div class="a" style="left:542.75px;top:331.6px;width:31.4px;height:7.5px;font-size:5.4px;color:#e2bf45;font-weight:normal;text-align:center;line-height:7.5px;white-space:nowrap;letter-spacing:0px;overflow:hidden;">1: Vocals</div>
<svg class="a" style="left:539.95px;top:340px" width="37" height="22" viewBox="539.95 340 37 22"><circle cx="548.6" cy="358.55" r=".55" fill="#8c8c8c"/><circle cx="545.9" cy="353.89" r=".55" fill="#8c8c8c"/><circle cx="545.9" cy="348.51" r=".55" fill="#8c8c8c"/><circle cx="548.6" cy="343.85" r=".55" fill="#8c8c8c"/><circle cx="553.26" cy="341.15" r=".55" fill="#8c8c8c"/><circle cx="558.64" cy="341.15" r=".55" fill="#8c8c8c"/><circle cx="563.3" cy="343.85" r=".55" fill="#8c8c8c"/><circle cx="566" cy="348.51" r=".55" fill="#8c8c8c"/><circle cx="566" cy="353.89" r=".55" fill="#8c8c8c"/><circle cx="555.95" cy="351.2" r="8.3" fill="#272727"/><circle cx="555.95" cy="351.2" r="8.3" fill="none" stroke="#202020" stroke-width=".6"/><path d="M551.45 345.2L560.45 345.2L555.95 352.2Z" fill="#2f6e3d"/><circle cx="555.95" cy="345.2" r="1.1" fill="#3ddc5c"/><line x1="569.95" y1="343.3" x2="569.95" y2="359.7" stroke="#1e1e1e" stroke-width="1"/><circle cx="569.95" cy="358.6" r="1.4" fill="#3ddc5c"/></svg>
<div class="a" style="left:542.75px;top:362.9px;width:15.1px;height:8.2px;background:#262626;border-radius:1px;"></div>
<div class="a" style="left:542.75px;top:362.9px;width:15.1px;height:8.2px;font-size:5.6px;color:#e6e6e6;font-weight:normal;text-align:center;line-height:8.2px;white-space:nowrap;letter-spacing:0px;">-3.1</div>
<div class="a" style="left:558.95px;top:362.9px;width:15.2px;height:8.2px;background:#262626;border-radius:1px;"></div>
<div class="a" style="left:558.95px;top:362.9px;width:15.2px;height:8.2px;font-size:5.6px;color:#4ee06a;font-weight:normal;text-align:center;line-height:8.2px;white-space:nowrap;letter-spacing:0px;">-24.8</div>
<svg class="a" style="left:539.95px;top:376px" width="37" height="122" viewBox="539.95 376 37 122"><rect x="543.55" y="382" width="5" height=".7" fill="#7a7a7a"/><rect x="546.25" y="386.67" width="2.2" height=".6" fill="#666"/><rect x="546.25" y="391.33" width="2.2" height=".6" fill="#666"/><rect x="543.55" y="396" width="5" height=".7" fill="#7a7a7a"/><rect x="546.25" y="400.8" width="2.2" height=".6" fill="#666"/><rect x="546.25" y="405.6" width="2.2" height=".6" fill="#666"/><rect x="543.55" y="410.4" width="5" height=".7" fill="#7a7a7a"/><rect x="546.25" y="415.07" width="2.2" height=".6" fill="#666"/><rect x="546.25" y="419.73" width="2.2" height=".6" fill="#666"/><rect x="543.55" y="424.4" width="5" height=".7" fill="#7a7a7a"/><rect x="546.25" y="429.27" width="2.2" height=".6" fill="#666"/><rect x="546.25" y="434.13" width="2.2" height=".6" fill="#666"/><rect x="543.55" y="439" width="5" height=".7" fill="#7a7a7a"/><rect x="546.25" y="442" width="2.2" height=".6" fill="#666"/><rect x="546.25" y="445" width="2.2" height=".6" fill="#666"/><rect x="543.55" y="448" width="5" height=".7" fill="#7a7a7a"/><rect x="546.25" y="452" width="2.2" height=".6" fill="#666"/><rect x="546.25" y="456" width="2.2" height=".6" fill="#666"/><rect x="543.55" y="460" width="5" height=".7" fill="#7a7a7a"/><rect x="546.25" y="463" width="2.2" height=".6" fill="#666"/><rect x="546.25" y="466" width="2.2" height=".6" fill="#666"/><rect x="543.55" y="469" width="5" height=".7" fill="#7a7a7a"/><rect x="546.25" y="472.2" width="2.2" height=".6" fill="#666"/><rect x="546.25" y="475.4" width="2.2" height=".6" fill="#666"/><rect x="543.55" y="478.6" width="5" height=".7" fill="#7a7a7a"/><rect x="546.25" y="480.27" width="2.2" height=".6" fill="#666"/><rect x="546.25" y="481.93" width="2.2" height=".6" fill="#666"/><rect x="543.55" y="483.6" width="5" height=".7" fill="#7a7a7a"/><rect x="546.25" y="484.57" width="2.2" height=".6" fill="#666"/><rect x="546.25" y="485.53" width="2.2" height=".6" fill="#666"/><rect x="543.55" y="486.5" width="5" height=".7" fill="#7a7a7a"/><rect x="546.25" y="488.33" width="2.2" height=".6" fill="#666"/><rect x="546.25" y="490.17" width="2.2" height=".6" fill="#666"/><rect x="543.55" y="492" width="5" height=".7" fill="#7a7a7a"/><rect x="543.35" y="410" width="5.5" height="1.2" fill="#e0e0e0"/><rect x="549.7" y="381" width="1.1" height="112.5" fill="#1c1c1c"/><rect x="561.35" y="381.6" width="1.2" height=".7" fill="#6a6a6a"/><text x="561.15" y="382.9" font-size="3.7" fill="#9a9a9a" text-anchor="end" font-family="Liberation Sans">0</text><rect x="561.35" y="389.55" width="1.2" height=".7" fill="#6a6a6a"/><text x="561.15" y="390.85" font-size="3.7" fill="#9a9a9a" text-anchor="end" font-family="Liberation Sans">3</text><rect x="561.35" y="397.5" width="1.2" height=".7" fill="#6a6a6a"/><text x="561.15" y="398.8" font-size="3.7" fill="#9a9a9a" text-anchor="end" font-family="Liberation Sans">6</text><rect x="561.35" y="405.45" width="1.2" height=".7" fill="#6a6a6a"/><text x="561.15" y="406.75" font-size="3.7" fill="#9a9a9a" text-anchor="end" font-family="Liberation Sans">9</text><rect x="561.35" y="413.4" width="1.2" height=".7" fill="#6a6a6a"/><text x="561.15" y="414.7" font-size="3.7" fill="#9a9a9a" text-anchor="end" font-family="Liberation Sans">12</text><rect x="561.35" y="421.35" width="1.2" height=".7" fill="#6a6a6a"/><text x="561.15" y="422.65" font-size="3.7" fill="#9a9a9a" text-anchor="end" font-family="Liberation Sans">15</text><rect x="561.35" y="429.3" width="1.2" height=".7" fill="#6a6a6a"/><text x="561.15" y="430.6" font-size="3.7" fill="#9a9a9a" text-anchor="end" font-family="Liberation Sans">18</text><rect x="561.35" y="437.25" width="1.2" height=".7" fill="#6a6a6a"/><text x="561.15" y="438.55" font-size="3.7" fill="#9a9a9a" text-anchor="end" font-family="Liberation Sans">21</text><rect x="561.35" y="445.2" width="1.2" height=".7" fill="#6a6a6a"/><text x="561.15" y="446.5" font-size="3.7" fill="#9a9a9a" text-anchor="end" font-family="Liberation Sans">24</text><rect x="561.35" y="453.15" width="1.2" height=".7" fill="#6a6a6a"/><text x="561.15" y="454.45" font-size="3.7" fill="#9a9a9a" text-anchor="end" font-family="Liberation Sans">30</text><rect x="561.35" y="461.1" width="1.2" height=".7" fill="#6a6a6a"/><text x="561.15" y="462.4" font-size="3.7" fill="#9a9a9a" text-anchor="end" font-family="Liberation Sans">35</text><rect x="561.35" y="469.05" width="1.2" height=".7" fill="#6a6a6a"/><text x="561.15" y="470.35" font-size="3.7" fill="#9a9a9a" text-anchor="end" font-family="Liberation Sans">40</text><rect x="561.35" y="477" width="1.2" height=".7" fill="#6a6a6a"/><text x="561.15" y="478.3" font-size="3.7" fill="#9a9a9a" text-anchor="end" font-family="Liberation Sans">45</text><rect x="561.35" y="484.95" width="1.2" height=".7" fill="#6a6a6a"/><text x="561.15" y="486.25" font-size="3.7" fill="#9a9a9a" text-anchor="end" font-family="Liberation Sans">50</text><rect x="561.35" y="492.9" width="1.2" height=".7" fill="#6a6a6a"/><text x="561.15" y="494.2" font-size="3.7" fill="#9a9a9a" text-anchor="end" font-family="Liberation Sans">60</text><rect x="563.55" y="381" width="5.4" height="112.5" fill="#2a2a2a"/></svg>
<div class="a" style="left:545.55px;top:417.2px;width:8.4px;height:16.8px;background:linear-gradient(180deg,#d8d8d8 0%,#cfcfcf 17%,#a4a4a4 20%,#9c9c9c 48%,#5e5e5e 50%,#cbcbcb 54%,#c4c4c4 86%,#7c7c7c 90%,#6a6a6a 100%);border-radius:1px;box-shadow:0 1px 1px rgba(0,0,0,.45);"></div>
<div class="a" style="left:559.95px;top:496.7px;width:6.7px;height:5.9px;background:#535353;border-radius:1.5px;"></div>
<div class="a" style="left:567.85px;top:496.7px;width:5.5px;height:5.9px;background:#535353;border-radius:1.5px;"></div>
<div class="a" style="left:559.95px;top:496.7px;width:6.7px;height:5.9px;font-size:5.4px;color:#c4c4c4;font-weight:normal;text-align:center;line-height:5.9px;white-space:nowrap;">R</div>
<div class="a" style="left:567.85px;top:496.7px;width:5.5px;height:5.9px;font-size:5.4px;color:#c4c4c4;font-weight:normal;text-align:center;line-height:5.9px;white-space:nowrap;">I</div>
<div class="a" style="left:542.75px;top:505.7px;width:13.7px;height:7.1px;background:#585858;border-radius:1.5px;"></div>
<div class="a" style="left:542.75px;top:505.7px;width:13.7px;height:7.1px;font-size:6px;color:#e4e4e4;font-weight:normal;text-align:center;line-height:7.1px;white-space:nowrap;-webkit-text-stroke:.15px #e4e4e4;">M</div>
<div class="a" style="left:559.65px;top:505.7px;width:14.1px;height:7.1px;background:#585858;border-radius:1.5px;"></div>
<div class="a" style="left:559.65px;top:505.7px;width:14.1px;height:7.1px;font-size:6px;color:#e4e4e4;font-weight:normal;text-align:center;line-height:7.1px;white-space:nowrap;-webkit-text-stroke:.15px #e4e4e4;">S</div>
<div class="a" style="left:539.95px;top:523.2px;width:37.35px;height:21.8px;background:#2388d3;"></div>
<div class="a" style="left:539.65px;top:523.2px;width:0.6px;height:21.8px;background:rgba(0,0,0,.18);"></div>
<div class="a" style="left:539.95px;top:524.6px;width:37.35px;height:7.2px;font-size:5.5px;color:#ffffff;font-weight:normal;text-align:center;line-height:7.2px;white-space:nowrap;letter-spacing:0px;-webkit-text-stroke-width:0;">Vocoder</div>
<div class="a" style="left:539.95px;top:531px;width:37.35px;height:7.2px;font-size:5.5px;color:#ffffff;font-weight:normal;text-align:center;line-height:7.2px;white-space:nowrap;letter-spacing:0px;-webkit-text-stroke-width:0;"></div>
<div class="a" style="left:576.7px;top:249px;width:1.2px;height:266.3px;background:#3d3d3d;"></div>
<div class="a" style="left:580.1px;top:254.8px;width:8px;height:7px;background:#505050;border-radius:1.5px;"></div>
<div class="a" style="left:589.5px;top:254.8px;width:21.9px;height:7px;background:#565656;border-radius:1.5px;"></div>
<div class="a" style="left:589.5px;top:254.8px;width:21.9px;height:7px;font-size:5.6px;color:#2e2e2e;font-weight:normal;text-align:center;line-height:7px;white-space:nowrap;letter-spacing:0px;">Input</div>
<svg class="a" style="left:580.5px;top:255px" width="8" height="7"><path d="M1.5 1v5h1M6.5 1v5h-1M1.5 1h1M6.5 1h-1" fill="none" stroke="#cfcfcf" stroke-width=".8"/><path d="M3.5 1.5v3M4.5 1.5v3" stroke="#cfcfcf" stroke-width=".6"/></svg>
<div class="a" style="left:580.1px;top:266px;width:31.4px;height:44px;background:#454545;border-radius:1px;"></div>
<div class="a" style="left:580.1px;top:266.7px;width:31.4px;height:7.1px;background:#1f5fc2;border-radius:2.5px;"></div>
<div class="a" style="left:580.1px;top:266.7px;width:31.4px;height:6.9px;font-size:5.5px;color:#eef2ff;font-weight:normal;text-align:center;line-height:6.9px;white-space:nowrap;letter-spacing:0px;overflow:hidden;-webkit-text-stroke-width:.05px;">Noise Gate</div>
<div class="a" style="left:580.1px;top:274.8px;width:31.4px;height:7.1px;background:#1f5fc2;border-radius:2.5px;"></div>
<div class="a" style="left:580.1px;top:274.8px;width:31.4px;height:6.9px;font-size:5.5px;color:#eef2ff;font-weight:normal;text-align:center;line-height:6.9px;white-space:nowrap;letter-spacing:0px;overflow:hidden;-webkit-text-stroke-width:.05px;">Channel EQ</div>
<div class="a" style="left:580.1px;top:282.9px;width:31.4px;height:7.1px;background:#1f5fc2;border-radius:2.5px;"></div>
<div class="a" style="left:580.1px;top:282.9px;width:31.4px;height:6.9px;font-size:5.5px;color:#eef2ff;font-weight:normal;text-align:center;line-height:6.9px;white-space:nowrap;letter-spacing:0px;overflow:hidden;-webkit-text-stroke-width:.05px;">Compressor</div>
<div class="a" style="left:580.1px;top:291px;width:31.4px;height:7.1px;background:#1f5fc2;border-radius:2.5px;"></div>
<div class="a" style="left:580.1px;top:291px;width:31.4px;height:6.9px;font-size:5.5px;color:#eef2ff;font-weight:normal;text-align:center;line-height:6.9px;white-space:nowrap;letter-spacing:0px;overflow:hidden;-webkit-text-stroke-width:.05px;">St-Delay</div>
<div class="a" style="left:580.1px;top:321.4px;width:31.4px;height:6.6px;background:#555555;border-radius:1.5px;"></div>
<div class="a" style="left:580.1px;top:321.4px;width:31.4px;height:6.6px;font-size:6px;color:#d8d8d8;font-weight:normal;text-align:center;line-height:6.6px;white-space:nowrap;letter-spacing:-.05px;">Object</div>
<div class="a" style="left:580.1px;top:331.6px;width:31.4px;height:7.5px;background:#272727;border-radius:1px;"></div>
<div class="a" style="left:580.1px;top:331.6px;width:31.4px;height:7.5px;font-size:5.4px;color:#e2bf45;font-weight:normal;text-align:center;line-height:7.5px;white-space:nowrap;letter-spacing:0px;overflow:hidden;">1: Vocals</div>
<svg class="a" style="left:577.3px;top:340px" width="37" height="22" viewBox="577.3 340 37 22"><rect x="585.8" y="343.7" width="15" height="15" fill="#3a3a3a" stroke="#242424" stroke-width=".8"/><line x1="589.55" y1="343.7" x2="589.55" y2="358.7" stroke="#333" stroke-width=".5"/><line x1="585.8" y1="347.45" x2="600.8" y2="347.45" stroke="#333" stroke-width=".5"/><line x1="593.3" y1="343.7" x2="593.3" y2="358.7" stroke="#333" stroke-width=".5"/><line x1="585.8" y1="351.2" x2="600.8" y2="351.2" stroke="#333" stroke-width=".5"/><line x1="597.05" y1="343.7" x2="597.05" y2="358.7" stroke="#333" stroke-width=".5"/><line x1="585.8" y1="354.95" x2="600.8" y2="354.95" stroke="#333" stroke-width=".5"/><path d="M585.8 343.7L594.3 351.2L585.8 358.7Z" fill="#3f6f45"/><circle cx="587.3" cy="351.2" r="1.1" fill="#3ddc5c"/><line x1="607.3" y1="343.3" x2="607.3" y2="359.7" stroke="#1e1e1e" stroke-width="1"/><circle cx="607.3" cy="350.5" r="1.4" fill="#3ddc5c"/></svg>
<div class="a" style="left:580.1px;top:362.9px;width:15.1px;height:8.2px;background:#262626;border-radius:1px;"></div>
<div class="a" style="left:580.1px;top:362.9px;width:15.1px;height:8.2px;font-size:5.6px;color:#e6e6e6;font-weight:normal;text-align:center;line-height:8.2px;white-space:nowrap;letter-spacing:0px;">-2.9</div>
<div class="a" style="left:596.3px;top:362.9px;width:15.2px;height:8.2px;background:#262626;border-radius:1px;"></div>
<div class="a" style="left:596.3px;top:362.9px;width:15.2px;height:8.2px;font-size:5.6px;color:#4ee06a;font-weight:normal;text-align:center;line-height:8.2px;white-space:nowrap;letter-spacing:0px;">-21.1</div>
<svg class="a" style="left:577.3px;top:376px" width="37" height="122" viewBox="577.3 376 37 122"><rect x="580.9" y="382" width="5" height=".7" fill="#7a7a7a"/><rect x="583.6" y="386.67" width="2.2" height=".6" fill="#666"/><rect x="583.6" y="391.33" width="2.2" height=".6" fill="#666"/><rect x="580.9" y="396" width="5" height=".7" fill="#7a7a7a"/><rect x="583.6" y="400.8" width="2.2" height=".6" fill="#666"/><rect x="583.6" y="405.6" width="2.2" height=".6" fill="#666"/><rect x="580.9" y="410.4" width="5" height=".7" fill="#7a7a7a"/><rect x="583.6" y="415.07" width="2.2" height=".6" fill="#666"/><rect x="583.6" y="419.73" width="2.2" height=".6" fill="#666"/><rect x="580.9" y="424.4" width="5" height=".7" fill="#7a7a7a"/><rect x="583.6" y="429.27" width="2.2" height=".6" fill="#666"/><rect x="583.6" y="434.13" width="2.2" height=".6" fill="#666"/><rect x="580.9" y="439" width="5" height=".7" fill="#7a7a7a"/><rect x="583.6" y="442" width="2.2" height=".6" fill="#666"/><rect x="583.6" y="445" width="2.2" height=".6" fill="#666"/><rect x="580.9" y="448" width="5" height=".7" fill="#7a7a7a"/><rect x="583.6" y="452" width="2.2" height=".6" fill="#666"/><rect x="583.6" y="456" width="2.2" height=".6" fill="#666"/><rect x="580.9" y="460" width="5" height=".7" fill="#7a7a7a"/><rect x="583.6" y="463" width="2.2" height=".6" fill="#666"/><rect x="583.6" y="466" width="2.2" height=".6" fill="#666"/><rect x="580.9" y="469" width="5" height=".7" fill="#7a7a7a"/><rect x="583.6" y="472.2" width="2.2" height=".6" fill="#666"/><rect x="583.6" y="475.4" width="2.2" height=".6" fill="#666"/><rect x="580.9" y="478.6" width="5" height=".7" fill="#7a7a7a"/><rect x="583.6" y="480.27" width="2.2" height=".6" fill="#666"/><rect x="583.6" y="481.93" width="2.2" height=".6" fill="#666"/><rect x="580.9" y="483.6" width="5" height=".7" fill="#7a7a7a"/><rect x="583.6" y="484.57" width="2.2" height=".6" fill="#666"/><rect x="583.6" y="485.53" width="2.2" height=".6" fill="#666"/><rect x="580.9" y="486.5" width="5" height=".7" fill="#7a7a7a"/><rect x="583.6" y="488.33" width="2.2" height=".6" fill="#666"/><rect x="583.6" y="490.17" width="2.2" height=".6" fill="#666"/><rect x="580.9" y="492" width="5" height=".7" fill="#7a7a7a"/><rect x="580.7" y="410" width="5.5" height="1.2" fill="#e0e0e0"/><rect x="587.05" y="381" width="1.1" height="112.5" fill="#1c1c1c"/><rect x="598.7" y="381.6" width="1.2" height=".7" fill="#6a6a6a"/><text x="598.5" y="382.9" font-size="3.7" fill="#9a9a9a" text-anchor="end" font-family="Liberation Sans">0</text><rect x="598.7" y="389.55" width="1.2" height=".7" fill="#6a6a6a"/><text x="598.5" y="390.85" font-size="3.7" fill="#9a9a9a" text-anchor="end" font-family="Liberation Sans">3</text><rect x="598.7" y="397.5" width="1.2" height=".7" fill="#6a6a6a"/><text x="598.5" y="398.8" font-size="3.7" fill="#9a9a9a" text-anchor="end" font-family="Liberation Sans">6</text><rect x="598.7" y="405.45" width="1.2" height=".7" fill="#6a6a6a"/><text x="598.5" y="406.75" font-size="3.7" fill="#9a9a9a" text-anchor="end" font-family="Liberation Sans">9</text><rect x="598.7" y="413.4" width="1.2" height=".7" fill="#6a6a6a"/><text x="598.5" y="414.7" font-size="3.7" fill="#9a9a9a" text-anchor="end" font-family="Liberation Sans">12</text><rect x="598.7" y="421.35" width="1.2" height=".7" fill="#6a6a6a"/><text x="598.5" y="422.65" font-size="3.7" fill="#9a9a9a" text-anchor="end" font-family="Liberation Sans">15</text><rect x="598.7" y="429.3" width="1.2" height=".7" fill="#6a6a6a"/><text x="598.5" y="430.6" font-size="3.7" fill="#9a9a9a" text-anchor="end" font-family="Liberation Sans">18</text><rect x="598.7" y="437.25" width="1.2" height=".7" fill="#6a6a6a"/><text x="598.5" y="438.55" font-size="3.7" fill="#9a9a9a" text-anchor="end" font-family="Liberation Sans">21</text><rect x="598.7" y="445.2" width="1.2" height=".7" fill="#6a6a6a"/><text x="598.5" y="446.5" font-size="3.7" fill="#9a9a9a" text-anchor="end" font-family="Liberation Sans">24</text><rect x="598.7" y="453.15" width="1.2" height=".7" fill="#6a6a6a"/><text x="598.5" y="454.45" font-size="3.7" fill="#9a9a9a" text-anchor="end" font-family="Liberation Sans">30</text><rect x="598.7" y="461.1" width="1.2" height=".7" fill="#6a6a6a"/><text x="598.5" y="462.4" font-size="3.7" fill="#9a9a9a" text-anchor="end" font-family="Liberation Sans">35</text><rect x="598.7" y="469.05" width="1.2" height=".7" fill="#6a6a6a"/><text x="598.5" y="470.35" font-size="3.7" fill="#9a9a9a" text-anchor="end" font-family="Liberation Sans">40</text><rect x="598.7" y="477" width="1.2" height=".7" fill="#6a6a6a"/><text x="598.5" y="478.3" font-size="3.7" fill="#9a9a9a" text-anchor="end" font-family="Liberation Sans">45</text><rect x="598.7" y="484.95" width="1.2" height=".7" fill="#6a6a6a"/><text x="598.5" y="486.25" font-size="3.7" fill="#9a9a9a" text-anchor="end" font-family="Liberation Sans">50</text><rect x="598.7" y="492.9" width="1.2" height=".7" fill="#6a6a6a"/><text x="598.5" y="494.2" font-size="3.7" fill="#9a9a9a" text-anchor="end" font-family="Liberation Sans">60</text><rect x="600.9" y="381" width="5.4" height="112.5" fill="#2a2a2a"/></svg>
<div class="a" style="left:582.9px;top:416px;width:8.4px;height:17px;background:linear-gradient(180deg,#d8d8d8 0%,#cfcfcf 17%,#a4a4a4 20%,#9c9c9c 48%,#5e5e5e 50%,#cbcbcb 54%,#c4c4c4 86%,#7c7c7c 90%,#6a6a6a 100%);border-radius:1px;box-shadow:0 1px 1px rgba(0,0,0,.45);"></div>
<div class="a" style="left:597.3px;top:496.7px;width:6.7px;height:5.9px;background:#535353;border-radius:1.5px;"></div>
<div class="a" style="left:605.2px;top:496.7px;width:5.5px;height:5.9px;background:#535353;border-radius:1.5px;"></div>
<div class="a" style="left:597.3px;top:496.7px;width:6.7px;height:5.9px;font-size:5.4px;color:#c4c4c4;font-weight:normal;text-align:center;line-height:5.9px;white-space:nowrap;">R</div>
<div class="a" style="left:605.2px;top:496.7px;width:5.5px;height:5.9px;font-size:5.4px;color:#c4c4c4;font-weight:normal;text-align:center;line-height:5.9px;white-space:nowrap;">I</div>
<div class="a" style="left:580.1px;top:505.7px;width:13.7px;height:7.1px;background:#585858;border-radius:1.5px;"></div>
<div class="a" style="left:580.1px;top:505.7px;width:13.7px;height:7.1px;font-size:6px;color:#e4e4e4;font-weight:normal;text-align:center;line-height:7.1px;white-space:nowrap;-webkit-text-stroke:.15px #e4e4e4;">M</div>
<div class="a" style="left:597px;top:505.7px;width:14.1px;height:7.1px;background:#585858;border-radius:1.5px;"></div>
<div class="a" style="left:597px;top:505.7px;width:14.1px;height:7.1px;font-size:6px;color:#e4e4e4;font-weight:normal;text-align:center;line-height:7.1px;white-space:nowrap;-webkit-text-stroke:.15px #e4e4e4;">S</div>
<div class="a" style="left:577.3px;top:523.2px;width:37.35px;height:21.8px;background:#2e70da;"></div>
<div class="a" style="left:577px;top:523.2px;width:0.6px;height:21.8px;background:rgba(0,0,0,.18);"></div>
<div class="a" style="left:577.3px;top:524.6px;width:37.35px;height:7.2px;font-size:5.5px;color:#ffffff;font-weight:normal;text-align:center;line-height:7.2px;white-space:nowrap;letter-spacing:0px;-webkit-text-stroke-width:0;">Sample</div>
<div class="a" style="left:577.3px;top:531px;width:37.35px;height:7.2px;font-size:5.5px;color:#ffffff;font-weight:normal;text-align:center;line-height:7.2px;white-space:nowrap;letter-spacing:0px;-webkit-text-stroke-width:0;"></div>
<div class="a" style="left:614.05px;top:249px;width:1.2px;height:266.3px;background:#3d3d3d;"></div>
<div class="a" style="left:617.65px;top:255px;width:31px;height:6.6px;background:#2d8c3a;border-radius:2px;"></div>
<div class="a" style="left:617.65px;top:255px;width:31px;height:6.6px;font-size:5.5px;color:#e8f5e8;font-weight:normal;text-align:center;line-height:6.6px;white-space:nowrap;letter-spacing:0px;">Alchemy</div>
<div class="a" style="left:617.45px;top:266px;width:31.4px;height:44px;background:#454545;border-radius:1px;"></div>
<div class="a" style="left:617.45px;top:266.7px;width:31.4px;height:7.1px;background:#1f5fc2;border-radius:2.5px;"></div>
<div class="a" style="left:617.45px;top:266.7px;width:31.4px;height:6.9px;font-size:5.5px;color:#eef2ff;font-weight:normal;text-align:center;line-height:6.9px;white-space:nowrap;letter-spacing:0px;overflow:hidden;-webkit-text-stroke-width:.05px;">Cnsl EQ</div>
<div class="a" style="left:617.45px;top:274.8px;width:31.4px;height:7.1px;background:#1f5fc2;border-radius:2.5px;"></div>
<div class="a" style="left:617.45px;top:274.8px;width:31.4px;height:6.9px;font-size:5.5px;color:#eef2ff;font-weight:normal;text-align:center;line-height:6.9px;white-space:nowrap;letter-spacing:0px;overflow:hidden;-webkit-text-stroke-width:.05px;">Beat Break</div>
<div class="a" style="left:617.45px;top:321.4px;width:31.4px;height:6.6px;background:#555555;border-radius:1.5px;"></div>
<div class="a" style="left:617.45px;top:321.4px;width:31.4px;height:6.6px;font-size:6px;color:#d8d8d8;font-weight:normal;text-align:center;line-height:6.6px;white-space:nowrap;letter-spacing:-.05px;">Object</div>
<div class="a" style="left:617.45px;top:331.6px;width:31.4px;height:7.5px;background:#272727;border-radius:1px;"></div>
<div class="a" style="left:617.45px;top:331.6px;width:31.4px;height:7.5px;font-size:5.4px;color:#e2bf45;font-weight:normal;text-align:center;line-height:7.5px;white-space:nowrap;letter-spacing:-.2px;overflow:hidden;">2: Keyboards</div>
<svg class="a" style="left:614.65px;top:340px" width="37" height="22" viewBox="614.65 340 37 22"><rect x="623.15" y="343.7" width="15" height="15" fill="#3a3a3a" stroke="#242424" stroke-width=".8"/><line x1="626.9" y1="343.7" x2="626.9" y2="358.7" stroke="#333" stroke-width=".5"/><line x1="623.15" y1="347.45" x2="638.15" y2="347.45" stroke="#333" stroke-width=".5"/><line x1="630.65" y1="343.7" x2="630.65" y2="358.7" stroke="#333" stroke-width=".5"/><line x1="623.15" y1="351.2" x2="638.15" y2="351.2" stroke="#333" stroke-width=".5"/><line x1="634.4" y1="343.7" x2="634.4" y2="358.7" stroke="#333" stroke-width=".5"/><line x1="623.15" y1="354.95" x2="638.15" y2="354.95" stroke="#333" stroke-width=".5"/><path d="M623.15 358.7L630.65 350.2L638.15 358.7Z" fill="#3f6f45"/><circle cx="630.65" cy="356.7" r="1.1" fill="#3ddc5c"/><line x1="644.65" y1="343.3" x2="644.65" y2="359.7" stroke="#1e1e1e" stroke-width="1"/><circle cx="644.65" cy="350.5" r="1.4" fill="#3ddc5c"/></svg>
<div class="a" style="left:617.45px;top:362.9px;width:15.1px;height:8.2px;background:#262626;border-radius:1px;"></div>
<div class="a" style="left:617.45px;top:362.9px;width:15.1px;height:8.2px;font-size:5.6px;color:#e6e6e6;font-weight:normal;text-align:center;line-height:8.2px;white-space:nowrap;letter-spacing:0px;">-1.7</div>
<div class="a" style="left:633.65px;top:362.9px;width:15.2px;height:8.2px;background:#262626;border-radius:1px;"></div>
<div class="a" style="left:633.65px;top:362.9px;width:15.2px;height:8.2px;font-size:5.6px;color:#4ee06a;font-weight:normal;text-align:center;line-height:8.2px;white-space:nowrap;letter-spacing:0px;">-8.2</div>
<svg class="a" style="left:614.65px;top:376px" width="37" height="122" viewBox="614.65 376 37 122"><rect x="618.25" y="382" width="5" height=".7" fill="#7a7a7a"/><rect x="620.95" y="386.67" width="2.2" height=".6" fill="#666"/><rect x="620.95" y="391.33" width="2.2" height=".6" fill="#666"/><rect x="618.25" y="396" width="5" height=".7" fill="#7a7a7a"/><rect x="620.95" y="400.8" width="2.2" height=".6" fill="#666"/><rect x="620.95" y="405.6" width="2.2" height=".6" fill="#666"/><rect x="618.25" y="410.4" width="5" height=".7" fill="#7a7a7a"/><rect x="620.95" y="415.07" width="2.2" height=".6" fill="#666"/><rect x="620.95" y="419.73" width="2.2" height=".6" fill="#666"/><rect x="618.25" y="424.4" width="5" height=".7" fill="#7a7a7a"/><rect x="620.95" y="429.27" width="2.2" height=".6" fill="#666"/><rect x="620.95" y="434.13" width="2.2" height=".6" fill="#666"/><rect x="618.25" y="439" width="5" height=".7" fill="#7a7a7a"/><rect x="620.95" y="442" width="2.2" height=".6" fill="#666"/><rect x="620.95" y="445" width="2.2" height=".6" fill="#666"/><rect x="618.25" y="448" width="5" height=".7" fill="#7a7a7a"/><rect x="620.95" y="452" width="2.2" height=".6" fill="#666"/><rect x="620.95" y="456" width="2.2" height=".6" fill="#666"/><rect x="618.25" y="460" width="5" height=".7" fill="#7a7a7a"/><rect x="620.95" y="463" width="2.2" height=".6" fill="#666"/><rect x="620.95" y="466" width="2.2" height=".6" fill="#666"/><rect x="618.25" y="469" width="5" height=".7" fill="#7a7a7a"/><rect x="620.95" y="472.2" width="2.2" height=".6" fill="#666"/><rect x="620.95" y="475.4" width="2.2" height=".6" fill="#666"/><rect x="618.25" y="478.6" width="5" height=".7" fill="#7a7a7a"/><rect x="620.95" y="480.27" width="2.2" height=".6" fill="#666"/><rect x="620.95" y="481.93" width="2.2" height=".6" fill="#666"/><rect x="618.25" y="483.6" width="5" height=".7" fill="#7a7a7a"/><rect x="620.95" y="484.57" width="2.2" height=".6" fill="#666"/><rect x="620.95" y="485.53" width="2.2" height=".6" fill="#666"/><rect x="618.25" y="486.5" width="5" height=".7" fill="#7a7a7a"/><rect x="620.95" y="488.33" width="2.2" height=".6" fill="#666"/><rect x="620.95" y="490.17" width="2.2" height=".6" fill="#666"/><rect x="618.25" y="492" width="5" height=".7" fill="#7a7a7a"/><rect x="618.05" y="410" width="5.5" height="1.2" fill="#e0e0e0"/><rect x="624.4" y="381" width="1.1" height="112.5" fill="#1c1c1c"/><rect x="636.05" y="381.6" width="1.2" height=".7" fill="#6a6a6a"/><text x="635.85" y="382.9" font-size="3.7" fill="#9a9a9a" text-anchor="end" font-family="Liberation Sans">0</text><rect x="636.05" y="389.55" width="1.2" height=".7" fill="#6a6a6a"/><text x="635.85" y="390.85" font-size="3.7" fill="#9a9a9a" text-anchor="end" font-family="Liberation Sans">3</text><rect x="636.05" y="397.5" width="1.2" height=".7" fill="#6a6a6a"/><text x="635.85" y="398.8" font-size="3.7" fill="#9a9a9a" text-anchor="end" font-family="Liberation Sans">6</text><rect x="636.05" y="405.45" width="1.2" height=".7" fill="#6a6a6a"/><text x="635.85" y="406.75" font-size="3.7" fill="#9a9a9a" text-anchor="end" font-family="Liberation Sans">9</text><rect x="636.05" y="413.4" width="1.2" height=".7" fill="#6a6a6a"/><text x="635.85" y="414.7" font-size="3.7" fill="#9a9a9a" text-anchor="end" font-family="Liberation Sans">12</text><rect x="636.05" y="421.35" width="1.2" height=".7" fill="#6a6a6a"/><text x="635.85" y="422.65" font-size="3.7" fill="#9a9a9a" text-anchor="end" font-family="Liberation Sans">15</text><rect x="636.05" y="429.3" width="1.2" height=".7" fill="#6a6a6a"/><text x="635.85" y="430.6" font-size="3.7" fill="#9a9a9a" text-anchor="end" font-family="Liberation Sans">18</text><rect x="636.05" y="437.25" width="1.2" height=".7" fill="#6a6a6a"/><text x="635.85" y="438.55" font-size="3.7" fill="#9a9a9a" text-anchor="end" font-family="Liberation Sans">21</text><rect x="636.05" y="445.2" width="1.2" height=".7" fill="#6a6a6a"/><text x="635.85" y="446.5" font-size="3.7" fill="#9a9a9a" text-anchor="end" font-family="Liberation Sans">24</text><rect x="636.05" y="453.15" width="1.2" height=".7" fill="#6a6a6a"/><text x="635.85" y="454.45" font-size="3.7" fill="#9a9a9a" text-anchor="end" font-family="Liberation Sans">30</text><rect x="636.05" y="461.1" width="1.2" height=".7" fill="#6a6a6a"/><text x="635.85" y="462.4" font-size="3.7" fill="#9a9a9a" text-anchor="end" font-family="Liberation Sans">35</text><rect x="636.05" y="469.05" width="1.2" height=".7" fill="#6a6a6a"/><text x="635.85" y="470.35" font-size="3.7" fill="#9a9a9a" text-anchor="end" font-family="Liberation Sans">40</text><rect x="636.05" y="477" width="1.2" height=".7" fill="#6a6a6a"/><text x="635.85" y="478.3" font-size="3.7" fill="#9a9a9a" text-anchor="end" font-family="Liberation Sans">45</text><rect x="636.05" y="484.95" width="1.2" height=".7" fill="#6a6a6a"/><text x="635.85" y="486.25" font-size="3.7" fill="#9a9a9a" text-anchor="end" font-family="Liberation Sans">50</text><rect x="636.05" y="492.9" width="1.2" height=".7" fill="#6a6a6a"/><text x="635.85" y="494.2" font-size="3.7" fill="#9a9a9a" text-anchor="end" font-family="Liberation Sans">60</text><rect x="638.25" y="381" width="5.4" height="112.5" fill="#2a2a2a"/><rect x="638.75" y="439" width="1.9" height="54.5" fill="#3dd35c"/><rect x="641.25" y="423.7" width="1.9" height="69.8" fill="#3dd35c"/></svg>
<div class="a" style="left:620.25px;top:410.6px;width:8.4px;height:16.4px;background:linear-gradient(180deg,#d8d8d8 0%,#cfcfcf 17%,#a4a4a4 20%,#9c9c9c 48%,#5e5e5e 50%,#cbcbcb 54%,#c4c4c4 86%,#7c7c7c 90%,#6a6a6a 100%);border-radius:1px;box-shadow:0 1px 1px rgba(0,0,0,.45);"></div>
<div class="a" style="left:617.45px;top:505.7px;width:13.7px;height:7.1px;background:#585858;border-radius:1.5px;"></div>
<div class="a" style="left:617.45px;top:505.7px;width:13.7px;height:7.1px;font-size:6px;color:#e4e4e4;font-weight:normal;text-align:center;line-height:7.1px;white-space:nowrap;-webkit-text-stroke:.15px #e4e4e4;">M</div>
<div class="a" style="left:634.35px;top:505.7px;width:14.1px;height:7.1px;background:#585858;border-radius:1.5px;"></div>
<div class="a" style="left:634.35px;top:505.7px;width:14.1px;height:7.1px;font-size:6px;color:#e4e4e4;font-weight:normal;text-align:center;line-height:7.1px;white-space:nowrap;-webkit-text-stroke:.15px #e4e4e4;">S</div>
<div class="a" style="left:614.65px;top:523.2px;width:37.35px;height:21.8px;background:#3559da;"></div>
<div class="a" style="left:614.35px;top:523.2px;width:0.6px;height:21.8px;background:rgba(0,0,0,.18);"></div>
<div class="a" style="left:614.65px;top:524.6px;width:37.35px;height:7.2px;font-size:5.5px;color:#ffffff;font-weight:normal;text-align:center;line-height:7.2px;white-space:nowrap;letter-spacing:0px;-webkit-text-stroke-width:0;">Dark Synth</div>
<div class="a" style="left:614.65px;top:531px;width:37.35px;height:7.2px;font-size:5.5px;color:#ffffff;font-weight:normal;text-align:center;line-height:7.2px;white-space:nowrap;letter-spacing:0px;-webkit-text-stroke-width:0;">Pad</div>
<div class="a" style="left:651.4px;top:249px;width:1.2px;height:266.3px;background:#3d3d3d;"></div>
<div class="a" style="left:655px;top:255px;width:31px;height:6.6px;background:#2d8c3a;border-radius:2px;"></div>
<div class="a" style="left:655px;top:255px;width:31px;height:6.6px;font-size:5.5px;color:#e8f5e8;font-weight:normal;text-align:center;line-height:6.6px;white-space:nowrap;letter-spacing:0px;">Sampler</div>
<div class="a" style="left:654.8px;top:266px;width:31.4px;height:44px;background:#454545;border-radius:1px;"></div>
<div class="a" style="left:654.8px;top:266.7px;width:31.4px;height:7.1px;background:#1f5fc2;border-radius:2.5px;"></div>
<div class="a" style="left:654.8px;top:266.7px;width:31.4px;height:6.9px;font-size:5.5px;color:#eef2ff;font-weight:normal;text-align:center;line-height:6.9px;white-space:nowrap;letter-spacing:0px;overflow:hidden;-webkit-text-stroke-width:.05px;">Cnsl EQ</div>
<div class="a" style="left:654.8px;top:274.8px;width:31.4px;height:7.1px;background:#1f5fc2;border-radius:2.5px;"></div>
<div class="a" style="left:654.8px;top:274.8px;width:31.4px;height:6.9px;font-size:5.5px;color:#eef2ff;font-weight:normal;text-align:center;line-height:6.9px;white-space:nowrap;letter-spacing:0px;overflow:hidden;-webkit-text-stroke-width:.05px;">Compressor</div>
<div class="a" style="left:654.8px;top:282.9px;width:31.4px;height:7.1px;background:#1f5fc2;border-radius:2.5px;"></div>
<div class="a" style="left:654.8px;top:282.9px;width:31.4px;height:6.9px;font-size:5.5px;color:#eef2ff;font-weight:normal;text-align:center;line-height:6.9px;white-space:nowrap;letter-spacing:0px;overflow:hidden;-webkit-text-stroke-width:.05px;">Bitcrusher</div>
<div class="a" style="left:654.8px;top:321.4px;width:31.4px;height:6.6px;background:#555555;border-radius:1.5px;"></div>
<div class="a" style="left:654.8px;top:321.4px;width:31.4px;height:6.6px;font-size:6px;color:#d8d8d8;font-weight:normal;text-align:center;line-height:6.6px;white-space:nowrap;letter-spacing:-.05px;">Object</div>
<div class="a" style="left:654.8px;top:331.6px;width:31.4px;height:7.5px;background:#272727;border-radius:1px;"></div>
<div class="a" style="left:654.8px;top:331.6px;width:31.4px;height:7.5px;font-size:5.4px;color:#e2bf45;font-weight:normal;text-align:center;line-height:7.5px;white-space:nowrap;letter-spacing:-.2px;overflow:hidden;">2: Keyboards</div>
<svg class="a" style="left:652px;top:340px" width="37" height="22" viewBox="652 340 37 22"><rect x="660.5" y="343.7" width="15" height="15" fill="#3a3a3a" stroke="#242424" stroke-width=".8"/><line x1="664.25" y1="343.7" x2="664.25" y2="358.7" stroke="#333" stroke-width=".5"/><line x1="660.5" y1="347.45" x2="675.5" y2="347.45" stroke="#333" stroke-width=".5"/><line x1="668" y1="343.7" x2="668" y2="358.7" stroke="#333" stroke-width=".5"/><line x1="660.5" y1="351.2" x2="675.5" y2="351.2" stroke="#333" stroke-width=".5"/><line x1="671.75" y1="343.7" x2="671.75" y2="358.7" stroke="#333" stroke-width=".5"/><line x1="660.5" y1="354.95" x2="675.5" y2="354.95" stroke="#333" stroke-width=".5"/><path d="M660.5 343.7h15L668 351.2Z" fill="#3f6f45"/><circle cx="668" cy="345" r="1.1" fill="#3ddc5c"/><line x1="682" y1="343.3" x2="682" y2="359.7" stroke="#1e1e1e" stroke-width="1"/><circle cx="682" cy="350.5" r="1.4" fill="#3ddc5c"/></svg>
<div class="a" style="left:654.8px;top:362.9px;width:15.1px;height:8.2px;background:#262626;border-radius:1px;"></div>
<div class="a" style="left:654.8px;top:362.9px;width:15.1px;height:8.2px;font-size:5.6px;color:#e6e6e6;font-weight:normal;text-align:center;line-height:8.2px;white-space:nowrap;letter-spacing:0px;">-12.4</div>
<div class="a" style="left:671px;top:362.9px;width:15.2px;height:8.2px;background:#262626;border-radius:1px;"></div>
<div class="a" style="left:671px;top:362.9px;width:15.2px;height:8.2px;font-size:5.6px;color:#4ee06a;font-weight:normal;text-align:center;line-height:8.2px;white-space:nowrap;letter-spacing:0px;">-20.0</div>
<svg class="a" style="left:652px;top:376px" width="37" height="122" viewBox="652 376 37 122"><rect x="655.6" y="382" width="5" height=".7" fill="#7a7a7a"/><rect x="658.3" y="386.67" width="2.2" height=".6" fill="#666"/><rect x="658.3" y="391.33" width="2.2" height=".6" fill="#666"/><rect x="655.6" y="396" width="5" height=".7" fill="#7a7a7a"/><rect x="658.3" y="400.8" width="2.2" height=".6" fill="#666"/><rect x="658.3" y="405.6" width="2.2" height=".6" fill="#666"/><rect x="655.6" y="410.4" width="5" height=".7" fill="#7a7a7a"/><rect x="658.3" y="415.07" width="2.2" height=".6" fill="#666"/><rect x="658.3" y="419.73" width="2.2" height=".6" fill="#666"/><rect x="655.6" y="424.4" width="5" height=".7" fill="#7a7a7a"/><rect x="658.3" y="429.27" width="2.2" height=".6" fill="#666"/><rect x="658.3" y="434.13" width="2.2" height=".6" fill="#666"/><rect x="655.6" y="439" width="5" height=".7" fill="#7a7a7a"/><rect x="658.3" y="442" width="2.2" height=".6" fill="#666"/><rect x="658.3" y="445" width="2.2" height=".6" fill="#666"/><rect x="655.6" y="448" width="5" height=".7" fill="#7a7a7a"/><rect x="658.3" y="452" width="2.2" height=".6" fill="#666"/><rect x="658.3" y="456" width="2.2" height=".6" fill="#666"/><rect x="655.6" y="460" width="5" height=".7" fill="#7a7a7a"/><rect x="658.3" y="463" width="2.2" height=".6" fill="#666"/><rect x="658.3" y="466" width="2.2" height=".6" fill="#666"/><rect x="655.6" y="469" width="5" height=".7" fill="#7a7a7a"/><rect x="658.3" y="472.2" width="2.2" height=".6" fill="#666"/><rect x="658.3" y="475.4" width="2.2" height=".6" fill="#666"/><rect x="655.6" y="478.6" width="5" height=".7" fill="#7a7a7a"/><rect x="658.3" y="480.27" width="2.2" height=".6" fill="#666"/><rect x="658.3" y="481.93" width="2.2" height=".6" fill="#666"/><rect x="655.6" y="483.6" width="5" height=".7" fill="#7a7a7a"/><rect x="658.3" y="484.57" width="2.2" height=".6" fill="#666"/><rect x="658.3" y="485.53" width="2.2" height=".6" fill="#666"/><rect x="655.6" y="486.5" width="5" height=".7" fill="#7a7a7a"/><rect x="658.3" y="488.33" width="2.2" height=".6" fill="#666"/><rect x="658.3" y="490.17" width="2.2" height=".6" fill="#666"/><rect x="655.6" y="492" width="5" height=".7" fill="#7a7a7a"/><rect x="655.4" y="410" width="5.5" height="1.2" fill="#e0e0e0"/><rect x="661.75" y="381" width="1.1" height="112.5" fill="#1c1c1c"/><rect x="673.4" y="381.6" width="1.2" height=".7" fill="#6a6a6a"/><text x="673.2" y="382.9" font-size="3.7" fill="#9a9a9a" text-anchor="end" font-family="Liberation Sans">0</text><rect x="673.4" y="389.55" width="1.2" height=".7" fill="#6a6a6a"/><text x="673.2" y="390.85" font-size="3.7" fill="#9a9a9a" text-anchor="end" font-family="Liberation Sans">3</text><rect x="673.4" y="397.5" width="1.2" height=".7" fill="#6a6a6a"/><text x="673.2" y="398.8" font-size="3.7" fill="#9a9a9a" text-anchor="end" font-family="Liberation Sans">6</text><rect x="673.4" y="405.45" width="1.2" height=".7" fill="#6a6a6a"/><text x="673.2" y="406.75" font-size="3.7" fill="#9a9a9a" text-anchor="end" font-family="Liberation Sans">9</text><rect x="673.4" y="413.4" width="1.2" height=".7" fill="#6a6a6a"/><text x="673.2" y="414.7" font-size="3.7" fill="#9a9a9a" text-anchor="end" font-family="Liberation Sans">12</text><rect x="673.4" y="421.35" width="1.2" height=".7" fill="#6a6a6a"/><text x="673.2" y="422.65" font-size="3.7" fill="#9a9a9a" text-anchor="end" font-family="Liberation Sans">15</text><rect x="673.4" y="429.3" width="1.2" height=".7" fill="#6a6a6a"/><text x="673.2" y="430.6" font-size="3.7" fill="#9a9a9a" text-anchor="end" font-family="Liberation Sans">18</text><rect x="673.4" y="437.25" width="1.2" height=".7" fill="#6a6a6a"/><text x="673.2" y="438.55" font-size="3.7" fill="#9a9a9a" text-anchor="end" font-family="Liberation Sans">21</text><rect x="673.4" y="445.2" width="1.2" height=".7" fill="#6a6a6a"/><text x="673.2" y="446.5" font-size="3.7" fill="#9a9a9a" text-anchor="end" font-family="Liberation Sans">24</text><rect x="673.4" y="453.15" width="1.2" height=".7" fill="#6a6a6a"/><text x="673.2" y="454.45" font-size="3.7" fill="#9a9a9a" text-anchor="end" font-family="Liberation Sans">30</text><rect x="673.4" y="461.1" width="1.2" height=".7" fill="#6a6a6a"/><text x="673.2" y="462.4" font-size="3.7" fill="#9a9a9a" text-anchor="end" font-family="Liberation Sans">35</text><rect x="673.4" y="469.05" width="1.2" height=".7" fill="#6a6a6a"/><text x="673.2" y="470.35" font-size="3.7" fill="#9a9a9a" text-anchor="end" font-family="Liberation Sans">40</text><rect x="673.4" y="477" width="1.2" height=".7" fill="#6a6a6a"/><text x="673.2" y="478.3" font-size="3.7" fill="#9a9a9a" text-anchor="end" font-family="Liberation Sans">45</text><rect x="673.4" y="484.95" width="1.2" height=".7" fill="#6a6a6a"/><text x="673.2" y="486.25" font-size="3.7" fill="#9a9a9a" text-anchor="end" font-family="Liberation Sans">50</text><rect x="673.4" y="492.9" width="1.2" height=".7" fill="#6a6a6a"/><text x="673.2" y="494.2" font-size="3.7" fill="#9a9a9a" text-anchor="end" font-family="Liberation Sans">60</text><rect x="675.6" y="381" width="5.4" height="112.5" fill="#2a2a2a"/><rect x="676.1" y="464.3" width="1.9" height="29.2" fill="#3dd35c"/><rect x="678.6" y="466.7" width="1.9" height="26.8" fill="#3dd35c"/></svg>
<div class="a" style="left:657.6px;top:446.2px;width:8.4px;height:16.2px;background:linear-gradient(180deg,#d8d8d8 0%,#cfcfcf 17%,#a4a4a4 20%,#9c9c9c 48%,#5e5e5e 50%,#cbcbcb 54%,#c4c4c4 86%,#7c7c7c 90%,#6a6a6a 100%);border-radius:1px;box-shadow:0 1px 1px rgba(0,0,0,.45);"></div>
<div class="a" style="left:654.8px;top:505.7px;width:13.7px;height:7.1px;background:#585858;border-radius:1.5px;"></div>
<div class="a" style="left:654.8px;top:505.7px;width:13.7px;height:7.1px;font-size:6px;color:#e4e4e4;font-weight:normal;text-align:center;line-height:7.1px;white-space:nowrap;-webkit-text-stroke:.15px #e4e4e4;">M</div>
<div class="a" style="left:671.7px;top:505.7px;width:14.1px;height:7.1px;background:#585858;border-radius:1.5px;"></div>
<div class="a" style="left:671.7px;top:505.7px;width:14.1px;height:7.1px;font-size:6px;color:#e4e4e4;font-weight:normal;text-align:center;line-height:7.1px;white-space:nowrap;-webkit-text-stroke:.15px #e4e4e4;">S</div>
<div class="a" style="left:652px;top:523.2px;width:37.35px;height:21.8px;background:#3a3fdd;"></div>
<div class="a" style="left:651.7px;top:523.2px;width:0.6px;height:21.8px;background:rgba(0,0,0,.18);"></div>
<div class="a" style="left:652px;top:524.6px;width:37.35px;height:7.2px;font-size:5.5px;color:#ffffff;font-weight:normal;text-align:center;line-height:7.2px;white-space:nowrap;letter-spacing:0px;-webkit-text-stroke-width:0;">Custom Soft</div>
<div class="a" style="left:652px;top:531px;width:37.35px;height:7.2px;font-size:5.5px;color:#ffffff;font-weight:normal;text-align:center;line-height:7.2px;white-space:nowrap;letter-spacing:0px;-webkit-text-stroke-width:0;">Piano</div>
<div class="a" style="left:688.75px;top:249px;width:1.2px;height:266.3px;background:#3d3d3d;"></div>
<div class="a" style="left:692.35px;top:255px;width:31px;height:6.6px;background:#2d8c3a;border-radius:2px;"></div>
<div class="a" style="left:692.35px;top:255px;width:31px;height:6.6px;font-size:5.5px;color:#e8f5e8;font-weight:normal;text-align:center;line-height:6.6px;white-space:nowrap;letter-spacing:0px;">RetroSyn</div>
<div class="a" style="left:692.15px;top:266px;width:31.4px;height:44px;background:#454545;border-radius:1px;"></div>
<div class="a" style="left:692.15px;top:266.7px;width:31.4px;height:7.1px;background:#1f5fc2;border-radius:2.5px;"></div>
<div class="a" style="left:692.15px;top:266.7px;width:31.4px;height:6.9px;font-size:5.5px;color:#eef2ff;font-weight:normal;text-align:center;line-height:6.9px;white-space:nowrap;letter-spacing:0px;overflow:hidden;-webkit-text-stroke-width:.05px;">Cnsl EQ</div>
<div class="a" style="left:692.15px;top:274.8px;width:31.4px;height:7.1px;background:#1f5fc2;border-radius:2.5px;"></div>
<div class="a" style="left:692.15px;top:274.8px;width:31.4px;height:6.9px;font-size:5.5px;color:#eef2ff;font-weight:normal;text-align:center;line-height:6.9px;white-space:nowrap;letter-spacing:0px;overflow:hidden;-webkit-text-stroke-width:.05px;">ChromaVerb</div>
<div class="a" style="left:692.15px;top:321.4px;width:31.4px;height:6.6px;background:#555555;border-radius:1.5px;"></div>
<div class="a" style="left:692.15px;top:321.4px;width:31.4px;height:6.6px;font-size:6px;color:#d8d8d8;font-weight:normal;text-align:center;line-height:6.6px;white-space:nowrap;letter-spacing:-.05px;">Bus 7</div>
<div class="a" style="left:692.15px;top:331.6px;width:31.4px;height:7.5px;background:#272727;border-radius:1px;"></div>
<div class="a" style="left:692.15px;top:331.6px;width:31.4px;height:7.5px;font-size:5.4px;color:#e2bf45;font-weight:normal;text-align:center;line-height:7.5px;white-space:nowrap;letter-spacing:-.2px;overflow:hidden;">2: Keyboards</div>
<svg class="a" style="left:689.35px;top:340px" width="37" height="22" viewBox="689.35 340 37 22"><circle cx="698" cy="358.55" r=".55" fill="#8c8c8c"/><circle cx="695.3" cy="353.89" r=".55" fill="#8c8c8c"/><circle cx="695.3" cy="348.51" r=".55" fill="#8c8c8c"/><circle cx="698" cy="343.85" r=".55" fill="#8c8c8c"/><circle cx="702.66" cy="341.15" r=".55" fill="#8c8c8c"/><circle cx="708.04" cy="341.15" r=".55" fill="#8c8c8c"/><circle cx="712.7" cy="343.85" r=".55" fill="#8c8c8c"/><circle cx="715.4" cy="348.51" r=".55" fill="#8c8c8c"/><circle cx="715.4" cy="353.89" r=".55" fill="#8c8c8c"/><circle cx="705.35" cy="351.2" r="8.3" fill="#272727"/><circle cx="705.35" cy="351.2" r="8.3" fill="none" stroke="#202020" stroke-width=".6"/><path d="M700.85 345.2L709.85 345.2L705.35 352.2Z" fill="#2f6e3d"/><circle cx="705.35" cy="345.2" r="1.1" fill="#3ddc5c"/><line x1="719.35" y1="343.3" x2="719.35" y2="359.7" stroke="#1e1e1e" stroke-width="1"/><circle cx="719.35" cy="358.6" r="1.4" fill="#3ddc5c"/></svg>
<div class="a" style="left:692.15px;top:362.9px;width:15.1px;height:8.2px;background:#262626;border-radius:1px;"></div>
<div class="a" style="left:692.15px;top:362.9px;width:15.1px;height:8.2px;font-size:5.6px;color:#e6e6e6;font-weight:normal;text-align:center;line-height:8.2px;white-space:nowrap;letter-spacing:0px;">-3.6</div>
<div class="a" style="left:708.35px;top:362.9px;width:15.2px;height:8.2px;background:#262626;border-radius:1px;"></div>
<div class="a" style="left:708.35px;top:362.9px;width:15.2px;height:8.2px;font-size:5.6px;color:#4ee06a;font-weight:normal;text-align:center;line-height:8.2px;white-space:nowrap;letter-spacing:0px;">-17.9</div>
<svg class="a" style="left:689.35px;top:376px" width="37" height="122" viewBox="689.35 376 37 122"><rect x="692.95" y="382" width="5" height=".7" fill="#7a7a7a"/><rect x="695.65" y="386.67" width="2.2" height=".6" fill="#666"/><rect x="695.65" y="391.33" width="2.2" height=".6" fill="#666"/><rect x="692.95" y="396" width="5" height=".7" fill="#7a7a7a"/><rect x="695.65" y="400.8" width="2.2" height=".6" fill="#666"/><rect x="695.65" y="405.6" width="2.2" height=".6" fill="#666"/><rect x="692.95" y="410.4" width="5" height=".7" fill="#7a7a7a"/><rect x="695.65" y="415.07" width="2.2" height=".6" fill="#666"/><rect x="695.65" y="419.73" width="2.2" height=".6" fill="#666"/><rect x="692.95" y="424.4" width="5" height=".7" fill="#7a7a7a"/><rect x="695.65" y="429.27" width="2.2" height=".6" fill="#666"/><rect x="695.65" y="434.13" width="2.2" height=".6" fill="#666"/><rect x="692.95" y="439" width="5" height=".7" fill="#7a7a7a"/><rect x="695.65" y="442" width="2.2" height=".6" fill="#666"/><rect x="695.65" y="445" width="2.2" height=".6" fill="#666"/><rect x="692.95" y="448" width="5" height=".7" fill="#7a7a7a"/><rect x="695.65" y="452" width="2.2" height=".6" fill="#666"/><rect x="695.65" y="456" width="2.2" height=".6" fill="#666"/><rect x="692.95" y="460" width="5" height=".7" fill="#7a7a7a"/><rect x="695.65" y="463" width="2.2" height=".6" fill="#666"/><rect x="695.65" y="466" width="2.2" height=".6" fill="#666"/><rect x="692.95" y="469" width="5" height=".7" fill="#7a7a7a"/><rect x="695.65" y="472.2" width="2.2" height=".6" fill="#666"/><rect x="695.65" y="475.4" width="2.2" height=".6" fill="#666"/><rect x="692.95" y="478.6" width="5" height=".7" fill="#7a7a7a"/><rect x="695.65" y="480.27" width="2.2" height=".6" fill="#666"/><rect x="695.65" y="481.93" width="2.2" height=".6" fill="#666"/><rect x="692.95" y="483.6" width="5" height=".7" fill="#7a7a7a"/><rect x="695.65" y="484.57" width="2.2" height=".6" fill="#666"/><rect x="695.65" y="485.53" width="2.2" height=".6" fill="#666"/><rect x="692.95" y="486.5" width="5" height=".7" fill="#7a7a7a"/><rect x="695.65" y="488.33" width="2.2" height=".6" fill="#666"/><rect x="695.65" y="490.17" width="2.2" height=".6" fill="#666"/><rect x="692.95" y="492" width="5" height=".7" fill="#7a7a7a"/><rect x="692.75" y="410" width="5.5" height="1.2" fill="#e0e0e0"/><rect x="699.1" y="381" width="1.1" height="112.5" fill="#1c1c1c"/><rect x="710.75" y="381.6" width="1.2" height=".7" fill="#6a6a6a"/><text x="710.55" y="382.9" font-size="3.7" fill="#9a9a9a" text-anchor="end" font-family="Liberation Sans">0</text><rect x="710.75" y="389.55" width="1.2" height=".7" fill="#6a6a6a"/><text x="710.55" y="390.85" font-size="3.7" fill="#9a9a9a" text-anchor="end" font-family="Liberation Sans">3</text><rect x="710.75" y="397.5" width="1.2" height=".7" fill="#6a6a6a"/><text x="710.55" y="398.8" font-size="3.7" fill="#9a9a9a" text-anchor="end" font-family="Liberation Sans">6</text><rect x="710.75" y="405.45" width="1.2" height=".7" fill="#6a6a6a"/><text x="710.55" y="406.75" font-size="3.7" fill="#9a9a9a" text-anchor="end" font-family="Liberation Sans">9</text><rect x="710.75" y="413.4" width="1.2" height=".7" fill="#6a6a6a"/><text x="710.55" y="414.7" font-size="3.7" fill="#9a9a9a" text-anchor="end" font-family="Liberation Sans">12</text><rect x="710.75" y="421.35" width="1.2" height=".7" fill="#6a6a6a"/><text x="710.55" y="422.65" font-size="3.7" fill="#9a9a9a" text-anchor="end" font-family="Liberation Sans">15</text><rect x="710.75" y="429.3" width="1.2" height=".7" fill="#6a6a6a"/><text x="710.55" y="430.6" font-size="3.7" fill="#9a9a9a" text-anchor="end" font-family="Liberation Sans">18</text><rect x="710.75" y="437.25" width="1.2" height=".7" fill="#6a6a6a"/><text x="710.55" y="438.55" font-size="3.7" fill="#9a9a9a" text-anchor="end" font-family="Liberation Sans">21</text><rect x="710.75" y="445.2" width="1.2" height=".7" fill="#6a6a6a"/><text x="710.55" y="446.5" font-size="3.7" fill="#9a9a9a" text-anchor="end" font-family="Liberation Sans">24</text><rect x="710.75" y="453.15" width="1.2" height=".7" fill="#6a6a6a"/><text x="710.55" y="454.45" font-size="3.7" fill="#9a9a9a" text-anchor="end" font-family="Liberation Sans">30</text><rect x="710.75" y="461.1" width="1.2" height=".7" fill="#6a6a6a"/><text x="710.55" y="462.4" font-size="3.7" fill="#9a9a9a" text-anchor="end" font-family="Liberation Sans">35</text><rect x="710.75" y="469.05" width="1.2" height=".7" fill="#6a6a6a"/><text x="710.55" y="470.35" font-size="3.7" fill="#9a9a9a" text-anchor="end" font-family="Liberation Sans">40</text><rect x="710.75" y="477" width="1.2" height=".7" fill="#6a6a6a"/><text x="710.55" y="478.3" font-size="3.7" fill="#9a9a9a" text-anchor="end" font-family="Liberation Sans">45</text><rect x="710.75" y="484.95" width="1.2" height=".7" fill="#6a6a6a"/><text x="710.55" y="486.25" font-size="3.7" fill="#9a9a9a" text-anchor="end" font-family="Liberation Sans">50</text><rect x="710.75" y="492.9" width="1.2" height=".7" fill="#6a6a6a"/><text x="710.55" y="494.2" font-size="3.7" fill="#9a9a9a" text-anchor="end" font-family="Liberation Sans">60</text><rect x="712.95" y="381" width="5.4" height="112.5" fill="#2a2a2a"/><rect x="713.45" y="441.4" width="1.9" height="52.1" fill="#3dd35c"/><rect x="715.95" y="441.4" width="1.9" height="52.1" fill="#3dd35c"/></svg>
<div class="a" style="left:694.95px;top:419.6px;width:8.4px;height:16.4px;background:linear-gradient(180deg,#d8d8d8 0%,#cfcfcf 17%,#a4a4a4 20%,#9c9c9c 48%,#5e5e5e 50%,#cbcbcb 54%,#c4c4c4 86%,#7c7c7c 90%,#6a6a6a 100%);border-radius:1px;box-shadow:0 1px 1px rgba(0,0,0,.45);"></div>
<div class="a" style="left:692.15px;top:505.7px;width:13.7px;height:7.1px;background:#585858;border-radius:1.5px;"></div>
<div class="a" style="left:692.15px;top:505.7px;width:13.7px;height:7.1px;font-size:6px;color:#e4e4e4;font-weight:normal;text-align:center;line-height:7.1px;white-space:nowrap;-webkit-text-stroke:.15px #e4e4e4;">M</div>
<div class="a" style="left:709.05px;top:505.7px;width:14.1px;height:7.1px;background:#585858;border-radius:1.5px;"></div>
<div class="a" style="left:709.05px;top:505.7px;width:14.1px;height:7.1px;font-size:6px;color:#e4e4e4;font-weight:normal;text-align:center;line-height:7.1px;white-space:nowrap;-webkit-text-stroke:.15px #e4e4e4;">S</div>
<div class="a" style="left:689.35px;top:523.2px;width:37.35px;height:21.8px;background:#3559da;"></div>
<div class="a" style="left:689.05px;top:523.2px;width:0.6px;height:21.8px;background:rgba(0,0,0,.18);"></div>
<div class="a" style="left:689.35px;top:524.6px;width:37.35px;height:7.2px;font-size:5.5px;color:#ffffff;font-weight:normal;text-align:center;line-height:7.2px;white-space:nowrap;letter-spacing:0px;-webkit-text-stroke-width:0;">Night of</div>
<div class="a" style="left:689.35px;top:531px;width:37.35px;height:7.2px;font-size:5.5px;color:#ffffff;font-weight:normal;text-align:center;line-height:7.2px;white-space:nowrap;letter-spacing:0px;-webkit-text-stroke-width:0;">Avalon</div>
<div class="a" style="left:726.1px;top:249px;width:1.2px;height:266.3px;background:#3d3d3d;"></div>
<div class="a" style="left:729.7px;top:255px;width:31px;height:6.6px;background:#2d8c3a;border-radius:2px;"></div>
<div class="a" style="left:729.7px;top:255px;width:31px;height:6.6px;font-size:5.5px;color:#e8f5e8;font-weight:normal;text-align:center;line-height:6.6px;white-space:nowrap;letter-spacing:0px;">Alchemy</div>
<div class="a" style="left:729.5px;top:266px;width:31.4px;height:44px;background:#454545;border-radius:1px;"></div>
<div class="a" style="left:729.5px;top:266.7px;width:31.4px;height:7.1px;background:#1f5fc2;border-radius:2.5px;"></div>
<div class="a" style="left:729.5px;top:266.7px;width:31.4px;height:6.9px;font-size:5.5px;color:#eef2ff;font-weight:normal;text-align:center;line-height:6.9px;white-space:nowrap;letter-spacing:0px;overflow:hidden;-webkit-text-stroke-width:.05px;">Cnsl EQ</div>
<div class="a" style="left:729.5px;top:274.8px;width:31.4px;height:7.1px;background:#1f5fc2;border-radius:2.5px;"></div>
<div class="a" style="left:729.5px;top:274.8px;width:31.4px;height:6.9px;font-size:5.5px;color:#eef2ff;font-weight:normal;text-align:center;line-height:6.9px;white-space:nowrap;letter-spacing:0px;overflow:hidden;-webkit-text-stroke-width:.05px;">Channel EQ</div>
<div class="a" style="left:729.5px;top:282.9px;width:31.4px;height:7.1px;background:#1f5fc2;border-radius:2.5px;"></div>
<div class="a" style="left:729.5px;top:282.9px;width:31.4px;height:6.9px;font-size:5.5px;color:#eef2ff;font-weight:normal;text-align:center;line-height:6.9px;white-space:nowrap;letter-spacing:0px;overflow:hidden;-webkit-text-stroke-width:.05px;">Step FX</div>
<div class="a" style="left:729.5px;top:321.4px;width:31.4px;height:6.6px;background:#555555;border-radius:1.5px;"></div>
<div class="a" style="left:729.5px;top:321.4px;width:31.4px;height:6.6px;font-size:6px;color:#d8d8d8;font-weight:normal;text-align:center;line-height:6.6px;white-space:nowrap;letter-spacing:-.05px;">Surround</div>
<div class="a" style="left:729.5px;top:331.6px;width:31.4px;height:7.5px;background:#272727;border-radius:1px;"></div>
<div class="a" style="left:729.5px;top:331.6px;width:31.4px;height:7.5px;font-size:5.4px;color:#e2bf45;font-weight:normal;text-align:center;line-height:7.5px;white-space:nowrap;letter-spacing:-.2px;overflow:hidden;">2: Keyboards</div>
<svg class="a" style="left:726.7px;top:340px" width="37" height="22" viewBox="726.7 340 37 22"><circle cx="735.35" cy="358.55" r=".55" fill="#8c8c8c"/><circle cx="732.65" cy="353.89" r=".55" fill="#8c8c8c"/><circle cx="732.65" cy="348.51" r=".55" fill="#8c8c8c"/><circle cx="735.35" cy="343.85" r=".55" fill="#8c8c8c"/><circle cx="740.01" cy="341.15" r=".55" fill="#8c8c8c"/><circle cx="745.39" cy="341.15" r=".55" fill="#8c8c8c"/><circle cx="750.05" cy="343.85" r=".55" fill="#8c8c8c"/><circle cx="752.75" cy="348.51" r=".55" fill="#8c8c8c"/><circle cx="752.75" cy="353.89" r=".55" fill="#8c8c8c"/><circle cx="742.7" cy="351.2" r="8.3" fill="#272727"/><circle cx="742.7" cy="351.2" r="8.3" fill="none" stroke="#202020" stroke-width=".6"/><path d="M738.2 345.2L747.2 345.2L742.7 352.2Z" fill="#2f6e3d"/><circle cx="742.7" cy="345.2" r="1.1" fill="#3ddc5c"/><line x1="756.7" y1="343.3" x2="756.7" y2="359.7" stroke="#1e1e1e" stroke-width="1"/><circle cx="756.7" cy="358.6" r="1.4" fill="#3ddc5c"/></svg>
<div class="a" style="left:729.5px;top:362.9px;width:15.1px;height:8.2px;background:#262626;border-radius:1px;"></div>
<div class="a" style="left:729.5px;top:362.9px;width:15.1px;height:8.2px;font-size:5.6px;color:#e6e6e6;font-weight:normal;text-align:center;line-height:8.2px;white-space:nowrap;letter-spacing:0px;">-1.5</div>
<div class="a" style="left:745.7px;top:362.9px;width:15.2px;height:8.2px;background:#262626;border-radius:1px;"></div>
<div class="a" style="left:745.7px;top:362.9px;width:15.2px;height:8.2px;font-size:5.6px;color:#4ee06a;font-weight:normal;text-align:center;line-height:8.2px;white-space:nowrap;letter-spacing:0px;">-12.7</div>
<svg class="a" style="left:726.7px;top:376px" width="37" height="122" viewBox="726.7 376 37 122"><rect x="730.3" y="382" width="5" height=".7" fill="#7a7a7a"/><rect x="733" y="386.67" width="2.2" height=".6" fill="#666"/><rect x="733" y="391.33" width="2.2" height=".6" fill="#666"/><rect x="730.3" y="396" width="5" height=".7" fill="#7a7a7a"/><rect x="733" y="400.8" width="2.2" height=".6" fill="#666"/><rect x="733" y="405.6" width="2.2" height=".6" fill="#666"/><rect x="730.3" y="410.4" width="5" height=".7" fill="#7a7a7a"/><rect x="733" y="415.07" width="2.2" height=".6" fill="#666"/><rect x="733" y="419.73" width="2.2" height=".6" fill="#666"/><rect x="730.3" y="424.4" width="5" height=".7" fill="#7a7a7a"/><rect x="733" y="429.27" width="2.2" height=".6" fill="#666"/><rect x="733" y="434.13" width="2.2" height=".6" fill="#666"/><rect x="730.3" y="439" width="5" height=".7" fill="#7a7a7a"/><rect x="733" y="442" width="2.2" height=".6" fill="#666"/><rect x="733" y="445" width="2.2" height=".6" fill="#666"/><rect x="730.3" y="448" width="5" height=".7" fill="#7a7a7a"/><rect x="733" y="452" width="2.2" height=".6" fill="#666"/><rect x="733" y="456" width="2.2" height=".6" fill="#666"/><rect x="730.3" y="460" width="5" height=".7" fill="#7a7a7a"/><rect x="733" y="463" width="2.2" height=".6" fill="#666"/><rect x="733" y="466" width="2.2" height=".6" fill="#666"/><rect x="730.3" y="469" width="5" height=".7" fill="#7a7a7a"/><rect x="733" y="472.2" width="2.2" height=".6" fill="#666"/><rect x="733" y="475.4" width="2.2" height=".6" fill="#666"/><rect x="730.3" y="478.6" width="5" height=".7" fill="#7a7a7a"/><rect x="733" y="480.27" width="2.2" height=".6" fill="#666"/><rect x="733" y="481.93" width="2.2" height=".6" fill="#666"/><rect x="730.3" y="483.6" width="5" height=".7" fill="#7a7a7a"/><rect x="733" y="484.57" width="2.2" height=".6" fill="#666"/><rect x="733" y="485.53" width="2.2" height=".6" fill="#666"/><rect x="730.3" y="486.5" width="5" height=".7" fill="#7a7a7a"/><rect x="733" y="488.33" width="2.2" height=".6" fill="#666"/><rect x="733" y="490.17" width="2.2" height=".6" fill="#666"/><rect x="730.3" y="492" width="5" height=".7" fill="#7a7a7a"/><rect x="730.1" y="410" width="5.5" height="1.2" fill="#e0e0e0"/><rect x="736.45" y="381" width="1.1" height="112.5" fill="#1c1c1c"/><rect x="748.1" y="381.6" width="1.2" height=".7" fill="#6a6a6a"/><text x="747.9" y="382.9" font-size="3.7" fill="#9a9a9a" text-anchor="end" font-family="Liberation Sans">0</text><rect x="748.1" y="389.55" width="1.2" height=".7" fill="#6a6a6a"/><text x="747.9" y="390.85" font-size="3.7" fill="#9a9a9a" text-anchor="end" font-family="Liberation Sans">3</text><rect x="748.1" y="397.5" width="1.2" height=".7" fill="#6a6a6a"/><text x="747.9" y="398.8" font-size="3.7" fill="#9a9a9a" text-anchor="end" font-family="Liberation Sans">6</text><rect x="748.1" y="405.45" width="1.2" height=".7" fill="#6a6a6a"/><text x="747.9" y="406.75" font-size="3.7" fill="#9a9a9a" text-anchor="end" font-family="Liberation Sans">9</text><rect x="748.1" y="413.4" width="1.2" height=".7" fill="#6a6a6a"/><text x="747.9" y="414.7" font-size="3.7" fill="#9a9a9a" text-anchor="end" font-family="Liberation Sans">12</text><rect x="748.1" y="421.35" width="1.2" height=".7" fill="#6a6a6a"/><text x="747.9" y="422.65" font-size="3.7" fill="#9a9a9a" text-anchor="end" font-family="Liberation Sans">15</text><rect x="748.1" y="429.3" width="1.2" height=".7" fill="#6a6a6a"/><text x="747.9" y="430.6" font-size="3.7" fill="#9a9a9a" text-anchor="end" font-family="Liberation Sans">18</text><rect x="748.1" y="437.25" width="1.2" height=".7" fill="#6a6a6a"/><text x="747.9" y="438.55" font-size="3.7" fill="#9a9a9a" text-anchor="end" font-family="Liberation Sans">21</text><rect x="748.1" y="445.2" width="1.2" height=".7" fill="#6a6a6a"/><text x="747.9" y="446.5" font-size="3.7" fill="#9a9a9a" text-anchor="end" font-family="Liberation Sans">24</text><rect x="748.1" y="453.15" width="1.2" height=".7" fill="#6a6a6a"/><text x="747.9" y="454.45" font-size="3.7" fill="#9a9a9a" text-anchor="end" font-family="Liberation Sans">30</text><rect x="748.1" y="461.1" width="1.2" height=".7" fill="#6a6a6a"/><text x="747.9" y="462.4" font-size="3.7" fill="#9a9a9a" text-anchor="end" font-family="Liberation Sans">35</text><rect x="748.1" y="469.05" width="1.2" height=".7" fill="#6a6a6a"/><text x="747.9" y="470.35" font-size="3.7" fill="#9a9a9a" text-anchor="end" font-family="Liberation Sans">40</text><rect x="748.1" y="477" width="1.2" height=".7" fill="#6a6a6a"/><text x="747.9" y="478.3" font-size="3.7" fill="#9a9a9a" text-anchor="end" font-family="Liberation Sans">45</text><rect x="748.1" y="484.95" width="1.2" height=".7" fill="#6a6a6a"/><text x="747.9" y="486.25" font-size="3.7" fill="#9a9a9a" text-anchor="end" font-family="Liberation Sans">50</text><rect x="748.1" y="492.9" width="1.2" height=".7" fill="#6a6a6a"/><text x="747.9" y="494.2" font-size="3.7" fill="#9a9a9a" text-anchor="end" font-family="Liberation Sans">60</text><rect x="750.3" y="381" width="5.4" height="112.5" fill="#2a2a2a"/><rect x="750.8" y="466.8" width="1.9" height="26.7" fill="#3dd35c"/><rect x="753.3" y="459" width="1.9" height="34.5" fill="#3dd35c"/></svg>
<div class="a" style="left:732.3px;top:409.2px;width:8.4px;height:16.8px;background:linear-gradient(180deg,#d8d8d8 0%,#cfcfcf 17%,#a4a4a4 20%,#9c9c9c 48%,#5e5e5e 50%,#cbcbcb 54%,#c4c4c4 86%,#7c7c7c 90%,#6a6a6a 100%);border-radius:1px;box-shadow:0 1px 1px rgba(0,0,0,.45);"></div>
<div class="a" style="left:729.5px;top:505.7px;width:13.7px;height:7.1px;background:#585858;border-radius:1.5px;"></div>
<div class="a" style="left:729.5px;top:505.7px;width:13.7px;height:7.1px;font-size:6px;color:#e4e4e4;font-weight:normal;text-align:center;line-height:7.1px;white-space:nowrap;-webkit-text-stroke:.15px #e4e4e4;">M</div>
<div class="a" style="left:746.4px;top:505.7px;width:14.1px;height:7.1px;background:#585858;border-radius:1.5px;"></div>
<div class="a" style="left:746.4px;top:505.7px;width:14.1px;height:7.1px;font-size:6px;color:#e4e4e4;font-weight:normal;text-align:center;line-height:7.1px;white-space:nowrap;-webkit-text-stroke:.15px #e4e4e4;">S</div>
<div class="a" style="left:726.7px;top:523.2px;width:37.35px;height:21.8px;background:#2e70da;"></div>
<div class="a" style="left:726.4px;top:523.2px;width:0.6px;height:21.8px;background:rgba(0,0,0,.18);"></div>
<div class="a" style="left:726.7px;top:524.6px;width:37.35px;height:7.2px;font-size:5.5px;color:#ffffff;font-weight:normal;text-align:center;line-height:7.2px;white-space:nowrap;letter-spacing:0px;-webkit-text-stroke-width:0;">Lost</div>
<div class="a" style="left:726.7px;top:531px;width:37.35px;height:7.2px;font-size:5.5px;color:#ffffff;font-weight:normal;text-align:center;line-height:7.2px;white-space:nowrap;letter-spacing:0px;-webkit-text-stroke-width:0;">Reverse</div>
<div class="a" style="left:763.45px;top:249px;width:1.2px;height:266.3px;background:#3d3d3d;"></div>
<div class="a" style="left:767.05px;top:255px;width:31px;height:6.6px;background:#2d8c3a;border-radius:2px;"></div>
<div class="a" style="left:767.05px;top:255px;width:31px;height:6.6px;font-size:5.5px;color:#e8f5e8;font-weight:normal;text-align:center;line-height:6.6px;white-space:nowrap;letter-spacing:0px;">Q-Sampler</div>
<div class="a" style="left:766.85px;top:266px;width:31.4px;height:44px;background:#454545;border-radius:1px;"></div>
<div class="a" style="left:766.85px;top:266.7px;width:31.4px;height:7.1px;background:#1f5fc2;border-radius:2.5px;"></div>
<div class="a" style="left:766.85px;top:266.7px;width:31.4px;height:6.9px;font-size:5.5px;color:#eef2ff;font-weight:normal;text-align:center;line-height:6.9px;white-space:nowrap;letter-spacing:0px;overflow:hidden;-webkit-text-stroke-width:.05px;">Cnsl EQ</div>
<div class="a" style="left:766.85px;top:274.8px;width:31.4px;height:7.1px;background:#1f5fc2;border-radius:2.5px;"></div>
<div class="a" style="left:766.85px;top:274.8px;width:31.4px;height:6.9px;font-size:5.5px;color:#eef2ff;font-weight:normal;text-align:center;line-height:6.9px;white-space:nowrap;letter-spacing:0px;overflow:hidden;-webkit-text-stroke-width:.05px;">Multipr</div>
<div class="a" style="left:766.85px;top:321.4px;width:31.4px;height:6.6px;background:#555555;border-radius:1.5px;"></div>
<div class="a" style="left:766.85px;top:321.4px;width:31.4px;height:6.6px;font-size:6px;color:#d8d8d8;font-weight:normal;text-align:center;line-height:6.6px;white-space:nowrap;letter-spacing:-.05px;">Surround</div>
<div class="a" style="left:766.85px;top:331.6px;width:31.4px;height:7.5px;background:#272727;border-radius:1px;"></div>
<div class="a" style="left:766.85px;top:331.6px;width:31.4px;height:7.5px;font-size:5.4px;color:#e2bf45;font-weight:normal;text-align:center;line-height:7.5px;white-space:nowrap;letter-spacing:-.2px;overflow:hidden;">2: Keyboards</div>
<svg class="a" style="left:764.05px;top:340px" width="37" height="22" viewBox="764.05 340 37 22"><circle cx="772.7" cy="358.55" r=".55" fill="#8c8c8c"/><circle cx="770" cy="353.89" r=".55" fill="#8c8c8c"/><circle cx="770" cy="348.51" r=".55" fill="#8c8c8c"/><circle cx="772.7" cy="343.85" r=".55" fill="#8c8c8c"/><circle cx="777.36" cy="341.15" r=".55" fill="#8c8c8c"/><circle cx="782.74" cy="341.15" r=".55" fill="#8c8c8c"/><circle cx="787.4" cy="343.85" r=".55" fill="#8c8c8c"/><circle cx="790.1" cy="348.51" r=".55" fill="#8c8c8c"/><circle cx="790.1" cy="353.89" r=".55" fill="#8c8c8c"/><circle cx="780.05" cy="351.2" r="8.3" fill="#272727"/><circle cx="780.05" cy="351.2" r="8.3" fill="none" stroke="#202020" stroke-width=".6"/><path d="M773.05 354.2Q780.05 350.2 787.05 354.2Z" fill="#2f6e3d"/><circle cx="781.05" cy="355.2" r="1.1" fill="#3ddc5c"/><line x1="794.05" y1="343.3" x2="794.05" y2="359.7" stroke="#1e1e1e" stroke-width="1"/><circle cx="794.05" cy="358.6" r="1.4" fill="#3ddc5c"/></svg>
<div class="a" style="left:766.85px;top:362.9px;width:15.1px;height:8.2px;background:#262626;border-radius:1px;"></div>
<div class="a" style="left:766.85px;top:362.9px;width:15.1px;height:8.2px;font-size:5.6px;color:#e6e6e6;font-weight:normal;text-align:center;line-height:8.2px;white-space:nowrap;letter-spacing:0px;">-8.5</div>
<div class="a" style="left:783.05px;top:362.9px;width:15.2px;height:8.2px;background:#262626;border-radius:1px;"></div>
<div class="a" style="left:783.05px;top:362.9px;width:15.2px;height:8.2px;font-size:5.6px;color:#4ee06a;font-weight:normal;text-align:center;line-height:8.2px;white-space:nowrap;letter-spacing:0px;">-28.0</div>
<svg class="a" style="left:764.05px;top:376px" width="37" height="122" viewBox="764.05 376 37 122"><rect x="767.65" y="382" width="5" height=".7" fill="#7a7a7a"/><rect x="770.35" y="386.67" width="2.2" height=".6" fill="#666"/><rect x="770.35" y="391.33" width="2.2" height=".6" fill="#666"/><rect x="767.65" y="396" width="5" height=".7" fill="#7a7a7a"/><rect x="770.35" y="400.8" width="2.2" height=".6" fill="#666"/><rect x="770.35" y="405.6" width="2.2" height=".6" fill="#666"/><rect x="767.65" y="410.4" width="5" height=".7" fill="#7a7a7a"/><rect x="770.35" y="415.07" width="2.2" height=".6" fill="#666"/><rect x="770.35" y="419.73" width="2.2" height=".6" fill="#666"/><rect x="767.65" y="424.4" width="5" height=".7" fill="#7a7a7a"/><rect x="770.35" y="429.27" width="2.2" height=".6" fill="#666"/><rect x="770.35" y="434.13" width="2.2" height=".6" fill="#666"/><rect x="767.65" y="439" width="5" height=".7" fill="#7a7a7a"/><rect x="770.35" y="442" width="2.2" height=".6" fill="#666"/><rect x="770.35" y="445" width="2.2" height=".6" fill="#666"/><rect x="767.65" y="448" width="5" height=".7" fill="#7a7a7a"/><rect x="770.35" y="452" width="2.2" height=".6" fill="#666"/><rect x="770.35" y="456" width="2.2" height=".6" fill="#666"/><rect x="767.65" y="460" width="5" height=".7" fill="#7a7a7a"/><rect x="770.35" y="463" width="2.2" height=".6" fill="#666"/><rect x="770.35" y="466" width="2.2" height=".6" fill="#666"/><rect x="767.65" y="469" width="5" height=".7" fill="#7a7a7a"/><rect x="770.35" y="472.2" width="2.2" height=".6" fill="#666"/><rect x="770.35" y="475.4" width="2.2" height=".6" fill="#666"/><rect x="767.65" y="478.6" width="5" height=".7" fill="#7a7a7a"/><rect x="770.35" y="480.27" width="2.2" height=".6" fill="#666"/><rect x="770.35" y="481.93" width="2.2" height=".6" fill="#666"/><rect x="767.65" y="483.6" width="5" height=".7" fill="#7a7a7a"/><rect x="770.35" y="484.57" width="2.2" height=".6" fill="#666"/><rect x="770.35" y="485.53" width="2.2" height=".6" fill="#666"/><rect x="767.65" y="486.5" width="5" height=".7" fill="#7a7a7a"/><rect x="770.35" y="488.33" width="2.2" height=".6" fill="#666"/><rect x="770.35" y="490.17" width="2.2" height=".6" fill="#666"/><rect x="767.65" y="492" width="5" height=".7" fill="#7a7a7a"/><rect x="767.45" y="410" width="5.5" height="1.2" fill="#e0e0e0"/><rect x="773.8" y="381" width="1.1" height="112.5" fill="#1c1c1c"/><rect x="785.45" y="381.6" width="1.2" height=".7" fill="#6a6a6a"/><text x="785.25" y="382.9" font-size="3.7" fill="#9a9a9a" text-anchor="end" font-family="Liberation Sans">0</text><rect x="785.45" y="389.55" width="1.2" height=".7" fill="#6a6a6a"/><text x="785.25" y="390.85" font-size="3.7" fill="#9a9a9a" text-anchor="end" font-family="Liberation Sans">3</text><rect x="785.45" y="397.5" width="1.2" height=".7" fill="#6a6a6a"/><text x="785.25" y="398.8" font-size="3.7" fill="#9a9a9a" text-anchor="end" font-family="Liberation Sans">6</text><rect x="785.45" y="405.45" width="1.2" height=".7" fill="#6a6a6a"/><text x="785.25" y="406.75" font-size="3.7" fill="#9a9a9a" text-anchor="end" font-family="Liberation Sans">9</text><rect x="785.45" y="413.4" width="1.2" height=".7" fill="#6a6a6a"/><text x="785.25" y="414.7" font-size="3.7" fill="#9a9a9a" text-anchor="end" font-family="Liberation Sans">12</text><rect x="785.45" y="421.35" width="1.2" height=".7" fill="#6a6a6a"/><text x="785.25" y="422.65" font-size="3.7" fill="#9a9a9a" text-anchor="end" font-family="Liberation Sans">15</text><rect x="785.45" y="429.3" width="1.2" height=".7" fill="#6a6a6a"/><text x="785.25" y="430.6" font-size="3.7" fill="#9a9a9a" text-anchor="end" font-family="Liberation Sans">18</text><rect x="785.45" y="437.25" width="1.2" height=".7" fill="#6a6a6a"/><text x="785.25" y="438.55" font-size="3.7" fill="#9a9a9a" text-anchor="end" font-family="Liberation Sans">21</text><rect x="785.45" y="445.2" width="1.2" height=".7" fill="#6a6a6a"/><text x="785.25" y="446.5" font-size="3.7" fill="#9a9a9a" text-anchor="end" font-family="Liberation Sans">24</text><rect x="785.45" y="453.15" width="1.2" height=".7" fill="#6a6a6a"/><text x="785.25" y="454.45" font-size="3.7" fill="#9a9a9a" text-anchor="end" font-family="Liberation Sans">30</text><rect x="785.45" y="461.1" width="1.2" height=".7" fill="#6a6a6a"/><text x="785.25" y="462.4" font-size="3.7" fill="#9a9a9a" text-anchor="end" font-family="Liberation Sans">35</text><rect x="785.45" y="469.05" width="1.2" height=".7" fill="#6a6a6a"/><text x="785.25" y="470.35" font-size="3.7" fill="#9a9a9a" text-anchor="end" font-family="Liberation Sans">40</text><rect x="785.45" y="477" width="1.2" height=".7" fill="#6a6a6a"/><text x="785.25" y="478.3" font-size="3.7" fill="#9a9a9a" text-anchor="end" font-family="Liberation Sans">45</text><rect x="785.45" y="484.95" width="1.2" height=".7" fill="#6a6a6a"/><text x="785.25" y="486.25" font-size="3.7" fill="#9a9a9a" text-anchor="end" font-family="Liberation Sans">50</text><rect x="785.45" y="492.9" width="1.2" height=".7" fill="#6a6a6a"/><text x="785.25" y="494.2" font-size="3.7" fill="#9a9a9a" text-anchor="end" font-family="Liberation Sans">60</text><rect x="787.65" y="381" width="5.4" height="112.5" fill="#2a2a2a"/><rect x="788.15" y="465.1" width="1.9" height="28.4" fill="#3dd35c"/><rect x="790.65" y="465.1" width="1.9" height="28.4" fill="#3dd35c"/></svg>
<div class="a" style="left:769.65px;top:435.8px;width:8.4px;height:17px;background:linear-gradient(180deg,#d8d8d8 0%,#cfcfcf 17%,#a4a4a4 20%,#9c9c9c 48%,#5e5e5e 50%,#cbcbcb 54%,#c4c4c4 86%,#7c7c7c 90%,#6a6a6a 100%);border-radius:1px;box-shadow:0 1px 1px rgba(0,0,0,.45);"></div>
<div class="a" style="left:766.85px;top:505.7px;width:13.7px;height:7.1px;background:#585858;border-radius:1.5px;"></div>
<div class="a" style="left:766.85px;top:505.7px;width:13.7px;height:7.1px;font-size:6px;color:#e4e4e4;font-weight:normal;text-align:center;line-height:7.1px;white-space:nowrap;-webkit-text-stroke:.15px #e4e4e4;">M</div>
<div class="a" style="left:783.75px;top:505.7px;width:14.1px;height:7.1px;background:#585858;border-radius:1.5px;"></div>
<div class="a" style="left:783.75px;top:505.7px;width:14.1px;height:7.1px;font-size:6px;color:#e4e4e4;font-weight:normal;text-align:center;line-height:7.1px;white-space:nowrap;-webkit-text-stroke:.15px #e4e4e4;">S</div>
<div class="a" style="left:764.05px;top:523.2px;width:37.35px;height:21.8px;background:#2388d3;"></div>
<div class="a" style="left:763.75px;top:523.2px;width:0.6px;height:21.8px;background:rgba(0,0,0,.18);"></div>
<div class="a" style="left:764.05px;top:524.6px;width:37.35px;height:7.2px;font-size:5.5px;color:#ffffff;font-weight:normal;text-align:center;line-height:7.2px;white-space:nowrap;letter-spacing:0px;-webkit-text-stroke-width:0;">String</div>
<div class="a" style="left:764.05px;top:531px;width:37.35px;height:7.2px;font-size:5.5px;color:#ffffff;font-weight:normal;text-align:center;line-height:7.2px;white-space:nowrap;letter-spacing:0px;-webkit-text-stroke-width:0;">Vox</div>
<div class="a" style="left:800.8px;top:249px;width:1.2px;height:266.3px;background:#3d3d3d;"></div>
<div class="a" style="left:804.4px;top:255px;width:31px;height:6.6px;background:#2d8c3a;border-radius:2px;"></div>
<div class="a" style="left:804.4px;top:255px;width:31px;height:6.6px;font-size:5.5px;color:#e8f5e8;font-weight:normal;text-align:center;line-height:6.6px;white-space:nowrap;letter-spacing:0px;">RetroSyn</div>
<div class="a" style="left:804.2px;top:266px;width:31.4px;height:44px;background:#454545;border-radius:1px;"></div>
<div class="a" style="left:804.2px;top:266.7px;width:31.4px;height:7.1px;background:#1f5fc2;border-radius:2.5px;"></div>
<div class="a" style="left:804.2px;top:266.7px;width:31.4px;height:6.9px;font-size:5.5px;color:#eef2ff;font-weight:normal;text-align:center;line-height:6.9px;white-space:nowrap;letter-spacing:0px;overflow:hidden;-webkit-text-stroke-width:.05px;">Cnsl EQ</div>
<div class="a" style="left:804.2px;top:274.8px;width:31.4px;height:7.1px;background:#1f5fc2;border-radius:2.5px;"></div>
<div class="a" style="left:804.2px;top:274.8px;width:31.4px;height:6.9px;font-size:5.5px;color:#eef2ff;font-weight:normal;text-align:center;line-height:6.9px;white-space:nowrap;letter-spacing:0px;overflow:hidden;-webkit-text-stroke-width:.05px;">Ensemble</div>
<div class="a" style="left:804.2px;top:282.9px;width:31.4px;height:7.1px;background:#1f5fc2;border-radius:2.5px;"></div>
<div class="a" style="left:804.2px;top:282.9px;width:31.4px;height:6.9px;font-size:5.5px;color:#eef2ff;font-weight:normal;text-align:center;line-height:6.9px;white-space:nowrap;letter-spacing:0px;overflow:hidden;-webkit-text-stroke-width:.05px;">St-Delay</div>
<div class="a" style="left:804.2px;top:321.4px;width:31.4px;height:6.6px;background:#555555;border-radius:1.5px;"></div>
<div class="a" style="left:804.2px;top:321.4px;width:31.4px;height:6.6px;font-size:6px;color:#d8d8d8;font-weight:normal;text-align:center;line-height:6.6px;white-space:nowrap;letter-spacing:-.05px;">Surround</div>
<div class="a" style="left:804.2px;top:331.6px;width:31.4px;height:7.5px;background:#272727;border-radius:1px;"></div>
<div class="a" style="left:804.2px;top:331.6px;width:31.4px;height:7.5px;font-size:5.4px;color:#e2bf45;font-weight:normal;text-align:center;line-height:7.5px;white-space:nowrap;letter-spacing:-.2px;overflow:hidden;">2: Keyboards</div>
<svg class="a" style="left:801.4px;top:340px" width="37" height="22" viewBox="801.4 340 37 22"><circle cx="810.05" cy="358.55" r=".55" fill="#8c8c8c"/><circle cx="807.35" cy="353.89" r=".55" fill="#8c8c8c"/><circle cx="807.35" cy="348.51" r=".55" fill="#8c8c8c"/><circle cx="810.05" cy="343.85" r=".55" fill="#8c8c8c"/><circle cx="814.71" cy="341.15" r=".55" fill="#8c8c8c"/><circle cx="820.09" cy="341.15" r=".55" fill="#8c8c8c"/><circle cx="824.75" cy="343.85" r=".55" fill="#8c8c8c"/><circle cx="827.45" cy="348.51" r=".55" fill="#8c8c8c"/><circle cx="827.45" cy="353.89" r=".55" fill="#8c8c8c"/><circle cx="817.4" cy="351.2" r="8.3" fill="#272727"/><circle cx="817.4" cy="351.2" r="8.3" fill="none" stroke="#202020" stroke-width=".6"/><path d="M812.9 345.2L821.9 345.2L817.4 352.2Z" fill="#2f6e3d"/><circle cx="817.4" cy="345.2" r="1.1" fill="#3ddc5c"/><line x1="831.4" y1="343.3" x2="831.4" y2="359.7" stroke="#1e1e1e" stroke-width="1"/><circle cx="831.4" cy="358.6" r="1.4" fill="#3ddc5c"/></svg>
<div class="a" style="left:804.2px;top:362.9px;width:15.1px;height:8.2px;background:#262626;border-radius:1px;"></div>
<div class="a" style="left:804.2px;top:362.9px;width:15.1px;height:8.2px;font-size:5.6px;color:#e6e6e6;font-weight:normal;text-align:center;line-height:8.2px;white-space:nowrap;letter-spacing:0px;">-5.4</div>
<div class="a" style="left:820.4px;top:362.9px;width:15.2px;height:8.2px;background:#262626;border-radius:1px;"></div>
<div class="a" style="left:820.4px;top:362.9px;width:15.2px;height:8.2px;font-size:5.6px;color:#4ee06a;font-weight:normal;text-align:center;line-height:8.2px;white-space:nowrap;letter-spacing:0px;">-16.3</div>
<svg class="a" style="left:801.4px;top:376px" width="37" height="122" viewBox="801.4 376 37 122"><rect x="805" y="382" width="5" height=".7" fill="#7a7a7a"/><rect x="807.7" y="386.67" width="2.2" height=".6" fill="#666"/><rect x="807.7" y="391.33" width="2.2" height=".6" fill="#666"/><rect x="805" y="396" width="5" height=".7" fill="#7a7a7a"/><rect x="807.7" y="400.8" width="2.2" height=".6" fill="#666"/><rect x="807.7" y="405.6" width="2.2" height=".6" fill="#666"/><rect x="805" y="410.4" width="5" height=".7" fill="#7a7a7a"/><rect x="807.7" y="415.07" width="2.2" height=".6" fill="#666"/><rect x="807.7" y="419.73" width="2.2" height=".6" fill="#666"/><rect x="805" y="424.4" width="5" height=".7" fill="#7a7a7a"/><rect x="807.7" y="429.27" width="2.2" height=".6" fill="#666"/><rect x="807.7" y="434.13" width="2.2" height=".6" fill="#666"/><rect x="805" y="439" width="5" height=".7" fill="#7a7a7a"/><rect x="807.7" y="442" width="2.2" height=".6" fill="#666"/><rect x="807.7" y="445" width="2.2" height=".6" fill="#666"/><rect x="805" y="448" width="5" height=".7" fill="#7a7a7a"/><rect x="807.7" y="452" width="2.2" height=".6" fill="#666"/><rect x="807.7" y="456" width="2.2" height=".6" fill="#666"/><rect x="805" y="460" width="5" height=".7" fill="#7a7a7a"/><rect x="807.7" y="463" width="2.2" height=".6" fill="#666"/><rect x="807.7" y="466" width="2.2" height=".6" fill="#666"/><rect x="805" y="469" width="5" height=".7" fill="#7a7a7a"/><rect x="807.7" y="472.2" width="2.2" height=".6" fill="#666"/><rect x="807.7" y="475.4" width="2.2" height=".6" fill="#666"/><rect x="805" y="478.6" width="5" height=".7" fill="#7a7a7a"/><rect x="807.7" y="480.27" width="2.2" height=".6" fill="#666"/><rect x="807.7" y="481.93" width="2.2" height=".6" fill="#666"/><rect x="805" y="483.6" width="5" height=".7" fill="#7a7a7a"/><rect x="807.7" y="484.57" width="2.2" height=".6" fill="#666"/><rect x="807.7" y="485.53" width="2.2" height=".6" fill="#666"/><rect x="805" y="486.5" width="5" height=".7" fill="#7a7a7a"/><rect x="807.7" y="488.33" width="2.2" height=".6" fill="#666"/><rect x="807.7" y="490.17" width="2.2" height=".6" fill="#666"/><rect x="805" y="492" width="5" height=".7" fill="#7a7a7a"/><rect x="804.8" y="410" width="5.5" height="1.2" fill="#e0e0e0"/><rect x="811.15" y="381" width="1.1" height="112.5" fill="#1c1c1c"/><rect x="822.8" y="381.6" width="1.2" height=".7" fill="#6a6a6a"/><text x="822.6" y="382.9" font-size="3.7" fill="#9a9a9a" text-anchor="end" font-family="Liberation Sans">0</text><rect x="822.8" y="389.55" width="1.2" height=".7" fill="#6a6a6a"/><text x="822.6" y="390.85" font-size="3.7" fill="#9a9a9a" text-anchor="end" font-family="Liberation Sans">3</text><rect x="822.8" y="397.5" width="1.2" height=".7" fill="#6a6a6a"/><text x="822.6" y="398.8" font-size="3.7" fill="#9a9a9a" text-anchor="end" font-family="Liberation Sans">6</text><rect x="822.8" y="405.45" width="1.2" height=".7" fill="#6a6a6a"/><text x="822.6" y="406.75" font-size="3.7" fill="#9a9a9a" text-anchor="end" font-family="Liberation Sans">9</text><rect x="822.8" y="413.4" width="1.2" height=".7" fill="#6a6a6a"/><text x="822.6" y="414.7" font-size="3.7" fill="#9a9a9a" text-anchor="end" font-family="Liberation Sans">12</text><rect x="822.8" y="421.35" width="1.2" height=".7" fill="#6a6a6a"/><text x="822.6" y="422.65" font-size="3.7" fill="#9a9a9a" text-anchor="end" font-family="Liberation Sans">15</text><rect x="822.8" y="429.3" width="1.2" height=".7" fill="#6a6a6a"/><text x="822.6" y="430.6" font-size="3.7" fill="#9a9a9a" text-anchor="end" font-family="Liberation Sans">18</text><rect x="822.8" y="437.25" width="1.2" height=".7" fill="#6a6a6a"/><text x="822.6" y="438.55" font-size="3.7" fill="#9a9a9a" text-anchor="end" font-family="Liberation Sans">21</text><rect x="822.8" y="445.2" width="1.2" height=".7" fill="#6a6a6a"/><text x="822.6" y="446.5" font-size="3.7" fill="#9a9a9a" text-anchor="end" font-family="Liberation Sans">24</text><rect x="822.8" y="453.15" width="1.2" height=".7" fill="#6a6a6a"/><text x="822.6" y="454.45" font-size="3.7" fill="#9a9a9a" text-anchor="end" font-family="Liberation Sans">30</text><rect x="822.8" y="461.1" width="1.2" height=".7" fill="#6a6a6a"/><text x="822.6" y="462.4" font-size="3.7" fill="#9a9a9a" text-anchor="end" font-family="Liberation Sans">35</text><rect x="822.8" y="469.05" width="1.2" height=".7" fill="#6a6a6a"/><text x="822.6" y="470.35" font-size="3.7" fill="#9a9a9a" text-anchor="end" font-family="Liberation Sans">40</text><rect x="822.8" y="477" width="1.2" height=".7" fill="#6a6a6a"/><text x="822.6" y="478.3" font-size="3.7" fill="#9a9a9a" text-anchor="end" font-family="Liberation Sans">45</text><rect x="822.8" y="484.95" width="1.2" height=".7" fill="#6a6a6a"/><text x="822.6" y="486.25" font-size="3.7" fill="#9a9a9a" text-anchor="end" font-family="Liberation Sans">50</text><rect x="822.8" y="492.9" width="1.2" height=".7" fill="#6a6a6a"/><text x="822.6" y="494.2" font-size="3.7" fill="#9a9a9a" text-anchor="end" font-family="Liberation Sans">60</text><rect x="825" y="381" width="5.4" height="112.5" fill="#2a2a2a"/><rect x="825.5" y="424.5" width="1.9" height="69" fill="#3dd35c"/><rect x="828" y="428" width="1.9" height="65.5" fill="#3dd35c"/></svg>
<div class="a" style="left:807px;top:428px;width:8.4px;height:16.5px;background:linear-gradient(180deg,#d8d8d8 0%,#cfcfcf 17%,#a4a4a4 20%,#9c9c9c 48%,#5e5e5e 50%,#cbcbcb 54%,#c4c4c4 86%,#7c7c7c 90%,#6a6a6a 100%);border-radius:1px;box-shadow:0 1px 1px rgba(0,0,0,.45);"></div>
<div class="a" style="left:804.2px;top:505.7px;width:13.7px;height:7.1px;background:#585858;border-radius:1.5px;"></div>
<div class="a" style="left:804.2px;top:505.7px;width:13.7px;height:7.1px;font-size:6px;color:#e4e4e4;font-weight:normal;text-align:center;line-height:7.1px;white-space:nowrap;-webkit-text-stroke:.15px #e4e4e4;">M</div>
<div class="a" style="left:821.1px;top:505.7px;width:14.1px;height:7.1px;background:#585858;border-radius:1.5px;"></div>
<div class="a" style="left:821.1px;top:505.7px;width:14.1px;height:7.1px;font-size:6px;color:#e4e4e4;font-weight:normal;text-align:center;line-height:7.1px;white-space:nowrap;-webkit-text-stroke:.15px #e4e4e4;">S</div>
<div class="a" style="left:801.4px;top:523.2px;width:37.35px;height:21.8px;background:#1a9fd2;"></div>
<div class="a" style="left:801.1px;top:523.2px;width:0.6px;height:21.8px;background:rgba(0,0,0,.18);"></div>
<div class="a" style="left:801.4px;top:524.6px;width:37.35px;height:7.2px;font-size:5.5px;color:#ffffff;font-weight:normal;text-align:center;line-height:7.2px;white-space:nowrap;letter-spacing:0px;-webkit-text-stroke-width:0;">Moonlight</div>
<div class="a" style="left:801.4px;top:531px;width:37.35px;height:7.2px;font-size:5.5px;color:#ffffff;font-weight:normal;text-align:center;line-height:7.2px;white-space:nowrap;letter-spacing:0px;-webkit-text-stroke-width:0;">Ark</div>
<div class="a" style="left:838.15px;top:249px;width:1.2px;height:266.3px;background:#3d3d3d;"></div>
<div class="a" style="left:841.75px;top:255px;width:31px;height:6.6px;background:#2d8c3a;border-radius:2px;"></div>
<div class="a" style="left:841.75px;top:255px;width:31px;height:6.6px;font-size:5.5px;color:#e8f5e8;font-weight:normal;text-align:center;line-height:6.6px;white-space:nowrap;letter-spacing:0px;">Alchemy</div>
<div class="a" style="left:841.55px;top:266px;width:31.4px;height:44px;background:#454545;border-radius:1px;"></div>
<div class="a" style="left:841.55px;top:266.7px;width:31.4px;height:7.1px;background:#1f5fc2;border-radius:2.5px;"></div>
<div class="a" style="left:841.55px;top:266.7px;width:31.4px;height:6.9px;font-size:5.5px;color:#eef2ff;font-weight:normal;text-align:center;line-height:6.9px;white-space:nowrap;letter-spacing:0px;overflow:hidden;-webkit-text-stroke-width:.05px;">Cnsl EQ</div>
<div class="a" style="left:841.55px;top:274.8px;width:31.4px;height:7.1px;background:#1f5fc2;border-radius:2.5px;"></div>
<div class="a" style="left:841.55px;top:274.8px;width:31.4px;height:6.9px;font-size:5.5px;color:#eef2ff;font-weight:normal;text-align:center;line-height:6.9px;white-space:nowrap;letter-spacing:0px;overflow:hidden;-webkit-text-stroke-width:.05px;">Tube EQ</div>
<div class="a" style="left:841.55px;top:282.9px;width:31.4px;height:7.1px;background:#1f5fc2;border-radius:2.5px;"></div>
<div class="a" style="left:841.55px;top:282.9px;width:31.4px;height:6.9px;font-size:5.5px;color:#eef2ff;font-weight:normal;text-align:center;line-height:6.9px;white-space:nowrap;letter-spacing:0px;overflow:hidden;-webkit-text-stroke-width:.05px;">Compressor</div>
<div class="a" style="left:841.55px;top:321.4px;width:31.4px;height:6.6px;background:#555555;border-radius:1.5px;"></div>
<div class="a" style="left:841.55px;top:321.4px;width:31.4px;height:6.6px;font-size:6px;color:#d8d8d8;font-weight:normal;text-align:center;line-height:6.6px;white-space:nowrap;letter-spacing:-.05px;">Surround</div>
<div class="a" style="left:841.55px;top:331.6px;width:31.4px;height:7.5px;background:#272727;border-radius:1px;"></div>
<div class="a" style="left:841.55px;top:331.6px;width:31.4px;height:7.5px;font-size:5.4px;color:#e2bf45;font-weight:normal;text-align:center;line-height:7.5px;white-space:nowrap;letter-spacing:0px;overflow:hidden;">3: Bass</div>
<svg class="a" style="left:838.75px;top:340px" width="37" height="22" viewBox="838.75 340 37 22"><circle cx="847.4" cy="358.55" r=".55" fill="#8c8c8c"/><circle cx="844.7" cy="353.89" r=".55" fill="#8c8c8c"/><circle cx="844.7" cy="348.51" r=".55" fill="#8c8c8c"/><circle cx="847.4" cy="343.85" r=".55" fill="#8c8c8c"/><circle cx="852.06" cy="341.15" r=".55" fill="#8c8c8c"/><circle cx="857.44" cy="341.15" r=".55" fill="#8c8c8c"/><circle cx="862.1" cy="343.85" r=".55" fill="#8c8c8c"/><circle cx="864.8" cy="348.51" r=".55" fill="#8c8c8c"/><circle cx="864.8" cy="353.89" r=".55" fill="#8c8c8c"/><circle cx="854.75" cy="351.2" r="8.3" fill="#272727"/><circle cx="854.75" cy="351.2" r="8.3" fill="none" stroke="#202020" stroke-width=".6"/><path d="M850.25 345.2L859.25 345.2L854.75 352.2Z" fill="#2f6e3d"/><circle cx="854.75" cy="345.2" r="1.1" fill="#3ddc5c"/><line x1="868.75" y1="343.3" x2="868.75" y2="359.7" stroke="#1e1e1e" stroke-width="1"/><circle cx="868.75" cy="358.6" r="1.4" fill="#3ddc5c"/></svg>
<div class="a" style="left:841.55px;top:362.9px;width:15.1px;height:8.2px;background:#262626;border-radius:1px;"></div>
<div class="a" style="left:841.55px;top:362.9px;width:15.1px;height:8.2px;font-size:5.6px;color:#e6e6e6;font-weight:normal;text-align:center;line-height:8.2px;white-space:nowrap;letter-spacing:0px;">-7.5</div>
<div class="a" style="left:857.75px;top:362.9px;width:15.2px;height:8.2px;background:#262626;border-radius:1px;"></div>
<div class="a" style="left:857.75px;top:362.9px;width:15.2px;height:8.2px;font-size:5.6px;color:#4ee06a;font-weight:normal;text-align:center;line-height:8.2px;white-space:nowrap;letter-spacing:0px;">-9.9</div>
<svg class="a" style="left:838.75px;top:376px" width="37" height="122" viewBox="838.75 376 37 122"><rect x="842.35" y="382" width="5" height=".7" fill="#7a7a7a"/><rect x="845.05" y="386.67" width="2.2" height=".6" fill="#666"/><rect x="845.05" y="391.33" width="2.2" height=".6" fill="#666"/><rect x="842.35" y="396" width="5" height=".7" fill="#7a7a7a"/><rect x="845.05" y="400.8" width="2.2" height=".6" fill="#666"/><rect x="845.05" y="405.6" width="2.2" height=".6" fill="#666"/><rect x="842.35" y="410.4" width="5" height=".7" fill="#7a7a7a"/><rect x="845.05" y="415.07" width="2.2" height=".6" fill="#666"/><rect x="845.05" y="419.73" width="2.2" height=".6" fill="#666"/><rect x="842.35" y="424.4" width="5" height=".7" fill="#7a7a7a"/><rect x="845.05" y="429.27" width="2.2" height=".6" fill="#666"/><rect x="845.05" y="434.13" width="2.2" height=".6" fill="#666"/><rect x="842.35" y="439" width="5" height=".7" fill="#7a7a7a"/><rect x="845.05" y="442" width="2.2" height=".6" fill="#666"/><rect x="845.05" y="445" width="2.2" height=".6" fill="#666"/><rect x="842.35" y="448" width="5" height=".7" fill="#7a7a7a"/><rect x="845.05" y="452" width="2.2" height=".6" fill="#666"/><rect x="845.05" y="456" width="2.2" height=".6" fill="#666"/><rect x="842.35" y="460" width="5" height=".7" fill="#7a7a7a"/><rect x="845.05" y="463" width="2.2" height=".6" fill="#666"/><rect x="845.05" y="466" width="2.2" height=".6" fill="#666"/><rect x="842.35" y="469" width="5" height=".7" fill="#7a7a7a"/><rect x="845.05" y="472.2" width="2.2" height=".6" fill="#666"/><rect x="845.05" y="475.4" width="2.2" height=".6" fill="#666"/><rect x="842.35" y="478.6" width="5" height=".7" fill="#7a7a7a"/><rect x="845.05" y="480.27" width="2.2" height=".6" fill="#666"/><rect x="845.05" y="481.93" width="2.2" height=".6" fill="#666"/><rect x="842.35" y="483.6" width="5" height=".7" fill="#7a7a7a"/><rect x="845.05" y="484.57" width="2.2" height=".6" fill="#666"/><rect x="845.05" y="485.53" width="2.2" height=".6" fill="#666"/><rect x="842.35" y="486.5" width="5" height=".7" fill="#7a7a7a"/><rect x="845.05" y="488.33" width="2.2" height=".6" fill="#666"/><rect x="845.05" y="490.17" width="2.2" height=".6" fill="#666"/><rect x="842.35" y="492" width="5" height=".7" fill="#7a7a7a"/><rect x="842.15" y="410" width="5.5" height="1.2" fill="#e0e0e0"/><rect x="848.5" y="381" width="1.1" height="112.5" fill="#1c1c1c"/><rect x="860.15" y="381.6" width="1.2" height=".7" fill="#6a6a6a"/><text x="859.95" y="382.9" font-size="3.7" fill="#9a9a9a" text-anchor="end" font-family="Liberation Sans">0</text><rect x="860.15" y="389.55" width="1.2" height=".7" fill="#6a6a6a"/><text x="859.95" y="390.85" font-size="3.7" fill="#9a9a9a" text-anchor="end" font-family="Liberation Sans">3</text><rect x="860.15" y="397.5" width="1.2" height=".7" fill="#6a6a6a"/><text x="859.95" y="398.8" font-size="3.7" fill="#9a9a9a" text-anchor="end" font-family="Liberation Sans">6</text><rect x="860.15" y="405.45" width="1.2" height=".7" fill="#6a6a6a"/><text x="859.95" y="406.75" font-size="3.7" fill="#9a9a9a" text-anchor="end" font-family="Liberation Sans">9</text><rect x="860.15" y="413.4" width="1.2" height=".7" fill="#6a6a6a"/><text x="859.95" y="414.7" font-size="3.7" fill="#9a9a9a" text-anchor="end" font-family="Liberation Sans">12</text><rect x="860.15" y="421.35" width="1.2" height=".7" fill="#6a6a6a"/><text x="859.95" y="422.65" font-size="3.7" fill="#9a9a9a" text-anchor="end" font-family="Liberation Sans">15</text><rect x="860.15" y="429.3" width="1.2" height=".7" fill="#6a6a6a"/><text x="859.95" y="430.6" font-size="3.7" fill="#9a9a9a" text-anchor="end" font-family="Liberation Sans">18</text><rect x="860.15" y="437.25" width="1.2" height=".7" fill="#6a6a6a"/><text x="859.95" y="438.55" font-size="3.7" fill="#9a9a9a" text-anchor="end" font-family="Liberation Sans">21</text><rect x="860.15" y="445.2" width="1.2" height=".7" fill="#6a6a6a"/><text x="859.95" y="446.5" font-size="3.7" fill="#9a9a9a" text-anchor="end" font-family="Liberation Sans">24</text><rect x="860.15" y="453.15" width="1.2" height=".7" fill="#6a6a6a"/><text x="859.95" y="454.45" font-size="3.7" fill="#9a9a9a" text-anchor="end" font-family="Liberation Sans">30</text><rect x="860.15" y="461.1" width="1.2" height=".7" fill="#6a6a6a"/><text x="859.95" y="462.4" font-size="3.7" fill="#9a9a9a" text-anchor="end" font-family="Liberation Sans">35</text><rect x="860.15" y="469.05" width="1.2" height=".7" fill="#6a6a6a"/><text x="859.95" y="470.35" font-size="3.7" fill="#9a9a9a" text-anchor="end" font-family="Liberation Sans">40</text><rect x="860.15" y="477" width="1.2" height=".7" fill="#6a6a6a"/><text x="859.95" y="478.3" font-size="3.7" fill="#9a9a9a" text-anchor="end" font-family="Liberation Sans">45</text><rect x="860.15" y="484.95" width="1.2" height=".7" fill="#6a6a6a"/><text x="859.95" y="486.25" font-size="3.7" fill="#9a9a9a" text-anchor="end" font-family="Liberation Sans">50</text><rect x="860.15" y="492.9" width="1.2" height=".7" fill="#6a6a6a"/><text x="859.95" y="494.2" font-size="3.7" fill="#9a9a9a" text-anchor="end" font-family="Liberation Sans">60</text><rect x="862.35" y="381" width="5.4" height="112.5" fill="#2a2a2a"/><rect x="862.85" y="418" width="1.9" height="75.5" fill="#3dd35c"/><rect x="865.35" y="418" width="1.9" height="75.5" fill="#3dd35c"/></svg>
<div class="a" style="left:844.35px;top:434.1px;width:8.4px;height:16.2px;background:linear-gradient(180deg,#d8d8d8 0%,#cfcfcf 17%,#a4a4a4 20%,#9c9c9c 48%,#5e5e5e 50%,#cbcbcb 54%,#c4c4c4 86%,#7c7c7c 90%,#6a6a6a 100%);border-radius:1px;box-shadow:0 1px 1px rgba(0,0,0,.45);"></div>
<div class="a" style="left:841.55px;top:505.7px;width:13.7px;height:7.1px;background:#585858;border-radius:1.5px;"></div>
<div class="a" style="left:841.55px;top:505.7px;width:13.7px;height:7.1px;font-size:6px;color:#e4e4e4;font-weight:normal;text-align:center;line-height:7.1px;white-space:nowrap;-webkit-text-stroke:.15px #e4e4e4;">M</div>
<div class="a" style="left:858.45px;top:505.7px;width:14.1px;height:7.1px;background:#585858;border-radius:1.5px;"></div>
<div class="a" style="left:858.45px;top:505.7px;width:14.1px;height:7.1px;font-size:6px;color:#e4e4e4;font-weight:normal;text-align:center;line-height:7.1px;white-space:nowrap;-webkit-text-stroke:.15px #e4e4e4;">S</div>
<div class="a" style="left:838.75px;top:523.2px;width:37.35px;height:21.8px;background:#1bbfc0;"></div>
<div class="a" style="left:838.45px;top:523.2px;width:0.6px;height:21.8px;background:rgba(0,0,0,.18);"></div>
<div class="a" style="left:838.75px;top:524.6px;width:37.35px;height:7.2px;font-size:5.5px;color:#ffffff;font-weight:normal;text-align:center;line-height:7.2px;white-space:nowrap;letter-spacing:0px;-webkit-text-stroke-width:0;">Ocean</div>
<div class="a" style="left:838.75px;top:531px;width:37.35px;height:7.2px;font-size:5.5px;color:#ffffff;font-weight:normal;text-align:center;line-height:7.2px;white-space:nowrap;letter-spacing:0px;-webkit-text-stroke-width:0;">Bass</div>
<div class="a" style="left:875.5px;top:249px;width:1.2px;height:266.3px;background:#3d3d3d;"></div>
<div class="a" style="left:879.1px;top:255px;width:31px;height:6.6px;background:#2d8c3a;border-radius:2px;"></div>
<div class="a" style="left:879.1px;top:255px;width:31px;height:6.6px;font-size:5.5px;color:#e8f5e8;font-weight:normal;text-align:center;line-height:6.6px;white-space:nowrap;letter-spacing:0px;">Sampler</div>
<div class="a" style="left:878.9px;top:266px;width:31.4px;height:44px;background:#454545;border-radius:1px;"></div>
<div class="a" style="left:878.9px;top:266.7px;width:31.4px;height:7.1px;background:#1f5fc2;border-radius:2.5px;"></div>
<div class="a" style="left:878.9px;top:266.7px;width:31.4px;height:6.9px;font-size:5.5px;color:#eef2ff;font-weight:normal;text-align:center;line-height:6.9px;white-space:nowrap;letter-spacing:0px;overflow:hidden;-webkit-text-stroke-width:.05px;">Cnsl EQ</div>
<div class="a" style="left:878.9px;top:321.4px;width:31.4px;height:6.6px;background:#555555;border-radius:1.5px;"></div>
<div class="a" style="left:878.9px;top:321.4px;width:31.4px;height:6.6px;font-size:6px;color:#d8d8d8;font-weight:normal;text-align:center;line-height:6.6px;white-space:nowrap;letter-spacing:-.05px;">Surround</div>
<div class="a" style="left:878.9px;top:331.6px;width:31.4px;height:7.5px;background:#272727;border-radius:1px;"></div>
<div class="a" style="left:878.9px;top:331.6px;width:31.4px;height:7.5px;font-size:5.4px;color:#e2bf45;font-weight:normal;text-align:center;line-height:7.5px;white-space:nowrap;letter-spacing:0px;overflow:hidden;">4: Drums</div>
<svg class="a" style="left:876.1px;top:340px" width="37" height="22" viewBox="876.1 340 37 22"><circle cx="884.75" cy="358.55" r=".55" fill="#8c8c8c"/><circle cx="882.05" cy="353.89" r=".55" fill="#8c8c8c"/><circle cx="882.05" cy="348.51" r=".55" fill="#8c8c8c"/><circle cx="884.75" cy="343.85" r=".55" fill="#8c8c8c"/><circle cx="889.41" cy="341.15" r=".55" fill="#8c8c8c"/><circle cx="894.79" cy="341.15" r=".55" fill="#8c8c8c"/><circle cx="899.45" cy="343.85" r=".55" fill="#8c8c8c"/><circle cx="902.15" cy="348.51" r=".55" fill="#8c8c8c"/><circle cx="902.15" cy="353.89" r=".55" fill="#8c8c8c"/><circle cx="892.1" cy="351.2" r="8.3" fill="#272727"/><circle cx="892.1" cy="351.2" r="8.3" fill="none" stroke="#202020" stroke-width=".6"/><path d="M887.6 345.2L896.6 345.2L892.1 352.2Z" fill="#2f6e3d"/><circle cx="892.1" cy="345.2" r="1.1" fill="#3ddc5c"/><line x1="906.1" y1="343.3" x2="906.1" y2="359.7" stroke="#1e1e1e" stroke-width="1"/><circle cx="906.1" cy="358.6" r="1.4" fill="#3ddc5c"/></svg>
<div class="a" style="left:878.9px;top:362.9px;width:15.1px;height:8.2px;background:#262626;border-radius:1px;"></div>
<div class="a" style="left:878.9px;top:362.9px;width:15.1px;height:8.2px;font-size:5.6px;color:#e6e6e6;font-weight:normal;text-align:center;line-height:8.2px;white-space:nowrap;letter-spacing:0px;">0.0</div>
<div class="a" style="left:895.1px;top:362.9px;width:15.2px;height:8.2px;background:#262626;border-radius:1px;"></div>
<div class="a" style="left:895.1px;top:362.9px;width:15.2px;height:8.2px;font-size:5.6px;color:#4ee06a;font-weight:normal;text-align:center;line-height:8.2px;white-space:nowrap;letter-spacing:0px;">-6.6</div>
<svg class="a" style="left:876.1px;top:376px" width="37" height="122" viewBox="876.1 376 37 122"><rect x="879.7" y="382" width="5" height=".7" fill="#7a7a7a"/><rect x="882.4" y="386.67" width="2.2" height=".6" fill="#666"/><rect x="882.4" y="391.33" width="2.2" height=".6" fill="#666"/><rect x="879.7" y="396" width="5" height=".7" fill="#7a7a7a"/><rect x="882.4" y="400.8" width="2.2" height=".6" fill="#666"/><rect x="882.4" y="405.6" width="2.2" height=".6" fill="#666"/><rect x="879.7" y="410.4" width="5" height=".7" fill="#7a7a7a"/><rect x="882.4" y="415.07" width="2.2" height=".6" fill="#666"/><rect x="882.4" y="419.73" width="2.2" height=".6" fill="#666"/><rect x="879.7" y="424.4" width="5" height=".7" fill="#7a7a7a"/><rect x="882.4" y="429.27" width="2.2" height=".6" fill="#666"/><rect x="882.4" y="434.13" width="2.2" height=".6" fill="#666"/><rect x="879.7" y="439" width="5" height=".7" fill="#7a7a7a"/><rect x="882.4" y="442" width="2.2" height=".6" fill="#666"/><rect x="882.4" y="445" width="2.2" height=".6" fill="#666"/><rect x="879.7" y="448" width="5" height=".7" fill="#7a7a7a"/><rect x="882.4" y="452" width="2.2" height=".6" fill="#666"/><rect x="882.4" y="456" width="2.2" height=".6" fill="#666"/><rect x="879.7" y="460" width="5" height=".7" fill="#7a7a7a"/><rect x="882.4" y="463" width="2.2" height=".6" fill="#666"/><rect x="882.4" y="466" width="2.2" height=".6" fill="#666"/><rect x="879.7" y="469" width="5" height=".7" fill="#7a7a7a"/><rect x="882.4" y="472.2" width="2.2" height=".6" fill="#666"/><rect x="882.4" y="475.4" width="2.2" height=".6" fill="#666"/><rect x="879.7" y="478.6" width="5" height=".7" fill="#7a7a7a"/><rect x="882.4" y="480.27" width="2.2" height=".6" fill="#666"/><rect x="882.4" y="481.93" width="2.2" height=".6" fill="#666"/><rect x="879.7" y="483.6" width="5" height=".7" fill="#7a7a7a"/><rect x="882.4" y="484.57" width="2.2" height=".6" fill="#666"/><rect x="882.4" y="485.53" width="2.2" height=".6" fill="#666"/><rect x="879.7" y="486.5" width="5" height=".7" fill="#7a7a7a"/><rect x="882.4" y="488.33" width="2.2" height=".6" fill="#666"/><rect x="882.4" y="490.17" width="2.2" height=".6" fill="#666"/><rect x="879.7" y="492" width="5" height=".7" fill="#7a7a7a"/><rect x="879.5" y="410" width="5.5" height="1.2" fill="#e0e0e0"/><rect x="885.85" y="381" width="1.1" height="112.5" fill="#1c1c1c"/><rect x="897.5" y="381.6" width="1.2" height=".7" fill="#6a6a6a"/><text x="897.3" y="382.9" font-size="3.7" fill="#9a9a9a" text-anchor="end" font-family="Liberation Sans">0</text><rect x="897.5" y="389.55" width="1.2" height=".7" fill="#6a6a6a"/><text x="897.3" y="390.85" font-size="3.7" fill="#9a9a9a" text-anchor="end" font-family="Liberation Sans">3</text><rect x="897.5" y="397.5" width="1.2" height=".7" fill="#6a6a6a"/><text x="897.3" y="398.8" font-size="3.7" fill="#9a9a9a" text-anchor="end" font-family="Liberation Sans">6</text><rect x="897.5" y="405.45" width="1.2" height=".7" fill="#6a6a6a"/><text x="897.3" y="406.75" font-size="3.7" fill="#9a9a9a" text-anchor="end" font-family="Liberation Sans">9</text><rect x="897.5" y="413.4" width="1.2" height=".7" fill="#6a6a6a"/><text x="897.3" y="414.7" font-size="3.7" fill="#9a9a9a" text-anchor="end" font-family="Liberation Sans">12</text><rect x="897.5" y="421.35" width="1.2" height=".7" fill="#6a6a6a"/><text x="897.3" y="422.65" font-size="3.7" fill="#9a9a9a" text-anchor="end" font-family="Liberation Sans">15</text><rect x="897.5" y="429.3" width="1.2" height=".7" fill="#6a6a6a"/><text x="897.3" y="430.6" font-size="3.7" fill="#9a9a9a" text-anchor="end" font-family="Liberation Sans">18</text><rect x="897.5" y="437.25" width="1.2" height=".7" fill="#6a6a6a"/><text x="897.3" y="438.55" font-size="3.7" fill="#9a9a9a" text-anchor="end" font-family="Liberation Sans">21</text><rect x="897.5" y="445.2" width="1.2" height=".7" fill="#6a6a6a"/><text x="897.3" y="446.5" font-size="3.7" fill="#9a9a9a" text-anchor="end" font-family="Liberation Sans">24</text><rect x="897.5" y="453.15" width="1.2" height=".7" fill="#6a6a6a"/><text x="897.3" y="454.45" font-size="3.7" fill="#9a9a9a" text-anchor="end" font-family="Liberation Sans">30</text><rect x="897.5" y="461.1" width="1.2" height=".7" fill="#6a6a6a"/><text x="897.3" y="462.4" font-size="3.7" fill="#9a9a9a" text-anchor="end" font-family="Liberation Sans">35</text><rect x="897.5" y="469.05" width="1.2" height=".7" fill="#6a6a6a"/><text x="897.3" y="470.35" font-size="3.7" fill="#9a9a9a" text-anchor="end" font-family="Liberation Sans">40</text><rect x="897.5" y="477" width="1.2" height=".7" fill="#6a6a6a"/><text x="897.3" y="478.3" font-size="3.7" fill="#9a9a9a" text-anchor="end" font-family="Liberation Sans">45</text><rect x="897.5" y="484.95" width="1.2" height=".7" fill="#6a6a6a"/><text x="897.3" y="486.25" font-size="3.7" fill="#9a9a9a" text-anchor="end" font-family="Liberation Sans">50</text><rect x="897.5" y="492.9" width="1.2" height=".7" fill="#6a6a6a"/><text x="897.3" y="494.2" font-size="3.7" fill="#9a9a9a" text-anchor="end" font-family="Liberation Sans">60</text><rect x="899.7" y="381" width="5.4" height="112.5" fill="#2a2a2a"/><rect x="900.2" y="430.5" width="1.9" height="63" fill="#3dd35c"/><rect x="902.7" y="424.5" width="1.9" height="69" fill="#3dd35c"/></svg>
<div class="a" style="left:881.7px;top:402px;width:8.4px;height:16.4px;background:linear-gradient(180deg,#d8d8d8 0%,#cfcfcf 17%,#a4a4a4 20%,#9c9c9c 48%,#5e5e5e 50%,#cbcbcb 54%,#c4c4c4 86%,#7c7c7c 90%,#6a6a6a 100%);border-radius:1px;box-shadow:0 1px 1px rgba(0,0,0,.45);"></div>
<div class="a" style="left:878.9px;top:505.7px;width:13.7px;height:7.1px;background:#585858;border-radius:1.5px;"></div>
<div class="a" style="left:878.9px;top:505.7px;width:13.7px;height:7.1px;font-size:6px;color:#e4e4e4;font-weight:normal;text-align:center;line-height:7.1px;white-space:nowrap;-webkit-text-stroke:.15px #e4e4e4;">M</div>
<div class="a" style="left:895.8px;top:505.7px;width:14.1px;height:7.1px;background:#585858;border-radius:1.5px;"></div>
<div class="a" style="left:895.8px;top:505.7px;width:14.1px;height:7.1px;font-size:6px;color:#e4e4e4;font-weight:normal;text-align:center;line-height:7.1px;white-space:nowrap;-webkit-text-stroke:.15px #e4e4e4;">S</div>
<div class="a" style="left:876.1px;top:523.2px;width:37.35px;height:21.8px;background:#1a9fd2;"></div>
<div class="a" style="left:875.8px;top:523.2px;width:0.6px;height:21.8px;background:rgba(0,0,0,.18);"></div>
<div class="a" style="left:876.1px;top:524.6px;width:37.35px;height:7.2px;font-size:5.5px;color:#ffffff;font-weight:normal;text-align:center;line-height:7.2px;white-space:nowrap;letter-spacing:0px;-webkit-text-stroke-width:0;">African</div>
<div class="a" style="left:876.1px;top:531px;width:37.35px;height:7.2px;font-size:5.5px;color:#ffffff;font-weight:normal;text-align:center;line-height:7.2px;white-space:nowrap;letter-spacing:0px;-webkit-text-stroke-width:0;">Kit</div>
<div class="a" style="left:912.85px;top:249px;width:1.2px;height:266.3px;background:#3d3d3d;"></div>
<div class="a" style="left:916.45px;top:255px;width:31px;height:6.6px;background:#2d8c3a;border-radius:2px;"></div>
<div class="a" style="left:916.45px;top:255px;width:31px;height:6.6px;font-size:5.5px;color:#e8f5e8;font-weight:normal;text-align:center;line-height:6.6px;white-space:nowrap;letter-spacing:0px;">Alchemy</div>
<div class="a" style="left:916.25px;top:266px;width:31.4px;height:44px;background:#454545;border-radius:1px;"></div>
<div class="a" style="left:916.25px;top:266.7px;width:31.4px;height:7.1px;background:#1f5fc2;border-radius:2.5px;"></div>
<div class="a" style="left:916.25px;top:266.7px;width:31.4px;height:6.9px;font-size:5.5px;color:#eef2ff;font-weight:normal;text-align:center;line-height:6.9px;white-space:nowrap;letter-spacing:0px;overflow:hidden;-webkit-text-stroke-width:.05px;">Cnsl EQ</div>
<div class="a" style="left:916.25px;top:274.8px;width:31.4px;height:7.1px;background:#1f5fc2;border-radius:2.5px;"></div>
<div class="a" style="left:916.25px;top:274.8px;width:31.4px;height:6.9px;font-size:5.5px;color:#eef2ff;font-weight:normal;text-align:center;line-height:6.9px;white-space:nowrap;letter-spacing:0px;overflow:hidden;-webkit-text-stroke-width:.05px;">Channel EQ</div>
<div class="a" style="left:916.25px;top:282.9px;width:31.4px;height:7.1px;background:#1f5fc2;border-radius:2.5px;"></div>
<div class="a" style="left:916.25px;top:282.9px;width:31.4px;height:6.9px;font-size:5.5px;color:#eef2ff;font-weight:normal;text-align:center;line-height:6.9px;white-space:nowrap;letter-spacing:0px;overflow:hidden;-webkit-text-stroke-width:.05px;">Step FX</div>
<div class="a" style="left:916.25px;top:291px;width:31.4px;height:7.1px;background:#1f5fc2;border-radius:2.5px;"></div>
<div class="a" style="left:916.25px;top:291px;width:31.4px;height:6.9px;font-size:5.5px;color:#eef2ff;font-weight:normal;text-align:center;line-height:6.9px;white-space:nowrap;letter-spacing:0px;overflow:hidden;-webkit-text-stroke-width:.05px;">Compressor</div>
<div class="a" style="left:916.25px;top:321.4px;width:31.4px;height:6.6px;background:#555555;border-radius:1.5px;"></div>
<div class="a" style="left:916.25px;top:321.4px;width:31.4px;height:6.6px;font-size:6px;color:#d8d8d8;font-weight:normal;text-align:center;line-height:6.6px;white-space:nowrap;letter-spacing:-.05px;">Surround</div>
<div class="a" style="left:916.25px;top:331.6px;width:31.4px;height:7.5px;background:#272727;border-radius:1px;"></div>
<div class="a" style="left:916.25px;top:331.6px;width:31.4px;height:7.5px;font-size:5.4px;color:#e2bf45;font-weight:normal;text-align:center;line-height:7.5px;white-space:nowrap;letter-spacing:0px;overflow:hidden;">4: Drums</div>
<svg class="a" style="left:913.45px;top:340px" width="37" height="22" viewBox="913.45 340 37 22"><circle cx="922.1" cy="358.55" r=".55" fill="#8c8c8c"/><circle cx="919.4" cy="353.89" r=".55" fill="#8c8c8c"/><circle cx="919.4" cy="348.51" r=".55" fill="#8c8c8c"/><circle cx="922.1" cy="343.85" r=".55" fill="#8c8c8c"/><circle cx="926.76" cy="341.15" r=".55" fill="#8c8c8c"/><circle cx="932.14" cy="341.15" r=".55" fill="#8c8c8c"/><circle cx="936.8" cy="343.85" r=".55" fill="#8c8c8c"/><circle cx="939.5" cy="348.51" r=".55" fill="#8c8c8c"/><circle cx="939.5" cy="353.89" r=".55" fill="#8c8c8c"/><circle cx="929.45" cy="351.2" r="8.3" fill="#272727"/><circle cx="929.45" cy="351.2" r="8.3" fill="none" stroke="#202020" stroke-width=".6"/><path d="M924.95 345.2L933.95 345.2L929.45 352.2Z" fill="#2f6e3d"/><circle cx="929.45" cy="345.2" r="1.1" fill="#3ddc5c"/><line x1="943.45" y1="343.3" x2="943.45" y2="359.7" stroke="#1e1e1e" stroke-width="1"/><circle cx="943.45" cy="358.6" r="1.4" fill="#3ddc5c"/></svg>
<div class="a" style="left:916.25px;top:362.9px;width:15.1px;height:8.2px;background:#262626;border-radius:1px;"></div>
<div class="a" style="left:916.25px;top:362.9px;width:15.1px;height:8.2px;font-size:5.6px;color:#e6e6e6;font-weight:normal;text-align:center;line-height:8.2px;white-space:nowrap;letter-spacing:0px;">0.0</div>
<div class="a" style="left:932.45px;top:362.9px;width:15.2px;height:8.2px;background:#262626;border-radius:1px;"></div>
<div class="a" style="left:932.45px;top:362.9px;width:15.2px;height:8.2px;font-size:5.6px;color:#4ee06a;font-weight:normal;text-align:center;line-height:8.2px;white-space:nowrap;letter-spacing:0px;">-6.6</div>
<svg class="a" style="left:913.45px;top:376px" width="37" height="122" viewBox="913.45 376 37 122"><rect x="917.05" y="382" width="5" height=".7" fill="#7a7a7a"/><rect x="919.75" y="386.67" width="2.2" height=".6" fill="#666"/><rect x="919.75" y="391.33" width="2.2" height=".6" fill="#666"/><rect x="917.05" y="396" width="5" height=".7" fill="#7a7a7a"/><rect x="919.75" y="400.8" width="2.2" height=".6" fill="#666"/><rect x="919.75" y="405.6" width="2.2" height=".6" fill="#666"/><rect x="917.05" y="410.4" width="5" height=".7" fill="#7a7a7a"/><rect x="919.75" y="415.07" width="2.2" height=".6" fill="#666"/><rect x="919.75" y="419.73" width="2.2" height=".6" fill="#666"/><rect x="917.05" y="424.4" width="5" height=".7" fill="#7a7a7a"/><rect x="919.75" y="429.27" width="2.2" height=".6" fill="#666"/><rect x="919.75" y="434.13" width="2.2" height=".6" fill="#666"/><rect x="917.05" y="439" width="5" height=".7" fill="#7a7a7a"/><rect x="919.75" y="442" width="2.2" height=".6" fill="#666"/><rect x="919.75" y="445" width="2.2" height=".6" fill="#666"/><rect x="917.05" y="448" width="5" height=".7" fill="#7a7a7a"/><rect x="919.75" y="452" width="2.2" height=".6" fill="#666"/><rect x="919.75" y="456" width="2.2" height=".6" fill="#666"/><rect x="917.05" y="460" width="5" height=".7" fill="#7a7a7a"/><rect x="919.75" y="463" width="2.2" height=".6" fill="#666"/><rect x="919.75" y="466" width="2.2" height=".6" fill="#666"/><rect x="917.05" y="469" width="5" height=".7" fill="#7a7a7a"/><rect x="919.75" y="472.2" width="2.2" height=".6" fill="#666"/><rect x="919.75" y="475.4" width="2.2" height=".6" fill="#666"/><rect x="917.05" y="478.6" width="5" height=".7" fill="#7a7a7a"/><rect x="919.75" y="480.27" width="2.2" height=".6" fill="#666"/><rect x="919.75" y="481.93" width="2.2" height=".6" fill="#666"/><rect x="917.05" y="483.6" width="5" height=".7" fill="#7a7a7a"/><rect x="919.75" y="484.57" width="2.2" height=".6" fill="#666"/><rect x="919.75" y="485.53" width="2.2" height=".6" fill="#666"/><rect x="917.05" y="486.5" width="5" height=".7" fill="#7a7a7a"/><rect x="919.75" y="488.33" width="2.2" height=".6" fill="#666"/><rect x="919.75" y="490.17" width="2.2" height=".6" fill="#666"/><rect x="917.05" y="492" width="5" height=".7" fill="#7a7a7a"/><rect x="916.85" y="410" width="5.5" height="1.2" fill="#e0e0e0"/><rect x="923.2" y="381" width="1.1" height="112.5" fill="#1c1c1c"/><rect x="934.85" y="381.6" width="1.2" height=".7" fill="#6a6a6a"/><text x="934.65" y="382.9" font-size="3.7" fill="#9a9a9a" text-anchor="end" font-family="Liberation Sans">0</text><rect x="934.85" y="389.55" width="1.2" height=".7" fill="#6a6a6a"/><text x="934.65" y="390.85" font-size="3.7" fill="#9a9a9a" text-anchor="end" font-family="Liberation Sans">3</text><rect x="934.85" y="397.5" width="1.2" height=".7" fill="#6a6a6a"/><text x="934.65" y="398.8" font-size="3.7" fill="#9a9a9a" text-anchor="end" font-family="Liberation Sans">6</text><rect x="934.85" y="405.45" width="1.2" height=".7" fill="#6a6a6a"/><text x="934.65" y="406.75" font-size="3.7" fill="#9a9a9a" text-anchor="end" font-family="Liberation Sans">9</text><rect x="934.85" y="413.4" width="1.2" height=".7" fill="#6a6a6a"/><text x="934.65" y="414.7" font-size="3.7" fill="#9a9a9a" text-anchor="end" font-family="Liberation Sans">12</text><rect x="934.85" y="421.35" width="1.2" height=".7" fill="#6a6a6a"/><text x="934.65" y="422.65" font-size="3.7" fill="#9a9a9a" text-anchor="end" font-family="Liberation Sans">15</text><rect x="934.85" y="429.3" width="1.2" height=".7" fill="#6a6a6a"/><text x="934.65" y="430.6" font-size="3.7" fill="#9a9a9a" text-anchor="end" font-family="Liberation Sans">18</text><rect x="934.85" y="437.25" width="1.2" height=".7" fill="#6a6a6a"/><text x="934.65" y="438.55" font-size="3.7" fill="#9a9a9a" text-anchor="end" font-family="Liberation Sans">21</text><rect x="934.85" y="445.2" width="1.2" height=".7" fill="#6a6a6a"/><text x="934.65" y="446.5" font-size="3.7" fill="#9a9a9a" text-anchor="end" font-family="Liberation Sans">24</text><rect x="934.85" y="453.15" width="1.2" height=".7" fill="#6a6a6a"/><text x="934.65" y="454.45" font-size="3.7" fill="#9a9a9a" text-anchor="end" font-family="Liberation Sans">30</text><rect x="934.85" y="461.1" width="1.2" height=".7" fill="#6a6a6a"/><text x="934.65" y="462.4" font-size="3.7" fill="#9a9a9a" text-anchor="end" font-family="Liberation Sans">35</text><rect x="934.85" y="469.05" width="1.2" height=".7" fill="#6a6a6a"/><text x="934.65" y="470.35" font-size="3.7" fill="#9a9a9a" text-anchor="end" font-family="Liberation Sans">40</text><rect x="934.85" y="477" width="1.2" height=".7" fill="#6a6a6a"/><text x="934.65" y="478.3" font-size="3.7" fill="#9a9a9a" text-anchor="end" font-family="Liberation Sans">45</text><rect x="934.85" y="484.95" width="1.2" height=".7" fill="#6a6a6a"/><text x="934.65" y="486.25" font-size="3.7" fill="#9a9a9a" text-anchor="end" font-family="Liberation Sans">50</text><rect x="934.85" y="492.9" width="1.2" height=".7" fill="#6a6a6a"/><text x="934.65" y="494.2" font-size="3.7" fill="#9a9a9a" text-anchor="end" font-family="Liberation Sans">60</text><rect x="937.05" y="381" width="5.4" height="112.5" fill="#2a2a2a"/></svg>
<div class="a" style="left:919.05px;top:402px;width:8.4px;height:16.4px;background:linear-gradient(180deg,#d8d8d8 0%,#cfcfcf 17%,#a4a4a4 20%,#9c9c9c 48%,#5e5e5e 50%,#cbcbcb 54%,#c4c4c4 86%,#7c7c7c 90%,#6a6a6a 100%);border-radius:1px;box-shadow:0 1px 1px rgba(0,0,0,.45);"></div>
<div class="a" style="left:916.25px;top:505.7px;width:13.7px;height:7.1px;background:#585858;border-radius:1.5px;"></div>
<div class="a" style="left:916.25px;top:505.7px;width:13.7px;height:7.1px;font-size:6px;color:#e4e4e4;font-weight:normal;text-align:center;line-height:7.1px;white-space:nowrap;-webkit-text-stroke:.15px #e4e4e4;">M</div>
<div class="a" style="left:933.15px;top:505.7px;width:14.1px;height:7.1px;background:#585858;border-radius:1.5px;"></div>
<div class="a" style="left:933.15px;top:505.7px;width:14.1px;height:7.1px;font-size:6px;color:#e4e4e4;font-weight:normal;text-align:center;line-height:7.1px;white-space:nowrap;-webkit-text-stroke:.15px #e4e4e4;">S</div>
<div class="a" style="left:913.45px;top:523.2px;width:4.55px;height:21.8px;background:#2388d3;"></div>
<div class="a" style="left:913.15px;top:523.2px;width:0.6px;height:21.8px;background:rgba(0,0,0,.18);"></div>
<div class="a" style="left:913.45px;top:524.6px;width:37.35px;height:7.2px;font-size:5.5px;color:#ffffff;font-weight:normal;text-align:center;line-height:7.2px;white-space:nowrap;letter-spacing:0px;-webkit-text-stroke-width:0;"></div>
<div class="a" style="left:913.45px;top:531px;width:37.35px;height:7.2px;font-size:5.5px;color:#ffffff;font-weight:normal;text-align:center;line-height:7.2px;white-space:nowrap;letter-spacing:0px;-webkit-text-stroke-width:0;"></div>
<div class="a" style="left:129.5px;top:515.3px;width:788.5px;height:7.8px;background:#474747;"></div>
<div class="a" style="left:158.5px;top:514px;width:6px;height:8px;font-size:8px;color:#cfcfcf;font-weight:normal;text-align:center;line-height:8px;white-space:nowrap;">›</div>
<div class="a" style="left:101px;top:248.5px;width:817px;height:1px;background:#2a2a2a;"></div>
<div class="a" style="left:101px;top:523px;width:28.5px;height:22px;background:#4b4b4b;"></div>
</div>
</body></html>
